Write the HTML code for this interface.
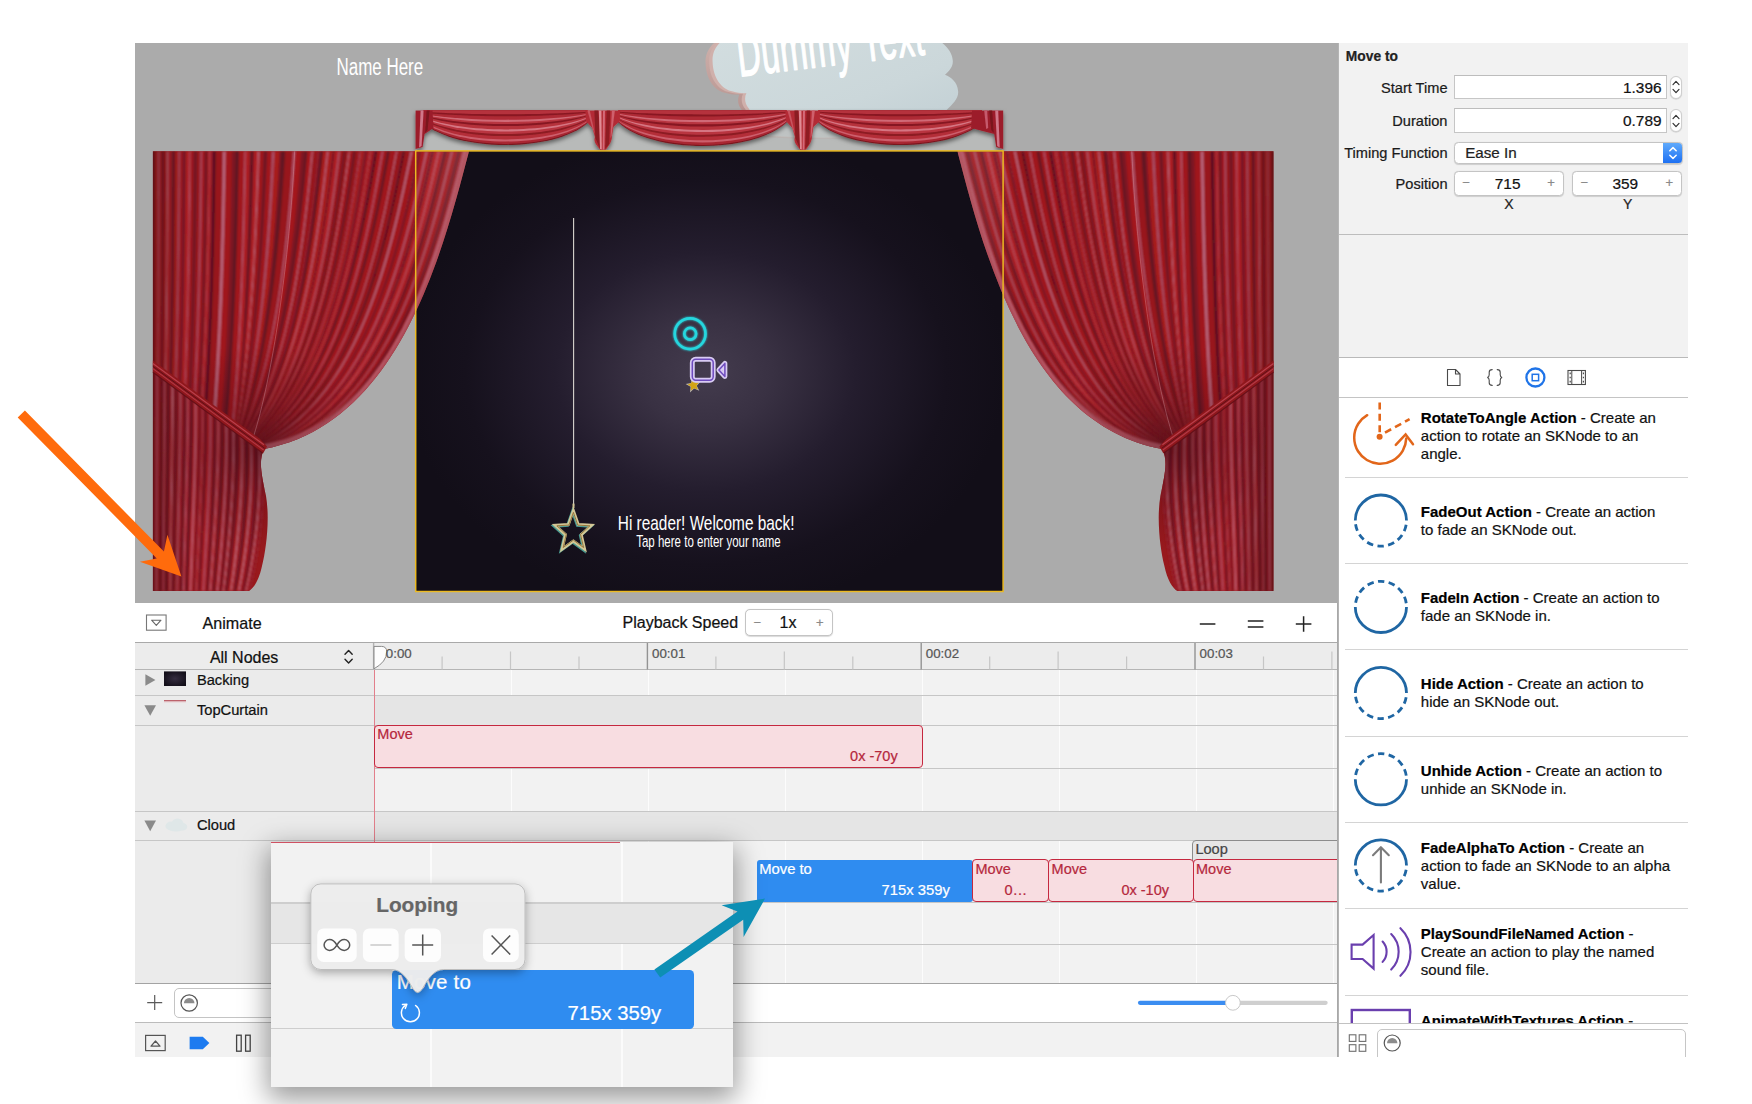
<!DOCTYPE html>
<html lang="en"><head><meta charset="utf-8"><title>Scene Editor</title>
<style>
html,body{margin:0;padding:0;background:#fff;}
body{width:1752px;height:1104px;position:relative;overflow:hidden;font-family:"Liberation Sans",sans-serif;color:#111;-webkit-font-smoothing:antialiased;}
div,span,svg{position:absolute;box-sizing:border-box;}
span{white-space:pre;line-height:1;-webkit-text-stroke:.22px currentColor;}
.it{-webkit-text-stroke:.2px currentColor;}
#scene{left:135px;top:43px;width:1203px;height:560px;background:#ababab;overflow:hidden;}
#insp{left:1338px;top:43px;width:350px;height:314px;background:#f2f2f2;border-left:1px solid #b4b4b4;}
#lib{left:1338px;top:357px;width:350px;height:700px;background:#fff;border-left:1px solid #b4b4b4;border-top:1px solid #b9b9b9;overflow:hidden;}
#tl{left:135px;top:603px;width:1203px;height:454px;background:#f2f2f2;overflow:hidden;}
.lbl{font-size:14.6px;color:#1a1a1a;text-align:right;}
.fld{background:#fff;border:1px solid #c6c6c6;border-top-color:#bdbdbd;}
.val{font-size:15.4px;color:#111;}
.stp{background:#fff;border:1px solid #cfcfcf;border-radius:6px;box-shadow:0 .5px 1px rgba(0,0,0,.18);}
.rbox{background:#fff;border:1px solid #c4c4c4;border-radius:4.5px;box-shadow:0 .5px 1px rgba(0,0,0,.15);}
.pm{font-size:13px;color:#8a8a8a;}
.it{font-size:15px;line-height:18px;color:#111;white-space:normal;}
.it b{font-weight:bold;color:#000;}
.sep{height:1px;background:#d4d4d4;left:6px;right:0;}
.row{left:0;width:1203px;}
.rl{font-size:14.7px;color:#111;}
.clip{background:#f8dde1;border:1.3px solid #c5283f;border-radius:4px;}
.ct{font-size:14.5px;color:#b5283d;}
.hw{font-style:italic;color:#fff;transform-origin:0 50%;}
</style></head>
<body>
<div id="scene"><svg style="left:0;top:0" width="1203" height="560" viewBox="135 43 1203 560">
<defs>
<radialGradient id="bkg" gradientUnits="userSpaceOnUse" cx="706" cy="372" r="300" gradientTransform="translate(706 372) scale(1 .8) translate(-706 -372)">
<stop offset="0" stop-color="#443c4e"/><stop offset=".22" stop-color="#393143"/><stop offset=".5" stop-color="#241d2e"/><stop offset=".8" stop-color="#16111d"/><stop offset="1" stop-color="#120e18"/></radialGradient>
<filter id="soft" x="-5%" y="-5%" width="110%" height="110%"><feGaussianBlur stdDeviation=".95"/></filter>
<filter id="soft2" x="-5%" y="-5%" width="110%" height="110%"><feGaussianBlur stdDeviation=".4"/></filter>
<filter id="vsh" x="-5%" y="-20%" width="110%" height="160%"><feDropShadow dx="0" dy="2.5" stdDeviation="2.2" flood-color="#000" flood-opacity=".5"/></filter>
<filter id="glow" x="-50%" y="-50%" width="200%" height="200%"><feGaussianBlur stdDeviation="1.2" result="b"/><feMerge><feMergeNode in="b"/><feMergeNode in="SourceGraphic"/></feMerge></filter>
<linearGradient id="clx" x1="0" y1="0" x2="0" y2="1"><stop offset="0" stop-color="#cdb0ab"/><stop offset="1" stop-color="#b08a86"/></linearGradient>
<linearGradient id="cl" x1="0" y1="0" x2="1" y2="1"><stop offset="0" stop-color="#d2dddf"/><stop offset=".6" stop-color="#cbd7da"/><stop offset="1" stop-color="#c0ced3"/></linearGradient>
<linearGradient id="fadeL" gradientUnits="userSpaceOnUse" x1="152" y1="0" x2="470" y2="0"><stop offset="0" stop-color="#000" stop-opacity=".22"/><stop offset=".12" stop-color="#000" stop-opacity="0"/><stop offset=".8" stop-color="#fff" stop-opacity="0"/><stop offset="1" stop-color="#fff" stop-opacity=".12"/></linearGradient>
<radialGradient id="knot"><stop offset="0" stop-color="#2a0410" stop-opacity=".5"/><stop offset=".45" stop-color="#2a0410" stop-opacity=".2"/><stop offset="1" stop-color="#2a0410" stop-opacity="0"/></radialGradient>
<clipPath id="ccl"><path id="cbody" d="M152.9 151.2 L469 151.2 C443 250 400 424 264 449 C258 462 262 476 266 496 C270 520 266 550 262 566 C259 580 254 588 249 591 L152.9 591 Z"/></clipPath>
</defs>
<rect x="415.5" y="150.6" width="587.7" height="441" fill="url(#bkg)"/>
<g>
<path d="M723 40 C715 46 712 54 712.6 62 C713 78 722 90 733 91.5 C738 93 743 93.5 746.4 93 C744 98 745 104 748.5 108 C751 112 754 118 756 122 L758 134 C800 140 900 138 935 128 C945 122 947 114 946.6 110 C953 104 959 98 958.1 90.9 C957.5 82 951 77 945 74.7 C950 70 953.5 66 952.7 60 C952 52 946 45 938 40 Z" transform="translate(-7 1.4)" fill="url(#clx)"/>
<path d="M723 40 C715 46 712 54 712.6 62 C713 78 722 90 733 91.5 C738 93 743 93.5 746.4 93 C744 98 745 104 748.5 108 C751 112 754 118 756 122 L758 134 C800 140 900 138 935 128 C945 122 947 114 946.6 110 C953 104 959 98 958.1 90.9 C957.5 82 951 77 945 74.7 C950 70 953.5 66 952.7 60 C952 52 946 45 938 40 Z" transform="translate(-3.4 .7)" fill="#d0b0ab"/>
<path d="M723 40 C715 46 712 54 712.6 62 C713 78 722 90 733 91.5 C738 93 743 93.5 746.4 93 C744 98 745 104 748.5 108 C751 112 754 118 756 122 L758 134 C800 140 900 138 935 128 C945 122 947 114 946.6 110 C953 104 959 98 958.1 90.9 C957.5 82 951 77 945 74.7 C950 70 953.5 66 952.7 60 C952 52 946 45 938 40 Z" fill="url(#cl)"/>
</g>
<text transform="translate(739.4 76.4) rotate(-6.7) scale(.525 1)" font-family="Liberation Sans, sans-serif" font-size="62" fill="#fff" stroke="#fff" stroke-width="1.5" stroke-linejoin="round" letter-spacing="1.5">Dummy Text</text>
<text transform="translate(336.5 75.4) scale(.684 1)" font-family="Liberation Sans, sans-serif" font-size="24.8" fill="#fff">Name Here</text>
<rect x="415.6" y="110.5" width="587.6" height="40.2" fill="#bcbebd" opacity=".8"/>
<g filter="url(#soft2)"><g filter="url(#vsh)"><path d="M423.0 110.5 L423.0 122.5 C456.0 152.5 555.0 152.5 588.0 122.5 L588.0 110.5 Z" fill="#7a171f"/><path d="M423.0 110.5 L423.0 122.1 C456.4 151.2 554.6 151.2 588.0 122.1 L588.0 110.5 Z" fill="#a92833"/><path d="M423.0 110.5 L423.0 121.3 C457.3 148.3 553.7 148.3 588.0 121.3 L588.0 110.5 Z" fill="#cc5f6d"/><path d="M423.0 110.5 L423.0 120.6 C458.1 145.8 552.9 145.8 588.0 120.6 L588.0 110.5 Z" fill="#b42d38"/><path d="M423.0 110.5 L423.0 119.4 C459.4 141.6 551.6 141.6 588.0 119.4 L588.0 110.5 Z" fill="#8c1b24"/><path d="M423.0 110.5 L423.0 118.7 C460.2 139.1 550.8 139.1 588.0 118.7 L588.0 110.5 Z" fill="#b93541"/><path d="M423.0 110.5 L423.0 117.8 C461.1 136.1 549.9 136.1 588.0 117.8 L588.0 110.5 Z" fill="#d57683"/><path d="M423.0 110.5 L423.0 117.1 C461.9 133.6 549.1 133.6 588.0 117.1 L588.0 110.5 Z" fill="#b6303b"/><path d="M423.0 110.5 L423.0 115.9 C463.3 129.4 547.7 129.4 588.0 115.9 L588.0 110.5 Z" fill="#861922"/><path d="M423.0 110.5 L423.0 115.2 C464.1 126.9 546.9 126.9 588.0 115.2 L588.0 110.5 Z" fill="#b8343f"/><path d="M423.0 110.5 L423.0 114.5 C464.8 124.4 546.2 124.4 588.0 114.5 L588.0 110.5 Z" fill="#d06a77"/><path d="M423.0 110.5 L423.0 113.7 C465.6 121.8 545.4 121.8 588.0 113.7 L588.0 110.5 Z" fill="#ae2a35"/><path d="M423.0 110.5 L423.0 112.5 C467.0 117.6 544.0 117.6 588.0 112.5 L588.0 110.5 Z" fill="#891922"/><path d="M423.0 110.5 L423.0 111.8 C467.7 115.1 543.3 115.1 588.0 111.8 L588.0 110.5 Z" fill="#b5323d"/><path d="M618.5 110.5 L618.5 122.5 C652.1 153.8 752.9 153.8 786.5 122.5 L786.5 110.5 Z" fill="#7a171f"/><path d="M618.5 110.5 L618.5 122.1 C652.5 152.5 752.5 152.5 786.5 122.1 L786.5 110.5 Z" fill="#a92833"/><path d="M618.5 110.5 L618.5 121.3 C653.4 149.5 751.6 149.5 786.5 121.3 L786.5 110.5 Z" fill="#cc5f6d"/><path d="M618.5 110.5 L618.5 120.6 C654.3 146.9 750.7 146.9 786.5 120.6 L786.5 110.5 Z" fill="#b42d38"/><path d="M618.5 110.5 L618.5 119.4 C655.6 142.6 749.4 142.6 786.5 119.4 L786.5 110.5 Z" fill="#8c1b24"/><path d="M618.5 110.5 L618.5 118.7 C656.4 140.0 748.6 140.0 786.5 118.7 L786.5 110.5 Z" fill="#b93541"/><path d="M618.5 110.5 L618.5 117.8 C657.3 136.9 747.7 136.9 786.5 117.8 L786.5 110.5 Z" fill="#d57683"/><path d="M618.5 110.5 L618.5 117.1 C658.1 134.3 746.9 134.3 786.5 117.1 L786.5 110.5 Z" fill="#b6303b"/><path d="M618.5 110.5 L618.5 115.9 C659.5 130.0 745.5 130.0 786.5 115.9 L786.5 110.5 Z" fill="#861922"/><path d="M618.5 110.5 L618.5 115.2 C660.3 127.4 744.7 127.4 786.5 115.2 L786.5 110.5 Z" fill="#b8343f"/><path d="M618.5 110.5 L618.5 114.5 C661.1 124.8 743.9 124.8 786.5 114.5 L786.5 110.5 Z" fill="#d06a77"/><path d="M618.5 110.5 L618.5 113.7 C661.9 122.2 743.1 122.2 786.5 113.7 L786.5 110.5 Z" fill="#ae2a35"/><path d="M618.5 110.5 L618.5 112.5 C663.3 117.9 741.7 117.9 786.5 112.5 L786.5 110.5 Z" fill="#891922"/><path d="M618.5 110.5 L618.5 111.8 C664.1 115.3 740.9 115.3 786.5 111.8 L786.5 110.5 Z" fill="#b5323d"/><path d="M818.5 110.5 L818.5 122.5 C851.2 152.5 949.3 152.5 982.0 122.5 L982.0 110.5 Z" fill="#7a171f"/><path d="M818.5 110.5 L818.5 122.1 C851.6 151.2 948.9 151.2 982.0 122.1 L982.0 110.5 Z" fill="#a92833"/><path d="M818.5 110.5 L818.5 121.3 C852.5 148.3 948.0 148.3 982.0 121.3 L982.0 110.5 Z" fill="#cc5f6d"/><path d="M818.5 110.5 L818.5 120.6 C853.3 145.8 947.2 145.8 982.0 120.6 L982.0 110.5 Z" fill="#b42d38"/><path d="M818.5 110.5 L818.5 119.4 C854.6 141.6 945.9 141.6 982.0 119.4 L982.0 110.5 Z" fill="#8c1b24"/><path d="M818.5 110.5 L818.5 118.7 C855.4 139.1 945.1 139.1 982.0 118.7 L982.0 110.5 Z" fill="#b93541"/><path d="M818.5 110.5 L818.5 117.8 C856.3 136.1 944.2 136.1 982.0 117.8 L982.0 110.5 Z" fill="#d57683"/><path d="M818.5 110.5 L818.5 117.1 C857.1 133.6 943.4 133.6 982.0 117.1 L982.0 110.5 Z" fill="#b6303b"/><path d="M818.5 110.5 L818.5 115.9 C858.4 129.4 942.1 129.4 982.0 115.9 L982.0 110.5 Z" fill="#861922"/><path d="M818.5 110.5 L818.5 115.2 C859.2 126.9 941.3 126.9 982.0 115.2 L982.0 110.5 Z" fill="#b8343f"/><path d="M818.5 110.5 L818.5 114.5 C860.0 124.4 940.5 124.4 982.0 114.5 L982.0 110.5 Z" fill="#d06a77"/><path d="M818.5 110.5 L818.5 113.7 C860.7 121.8 939.8 121.8 982.0 113.7 L982.0 110.5 Z" fill="#ae2a35"/><path d="M818.5 110.5 L818.5 112.5 C862.1 117.6 938.4 117.6 982.0 112.5 L982.0 110.5 Z" fill="#891922"/><path d="M818.5 110.5 L818.5 111.8 C862.8 115.1 937.7 115.1 982.0 111.8 L982.0 110.5 Z" fill="#b5323d"/><path d="M415.6 110.5 L432.5 110.5 L433.5 128 L424.6 134 L422.6 147 L415.6 149 Z" fill="#9c1f2c"/><path d="M420.6 110.5 L423.6 110.5 L421.6 146 L419.1 147.5 Z" fill="#d07789"/><path d="M426.6 110.5 L429.6 110.5 L427.6 130 L425.1 133 Z" fill="#7a141f"/><path d="M1003.2 110.5 L972 110.5 L971 128 L994.2 134 L996.2 147 L1003.2 149 Z" fill="#9c1f2c"/><path d="M998.2 110.5 L995.2 110.5 L997.2 146 L999.7 147.5 Z" fill="#d07789"/><path d="M992.2 110.5 L989.2 110.5 L991.2 130 L993.7 133 Z" fill="#7a141f"/><path d="M984.2 110.5 L987.2 110.5 L988.2 128 L986.2 129 Z" fill="#c65a6d"/><path d="M585.4 110.5 L619.9 110.5 L619.9 121 L613.4 127 L611.9 137 C611.9 141 609.9 144 606.1 149.5 L600.6 150 L600.1 149.5 C594.4 143 593.9 141 594.9 137 L592.4 128 L585.9 121 Z" fill="#b32c35"/><path d="M594.4 110.5 L598.4 110.5 L600.1 149 L595.4 138 Z" fill="#8a1a22"/><path d="M598.8 110.5 L601.4 110.5 L601.8 149.6 L600.0 149 Z" fill="#e08a94"/><path d="M603.0 110.5 L605.0 110.5 L604.4 149.4 L602.6 149.8 Z" fill="#d46a78"/><path d="M606.6 110.5 L610.2 110.5 L609.1 144 L605.2 149 Z" fill="#8e1b23"/><path d="M611.9 110.5 L614.9 110.5 L611.5 136 L610.5 138 Z" fill="#cf5f6c"/><path d="M587.4 110.5 L589.8 110.5 L594.9 134 L592.4 128 Z" fill="#c95461"/><path d="M785.4 110.5 L819.9 110.5 L819.9 121 L813.4 127 L811.9 137 C811.9 141 809.9 144 806.1 149.5 L800.6 150 L800.1 149.5 C794.4 143 793.9 141 794.9 137 L792.4 128 L785.9 121 Z" fill="#b32c35"/><path d="M794.4 110.5 L798.4 110.5 L800.1 149 L795.4 138 Z" fill="#8a1a22"/><path d="M798.8 110.5 L801.4 110.5 L801.8 149.6 L800.0 149 Z" fill="#e08a94"/><path d="M803.0 110.5 L805.0 110.5 L804.4 149.4 L802.6 149.8 Z" fill="#d46a78"/><path d="M806.6 110.5 L810.2 110.5 L809.1 144 L805.2 149 Z" fill="#8e1b23"/><path d="M811.9 110.5 L814.9 110.5 L811.5 136 L810.5 138 Z" fill="#cf5f6c"/><path d="M787.4 110.5 L789.8 110.5 L794.9 134 L792.4 128 Z" fill="#c95461"/></g></g>
<g id="curL"><path d="M469 151.2 C443 250 400 424 264 449 C258 462 262 476 266 496 C270 520 266 550 262 566 C259 580 254 588 249 591 L152.9 591 L152.9 151.2 Z" fill="#98191d"/><g clip-path="url(#ccl)"><g filter="url(#soft)"><path d="M152.9 151.2 L152.9 159.5 L152.9 167.7 L152.9 176.0 L152.9 184.2 L152.9 192.5 L152.9 200.7 L152.9 209.0 L152.9 217.2 L152.9 225.5 L152.9 233.8 L152.9 242.1 L152.9 250.3 L152.9 258.6 L152.9 266.9 L152.9 275.2 L152.9 283.5 L152.9 291.9 L152.9 300.2 L152.9 308.6 L152.9 316.9 L152.9 325.3 L152.9 333.7 L152.9 342.1 L152.9 350.6 L152.9 359.0 L152.9 367.5 L154.6 368.8 L154.7 360.3 L154.7 351.8 L154.7 343.3 L154.7 334.8 L154.7 326.4 L154.7 317.9 L154.8 309.5 L154.8 301.1 L154.8 292.7 L154.8 284.3 L154.8 276.0 L154.8 267.6 L154.8 259.3 L154.8 250.9 L154.8 242.6 L154.9 234.3 L154.9 226.0 L154.9 217.6 L154.9 209.3 L154.9 201.0 L154.9 192.7 L154.9 184.4 L154.9 176.1 L154.9 167.8 L154.9 159.5 L154.9 151.2 Z" fill="#4c1120"/><path d="M154.3 151.2 L154.3 159.5 L154.3 167.8 L154.3 176.1 L154.3 184.4 L154.3 192.6 L154.3 200.9 L154.3 209.2 L154.3 217.5 L154.2 225.8 L154.2 234.1 L154.2 242.4 L154.2 250.7 L154.2 259.1 L154.2 267.4 L154.2 275.7 L154.2 284.1 L154.2 292.5 L154.2 300.8 L154.2 309.2 L154.2 317.6 L154.2 326.0 L154.1 334.5 L154.1 342.9 L154.1 351.4 L154.1 359.9 L154.1 368.4 L157.9 371.2 L157.9 362.6 L158.0 354.0 L158.0 345.4 L158.1 336.9 L158.1 328.3 L158.2 319.8 L158.2 311.3 L158.2 302.8 L158.3 294.3 L158.3 285.8 L158.3 277.4 L158.4 268.9 L158.4 260.5 L158.4 252.0 L158.5 243.6 L158.5 235.2 L158.5 226.8 L158.5 218.4 L158.5 210.0 L158.6 201.6 L158.6 193.2 L158.6 184.8 L158.6 176.4 L158.6 168.0 L158.6 159.6 L158.6 151.2 Z" fill="#a81b1e"/><path d="M158.0 151.2 L158.0 159.6 L158.0 168.0 L158.0 176.4 L158.0 184.7 L157.9 193.1 L157.9 201.5 L157.9 209.9 L157.9 218.3 L157.9 226.7 L157.9 235.0 L157.8 243.4 L157.8 251.9 L157.8 260.3 L157.8 268.7 L157.7 277.1 L157.7 285.6 L157.7 294.0 L157.7 302.5 L157.6 311.0 L157.6 319.5 L157.5 328.0 L157.5 336.5 L157.5 345.1 L157.4 353.6 L157.4 362.2 L157.3 370.8 L158.7 371.8 L158.7 363.2 L158.8 354.6 L158.8 346.0 L158.9 337.4 L159.0 328.8 L159.0 320.3 L159.1 311.7 L159.1 303.2 L159.2 294.7 L159.2 286.2 L159.2 277.7 L159.3 269.2 L159.3 260.8 L159.3 252.3 L159.4 243.9 L159.4 235.4 L159.4 227.0 L159.4 218.6 L159.5 210.1 L159.5 201.7 L159.5 193.3 L159.5 184.9 L159.5 176.5 L159.5 168.0 L159.6 159.6 L159.6 151.2 Z" fill="#ad5a70"/><path d="M158.9 151.2 L158.9 159.6 L158.9 168.0 L158.9 176.4 L158.9 184.8 L158.9 193.2 L158.8 201.6 L158.8 210.0 L158.8 218.4 L158.8 226.9 L158.8 235.3 L158.7 243.7 L158.7 252.1 L158.7 260.6 L158.7 269.0 L158.6 277.5 L158.6 285.9 L158.6 294.4 L158.5 302.9 L158.5 311.4 L158.4 319.9 L158.4 328.5 L158.3 337.0 L158.3 345.6 L158.2 354.2 L158.2 362.8 L158.1 371.4 L161.0 373.6 L161.1 364.9 L161.2 356.2 L161.3 347.6 L161.4 338.9 L161.5 330.3 L161.6 321.6 L161.6 313.0 L161.7 304.4 L161.7 295.9 L161.8 287.3 L161.9 278.7 L161.9 270.2 L162.0 261.7 L162.0 253.1 L162.0 244.6 L162.1 236.1 L162.1 227.6 L162.1 219.1 L162.2 210.6 L162.2 202.1 L162.2 193.7 L162.3 185.2 L162.3 176.7 L162.3 168.2 L162.3 159.7 L162.3 151.2 Z" fill="#ad1f22"/><path d="M161.7 151.2 L161.7 159.7 L161.7 168.2 L161.7 176.6 L161.6 185.1 L161.6 193.6 L161.6 202.0 L161.6 210.5 L161.5 219.0 L161.5 227.5 L161.5 236.0 L161.4 244.5 L161.4 253.0 L161.3 261.5 L161.3 270.0 L161.3 278.5 L161.2 287.0 L161.2 295.6 L161.1 304.2 L161.0 312.7 L161.0 321.3 L160.9 329.9 L160.8 338.6 L160.8 347.2 L160.7 355.9 L160.6 364.5 L160.5 373.2 L161.7 374.1 L161.8 365.4 L161.9 356.7 L162.0 348.0 L162.1 339.3 L162.1 330.6 L162.2 322.0 L162.3 313.4 L162.4 304.8 L162.4 296.2 L162.5 287.6 L162.5 279.0 L162.6 270.5 L162.6 261.9 L162.7 253.4 L162.7 244.8 L162.8 236.3 L162.8 227.8 L162.8 219.3 L162.9 210.8 L162.9 202.2 L162.9 193.7 L163.0 185.2 L163.0 176.7 L163.0 168.2 L163.0 159.7 L163.1 151.2 Z" fill="#8e1d2c"/><path d="M162.4 151.2 L162.4 159.7 L162.4 168.2 L162.4 176.7 L162.3 185.2 L162.3 193.7 L162.3 202.2 L162.3 210.6 L162.2 219.1 L162.2 227.6 L162.2 236.1 L162.1 244.7 L162.1 253.2 L162.0 261.7 L162.0 270.2 L161.9 278.8 L161.9 287.3 L161.8 295.9 L161.8 304.5 L161.7 313.1 L161.6 321.7 L161.6 330.3 L161.5 339.0 L161.4 347.6 L161.3 356.3 L161.2 365.0 L161.1 373.7 L162.7 374.9 L162.8 366.1 L162.9 357.4 L163.0 348.7 L163.1 340.0 L163.2 331.3 L163.3 322.6 L163.4 313.9 L163.5 305.3 L163.5 296.7 L163.6 288.1 L163.7 279.5 L163.7 270.9 L163.8 262.3 L163.8 253.7 L163.9 245.2 L163.9 236.6 L164.0 228.1 L164.0 219.5 L164.1 211.0 L164.1 202.4 L164.1 193.9 L164.2 185.4 L164.2 176.8 L164.2 168.3 L164.2 159.7 L164.3 151.2 Z" fill="#561424"/><path d="M163.6 151.2 L163.6 159.7 L163.6 168.2 L163.6 176.8 L163.5 185.3 L163.5 193.8 L163.5 202.3 L163.4 210.9 L163.4 219.4 L163.4 227.9 L163.3 236.4 L163.3 245.0 L163.2 253.5 L163.2 262.1 L163.1 270.7 L163.1 279.2 L163.0 287.8 L163.0 296.4 L162.9 305.0 L162.8 313.6 L162.7 322.3 L162.7 330.9 L162.6 339.6 L162.5 348.3 L162.4 357.0 L162.3 365.7 L162.2 374.5 L165.7 377.2 L165.9 368.3 L166.0 359.5 L166.1 350.7 L166.3 341.9 L166.4 333.1 L166.5 324.3 L166.6 315.6 L166.7 306.9 L166.8 298.2 L166.9 289.5 L167.0 280.8 L167.1 272.1 L167.1 263.4 L167.2 254.8 L167.3 246.1 L167.3 237.5 L167.4 228.8 L167.4 220.2 L167.5 211.6 L167.5 202.9 L167.6 194.3 L167.6 185.7 L167.6 177.1 L167.7 168.5 L167.7 159.8 L167.7 151.2 Z" fill="#a4191c"/><path d="M167.1 151.2 L167.1 159.8 L167.1 168.4 L167.0 177.0 L167.0 185.6 L166.9 194.2 L166.9 202.9 L166.9 211.5 L166.8 220.1 L166.8 228.7 L166.7 237.3 L166.7 245.9 L166.6 254.6 L166.5 263.2 L166.5 271.9 L166.4 280.5 L166.3 289.2 L166.2 297.9 L166.1 306.6 L166.0 315.3 L165.9 324.0 L165.8 332.8 L165.7 341.5 L165.6 350.3 L165.4 359.1 L165.3 367.9 L165.2 376.8 L166.4 377.7 L166.6 368.8 L166.7 360.0 L166.9 351.1 L167.0 342.3 L167.1 333.5 L167.3 324.7 L167.4 316.0 L167.5 307.2 L167.6 298.5 L167.7 289.8 L167.8 281.1 L167.8 272.4 L167.9 263.7 L168.0 255.0 L168.1 246.3 L168.1 237.7 L168.2 229.0 L168.2 220.4 L168.3 211.7 L168.3 203.1 L168.4 194.4 L168.4 185.8 L168.5 177.1 L168.5 168.5 L168.5 159.8 L168.6 151.2 Z" fill="#bf768c"/><path d="M167.9 151.2 L167.9 159.8 L167.9 168.5 L167.8 177.1 L167.8 185.7 L167.8 194.3 L167.7 203.0 L167.7 211.6 L167.6 220.2 L167.6 228.9 L167.5 237.5 L167.5 246.2 L167.4 254.8 L167.3 263.5 L167.2 272.2 L167.2 280.8 L167.1 289.5 L167.0 298.2 L166.9 307.0 L166.8 315.7 L166.7 324.4 L166.6 333.2 L166.4 342.0 L166.3 350.8 L166.2 359.6 L166.0 368.4 L165.9 377.3 L169.1 379.7 L169.3 370.7 L169.4 361.8 L169.6 352.9 L169.8 344.0 L169.9 335.1 L170.1 326.3 L170.2 317.4 L170.3 308.6 L170.5 299.8 L170.6 291.0 L170.7 282.2 L170.8 273.4 L170.9 264.7 L171.0 255.9 L171.0 247.2 L171.1 238.4 L171.2 229.7 L171.2 221.0 L171.3 212.2 L171.4 203.5 L171.4 194.8 L171.5 186.1 L171.5 177.4 L171.6 168.6 L171.6 159.9 L171.6 151.2 Z" fill="#ad1f22"/><path d="M171.0 151.2 L171.0 159.9 L170.9 168.6 L170.9 177.3 L170.8 186.0 L170.8 194.7 L170.7 203.4 L170.7 212.1 L170.6 220.8 L170.6 229.6 L170.5 238.3 L170.4 247.0 L170.3 255.7 L170.3 264.5 L170.2 273.2 L170.1 282.0 L170.0 290.8 L169.9 299.5 L169.8 308.3 L169.6 317.1 L169.5 326.0 L169.4 334.8 L169.2 343.7 L169.1 352.5 L168.9 361.4 L168.7 370.4 L168.5 379.3 L170.7 380.9 L170.9 371.9 L171.1 362.9 L171.3 354.0 L171.5 345.0 L171.6 336.1 L171.8 327.2 L171.9 318.3 L172.1 309.5 L172.2 300.6 L172.3 291.8 L172.5 282.9 L172.6 274.1 L172.7 265.3 L172.8 256.5 L172.8 247.7 L172.9 238.9 L173.0 230.1 L173.1 221.3 L173.1 212.6 L173.2 203.8 L173.3 195.0 L173.3 186.3 L173.4 177.5 L173.4 168.7 L173.5 160.0 L173.5 151.2 Z" fill="#8e1d2c"/><path d="M172.9 151.2 L172.8 160.0 L172.8 168.7 L172.7 177.5 L172.7 186.2 L172.6 195.0 L172.6 203.7 L172.5 212.5 L172.5 221.2 L172.4 230.0 L172.3 238.7 L172.2 247.5 L172.2 256.3 L172.1 265.1 L172.0 273.9 L171.9 282.7 L171.7 291.5 L171.6 300.3 L171.5 309.2 L171.4 318.0 L171.2 326.9 L171.1 335.8 L170.9 344.7 L170.7 353.6 L170.5 362.6 L170.3 371.5 L170.1 380.5 L172.1 382.0 L172.4 373.0 L172.6 364.0 L172.8 355.0 L173.0 346.0 L173.2 337.0 L173.3 328.1 L173.5 319.1 L173.7 310.2 L173.8 301.3 L173.9 292.4 L174.1 283.6 L174.2 274.7 L174.3 265.8 L174.4 257.0 L174.5 248.2 L174.6 239.3 L174.7 230.5 L174.7 221.7 L174.8 212.9 L174.9 204.1 L174.9 195.2 L175.0 186.4 L175.1 177.6 L175.1 168.8 L175.2 160.0 L175.2 151.2 Z" fill="#561424"/><path d="M174.6 151.2 L174.5 160.0 L174.5 168.8 L174.4 177.6 L174.4 186.4 L174.3 195.2 L174.3 204.0 L174.2 212.8 L174.1 221.6 L174.0 230.4 L174.0 239.2 L173.9 248.0 L173.8 256.8 L173.7 265.6 L173.6 274.5 L173.5 283.3 L173.3 292.2 L173.2 301.0 L173.1 309.9 L172.9 318.8 L172.8 327.7 L172.6 336.7 L172.4 345.6 L172.2 354.6 L172.0 363.6 L171.8 372.6 L171.6 381.6 L175.6 384.6 L175.8 375.5 L176.1 366.3 L176.3 357.2 L176.6 348.1 L176.8 339.1 L177.0 330.0 L177.2 321.0 L177.3 312.0 L177.5 303.0 L177.7 294.0 L177.8 285.0 L178.0 276.1 L178.1 267.1 L178.2 258.2 L178.3 249.2 L178.4 240.3 L178.5 231.4 L178.6 222.5 L178.7 213.6 L178.8 204.6 L178.9 195.7 L178.9 186.8 L179.0 177.9 L179.1 169.0 L179.1 160.1 L179.2 151.2 Z" fill="#a81b1e"/><path d="M178.5 151.2 L178.5 160.1 L178.4 169.0 L178.4 177.9 L178.3 186.8 L178.2 195.7 L178.2 204.6 L178.1 213.4 L178.0 222.3 L177.9 231.2 L177.8 240.2 L177.7 249.1 L177.6 258.0 L177.5 266.9 L177.4 275.8 L177.2 284.8 L177.1 293.8 L176.9 302.7 L176.8 311.7 L176.6 320.7 L176.4 329.7 L176.2 338.8 L176.0 347.8 L175.8 356.9 L175.5 366.0 L175.3 375.1 L175.0 384.2 L176.7 385.5 L177.0 376.3 L177.3 367.1 L177.5 358.0 L177.8 348.9 L178.0 339.8 L178.2 330.7 L178.4 321.6 L178.6 312.6 L178.8 303.6 L178.9 294.5 L179.1 285.5 L179.2 276.5 L179.4 267.5 L179.5 258.6 L179.6 249.6 L179.7 240.6 L179.8 231.7 L179.9 222.7 L180.0 213.8 L180.1 204.8 L180.2 195.9 L180.3 187.0 L180.3 178.0 L180.4 169.1 L180.4 160.1 L180.5 151.2 Z" fill="#a8546e"/><path d="M179.9 151.2 L179.8 160.1 L179.8 169.1 L179.7 178.0 L179.6 186.9 L179.6 195.8 L179.5 204.8 L179.4 213.7 L179.3 222.6 L179.2 231.5 L179.1 240.5 L179.0 249.4 L178.9 258.4 L178.8 267.3 L178.6 276.3 L178.5 285.3 L178.3 294.3 L178.2 303.3 L178.0 312.3 L177.8 321.3 L177.6 330.4 L177.4 339.5 L177.2 348.5 L177.0 357.6 L176.7 366.8 L176.5 375.9 L176.2 385.1 L179.1 387.3 L179.4 378.0 L179.7 368.8 L180.0 359.6 L180.2 350.4 L180.5 341.2 L180.7 332.1 L180.9 322.9 L181.1 313.8 L181.3 304.7 L181.5 295.6 L181.7 286.6 L181.9 277.5 L182.0 268.4 L182.1 259.4 L182.3 250.4 L182.4 241.3 L182.5 232.3 L182.6 223.3 L182.7 214.3 L182.8 205.3 L182.9 196.2 L183.0 187.2 L183.1 178.2 L183.1 169.2 L183.2 160.2 L183.2 151.2 Z" fill="#a4191c"/><path d="M182.6 151.2 L182.6 160.2 L182.5 169.2 L182.4 178.2 L182.3 187.2 L182.3 196.2 L182.2 205.2 L182.1 214.2 L182.0 223.2 L181.9 232.2 L181.8 241.2 L181.7 250.2 L181.5 259.2 L181.4 268.2 L181.3 277.3 L181.1 286.3 L180.9 295.4 L180.8 304.5 L180.6 313.5 L180.4 322.6 L180.1 331.8 L179.9 340.9 L179.7 350.0 L179.4 359.2 L179.1 368.4 L178.9 377.6 L178.5 386.9 L180.3 388.2 L180.6 378.9 L180.9 369.6 L181.2 360.4 L181.5 351.2 L181.8 342.0 L182.0 332.8 L182.2 323.6 L182.5 314.5 L182.7 305.3 L182.9 296.2 L183.0 287.1 L183.2 278.0 L183.4 268.9 L183.5 259.8 L183.7 250.7 L183.8 241.7 L183.9 232.6 L184.0 223.6 L184.1 214.5 L184.2 205.5 L184.3 196.4 L184.4 187.4 L184.5 178.3 L184.5 169.3 L184.6 160.2 L184.7 151.2 Z" fill="#86182a"/><path d="M184.0 151.2 L184.0 160.2 L183.9 169.3 L183.8 178.3 L183.8 187.3 L183.7 196.3 L183.6 205.4 L183.5 214.4 L183.4 223.4 L183.3 232.5 L183.2 241.5 L183.0 250.6 L182.9 259.6 L182.8 268.7 L182.6 277.8 L182.4 286.8 L182.3 295.9 L182.1 305.1 L181.9 314.2 L181.7 323.3 L181.4 332.5 L181.2 341.6 L180.9 350.8 L180.7 360.0 L180.4 369.3 L180.1 378.5 L179.8 387.8 L181.6 389.1 L181.9 379.8 L182.2 370.5 L182.5 361.2 L182.8 352.0 L183.1 342.7 L183.3 333.5 L183.6 324.3 L183.8 315.1 L184.0 305.9 L184.2 296.8 L184.4 287.6 L184.6 278.5 L184.7 269.4 L184.9 260.2 L185.0 251.1 L185.2 242.0 L185.3 232.9 L185.4 223.8 L185.5 214.8 L185.6 205.7 L185.7 196.6 L185.8 187.5 L185.9 178.4 L186.0 169.4 L186.0 160.3 L186.1 151.2 Z" fill="#641828"/><path d="M185.5 151.2 L185.4 160.3 L185.3 169.3 L185.3 178.4 L185.2 187.5 L185.1 196.5 L185.0 205.6 L184.9 214.7 L184.8 223.7 L184.7 232.8 L184.6 241.9 L184.4 251.0 L184.3 260.1 L184.1 269.2 L184.0 278.3 L183.8 287.4 L183.6 296.5 L183.4 305.7 L183.2 314.8 L183.0 324.0 L182.8 333.2 L182.5 342.4 L182.2 351.6 L182.0 360.9 L181.7 370.1 L181.3 379.4 L181.0 388.7 L185.0 391.7 L185.4 382.3 L185.7 372.9 L186.1 363.5 L186.4 354.2 L186.7 344.8 L187.0 335.5 L187.3 326.2 L187.5 316.9 L187.8 307.6 L188.0 298.4 L188.2 289.1 L188.4 279.9 L188.6 270.6 L188.7 261.4 L188.9 252.2 L189.1 243.0 L189.2 233.8 L189.3 224.6 L189.4 215.5 L189.6 206.3 L189.7 197.1 L189.8 187.9 L189.9 178.7 L189.9 169.6 L190.0 160.4 L190.1 151.2 Z" fill="#ad1f22"/><path d="M189.5 151.2 L189.4 160.4 L189.3 169.5 L189.2 178.7 L189.1 187.9 L189.0 197.0 L188.9 206.2 L188.8 215.3 L188.7 224.5 L188.6 233.7 L188.4 242.9 L188.3 252.1 L188.1 261.2 L188.0 270.4 L187.8 279.7 L187.6 288.9 L187.4 298.1 L187.2 307.4 L186.9 316.6 L186.7 325.9 L186.4 335.2 L186.1 344.5 L185.8 353.8 L185.5 363.2 L185.2 372.5 L184.8 381.9 L184.5 391.3 L185.8 392.3 L186.2 382.9 L186.6 373.5 L186.9 364.1 L187.2 354.7 L187.6 345.3 L187.8 336.0 L188.1 326.6 L188.4 317.3 L188.6 308.0 L188.9 298.7 L189.1 289.5 L189.3 280.2 L189.5 271.0 L189.6 261.7 L189.8 252.5 L190.0 243.3 L190.1 234.0 L190.2 224.8 L190.4 215.6 L190.5 206.4 L190.6 197.2 L190.7 188.0 L190.8 178.8 L190.9 169.6 L190.9 160.4 L191.0 151.2 Z" fill="#b25e78"/><path d="M190.4 151.2 L190.3 160.4 L190.2 169.6 L190.1 178.8 L190.1 188.0 L190.0 197.1 L189.9 206.3 L189.7 215.5 L189.6 224.7 L189.5 233.9 L189.3 243.1 L189.2 252.3 L189.0 261.5 L188.9 270.7 L188.7 280.0 L188.5 289.2 L188.3 298.5 L188.0 307.7 L187.8 317.0 L187.5 326.3 L187.3 335.6 L187.0 345.0 L186.7 354.3 L186.3 363.7 L186.0 373.1 L185.6 382.5 L185.3 391.9 L188.4 394.3 L188.8 384.8 L189.2 375.3 L189.6 365.8 L189.9 356.3 L190.3 346.9 L190.6 337.5 L190.9 328.0 L191.2 318.7 L191.4 309.3 L191.7 299.9 L191.9 290.6 L192.1 281.2 L192.3 271.9 L192.5 262.6 L192.7 253.3 L192.9 244.0 L193.0 234.7 L193.2 225.4 L193.3 216.1 L193.4 206.9 L193.5 197.6 L193.7 188.3 L193.8 179.0 L193.8 169.8 L193.9 160.5 L194.0 151.2 Z" fill="#a0171a"/><path d="M193.4 151.2 L193.3 160.5 L193.2 169.7 L193.1 179.0 L193.0 188.2 L192.9 197.5 L192.8 206.8 L192.7 216.0 L192.6 225.3 L192.4 234.6 L192.3 243.8 L192.1 253.1 L191.9 262.4 L191.7 271.7 L191.5 281.0 L191.3 290.3 L191.1 299.7 L190.8 309.0 L190.6 318.4 L190.3 327.7 L190.0 337.1 L189.7 346.5 L189.4 356.0 L189.0 365.4 L188.7 374.9 L188.3 384.4 L187.8 393.9 L190.1 395.6 L190.6 386.0 L191.0 376.5 L191.4 366.9 L191.8 357.4 L192.1 347.9 L192.5 338.5 L192.8 329.0 L193.1 319.6 L193.3 310.1 L193.6 300.7 L193.8 291.3 L194.1 281.9 L194.3 272.6 L194.5 263.2 L194.7 253.9 L194.8 244.5 L195.0 235.2 L195.2 225.8 L195.3 216.5 L195.4 207.2 L195.5 197.8 L195.7 188.5 L195.8 179.2 L195.9 169.9 L196.0 160.5 L196.0 151.2 Z" fill="#7c1524"/><path d="M195.4 151.2 L195.3 160.5 L195.2 169.8 L195.1 179.1 L195.0 188.5 L194.9 197.8 L194.8 207.1 L194.7 216.4 L194.5 225.7 L194.4 235.0 L194.2 244.3 L194.1 253.7 L193.9 263.0 L193.7 272.4 L193.5 281.7 L193.2 291.1 L193.0 300.5 L192.7 309.9 L192.5 319.3 L192.2 328.7 L191.9 338.1 L191.5 347.6 L191.2 357.1 L190.8 366.6 L190.4 376.1 L190.0 385.6 L189.6 395.2 L191.4 396.5 L191.8 386.9 L192.2 377.3 L192.7 367.8 L193.0 358.2 L193.4 348.7 L193.7 339.2 L194.1 329.7 L194.4 320.2 L194.7 310.7 L194.9 301.3 L195.2 291.9 L195.4 282.4 L195.6 273.0 L195.8 263.6 L196.0 254.2 L196.2 244.9 L196.4 235.5 L196.5 226.1 L196.7 216.7 L196.8 207.4 L196.9 198.0 L197.1 188.7 L197.2 179.3 L197.3 169.9 L197.4 160.6 L197.5 151.2 Z" fill="#641828"/><path d="M196.8 151.2 L196.7 160.6 L196.6 169.9 L196.5 179.2 L196.4 188.6 L196.3 197.9 L196.2 207.3 L196.1 216.6 L195.9 226.0 L195.8 235.3 L195.6 244.7 L195.4 254.1 L195.2 263.4 L195.0 272.8 L194.8 282.2 L194.6 291.6 L194.3 301.0 L194.1 310.5 L193.8 319.9 L193.5 329.4 L193.2 338.9 L192.8 348.3 L192.5 357.9 L192.1 367.4 L191.7 376.9 L191.3 386.5 L190.8 396.1 L194.6 398.9 L195.0 389.2 L195.5 379.5 L196.0 369.9 L196.4 360.2 L196.8 350.6 L197.1 341.0 L197.5 331.4 L197.8 321.9 L198.1 312.3 L198.4 302.8 L198.7 293.2 L198.9 283.7 L199.2 274.2 L199.4 264.7 L199.6 255.3 L199.8 245.8 L200.0 236.3 L200.2 226.8 L200.3 217.4 L200.5 207.9 L200.6 198.5 L200.7 189.0 L200.8 179.6 L201.0 170.1 L201.1 160.7 L201.2 151.2 Z" fill="#98151a"/><path d="M200.5 151.2 L200.4 160.6 L200.3 170.1 L200.2 179.5 L200.1 189.0 L200.0 198.4 L199.8 207.8 L199.7 217.3 L199.5 226.7 L199.4 236.2 L199.2 245.6 L199.0 255.1 L198.8 264.5 L198.6 274.0 L198.3 283.5 L198.1 293.0 L197.8 302.5 L197.5 312.0 L197.2 321.6 L196.9 331.1 L196.6 340.7 L196.2 350.3 L195.8 359.9 L195.4 369.5 L195.0 379.2 L194.5 388.8 L194.0 398.5 L195.7 399.8 L196.2 390.1 L196.7 380.3 L197.2 370.6 L197.6 361.0 L198.0 351.3 L198.4 341.7 L198.7 332.1 L199.1 322.5 L199.4 312.9 L199.7 303.3 L200.0 293.7 L200.2 284.2 L200.5 274.7 L200.7 265.1 L200.9 255.6 L201.1 246.1 L201.3 236.6 L201.5 227.1 L201.6 217.6 L201.8 208.1 L201.9 198.6 L202.1 189.2 L202.2 179.7 L202.3 170.2 L202.4 160.7 L202.5 151.2 Z" fill="#a8546e"/><path d="M201.9 151.2 L201.8 160.7 L201.7 170.2 L201.6 179.6 L201.4 189.1 L201.3 198.6 L201.2 208.0 L201.0 217.5 L200.9 227.0 L200.7 236.5 L200.5 246.0 L200.3 255.4 L200.1 264.9 L199.9 274.5 L199.6 284.0 L199.4 293.5 L199.1 303.1 L198.8 312.6 L198.5 322.2 L198.1 331.8 L197.8 341.4 L197.4 351.0 L197.0 360.6 L196.6 370.3 L196.1 380.0 L195.7 389.7 L195.2 399.4 L198.0 401.5 L198.5 391.7 L199.0 381.9 L199.5 372.2 L200.0 362.4 L200.4 352.7 L200.8 343.0 L201.2 333.3 L201.5 323.7 L201.9 314.0 L202.2 304.4 L202.5 294.7 L202.8 285.1 L203.0 275.5 L203.3 265.9 L203.5 256.3 L203.7 246.8 L203.9 237.2 L204.1 227.6 L204.2 218.1 L204.4 208.5 L204.5 199.0 L204.7 189.4 L204.8 179.9 L204.9 170.3 L205.0 160.8 L205.2 151.2 Z" fill="#a4191c"/><path d="M204.5 151.2 L204.4 160.7 L204.3 170.3 L204.2 179.8 L204.1 189.4 L203.9 198.9 L203.8 208.4 L203.6 218.0 L203.5 227.5 L203.3 237.1 L203.1 246.6 L202.9 256.2 L202.7 265.7 L202.4 275.3 L202.2 284.9 L201.9 294.5 L201.6 304.1 L201.3 313.7 L200.9 323.4 L200.6 333.0 L200.2 342.7 L199.8 352.4 L199.4 362.1 L199.0 371.8 L198.5 381.6 L198.0 391.3 L197.5 401.1 L199.4 402.6 L199.9 392.7 L200.4 382.9 L200.9 373.1 L201.4 363.3 L201.8 353.5 L202.2 343.8 L202.6 334.1 L203.0 324.4 L203.3 314.7 L203.7 305.0 L204.0 295.3 L204.3 285.7 L204.5 276.0 L204.8 266.4 L205.0 256.8 L205.2 247.2 L205.4 237.6 L205.6 228.0 L205.8 218.4 L205.9 208.8 L206.1 199.2 L206.2 189.6 L206.4 180.0 L206.5 170.4 L206.6 160.8 L206.7 151.2 Z" fill="#7c1524"/><path d="M206.1 151.2 L206.0 160.8 L205.9 170.4 L205.7 179.9 L205.6 189.5 L205.5 199.1 L205.3 208.7 L205.2 218.2 L205.0 227.8 L204.8 237.4 L204.6 247.0 L204.4 256.6 L204.2 266.2 L203.9 275.8 L203.7 285.4 L203.4 295.1 L203.1 304.7 L202.8 314.4 L202.4 324.1 L202.0 333.8 L201.7 343.5 L201.3 353.2 L200.8 362.9 L200.4 372.7 L199.9 382.5 L199.4 392.3 L198.8 402.1 L200.2 403.2 L200.8 393.4 L201.3 383.5 L201.8 373.7 L202.3 363.9 L202.8 354.1 L203.2 344.3 L203.6 334.6 L204.0 324.8 L204.3 315.1 L204.6 305.4 L205.0 295.7 L205.2 286.0 L205.5 276.4 L205.8 266.7 L206.0 257.1 L206.2 247.4 L206.4 237.8 L206.6 228.2 L206.8 218.5 L207.0 208.9 L207.1 199.3 L207.3 189.7 L207.4 180.1 L207.5 170.4 L207.6 160.8 L207.8 151.2 Z" fill="#561424"/><path d="M207.1 151.2 L207.0 160.8 L206.9 170.4 L206.8 180.0 L206.6 189.6 L206.5 199.2 L206.3 208.8 L206.2 218.4 L206.0 228.0 L205.8 237.6 L205.6 247.3 L205.4 256.9 L205.2 266.5 L204.9 276.2 L204.6 285.8 L204.4 295.5 L204.0 305.1 L203.7 314.8 L203.4 324.5 L203.0 334.3 L202.6 344.0 L202.2 353.7 L201.7 363.5 L201.3 373.3 L200.8 383.1 L200.3 393.0 L199.7 402.8 L202.0 404.6 L202.6 394.7 L203.2 384.8 L203.7 374.9 L204.2 365.0 L204.7 355.2 L205.1 345.3 L205.5 335.5 L205.9 325.8 L206.3 316.0 L206.6 306.2 L206.9 296.5 L207.2 286.8 L207.5 277.0 L207.8 267.3 L208.0 257.6 L208.3 247.9 L208.5 238.3 L208.7 228.6 L208.9 218.9 L209.0 209.2 L209.2 199.6 L209.3 189.9 L209.5 180.2 L209.6 170.5 L209.7 160.9 L209.8 151.2 Z" fill="#a0171a"/><path d="M209.2 151.2 L209.1 160.9 L209.0 170.5 L208.8 180.2 L208.7 189.8 L208.6 199.5 L208.4 209.1 L208.2 218.8 L208.0 228.4 L207.9 238.1 L207.6 247.8 L207.4 257.5 L207.2 267.1 L206.9 276.8 L206.6 286.5 L206.3 296.3 L206.0 306.0 L205.7 315.7 L205.3 325.5 L204.9 335.2 L204.5 345.0 L204.1 354.8 L203.6 364.7 L203.1 374.5 L202.6 384.4 L202.1 394.3 L201.5 404.2 L202.5 404.9 L203.1 395.0 L203.7 385.1 L204.2 375.2 L204.7 365.3 L205.2 355.5 L205.6 345.6 L206.0 335.8 L206.4 326.0 L206.8 316.2 L207.1 306.4 L207.5 296.7 L207.8 286.9 L208.0 277.2 L208.3 267.5 L208.6 257.8 L208.8 248.1 L209.0 238.4 L209.2 228.7 L209.4 219.0 L209.6 209.3 L209.7 199.6 L209.9 189.9 L210.0 180.3 L210.1 170.6 L210.3 160.9 L210.4 151.2 Z" fill="#b25e78"/><path d="M209.8 151.2 L209.6 160.9 L209.5 170.5 L209.4 180.2 L209.2 189.9 L209.1 199.5 L208.9 209.2 L208.8 218.9 L208.6 228.6 L208.4 238.2 L208.2 247.9 L207.9 257.6 L207.7 267.3 L207.4 277.0 L207.2 286.7 L206.9 296.5 L206.5 306.2 L206.2 315.9 L205.8 325.7 L205.4 335.5 L205.0 345.3 L204.6 355.1 L204.1 365.0 L203.6 374.8 L203.1 384.7 L202.6 394.6 L202.0 404.5 L204.2 406.2 L204.8 396.2 L205.4 386.2 L205.9 376.3 L206.4 366.4 L206.9 356.5 L207.4 346.6 L207.8 336.7 L208.2 326.9 L208.6 317.0 L208.9 307.2 L209.3 297.4 L209.6 287.6 L209.9 277.8 L210.2 268.1 L210.4 258.3 L210.6 248.5 L210.9 238.8 L211.1 229.1 L211.3 219.3 L211.5 209.6 L211.6 199.9 L211.8 190.1 L211.9 180.4 L212.1 170.7 L212.2 160.9 L212.3 151.2 Z" fill="#a81b1e"/><path d="M211.7 151.2 L211.6 160.9 L211.4 170.6 L211.3 180.4 L211.1 190.1 L211.0 199.8 L210.8 209.5 L210.6 219.2 L210.5 228.9 L210.3 238.7 L210.0 248.4 L209.8 258.1 L209.5 267.9 L209.3 277.6 L209.0 287.4 L208.7 297.2 L208.3 307.0 L208.0 316.8 L207.6 326.6 L207.2 336.4 L206.8 346.3 L206.3 356.1 L205.8 366.0 L205.3 375.9 L204.8 385.9 L204.2 395.8 L203.6 405.8 L205.5 407.2 L206.1 397.2 L206.7 387.2 L207.3 377.2 L207.8 367.2 L208.3 357.3 L208.8 347.3 L209.2 337.4 L209.6 327.6 L210.0 317.7 L210.4 307.8 L210.7 298.0 L211.1 288.2 L211.4 278.3 L211.6 268.5 L211.9 258.7 L212.1 248.9 L212.4 239.1 L212.6 229.4 L212.8 219.6 L213.0 209.8 L213.1 200.1 L213.3 190.3 L213.5 180.5 L213.6 170.7 L213.7 161.0 L213.9 151.2 Z" fill="#86182a"/><path d="M213.2 151.2 L213.1 161.0 L213.0 170.7 L212.8 180.5 L212.7 190.2 L212.5 200.0 L212.3 209.7 L212.2 219.5 L212.0 229.2 L211.8 239.0 L211.5 248.8 L211.3 258.6 L211.0 268.3 L210.8 278.1 L210.5 287.9 L210.1 297.7 L209.8 307.6 L209.4 317.4 L209.0 327.3 L208.6 337.1 L208.2 347.0 L207.7 356.9 L207.2 366.9 L206.7 376.8 L206.2 386.8 L205.6 396.8 L205.0 406.8 L207.6 408.7 L208.2 398.6 L208.8 388.6 L209.4 378.5 L209.9 368.5 L210.5 358.5 L210.9 348.5 L211.4 338.6 L211.8 328.6 L212.2 318.7 L212.6 308.8 L213.0 298.9 L213.3 289.0 L213.6 279.1 L213.9 269.2 L214.2 259.4 L214.5 249.5 L214.7 239.7 L214.9 229.8 L215.1 220.0 L215.3 210.2 L215.5 200.3 L215.7 190.5 L215.8 180.7 L216.0 170.9 L216.1 161.0 L216.2 151.2 Z" fill="#4c1120"/><path d="M215.6 151.2 L215.5 161.0 L215.3 170.8 L215.2 180.6 L215.0 190.5 L214.9 200.3 L214.7 210.1 L214.5 219.9 L214.3 229.7 L214.1 239.5 L213.8 249.4 L213.6 259.2 L213.3 269.0 L213.0 278.9 L212.7 288.8 L212.4 298.6 L212.0 308.5 L211.7 318.4 L211.3 328.3 L210.8 338.3 L210.4 348.2 L209.9 358.2 L209.4 368.2 L208.8 378.2 L208.3 388.2 L207.6 398.3 L207.0 408.3 L214.0 413.6 L214.7 403.3 L215.4 393.0 L216.0 382.8 L216.6 372.6 L217.2 362.4 L217.7 352.2 L218.3 342.1 L218.7 331.9 L219.2 321.8 L219.6 311.7 L220.0 301.6 L220.4 291.6 L220.7 281.5 L221.1 271.4 L221.4 261.4 L221.7 251.4 L221.9 241.3 L222.2 231.3 L222.4 221.3 L222.6 211.3 L222.8 201.3 L223.0 191.3 L223.2 181.2 L223.3 171.2 L223.5 161.2 L223.6 151.2 Z" fill="#98151a"/><path d="M223.0 151.2 L222.9 161.2 L222.7 171.2 L222.6 181.2 L222.4 191.2 L222.2 201.2 L222.0 211.2 L221.8 221.2 L221.6 231.2 L221.3 241.2 L221.0 251.2 L220.8 261.2 L220.5 271.3 L220.1 281.3 L219.8 291.3 L219.4 301.4 L219.0 311.5 L218.6 321.6 L218.2 331.7 L217.7 341.8 L217.2 351.9 L216.6 362.1 L216.1 372.2 L215.4 382.4 L214.8 392.7 L214.1 402.9 L213.4 413.2 L216.2 415.2 L216.9 404.9 L217.6 394.6 L218.3 384.3 L218.9 374.0 L219.5 363.7 L220.1 353.5 L220.6 343.3 L221.1 333.1 L221.6 322.9 L222.0 312.7 L222.5 302.6 L222.8 292.5 L223.2 282.3 L223.5 272.2 L223.9 262.1 L224.2 252.0 L224.4 241.9 L224.7 231.8 L224.9 221.7 L225.1 211.7 L225.4 201.6 L225.5 191.5 L225.7 181.4 L225.9 171.4 L226.1 161.3 L226.2 151.2 Z" fill="#ba6a82"/><path d="M225.6 151.2 L225.4 161.3 L225.3 171.3 L225.1 181.4 L224.9 191.4 L224.7 201.5 L224.5 211.6 L224.3 221.6 L224.1 231.7 L223.8 241.8 L223.5 251.8 L223.3 261.9 L222.9 272.0 L222.6 282.1 L222.2 292.2 L221.9 302.4 L221.4 312.5 L221.0 322.6 L220.5 332.8 L220.0 343.0 L219.5 353.2 L219.0 363.4 L218.4 373.7 L217.7 383.9 L217.1 394.2 L216.4 404.5 L215.6 414.8 L221.7 419.4 L222.5 408.9 L223.3 398.5 L224.0 388.0 L224.7 377.6 L225.4 367.2 L226.0 356.8 L226.6 346.4 L227.1 336.1 L227.6 325.7 L228.1 315.4 L228.6 305.1 L229.0 294.8 L229.4 284.5 L229.7 274.2 L230.1 263.9 L230.4 253.7 L230.7 243.4 L231.0 233.1 L231.2 222.9 L231.5 212.6 L231.7 202.4 L231.9 192.2 L232.1 181.9 L232.3 171.7 L232.5 161.4 L232.6 151.2 Z" fill="#a0171a"/><path d="M232.0 151.2 L231.8 161.4 L231.7 171.6 L231.5 181.9 L231.3 192.1 L231.1 202.3 L230.9 212.5 L230.6 222.8 L230.4 233.0 L230.1 243.2 L229.8 253.5 L229.5 263.7 L229.1 274.0 L228.8 284.2 L228.4 294.5 L228.0 304.8 L227.5 315.1 L227.0 325.4 L226.5 335.7 L226.0 346.1 L225.4 356.4 L224.8 366.8 L224.2 377.2 L223.5 387.6 L222.7 398.1 L222.0 408.5 L221.2 419.0 L225.2 422.0 L226.0 411.6 L226.9 401.1 L227.6 390.7 L228.3 380.2 L229.0 369.7 L229.7 359.3 L230.3 348.8 L230.9 338.4 L231.4 328.0 L231.9 317.5 L232.4 307.1 L232.8 296.7 L233.2 286.2 L233.6 275.8 L234.0 265.4 L234.3 255.0 L234.6 244.6 L234.9 234.2 L235.2 223.8 L235.4 213.4 L235.7 203.0 L235.9 192.6 L236.1 182.3 L236.3 171.9 L236.5 161.5 L236.7 151.2 Z" fill="#7c1524"/><path d="M236.0 151.2 L235.9 161.5 L235.7 171.9 L235.5 182.2 L235.3 192.6 L235.1 202.9 L234.8 213.3 L234.6 223.6 L234.3 234.0 L234.0 244.4 L233.7 254.8 L233.4 265.2 L233.0 275.6 L232.6 286.0 L232.2 296.4 L231.8 306.8 L231.3 317.2 L230.8 327.6 L230.3 338.0 L229.7 348.5 L229.1 358.9 L228.5 369.3 L227.8 379.8 L227.1 390.2 L226.3 400.7 L225.5 411.2 L224.6 421.6 L227.6 423.8 L228.4 413.4 L229.3 402.9 L230.1 392.5 L230.8 382.0 L231.5 371.5 L232.2 361.0 L232.8 350.5 L233.4 340.0 L234.0 329.5 L234.5 319.0 L235.0 308.5 L235.4 297.9 L235.9 287.4 L236.3 276.9 L236.6 266.4 L237.0 255.9 L237.3 245.4 L237.6 234.9 L237.9 224.4 L238.2 213.9 L238.4 203.4 L238.6 193.0 L238.8 182.5 L239.0 172.1 L239.2 161.6 L239.4 151.2 Z" fill="#561424"/><path d="M238.8 151.2 L238.6 161.6 L238.4 172.0 L238.2 182.4 L238.0 192.9 L237.8 203.3 L237.5 213.8 L237.3 224.2 L237.0 234.7 L236.7 245.2 L236.4 255.7 L236.0 266.2 L235.7 276.7 L235.3 287.1 L234.8 297.6 L234.4 308.1 L233.9 318.6 L233.4 329.1 L232.8 339.6 L232.2 350.1 L231.6 360.6 L230.9 371.1 L230.2 381.6 L229.5 392.0 L228.7 402.5 L227.9 413.0 L227.0 423.4 L232.5 427.6 L233.5 417.2 L234.3 406.7 L235.2 396.2 L236.0 385.7 L236.7 375.2 L237.5 364.6 L238.1 354.0 L238.8 343.3 L239.3 332.7 L239.9 322.0 L240.4 311.3 L240.9 300.6 L241.4 289.9 L241.8 279.2 L242.2 268.5 L242.6 257.8 L242.9 247.1 L243.2 236.4 L243.5 225.7 L243.8 215.0 L244.1 204.3 L244.3 193.6 L244.5 183.0 L244.8 172.4 L245.0 161.8 L245.1 151.2 Z" fill="#a0171a"/><path d="M244.5 151.2 L244.3 161.8 L244.1 172.3 L243.9 182.9 L243.7 193.6 L243.4 204.2 L243.2 214.9 L242.9 225.5 L242.6 236.2 L242.3 246.9 L241.9 257.6 L241.6 268.3 L241.2 279.0 L240.8 289.7 L240.3 300.3 L239.8 311.0 L239.3 321.7 L238.8 332.3 L238.2 343.0 L237.5 353.6 L236.9 364.2 L236.2 374.8 L235.4 385.3 L234.6 395.8 L233.8 406.3 L232.9 416.7 L232.0 427.2 L233.5 428.3 L234.5 417.9 L235.4 407.5 L236.3 397.0 L237.1 386.5 L237.8 375.9 L238.5 365.3 L239.2 354.7 L239.9 344.0 L240.5 333.4 L241.0 322.7 L241.6 311.9 L242.1 301.2 L242.5 290.5 L242.9 279.7 L243.3 268.9 L243.7 258.2 L244.1 247.4 L244.4 236.7 L244.7 225.9 L245.0 215.2 L245.2 204.5 L245.5 193.8 L245.7 183.1 L245.9 172.4 L246.1 161.8 L246.3 151.2 Z" fill="#b25e78"/><path d="M245.7 151.2 L245.5 161.8 L245.3 172.4 L245.1 183.0 L244.9 193.7 L244.6 204.4 L244.4 215.1 L244.1 225.8 L243.8 236.5 L243.5 247.2 L243.1 258.0 L242.7 268.7 L242.3 279.4 L241.9 290.2 L241.4 300.9 L241.0 311.6 L240.4 322.3 L239.9 333.0 L239.3 343.7 L238.6 354.3 L238.0 364.9 L237.3 375.5 L236.5 386.1 L235.7 396.6 L234.8 407.1 L233.9 417.5 L233.0 427.9 L235.3 429.7 L236.4 419.3 L237.5 409.0 L238.5 398.5 L239.5 388.0 L240.4 377.5 L241.2 366.8 L242.0 356.2 L242.8 345.5 L243.5 334.8 L244.2 324.0 L244.8 313.2 L245.4 302.4 L245.9 291.6 L246.4 280.7 L246.9 269.9 L247.3 259.0 L247.8 248.2 L248.1 237.3 L248.5 226.5 L248.8 215.7 L249.1 204.8 L249.4 194.0 L249.7 183.3 L250.0 172.6 L250.2 161.9 L250.4 151.2 Z" fill="#ad1f22"/><path d="M249.8 151.2 L249.6 161.9 L249.3 172.5 L249.1 183.3 L248.8 194.0 L248.6 204.8 L248.3 215.6 L247.9 226.4 L247.6 237.3 L247.2 248.1 L246.8 258.9 L246.4 269.8 L245.9 280.6 L245.4 291.5 L244.9 302.3 L244.3 313.1 L243.7 323.9 L243.1 334.6 L242.4 345.4 L241.7 356.0 L240.9 366.7 L240.1 377.3 L239.2 387.9 L238.3 398.4 L237.3 408.8 L236.3 419.2 L235.2 429.6 L235.6 429.9 L236.8 419.6 L238.0 409.3 L239.1 398.9 L240.1 388.4 L241.1 377.8 L242.1 367.2 L242.9 356.6 L243.8 345.9 L244.5 335.1 L245.3 324.4 L246.0 313.6 L246.6 302.7 L247.2 291.9 L247.8 281.0 L248.3 270.1 L248.8 259.3 L249.2 248.4 L249.6 237.5 L250.0 226.6 L250.4 215.8 L250.7 204.9 L251.1 194.1 L251.3 183.3 L251.6 172.6 L251.9 161.9 L252.1 151.2 Z" fill="#7c1524"/><path d="M251.5 151.2 L251.3 161.9 L251.0 172.6 L250.7 183.3 L250.5 194.1 L250.1 204.9 L249.8 215.7 L249.5 226.6 L249.1 237.4 L248.7 248.3 L248.2 259.2 L247.8 270.0 L247.3 280.9 L246.7 291.8 L246.1 302.6 L245.5 313.4 L244.9 324.2 L244.2 335.0 L243.4 345.7 L242.6 356.4 L241.8 367.1 L240.9 377.7 L239.9 388.2 L238.9 398.7 L237.8 409.2 L236.7 419.5 L235.5 429.8 L235.9 430.1 L237.3 419.9 L238.6 409.6 L239.8 399.2 L240.9 388.8 L242.0 378.3 L243.0 367.7 L244.0 357.0 L244.9 346.3 L245.8 335.6 L246.6 324.8 L247.3 314.0 L248.0 303.1 L248.7 292.2 L249.3 281.3 L249.9 270.4 L250.4 259.5 L250.9 248.6 L251.4 237.7 L251.8 226.8 L252.2 215.9 L252.6 205.0 L252.9 194.2 L253.2 183.4 L253.5 172.6 L253.8 161.9 L254.1 151.2 Z" fill="#4c1120"/><path d="M253.5 151.2 L253.2 161.9 L252.9 172.6 L252.6 183.4 L252.3 194.2 L252.0 205.0 L251.6 215.9 L251.2 226.7 L250.8 237.6 L250.3 248.5 L249.9 259.4 L249.3 270.3 L248.8 281.2 L248.2 292.1 L247.6 303.0 L246.9 313.8 L246.1 324.7 L245.4 335.4 L244.5 346.2 L243.7 356.9 L242.7 367.5 L241.7 378.1 L240.7 388.7 L239.6 399.1 L238.4 409.5 L237.1 419.8 L235.8 430.1 L236.7 430.7 L238.3 420.6 L239.8 410.4 L241.3 400.1 L242.7 389.7 L244.0 379.2 L245.3 368.7 L246.4 358.0 L247.5 347.3 L248.6 336.5 L249.5 325.7 L250.4 314.9 L251.3 304.0 L252.1 293.0 L252.8 282.1 L253.5 271.1 L254.1 260.1 L254.7 249.1 L255.3 238.1 L255.8 227.2 L256.3 216.2 L256.8 205.3 L257.2 194.4 L257.6 183.5 L258.0 172.7 L258.3 161.9 L258.6 151.2 Z" fill="#ad1f22"/><path d="M258.0 151.2 L257.7 161.9 L257.3 172.7 L257.0 183.5 L256.6 194.3 L256.2 205.2 L255.7 216.2 L255.3 227.1 L254.8 238.1 L254.2 249.0 L253.6 260.0 L253.0 271.0 L252.3 282.0 L251.6 292.9 L250.8 303.8 L250.0 314.7 L249.1 325.6 L248.2 336.4 L247.2 347.2 L246.1 357.9 L244.9 368.5 L243.7 379.1 L242.5 389.6 L241.1 400.0 L239.7 410.3 L238.2 420.5 L236.6 430.6 L236.8 430.8 L238.5 420.8 L240.2 410.6 L241.7 400.3 L243.1 389.9 L244.5 379.5 L245.8 368.9 L247.0 358.3 L248.2 347.6 L249.2 336.8 L250.2 326.0 L251.2 315.1 L252.1 304.2 L252.9 293.2 L253.7 282.2 L254.4 271.3 L255.1 260.2 L255.7 249.2 L256.3 238.2 L256.8 227.2 L257.3 216.3 L257.8 205.3 L258.2 194.4 L258.6 183.5 L259.0 172.7 L259.4 161.9 L259.7 151.2 Z" fill="#bf768c"/><path d="M259.1 151.2 L258.8 161.9 L258.4 172.7 L258.0 183.5 L257.6 194.4 L257.2 205.3 L256.7 216.2 L256.2 227.2 L255.7 238.2 L255.1 249.2 L254.5 260.2 L253.9 271.2 L253.2 282.1 L252.4 293.1 L251.6 304.1 L250.7 315.0 L249.8 325.8 L248.8 336.6 L247.8 347.4 L246.7 358.1 L245.5 368.8 L244.2 379.3 L242.9 389.8 L241.5 400.2 L240.0 410.5 L238.4 420.7 L236.7 430.8 L237.5 431.3 L239.5 421.4 L241.3 411.3 L243.1 401.1 L244.8 390.8 L246.4 380.3 L247.9 369.8 L249.3 359.2 L250.6 348.5 L251.8 337.7 L253.0 326.8 L254.1 315.9 L255.1 305.0 L256.1 294.0 L257.0 282.9 L257.8 271.9 L258.6 260.8 L259.3 249.7 L260.0 238.6 L260.6 227.6 L261.2 216.5 L261.7 205.5 L262.2 194.6 L262.7 183.6 L263.2 172.7 L263.6 161.9 L264.0 151.2 Z" fill="#a0171a"/><path d="M263.4 151.2 L263.0 161.9 L262.6 172.7 L262.1 183.6 L261.6 194.5 L261.1 205.5 L260.6 216.5 L260.0 227.5 L259.4 238.6 L258.8 249.6 L258.1 260.7 L257.3 271.8 L256.5 282.8 L255.6 293.8 L254.7 304.8 L253.7 315.8 L252.6 326.7 L251.4 337.5 L250.2 348.3 L248.9 359.0 L247.6 369.7 L246.1 380.2 L244.5 390.7 L242.9 401.0 L241.2 411.2 L239.3 421.3 L237.4 431.3 L237.7 431.5 L239.8 421.6 L241.8 411.6 L243.7 401.4 L245.4 391.1 L247.1 380.7 L248.7 370.2 L250.2 359.6 L251.6 348.8 L252.9 338.0 L254.1 327.2 L255.3 316.3 L256.3 305.3 L257.4 294.3 L258.3 283.2 L259.2 272.1 L260.0 261.0 L260.8 249.9 L261.5 238.8 L262.1 227.7 L262.8 216.6 L263.3 205.6 L263.9 194.6 L264.4 183.7 L264.8 172.8 L265.3 161.9 L265.7 151.2 Z" fill="#7c1524"/><path d="M265.1 151.2 L264.7 161.9 L264.2 172.8 L263.8 183.6 L263.3 194.6 L262.7 205.6 L262.2 216.6 L261.6 227.7 L260.9 238.7 L260.2 249.8 L259.5 260.9 L258.7 272.0 L257.8 283.1 L256.9 294.1 L255.9 305.2 L254.8 316.1 L253.7 327.1 L252.5 337.9 L251.2 348.7 L249.8 359.4 L248.4 370.0 L246.8 380.6 L245.2 391.0 L243.5 401.3 L241.6 411.5 L239.7 421.5 L237.7 431.4 L238.0 431.7 L240.2 421.9 L242.3 411.9 L244.3 401.8 L246.2 391.5 L248.0 381.1 L249.6 370.6 L251.2 360.0 L252.7 349.3 L254.1 338.5 L255.4 327.6 L256.6 316.6 L257.7 305.6 L258.8 294.6 L259.8 283.5 L260.7 272.4 L261.6 261.3 L262.4 250.1 L263.2 239.0 L263.9 227.9 L264.5 216.8 L265.1 205.7 L265.7 194.7 L266.2 183.7 L266.7 172.8 L267.2 162.0 L267.6 151.2 Z" fill="#641828"/><path d="M267.0 151.2 L266.6 162.0 L266.1 172.8 L265.6 183.7 L265.1 194.7 L264.5 205.7 L263.9 216.7 L263.3 227.8 L262.6 238.9 L261.9 250.1 L261.1 261.2 L260.2 272.3 L259.3 283.4 L258.3 294.5 L257.3 305.5 L256.2 316.5 L255.0 327.4 L253.7 338.3 L252.3 349.1 L250.9 359.8 L249.3 370.5 L247.7 381.0 L245.9 391.4 L244.1 401.7 L242.2 411.8 L240.1 421.8 L237.9 431.7 L238.8 432.3 L241.3 422.6 L243.7 412.8 L246.0 402.7 L248.2 392.5 L250.2 382.2 L252.1 371.7 L253.9 361.1 L255.6 350.4 L257.2 339.5 L258.7 328.6 L260.1 317.6 L261.4 306.6 L262.7 295.5 L263.8 284.3 L264.9 273.1 L265.9 261.9 L266.8 250.7 L267.7 239.5 L268.5 228.3 L269.2 217.1 L269.9 206.0 L270.6 194.9 L271.2 183.8 L271.8 172.9 L272.3 162.0 L272.8 151.2 Z" fill="#a0171a"/><path d="M272.2 151.2 L271.7 162.0 L271.2 172.9 L270.6 183.8 L270.0 194.8 L269.3 205.9 L268.7 217.1 L267.9 228.2 L267.1 239.4 L266.3 250.6 L265.4 261.8 L264.4 273.0 L263.3 284.2 L262.2 295.4 L261.0 306.5 L259.7 317.5 L258.3 328.5 L256.8 339.4 L255.3 350.2 L253.6 360.9 L251.8 371.5 L249.9 382.0 L247.9 392.4 L245.8 402.6 L243.6 412.6 L241.2 422.5 L238.7 432.2 L239.1 432.5 L241.8 422.9 L244.3 413.1 L246.7 403.1 L249.0 392.9 L251.1 382.6 L253.1 372.1 L255.0 361.5 L256.8 350.8 L258.5 340.0 L260.1 329.0 L261.6 318.0 L262.9 307.0 L264.2 295.8 L265.4 284.6 L266.6 273.4 L267.6 262.2 L268.6 250.9 L269.5 239.7 L270.4 228.4 L271.2 217.2 L271.9 206.1 L272.6 194.9 L273.2 183.9 L273.8 172.9 L274.4 162.0 L274.9 151.2 Z" fill="#a8546e"/><path d="M274.3 151.2 L273.8 162.0 L273.2 172.9 L272.6 183.9 L272.0 194.9 L271.3 206.0 L270.6 217.2 L269.8 228.4 L269.0 239.6 L268.1 250.9 L267.1 262.1 L266.1 273.3 L265.0 284.5 L263.8 295.7 L262.5 306.8 L261.1 317.9 L259.7 328.9 L258.1 339.8 L256.5 350.7 L254.7 361.4 L252.8 372.0 L250.8 382.5 L248.7 392.8 L246.5 403.0 L244.1 413.0 L241.6 422.8 L239.0 432.5 L239.9 433.1 L242.9 423.6 L245.7 413.9 L248.4 404.0 L251.0 393.9 L253.4 383.7 L255.7 373.2 L257.8 362.6 L259.8 351.9 L261.7 341.1 L263.5 330.1 L265.2 319.1 L266.7 307.9 L268.2 296.7 L269.5 285.5 L270.8 274.2 L272.0 262.8 L273.1 251.5 L274.1 240.2 L275.1 228.9 L276.0 217.6 L276.8 206.3 L277.6 195.1 L278.3 184.0 L279.0 173.0 L279.6 162.0 L280.3 151.2 Z" fill="#a81b1e"/><path d="M279.6 151.2 L279.0 162.0 L278.4 173.0 L277.7 184.0 L277.0 195.1 L276.2 206.3 L275.4 217.5 L274.5 228.8 L273.6 240.1 L272.6 251.4 L271.5 262.8 L270.3 274.1 L269.1 285.4 L267.7 296.6 L266.3 307.8 L264.7 318.9 L263.1 330.0 L261.3 340.9 L259.5 351.8 L257.5 362.5 L255.4 373.1 L253.1 383.5 L250.7 393.8 L248.2 403.9 L245.6 413.8 L242.7 423.6 L239.8 433.1 L240.1 433.3 L243.3 423.9 L246.3 414.3 L249.1 404.4 L251.7 394.3 L254.3 384.1 L256.6 373.7 L258.9 363.1 L261.0 352.3 L262.9 341.5 L264.8 330.5 L266.5 319.5 L268.2 308.3 L269.7 297.1 L271.1 285.8 L272.4 274.5 L273.7 263.1 L274.8 251.7 L275.9 240.4 L276.9 229.0 L277.8 217.7 L278.7 206.4 L279.5 195.2 L280.3 184.1 L281.0 173.0 L281.6 162.0 L282.3 151.2 Z" fill="#7c1524"/><path d="M281.6 151.2 L281.0 162.0 L280.4 173.0 L279.7 184.0 L278.9 195.2 L278.1 206.4 L277.3 217.7 L276.3 229.0 L275.3 240.3 L274.3 251.7 L273.2 263.0 L271.9 274.4 L270.6 285.7 L269.2 297.0 L267.7 308.2 L266.1 319.3 L264.4 330.4 L262.6 341.4 L260.6 352.2 L258.5 362.9 L256.3 373.5 L254.0 384.0 L251.5 394.2 L248.9 404.3 L246.1 414.2 L243.2 423.8 L240.1 433.3 L240.6 433.7 L244.0 424.4 L247.2 414.8 L250.2 405.0 L253.1 395.0 L255.8 384.8 L258.3 374.4 L260.7 363.8 L263.0 353.1 L265.1 342.2 L267.1 331.2 L268.9 320.1 L270.7 308.9 L272.3 297.7 L273.8 286.3 L275.2 274.9 L276.6 263.5 L277.8 252.1 L278.9 240.7 L280.0 229.3 L281.0 217.9 L281.9 206.6 L282.8 195.3 L283.6 184.1 L284.4 173.0 L285.1 162.1 L285.8 151.2 Z" fill="#5e1422"/><path d="M285.1 151.2 L284.5 162.1 L283.8 173.0 L283.0 184.1 L282.2 195.3 L281.4 206.6 L280.4 217.9 L279.5 229.2 L278.4 240.6 L277.3 252.0 L276.0 263.5 L274.7 274.9 L273.3 286.2 L271.8 297.6 L270.2 308.8 L268.5 320.0 L266.7 331.1 L264.7 342.1 L262.6 353.0 L260.4 363.7 L258.0 374.3 L255.5 384.7 L252.8 394.9 L250.0 404.9 L247.0 414.7 L243.9 424.3 L240.6 433.6 L241.8 434.6 L245.7 425.5 L249.4 416.1 L252.9 406.5 L256.2 396.6 L259.3 386.5 L262.2 376.1 L265.0 365.6 L267.6 354.8 L270.1 343.9 L272.4 332.9 L274.5 321.7 L276.5 310.4 L278.4 299.1 L280.2 287.6 L281.8 276.1 L283.4 264.6 L284.8 253.0 L286.1 241.5 L287.4 229.9 L288.5 218.4 L289.6 207.0 L290.6 195.6 L291.5 184.3 L292.4 173.1 L293.3 162.1 L294.0 151.2 Z" fill="#98151a"/><path d="M293.4 151.2 L292.6 162.1 L291.8 173.1 L290.9 184.3 L290.0 195.6 L289.0 206.9 L287.9 218.4 L286.8 229.9 L285.6 241.4 L284.3 252.9 L282.8 264.5 L281.3 276.0 L279.7 287.5 L278.0 298.9 L276.1 310.3 L274.1 321.6 L272.0 332.8 L269.7 343.8 L267.3 354.7 L264.7 365.4 L261.9 376.0 L259.0 386.3 L255.9 396.5 L252.7 406.4 L249.2 416.0 L245.6 425.4 L241.7 434.5 L242.0 434.7 L246.0 425.7 L249.8 416.4 L253.4 406.8 L256.8 396.9 L260.0 386.8 L263.0 376.5 L265.9 365.9 L268.6 355.2 L271.1 344.3 L273.5 333.2 L275.7 322.0 L277.8 310.7 L279.7 299.3 L281.5 287.9 L283.2 276.4 L284.8 264.8 L286.3 253.2 L287.6 241.6 L288.9 230.1 L290.1 218.5 L291.2 207.1 L292.2 195.7 L293.2 184.4 L294.1 173.2 L295.0 162.1 L295.8 151.2 Z" fill="#b25e78"/><path d="M295.1 151.2 L294.3 162.1 L293.5 173.2 L292.6 184.3 L291.6 195.6 L290.6 207.0 L289.5 218.5 L288.3 230.0 L287.1 241.6 L285.7 253.1 L284.3 264.7 L282.7 276.3 L281.0 287.8 L279.2 299.2 L277.3 310.6 L275.3 321.9 L273.1 333.1 L270.7 344.1 L268.2 355.0 L265.6 365.8 L262.7 376.3 L259.8 386.7 L256.6 396.8 L253.2 406.7 L249.7 416.3 L245.9 425.6 L241.9 434.7 L242.8 435.4 L247.2 426.5 L251.4 417.3 L255.3 407.8 L259.1 398.1 L262.6 388.0 L265.9 377.7 L269.0 367.2 L272.0 356.4 L274.7 345.5 L277.3 334.4 L279.8 323.2 L282.0 311.8 L284.2 300.4 L286.2 288.8 L288.0 277.2 L289.7 265.5 L291.4 253.9 L292.9 242.2 L294.3 230.5 L295.6 218.9 L296.8 207.3 L297.9 195.9 L299.0 184.5 L300.0 173.2 L300.9 162.1 L301.8 151.2 Z" fill="#a4191c"/><path d="M301.1 151.2 L300.3 162.1 L299.3 173.2 L298.4 184.5 L297.3 195.8 L296.2 207.3 L295.0 218.9 L293.7 230.5 L292.3 242.1 L290.8 253.8 L289.2 265.5 L287.5 277.1 L285.7 288.7 L283.7 300.3 L281.6 311.7 L279.3 323.1 L276.9 334.3 L274.4 345.4 L271.6 356.3 L268.7 367.0 L265.6 377.6 L262.3 387.9 L258.8 397.9 L255.1 407.7 L251.2 417.2 L247.1 426.4 L242.7 435.3 L243.4 435.8 L248.1 427.1 L252.5 418.0 L256.7 408.6 L260.6 398.8 L264.3 388.8 L267.9 378.6 L271.2 368.0 L274.3 357.3 L277.2 346.4 L280.0 335.3 L282.6 324.0 L285.0 312.6 L287.2 301.1 L289.4 289.5 L291.3 277.8 L293.2 266.1 L294.9 254.3 L296.5 242.6 L297.9 230.8 L299.3 219.2 L300.6 207.5 L301.8 196.0 L302.9 184.6 L304.0 173.3 L305.0 162.2 L305.9 151.2 Z" fill="#7c1524"/><path d="M305.3 151.2 L304.4 162.2 L303.4 173.3 L302.3 184.6 L301.2 196.0 L300.0 207.5 L298.8 219.1 L297.4 230.8 L295.9 242.5 L294.3 254.2 L292.6 266.0 L290.8 277.7 L288.9 289.4 L286.8 301.0 L284.5 312.5 L282.1 323.9 L279.6 335.1 L276.9 346.2 L274.0 357.2 L270.9 367.9 L267.6 378.4 L264.1 388.7 L260.4 398.7 L256.5 408.5 L252.3 417.9 L247.9 427.0 L243.3 435.7 L243.7 436.0 L248.4 427.3 L253.0 418.3 L257.3 408.9 L261.4 399.2 L265.2 389.2 L268.8 379.0 L272.2 368.5 L275.4 357.7 L278.4 346.8 L281.3 335.7 L283.9 324.4 L286.4 312.9 L288.7 301.4 L290.9 289.8 L292.9 278.1 L294.8 266.3 L296.6 254.5 L298.2 242.8 L299.7 231.0 L301.1 219.3 L302.5 207.6 L303.7 196.1 L304.9 184.6 L305.9 173.3 L307.0 162.2 L307.9 151.2 Z" fill="#561424"/><path d="M307.3 151.2 L306.3 162.2 L305.3 173.3 L304.3 184.6 L303.1 196.1 L301.9 207.6 L300.6 219.2 L299.2 230.9 L297.6 242.7 L296.0 254.5 L294.3 266.2 L292.4 278.0 L290.4 289.7 L288.3 301.3 L286.0 312.8 L283.5 324.2 L280.9 335.5 L278.1 346.7 L275.1 357.6 L271.9 368.3 L268.5 378.8 L264.9 389.1 L261.1 399.1 L257.1 408.8 L252.8 418.2 L248.3 427.2 L243.6 435.9 L244.2 436.4 L249.3 427.9 L254.1 419.0 L258.7 409.7 L263.0 400.1 L267.1 390.1 L270.9 379.9 L274.5 369.4 L277.9 358.6 L281.1 347.7 L284.1 336.5 L286.9 325.2 L289.5 313.7 L292.0 302.1 L294.3 290.4 L296.4 278.7 L298.4 266.9 L300.3 255.0 L302.0 243.2 L303.6 231.3 L305.1 219.6 L306.5 207.8 L307.9 196.2 L309.1 184.7 L310.2 173.4 L311.3 162.2 L312.3 151.2 Z" fill="#a4191c"/><path d="M311.7 151.2 L310.7 162.2 L309.6 173.4 L308.5 184.7 L307.3 196.2 L306.0 207.8 L304.6 219.5 L303.1 231.3 L301.5 243.1 L299.8 254.9 L297.9 266.8 L295.9 278.6 L293.8 290.3 L291.5 302.0 L289.1 313.6 L286.5 325.1 L283.7 336.4 L280.7 347.6 L277.5 358.5 L274.2 369.3 L270.6 379.8 L266.8 390.0 L262.8 399.9 L258.5 409.6 L254.0 418.9 L249.2 427.8 L244.2 436.4 L244.4 436.5 L249.6 428.1 L254.5 419.2 L259.1 409.9 L263.5 400.3 L267.6 390.4 L271.5 380.1 L275.2 369.7 L278.6 358.9 L281.9 347.9 L284.9 336.8 L287.8 325.4 L290.4 314.0 L292.9 302.3 L295.3 290.6 L297.4 278.9 L299.5 267.0 L301.4 255.1 L303.1 243.3 L304.8 231.4 L306.3 219.6 L307.7 207.9 L309.0 196.3 L310.3 184.8 L311.5 173.4 L312.6 162.2 L313.6 151.2 Z" fill="#ba6a82"/><path d="M313.0 151.2 L311.9 162.2 L310.8 173.4 L309.7 184.8 L308.4 196.3 L307.1 207.9 L305.7 219.6 L304.2 231.4 L302.6 243.2 L300.8 255.1 L298.9 266.9 L296.9 278.8 L294.8 290.5 L292.5 302.2 L290.0 313.8 L287.3 325.3 L284.5 336.7 L281.5 347.8 L278.3 358.8 L274.8 369.5 L271.2 380.0 L267.3 390.2 L263.2 400.2 L258.9 409.8 L254.3 419.1 L249.4 428.0 L244.3 436.5 L245.0 437.0 L250.5 428.6 L255.6 419.9 L260.5 410.7 L265.2 401.2 L269.5 391.3 L273.7 381.1 L277.6 370.6 L281.2 359.9 L284.6 348.9 L287.9 337.7 L290.9 326.3 L293.7 314.8 L296.4 303.1 L298.8 291.4 L301.1 279.5 L303.3 267.6 L305.3 255.7 L307.1 243.7 L308.9 231.8 L310.5 219.9 L312.0 208.1 L313.4 196.4 L314.7 184.9 L316.0 173.5 L317.1 162.2 L318.2 151.2 Z" fill="#98151a"/><path d="M317.6 151.2 L316.5 162.2 L315.4 173.5 L314.1 184.9 L312.8 196.4 L311.4 208.1 L309.9 219.9 L308.3 231.7 L306.6 243.7 L304.7 255.6 L302.8 267.5 L300.6 279.4 L298.3 291.3 L295.9 303.0 L293.3 314.7 L290.5 326.2 L287.5 337.6 L284.3 348.8 L280.9 359.7 L277.2 370.5 L273.4 381.0 L269.3 391.2 L264.9 401.1 L260.3 410.6 L255.5 419.8 L250.4 428.6 L244.9 436.9 L245.4 437.3 L251.1 429.0 L256.4 420.3 L261.5 411.2 L266.3 401.7 L270.8 391.9 L275.1 381.7 L279.1 371.2 L282.9 360.5 L286.4 349.5 L289.8 338.3 L292.9 326.9 L295.8 315.3 L298.5 303.6 L301.1 291.8 L303.5 279.9 L305.7 268.0 L307.8 256.0 L309.7 244.0 L311.5 232.0 L313.2 220.1 L314.7 208.3 L316.2 196.5 L317.6 184.9 L318.8 173.5 L320.1 162.2 L321.2 151.2 Z" fill="#8e1d2c"/><path d="M320.6 151.2 L319.4 162.2 L318.2 173.5 L317.0 184.9 L315.6 196.5 L314.2 208.2 L312.6 220.1 L310.9 232.0 L309.2 243.9 L307.2 255.9 L305.2 267.9 L303.0 279.8 L300.6 291.7 L298.1 303.5 L295.4 315.2 L292.5 326.8 L289.4 338.2 L286.0 349.4 L282.5 360.4 L278.8 371.1 L274.8 381.6 L270.5 391.8 L266.0 401.6 L261.3 411.1 L256.2 420.2 L250.9 428.9 L245.3 437.2 L245.7 437.5 L251.5 429.3 L257.0 420.7 L262.2 411.6 L267.1 402.1 L271.7 392.3 L276.1 382.2 L280.2 371.7 L284.1 361.0 L287.8 350.0 L291.2 338.7 L294.4 327.3 L297.4 315.7 L300.2 304.0 L302.8 292.2 L305.3 280.2 L307.5 268.2 L309.7 256.2 L311.7 244.2 L313.5 232.2 L315.2 220.2 L316.8 208.4 L318.3 196.6 L319.7 185.0 L321.0 173.5 L322.3 162.3 L323.4 151.2 Z" fill="#4c1120"/><path d="M322.8 151.2 L321.6 162.3 L320.4 173.5 L319.1 185.0 L317.7 196.6 L316.2 208.3 L314.6 220.2 L312.9 232.1 L311.1 244.1 L309.1 256.1 L307.0 268.2 L304.8 280.1 L302.3 292.1 L299.7 303.9 L296.9 315.6 L294.0 327.2 L290.8 338.6 L287.4 349.8 L283.8 360.8 L279.9 371.6 L275.8 382.0 L271.5 392.2 L266.9 402.0 L262.0 411.5 L256.8 420.6 L251.4 429.2 L245.6 437.5 L246.2 437.9 L252.3 429.9 L258.1 421.3 L263.5 412.3 L268.7 403.0 L273.5 393.2 L278.1 383.1 L282.4 372.6 L286.5 361.9 L290.3 350.8 L293.9 339.6 L297.3 328.1 L300.4 316.5 L303.4 304.7 L306.1 292.8 L308.7 280.8 L311.1 268.8 L313.3 256.7 L315.4 244.6 L317.3 232.5 L319.1 220.5 L320.8 208.6 L322.3 196.8 L323.8 185.1 L325.2 173.6 L326.5 162.3 L327.7 151.2 Z" fill="#a81b1e"/><path d="M327.1 151.2 L325.8 162.3 L324.6 173.6 L323.2 185.1 L321.7 196.7 L320.2 208.5 L318.5 220.5 L316.7 232.5 L314.8 244.5 L312.8 256.6 L310.5 268.7 L308.2 280.7 L305.6 292.7 L302.9 304.6 L300.0 316.4 L296.8 328.0 L293.5 339.5 L289.9 350.7 L286.2 361.7 L282.1 372.5 L277.8 382.9 L273.3 393.1 L268.4 402.8 L263.3 412.2 L257.9 421.2 L252.2 429.8 L246.2 437.9 L246.4 438.1 L252.6 430.0 L258.4 421.5 L263.9 412.6 L269.2 403.2 L274.1 393.4 L278.7 383.3 L283.1 372.9 L287.2 362.1 L291.1 351.1 L294.8 339.9 L298.2 328.4 L301.4 316.7 L304.3 304.9 L307.1 293.0 L309.7 281.0 L312.1 268.9 L314.4 256.8 L316.5 244.7 L318.5 232.6 L320.3 220.6 L322.0 208.6 L323.6 196.8 L325.1 185.1 L326.5 173.6 L327.8 162.3 L329.0 151.2 Z" fill="#ba6a82"/><path d="M328.4 151.2 L327.1 162.3 L325.8 173.6 L324.5 185.1 L323.0 196.8 L321.4 208.6 L319.7 220.5 L317.9 232.6 L316.0 244.7 L313.9 256.8 L311.6 268.9 L309.2 280.9 L306.6 292.9 L303.9 304.8 L300.9 316.6 L297.7 328.3 L294.4 339.7 L290.7 351.0 L286.9 362.0 L282.8 372.7 L278.4 383.2 L273.8 393.3 L268.9 403.1 L263.7 412.5 L258.3 421.4 L252.5 430.0 L246.3 438.0 L247.0 438.5 L253.4 430.6 L259.5 422.2 L265.2 413.3 L270.7 404.0 L275.8 394.3 L280.7 384.2 L285.3 373.7 L289.6 363.0 L293.6 352.0 L297.4 340.7 L300.9 329.2 L304.3 317.5 L307.4 305.6 L310.3 293.7 L313.0 281.6 L315.5 269.4 L317.9 257.3 L320.1 245.1 L322.1 232.9 L324.0 220.8 L325.8 208.8 L327.5 196.9 L329.0 185.2 L330.5 173.6 L331.8 162.3 L333.1 151.2 Z" fill="#a81b1e"/><path d="M332.5 151.2 L331.2 162.3 L329.9 173.6 L328.4 185.2 L326.9 196.9 L325.2 208.8 L323.5 220.8 L321.6 232.9 L319.5 245.0 L317.4 257.2 L315.0 269.4 L312.5 281.5 L309.8 293.6 L306.9 305.5 L303.8 317.4 L300.5 329.1 L297.0 340.6 L293.2 351.8 L289.2 362.9 L284.9 373.6 L280.4 384.0 L275.6 394.1 L270.4 403.9 L265.0 413.2 L259.3 422.1 L253.3 430.5 L246.9 438.4 L247.0 438.5 L253.5 430.6 L259.6 422.3 L265.4 413.4 L270.9 404.1 L276.1 394.4 L281.0 384.3 L285.6 373.9 L289.9 363.1 L294.0 352.1 L297.8 340.8 L301.4 329.3 L304.8 317.6 L307.9 305.8 L310.8 293.8 L313.6 281.7 L316.1 269.5 L318.5 257.3 L320.7 245.2 L322.7 233.0 L324.7 220.9 L326.4 208.9 L328.1 197.0 L329.7 185.2 L331.1 173.7 L332.5 162.3 L333.8 151.2 Z" fill="#8e1d2c"/><path d="M333.2 151.2 L331.9 162.3 L330.5 173.6 L329.1 185.2 L327.5 196.9 L325.9 208.8 L324.1 220.8 L322.2 232.9 L320.1 245.1 L317.9 257.3 L315.6 269.5 L313.0 281.6 L310.3 293.7 L307.4 305.6 L304.3 317.5 L301.0 329.2 L297.4 340.7 L293.6 352.0 L289.6 363.0 L285.3 373.7 L280.7 384.2 L275.9 394.3 L270.7 404.0 L265.2 413.3 L259.5 422.2 L253.4 430.6 L247.0 438.5 L247.2 438.7 L253.8 430.8 L260.0 422.5 L265.9 413.6 L271.4 404.3 L276.7 394.7 L281.6 384.6 L286.3 374.2 L290.7 363.4 L294.8 352.4 L298.7 341.1 L302.3 329.6 L305.7 317.8 L308.8 306.0 L311.8 294.0 L314.6 281.9 L317.2 269.7 L319.6 257.5 L321.8 245.3 L323.9 233.1 L325.8 221.0 L327.6 208.9 L329.3 197.0 L330.9 185.3 L332.4 173.7 L333.8 162.3 L335.1 151.2 Z" fill="#5e1422"/><path d="M334.5 151.2 L333.2 162.3 L331.8 173.7 L330.3 185.2 L328.7 197.0 L327.1 208.9 L325.3 220.9 L323.3 233.0 L321.3 245.2 L319.0 257.4 L316.6 269.6 L314.1 281.8 L311.3 293.9 L308.4 305.9 L305.2 317.7 L301.9 329.4 L298.3 340.9 L294.4 352.2 L290.3 363.3 L285.9 374.0 L281.3 384.4 L276.4 394.5 L271.2 404.2 L265.7 413.5 L259.8 422.4 L253.6 430.7 L247.1 438.6 L247.7 439.1 L254.6 431.3 L261.0 423.1 L267.1 414.3 L272.9 405.1 L278.4 395.5 L283.6 385.4 L288.4 375.0 L293.0 364.3 L297.3 353.2 L301.3 341.9 L305.1 330.3 L308.6 318.6 L311.9 306.7 L315.0 294.6 L317.9 282.4 L320.6 270.2 L323.1 257.9 L325.4 245.7 L327.6 233.4 L329.6 221.2 L331.5 209.1 L333.2 197.2 L334.9 185.3 L336.4 173.7 L337.9 162.3 L339.3 151.2 Z" fill="#ad1f22"/><path d="M338.6 151.2 L337.3 162.3 L335.8 173.7 L334.3 185.3 L332.6 197.1 L330.9 209.1 L329.0 221.2 L327.0 233.4 L324.8 245.6 L322.5 257.9 L320.0 270.1 L317.4 282.4 L314.5 294.5 L311.4 306.6 L308.2 318.5 L304.6 330.2 L300.9 341.8 L296.9 353.1 L292.6 364.1 L288.1 374.9 L283.3 385.3 L278.1 395.4 L272.7 405.0 L266.9 414.2 L260.9 423.0 L254.4 431.3 L247.7 439.0 L247.9 439.2 L254.8 431.5 L261.4 423.3 L267.6 414.6 L273.5 405.4 L279.0 395.8 L284.2 385.7 L289.1 375.3 L293.8 364.6 L298.1 353.5 L302.2 342.2 L306.0 330.6 L309.6 318.9 L313.0 306.9 L316.1 294.8 L319.0 282.6 L321.7 270.4 L324.3 258.1 L326.6 245.8 L328.8 233.5 L330.9 221.3 L332.8 209.2 L334.6 197.2 L336.2 185.4 L337.8 173.7 L339.3 162.3 L340.7 151.2 Z" fill="#ad5a70"/><path d="M340.0 151.2 L338.7 162.3 L337.2 173.7 L335.6 185.4 L334.0 197.2 L332.2 209.2 L330.3 221.3 L328.3 233.5 L326.1 245.7 L323.7 258.0 L321.2 270.3 L318.5 282.6 L315.6 294.7 L312.5 306.8 L309.2 318.7 L305.6 330.5 L301.8 342.1 L297.7 353.4 L293.4 364.4 L288.8 375.2 L283.9 385.6 L278.7 395.6 L273.2 405.3 L267.4 414.5 L261.2 423.2 L254.7 431.4 L247.8 439.1 L248.3 439.5 L255.4 431.9 L262.1 423.7 L268.5 415.1 L274.5 405.9 L280.2 396.3 L285.6 386.3 L290.6 375.9 L295.4 365.2 L299.9 354.1 L304.1 342.8 L308.0 331.2 L311.7 319.4 L315.1 307.4 L318.3 295.3 L321.3 283.1 L324.1 270.8 L326.7 258.4 L329.2 246.1 L331.4 233.7 L333.5 221.5 L335.5 209.3 L337.3 197.3 L339.0 185.4 L340.6 173.8 L342.2 162.4 L343.6 151.2 Z" fill="#a0171a"/><path d="M343.0 151.2 L341.5 162.4 L340.0 173.8 L338.4 185.4 L336.7 197.3 L334.9 209.3 L332.9 221.4 L330.9 233.7 L328.6 246.0 L326.2 258.3 L323.6 270.7 L320.8 283.0 L317.8 295.2 L314.6 307.3 L311.2 319.3 L307.6 331.1 L303.7 342.6 L299.5 354.0 L295.0 365.0 L290.3 375.8 L285.3 386.2 L280.0 396.2 L274.3 405.8 L268.3 415.0 L262.0 423.7 L255.3 431.8 L248.2 439.4 L248.5 439.6 L255.7 432.1 L262.5 424.0 L269.0 415.3 L275.1 406.2 L280.8 396.6 L286.3 386.6 L291.4 376.2 L296.2 365.5 L300.7 354.4 L305.0 343.1 L309.0 331.5 L312.7 319.6 L316.2 307.6 L319.4 295.5 L322.5 283.3 L325.3 270.9 L328.0 258.6 L330.4 246.2 L332.7 233.9 L334.8 221.6 L336.8 209.4 L338.7 197.4 L340.4 185.5 L342.1 173.8 L343.6 162.4 L345.0 151.2 Z" fill="#7c1524"/><path d="M344.4 151.2 L343.0 162.4 L341.4 173.8 L339.8 185.5 L338.1 197.3 L336.2 209.4 L334.3 221.5 L332.1 233.8 L329.9 246.1 L327.4 258.5 L324.8 270.9 L322.0 283.2 L319.0 295.4 L315.7 307.5 L312.3 319.5 L308.5 331.3 L304.6 342.9 L300.4 354.3 L295.9 365.3 L291.1 376.1 L286.0 386.5 L280.6 396.5 L274.8 406.1 L268.8 415.2 L262.3 423.9 L255.6 432.0 L248.4 439.6 L248.6 439.7 L255.9 432.2 L262.8 424.1 L269.3 415.5 L275.5 406.4 L281.3 396.8 L286.8 386.8 L291.9 376.4 L296.8 365.7 L301.4 354.6 L305.7 343.3 L309.7 331.7 L313.5 319.8 L317.0 307.8 L320.3 295.7 L323.3 283.4 L326.2 271.1 L328.9 258.7 L331.3 246.3 L333.7 233.9 L335.8 221.6 L337.8 209.4 L339.7 197.4 L341.4 185.5 L343.1 173.8 L344.6 162.4 L346.1 151.2 Z" fill="#5e1422"/><path d="M345.5 151.2 L344.0 162.4 L342.5 173.8 L340.8 185.5 L339.1 197.4 L337.2 209.4 L335.2 221.6 L333.1 233.9 L330.8 246.2 L328.3 258.6 L325.7 271.0 L322.8 283.3 L319.8 295.6 L316.5 307.7 L313.0 319.7 L309.3 331.5 L305.3 343.1 L301.0 354.5 L296.5 365.6 L291.6 376.3 L286.5 386.7 L281.0 396.7 L275.2 406.3 L269.1 415.4 L262.6 424.0 L255.8 432.1 L248.5 439.7 L249.0 440.0 L256.5 432.6 L263.6 424.6 L270.3 416.1 L276.7 407.0 L282.7 397.5 L288.3 387.5 L293.7 377.2 L298.7 366.4 L303.4 355.3 L307.8 343.9 L311.9 332.3 L315.8 320.4 L319.5 308.4 L322.8 296.2 L326.0 283.9 L328.9 271.5 L331.7 259.0 L334.3 246.6 L336.6 234.2 L338.9 221.8 L340.9 209.6 L342.9 197.5 L344.7 185.6 L346.4 173.9 L348.0 162.4 L349.5 151.2 Z" fill="#98151a"/><path d="M348.8 151.2 L347.3 162.4 L345.7 173.8 L344.1 185.6 L342.3 197.5 L340.3 209.6 L338.3 221.8 L336.1 234.1 L333.7 246.5 L331.2 259.0 L328.4 271.4 L325.5 283.8 L322.4 296.1 L319.0 308.3 L315.4 320.3 L311.5 332.2 L307.4 343.8 L303.0 355.2 L298.3 366.3 L293.3 377.0 L288.0 387.4 L282.4 397.4 L276.5 406.9 L270.1 416.0 L263.5 424.5 L256.4 432.6 L249.0 440.0 L249.1 440.1 L256.7 432.7 L263.8 424.8 L270.6 416.2 L277.0 407.2 L283.0 397.7 L288.7 387.7 L294.1 377.3 L299.1 366.6 L303.9 355.5 L308.3 344.1 L312.5 332.5 L316.4 320.6 L320.1 308.5 L323.5 296.3 L326.7 284.0 L329.6 271.6 L332.4 259.1 L335.0 246.7 L337.4 234.3 L339.6 221.9 L341.7 209.6 L343.6 197.5 L345.5 185.6 L347.2 173.9 L348.8 162.4 L350.3 151.2 Z" fill="#bf768c"/><path d="M349.7 151.2 L348.2 162.4 L346.6 173.9 L344.9 185.6 L343.0 197.5 L341.1 209.6 L339.0 221.9 L336.8 234.2 L334.4 246.6 L331.9 259.1 L329.1 271.5 L326.2 283.9 L323.0 296.2 L319.6 308.4 L316.0 320.5 L312.1 332.3 L307.9 344.0 L303.5 355.4 L298.8 366.4 L293.8 377.2 L288.4 387.6 L282.8 397.5 L276.8 407.1 L270.4 416.1 L263.7 424.7 L256.6 432.7 L249.1 440.1 L249.5 440.4 L257.3 433.1 L264.6 425.2 L271.6 416.8 L278.1 407.8 L284.3 398.3 L290.2 388.3 L295.7 378.0 L300.9 367.2 L305.7 356.1 L310.3 344.7 L314.6 333.1 L318.6 321.2 L322.3 309.1 L325.9 296.8 L329.1 284.4 L332.2 272.0 L335.0 259.5 L337.7 247.0 L340.1 234.5 L342.4 222.1 L344.5 209.8 L346.5 197.6 L348.4 185.7 L350.2 173.9 L351.8 162.4 L353.4 151.2 Z" fill="#a4191c"/><path d="M352.7 151.2 L351.2 162.4 L349.6 173.9 L347.8 185.6 L346.0 197.6 L344.0 209.8 L341.8 222.1 L339.6 234.4 L337.1 246.9 L334.5 259.4 L331.6 271.9 L328.6 284.3 L325.4 296.7 L321.9 308.9 L318.2 321.0 L314.2 332.9 L309.9 344.6 L305.4 356.0 L300.5 367.1 L295.4 377.8 L289.9 388.2 L284.1 398.2 L277.9 407.7 L271.4 416.7 L264.4 425.1 L257.1 433.0 L249.4 440.3 L249.7 440.5 L257.6 433.3 L265.0 425.5 L272.0 417.0 L278.7 408.1 L284.9 398.6 L290.9 388.6 L296.4 378.3 L301.7 367.5 L306.6 356.4 L311.2 345.0 L315.6 333.3 L319.6 321.4 L323.4 309.3 L327.0 297.0 L330.3 284.6 L333.4 272.2 L336.3 259.6 L338.9 247.1 L341.4 234.6 L343.8 222.2 L345.9 209.9 L347.9 197.7 L349.8 185.7 L351.6 173.9 L353.3 162.4 L354.9 151.2 Z" fill="#7c1524"/><path d="M354.2 151.2 L352.7 162.4 L351.0 173.9 L349.2 185.7 L347.3 197.7 L345.3 209.8 L343.2 222.1 L340.9 234.6 L338.4 247.0 L335.7 259.6 L332.9 272.1 L329.8 284.5 L326.5 296.9 L323.0 309.2 L319.2 321.3 L315.2 333.2 L310.8 344.9 L306.2 356.3 L301.3 367.4 L296.1 378.1 L290.6 388.5 L284.7 398.5 L278.4 407.9 L271.8 416.9 L264.8 425.4 L257.4 433.2 L249.6 440.5 L249.9 440.7 L257.8 433.5 L265.3 425.7 L272.4 417.2 L279.1 408.3 L285.5 398.8 L291.5 388.9 L297.1 378.6 L302.4 367.8 L307.4 356.7 L312.1 345.3 L316.5 333.6 L320.6 321.7 L324.4 309.5 L328.0 297.2 L331.3 284.8 L334.5 272.3 L337.4 259.8 L340.1 247.2 L342.6 234.7 L344.9 222.3 L347.1 209.9 L349.2 197.7 L351.1 185.7 L352.9 173.9 L354.6 162.4 L356.2 151.2 Z" fill="#561424"/><path d="M355.5 151.2 L353.9 162.4 L352.3 173.9 L350.5 185.7 L348.6 197.7 L346.5 209.9 L344.4 222.2 L342.0 234.7 L339.5 247.2 L336.8 259.7 L333.9 272.2 L330.8 284.7 L327.5 297.1 L323.9 309.4 L320.1 321.5 L316.0 333.5 L311.7 345.2 L307.0 356.6 L302.1 367.7 L296.8 378.4 L291.2 388.8 L285.2 398.7 L278.9 408.2 L272.2 417.1 L265.2 425.6 L257.7 433.4 L249.8 440.6 L250.4 441.1 L258.6 434.0 L266.4 426.3 L273.7 418.0 L280.7 409.1 L287.3 399.7 L293.5 389.8 L299.3 379.4 L304.8 368.7 L309.9 357.6 L314.8 346.1 L319.3 334.4 L323.6 322.4 L327.5 310.2 L331.2 297.9 L334.7 285.4 L337.9 272.9 L340.9 260.2 L343.7 247.6 L346.3 235.0 L348.8 222.5 L351.0 210.1 L353.2 197.9 L355.1 185.8 L357.0 174.0 L358.7 162.4 L360.4 151.2 Z" fill="#98151a"/><path d="M359.8 151.2 L358.1 162.4 L356.4 174.0 L354.5 185.8 L352.6 197.9 L350.5 210.1 L348.2 222.5 L345.8 235.0 L343.2 247.6 L340.4 260.2 L337.4 272.8 L334.2 285.3 L330.8 297.8 L327.1 310.1 L323.1 322.3 L318.9 334.3 L314.4 346.0 L309.6 357.4 L304.4 368.6 L299.0 379.3 L293.2 389.7 L287.0 399.6 L280.5 409.0 L273.5 417.9 L266.2 426.2 L258.5 433.9 L250.3 441.0 L250.5 441.2 L258.8 434.1 L266.6 426.4 L274.0 418.1 L281.0 409.2 L287.6 399.8 L293.9 390.0 L299.7 379.6 L305.3 368.9 L310.4 357.7 L315.3 346.3 L319.9 334.6 L324.2 322.6 L328.2 310.4 L331.9 298.0 L335.4 285.5 L338.6 273.0 L341.7 260.3 L344.5 247.7 L347.1 235.1 L349.6 222.6 L351.8 210.2 L354.0 197.9 L356.0 185.8 L357.8 174.0 L359.6 162.4 L361.2 151.2 Z" fill="#a8546e"/><path d="M360.6 151.2 L359.0 162.4 L357.2 174.0 L355.3 185.8 L353.4 197.9 L351.2 210.1 L349.0 222.5 L346.5 235.1 L343.9 247.6 L341.1 260.3 L338.1 272.9 L334.9 285.4 L331.4 297.9 L327.7 310.3 L323.7 322.5 L319.5 334.4 L314.9 346.2 L310.1 357.6 L304.9 368.7 L299.4 379.5 L293.6 389.8 L287.3 399.7 L280.8 409.1 L273.8 418.0 L266.4 426.3 L258.6 434.0 L250.4 441.1 L250.9 441.4 L259.3 434.5 L267.4 426.9 L274.9 418.6 L282.1 409.8 L288.9 400.5 L295.3 390.6 L301.3 380.3 L306.9 369.5 L312.3 358.4 L317.2 346.9 L321.9 335.1 L326.3 323.1 L330.4 310.9 L334.2 298.5 L337.8 286.0 L341.1 273.3 L344.2 260.7 L347.1 248.0 L349.8 235.3 L352.3 222.8 L354.6 210.3 L356.8 198.0 L358.9 185.9 L360.8 174.0 L362.6 162.5 L364.3 151.2 Z" fill="#a81b1e"/><path d="M363.6 151.2 L361.9 162.5 L360.2 174.0 L358.3 185.9 L356.2 198.0 L354.1 210.3 L351.7 222.7 L349.2 235.3 L346.6 247.9 L343.7 260.6 L340.6 273.3 L337.3 285.9 L333.7 298.4 L329.9 310.8 L325.9 323.0 L321.5 335.0 L316.8 346.8 L311.9 358.2 L306.6 369.4 L301.0 380.1 L295.0 390.5 L288.6 400.3 L281.9 409.7 L274.7 418.5 L267.2 426.8 L259.2 434.4 L250.8 441.4 L251.2 441.6 L259.7 434.8 L267.9 427.2 L275.6 419.0 L282.9 410.2 L289.8 400.9 L296.2 391.0 L302.4 380.7 L308.1 369.9 L313.5 358.8 L318.6 347.3 L323.3 335.5 L327.8 323.5 L332.0 311.3 L335.8 298.8 L339.5 286.3 L342.8 273.6 L346.0 260.9 L348.9 248.2 L351.7 235.5 L354.2 222.9 L356.6 210.4 L358.8 198.1 L360.9 186.0 L362.8 174.1 L364.6 162.5 L366.4 151.2 Z" fill="#8e1d2c"/><path d="M365.7 151.2 L364.0 162.5 L362.2 174.1 L360.3 185.9 L358.2 198.1 L356.0 210.4 L353.6 222.9 L351.1 235.4 L348.4 248.1 L345.5 260.8 L342.3 273.5 L339.0 286.2 L335.4 298.7 L331.5 311.1 L327.3 323.4 L322.9 335.4 L318.2 347.2 L313.1 358.7 L307.8 369.8 L302.0 380.6 L296.0 390.9 L289.5 400.7 L282.6 410.1 L275.4 418.9 L267.7 427.1 L259.6 434.7 L251.1 441.6 L251.3 441.7 L260.0 434.9 L268.2 427.4 L276.0 419.2 L283.3 410.4 L290.2 401.1 L296.8 391.3 L303.0 380.9 L308.8 370.2 L314.2 359.0 L319.3 347.6 L324.1 335.8 L328.6 323.7 L332.8 311.5 L336.7 299.0 L340.4 286.4 L343.8 273.7 L347.0 261.0 L349.9 248.3 L352.7 235.6 L355.3 223.0 L357.7 210.5 L359.9 198.1 L362.0 186.0 L364.0 174.1 L365.8 162.5 L367.5 151.2 Z" fill="#641828"/><path d="M366.9 151.2 L365.2 162.5 L363.3 174.1 L361.4 186.0 L359.3 198.1 L357.1 210.4 L354.7 222.9 L352.1 235.5 L349.4 248.2 L346.4 261.0 L343.3 273.7 L339.9 286.3 L336.2 298.9 L332.3 311.3 L328.2 323.6 L323.7 335.7 L318.9 347.4 L313.8 358.9 L308.4 370.1 L302.6 380.8 L296.5 391.1 L290.0 401.0 L283.1 410.3 L275.8 419.1 L268.0 427.3 L259.8 434.8 L251.2 441.7 L251.7 442.0 L260.6 435.3 L269.0 427.9 L276.9 419.8 L284.5 411.0 L291.6 401.7 L298.3 391.9 L304.6 381.6 L310.5 370.9 L316.1 359.7 L321.4 348.2 L326.3 336.4 L330.9 324.3 L335.2 312.0 L339.2 299.5 L342.9 286.9 L346.4 274.1 L349.7 261.4 L352.7 248.6 L355.5 235.8 L358.2 223.2 L360.6 210.6 L362.9 198.2 L365.1 186.0 L367.1 174.1 L369.0 162.5 L370.7 151.2 Z" fill="#a4191c"/><path d="M370.1 151.2 L368.3 162.5 L366.5 174.1 L364.5 186.0 L362.3 198.2 L360.0 210.6 L357.6 223.1 L355.0 235.8 L352.2 248.5 L349.2 261.3 L345.9 274.1 L342.4 286.8 L338.7 299.4 L334.7 311.9 L330.4 324.2 L325.9 336.3 L321.0 348.1 L315.8 359.6 L310.2 370.7 L304.3 381.5 L298.0 391.8 L291.3 401.6 L284.2 410.9 L276.8 419.6 L268.8 427.8 L260.5 435.2 L251.6 442.0 L251.8 442.1 L260.7 435.4 L269.2 428.0 L277.2 419.9 L284.7 411.2 L291.9 401.9 L298.6 392.1 L305.0 381.8 L310.9 371.0 L316.6 359.9 L321.8 348.3 L326.8 336.5 L331.4 324.4 L335.7 312.1 L339.7 299.6 L343.5 287.0 L347.0 274.2 L350.3 261.4 L353.3 248.7 L356.2 235.9 L358.8 223.2 L361.3 210.6 L363.6 198.2 L365.7 186.1 L367.8 174.1 L369.7 162.5 L371.5 151.2 Z" fill="#ad5a70"/><path d="M370.8 151.2 L369.0 162.5 L367.1 174.1 L365.1 186.0 L363.0 198.2 L360.7 210.6 L358.2 223.2 L355.6 235.8 L352.8 248.6 L349.7 261.4 L346.5 274.2 L343.0 286.9 L339.2 299.5 L335.2 312.0 L330.9 324.3 L326.3 336.4 L321.4 348.2 L316.2 359.7 L310.6 370.9 L304.6 381.6 L298.3 391.9 L291.6 401.8 L284.5 411.0 L277.0 419.8 L269.0 427.9 L260.6 435.3 L251.7 442.1 L252.1 442.3 L261.2 435.7 L269.8 428.3 L277.9 420.3 L285.6 411.6 L292.9 402.4 L299.8 392.6 L306.2 382.3 L312.3 371.5 L318.0 360.4 L323.4 348.8 L328.4 337.0 L333.1 324.9 L337.5 312.5 L341.6 300.0 L345.5 287.3 L349.0 274.5 L352.4 261.7 L355.5 248.9 L358.4 236.1 L361.1 223.4 L363.6 210.8 L365.9 198.3 L368.1 186.1 L370.2 174.2 L372.1 162.5 L373.9 151.2 Z" fill="#a81b1e"/><path d="M373.3 151.2 L371.5 162.5 L369.5 174.2 L367.5 186.1 L365.3 198.3 L363.0 210.7 L360.5 223.3 L357.8 236.0 L354.9 248.8 L351.8 261.6 L348.5 274.5 L345.0 287.2 L341.1 299.9 L337.1 312.4 L332.7 324.8 L328.0 336.9 L323.0 348.7 L317.7 360.2 L312.0 371.4 L305.9 382.1 L299.5 392.4 L292.6 402.2 L285.4 411.5 L277.7 420.2 L269.6 428.2 L261.1 435.6 L252.0 442.3 L252.3 442.5 L261.6 436.0 L270.3 428.6 L278.6 420.6 L286.4 412.0 L293.8 402.8 L300.7 393.0 L307.3 382.7 L313.5 372.0 L319.3 360.8 L324.7 349.3 L329.8 337.4 L334.6 325.3 L339.0 312.9 L343.2 300.3 L347.1 287.6 L350.7 274.8 L354.1 261.9 L357.3 249.1 L360.2 236.2 L362.9 223.5 L365.5 210.9 L367.8 198.4 L370.1 186.2 L372.2 174.2 L374.1 162.5 L376.0 151.2 Z" fill="#86182a"/><path d="M375.3 151.2 L373.5 162.5 L371.5 174.2 L369.5 186.2 L367.2 198.4 L364.9 210.8 L362.3 223.4 L359.6 236.2 L356.7 249.0 L353.6 261.9 L350.2 274.7 L346.6 287.5 L342.7 300.2 L338.6 312.8 L334.1 325.1 L329.4 337.3 L324.3 349.1 L318.9 360.7 L313.1 371.8 L307.0 382.6 L300.4 392.9 L293.5 402.7 L286.2 411.9 L278.4 420.5 L270.1 428.5 L261.4 435.9 L252.3 442.5 L252.6 442.7 L261.9 436.2 L270.8 428.9 L279.2 421.0 L287.1 412.4 L294.6 403.2 L301.7 393.4 L308.3 383.1 L314.6 372.4 L320.4 361.2 L326.0 349.7 L331.1 337.8 L336.0 325.6 L340.5 313.2 L344.7 300.6 L348.7 287.9 L352.4 275.1 L355.8 262.2 L359.0 249.3 L361.9 236.4 L364.7 223.6 L367.3 211.0 L369.7 198.5 L372.0 186.2 L374.1 174.2 L376.1 162.5 L378.0 151.2 Z" fill="#4c1120"/><path d="M377.3 151.2 L375.5 162.5 L373.5 174.2 L371.4 186.2 L369.1 198.4 L366.7 210.9 L364.1 223.6 L361.4 236.3 L358.4 249.2 L355.2 262.1 L351.8 275.0 L348.2 287.8 L344.2 300.5 L340.0 313.1 L335.5 325.5 L330.7 337.7 L325.6 349.5 L320.1 361.1 L314.2 372.2 L308.0 383.0 L301.4 393.3 L294.3 403.0 L286.9 412.3 L279.0 420.9 L270.6 428.8 L261.8 436.1 L252.5 442.7 L253.2 443.1 L262.8 436.8 L271.9 429.6 L280.6 421.8 L288.8 413.2 L296.5 404.1 L303.8 394.4 L310.7 384.1 L317.1 373.3 L323.2 362.2 L328.9 350.6 L334.2 338.7 L339.2 326.5 L343.9 314.0 L348.3 301.3 L352.3 288.5 L356.1 275.6 L359.7 262.7 L363.0 249.7 L366.0 236.7 L368.9 223.9 L371.6 211.2 L374.0 198.6 L376.4 186.3 L378.6 174.3 L380.6 162.6 L382.6 151.2 Z" fill="#a4191c"/><path d="M381.9 151.2 L380.0 162.5 L377.9 174.3 L375.8 186.3 L373.5 198.6 L371.0 211.1 L368.3 223.9 L365.5 236.7 L362.4 249.6 L359.1 262.6 L355.6 275.6 L351.8 288.5 L347.8 301.2 L343.4 313.9 L338.8 326.3 L333.8 338.5 L328.5 350.5 L322.8 362.0 L316.8 373.2 L310.3 384.0 L303.5 394.2 L296.2 404.0 L288.6 413.1 L280.4 421.7 L271.8 429.5 L262.7 436.7 L253.1 443.1 L253.3 443.3 L263.0 436.9 L272.3 429.8 L281.0 422.0 L289.2 413.5 L297.0 404.3 L304.4 394.6 L311.3 384.4 L317.8 373.6 L323.9 362.4 L329.7 350.8 L335.1 338.9 L340.1 326.7 L344.8 314.2 L349.2 301.5 L353.3 288.7 L357.2 275.8 L360.7 262.8 L364.1 249.8 L367.2 236.8 L370.0 224.0 L372.7 211.2 L375.2 198.7 L377.6 186.3 L379.8 174.3 L381.9 162.6 L383.8 151.2 Z" fill="#b25e78"/><path d="M383.2 151.2 L381.2 162.6 L379.2 174.3 L377.0 186.3 L374.6 198.6 L372.1 211.2 L369.5 223.9 L366.6 236.8 L363.5 249.7 L360.2 262.7 L356.6 275.7 L352.8 288.6 L348.7 301.4 L344.4 314.1 L339.7 326.6 L334.7 338.8 L329.3 350.7 L323.6 362.3 L317.5 373.5 L311.0 384.2 L304.1 394.5 L296.8 404.2 L289.0 413.4 L280.8 421.9 L272.1 429.7 L262.9 436.9 L253.2 443.2 L253.7 443.6 L263.7 437.4 L273.2 430.4 L282.1 422.6 L290.5 414.2 L298.5 405.1 L306.1 395.4 L313.1 385.1 L319.8 374.4 L326.1 363.2 L332.0 351.6 L337.5 339.6 L342.6 327.3 L347.5 314.8 L352.0 302.1 L356.2 289.2 L360.1 276.2 L363.8 263.2 L367.2 250.1 L370.3 237.1 L373.3 224.2 L376.0 211.4 L378.6 198.8 L381.0 186.4 L383.3 174.3 L385.4 162.6 L387.4 151.2 Z" fill="#a0171a"/><path d="M386.8 151.2 L384.8 162.6 L382.7 174.3 L380.4 186.4 L378.0 198.8 L375.5 211.4 L372.7 224.2 L369.8 237.1 L366.6 250.1 L363.2 263.1 L359.6 276.2 L355.7 289.1 L351.5 302.0 L347.0 314.7 L342.2 327.2 L337.1 339.5 L331.6 351.4 L325.7 363.0 L319.5 374.2 L312.8 385.0 L305.8 395.2 L298.3 404.9 L290.3 414.0 L281.9 422.5 L273.0 430.3 L263.6 437.3 L253.7 443.5 L253.8 443.6 L263.8 437.4 L273.3 430.5 L282.3 422.7 L290.8 414.3 L298.8 405.2 L306.3 395.5 L313.4 385.2 L320.1 374.5 L326.4 363.3 L332.3 351.7 L337.9 339.7 L343.0 327.4 L347.9 314.9 L352.4 302.2 L356.6 289.3 L360.6 276.3 L364.2 263.3 L367.7 250.2 L370.8 237.2 L373.8 224.2 L376.6 211.4 L379.2 198.8 L381.6 186.4 L383.8 174.3 L386.0 162.6 L388.0 151.2 Z" fill="#7c1524"/><path d="M387.3 151.2 L385.3 162.6 L383.2 174.3 L381.0 186.4 L378.6 198.8 L376.0 211.4 L373.2 224.2 L370.3 237.1 L367.1 250.1 L363.7 263.2 L360.1 276.2 L356.1 289.2 L351.9 302.1 L347.4 314.8 L342.6 327.3 L337.4 339.6 L331.9 351.5 L326.1 363.1 L319.8 374.3 L313.1 385.1 L306.0 395.3 L298.5 405.0 L290.5 414.1 L282.1 422.6 L273.1 430.4 L263.7 437.4 L253.7 443.6 L254.1 443.9 L264.3 437.8 L273.9 430.8 L283.0 423.1 L291.7 414.7 L299.8 405.7 L307.5 396.0 L314.7 385.7 L321.5 375.0 L327.9 363.8 L333.9 352.2 L339.5 340.2 L344.8 327.9 L349.7 315.3 L354.3 302.6 L358.6 289.7 L362.6 276.6 L366.3 263.5 L369.8 250.4 L373.0 237.4 L376.0 224.4 L378.9 211.5 L381.5 198.9 L383.9 186.5 L386.2 174.4 L388.4 162.6 L390.4 151.2 Z" fill="#5e1422"/><path d="M389.8 151.2 L387.8 162.6 L385.6 174.4 L383.3 186.5 L380.9 198.9 L378.3 211.5 L375.5 224.3 L372.5 237.3 L369.3 250.4 L365.8 263.5 L362.1 276.5 L358.1 289.6 L353.8 302.5 L349.2 315.2 L344.3 327.8 L339.1 340.1 L333.5 352.0 L327.5 363.7 L321.2 374.9 L314.4 385.6 L307.2 395.8 L299.5 405.5 L291.4 414.6 L282.8 423.0 L273.8 430.7 L264.2 437.7 L254.0 443.8 L254.9 444.5 L265.5 438.5 L275.5 431.8 L285.0 424.2 L293.9 415.9 L302.4 406.9 L310.4 397.3 L317.9 387.1 L325.0 376.3 L331.6 365.1 L337.9 353.4 L343.7 341.4 L349.2 329.0 L354.3 316.4 L359.1 303.6 L363.6 290.5 L367.7 277.4 L371.6 264.2 L375.2 251.0 L378.6 237.8 L381.7 224.8 L384.6 211.8 L387.4 199.1 L389.9 186.6 L392.3 174.4 L394.6 162.6 L396.7 151.2 Z" fill="#a0171a"/><path d="M396.1 151.2 L393.9 162.6 L391.7 174.4 L389.3 186.6 L386.8 199.1 L384.1 211.8 L381.1 224.7 L378.0 237.8 L374.7 250.9 L371.1 264.1 L367.2 277.3 L363.1 290.5 L358.6 303.5 L353.9 316.3 L348.8 328.9 L343.3 341.3 L337.5 353.3 L331.3 365.0 L324.6 376.2 L317.6 386.9 L310.1 397.1 L302.1 406.8 L293.7 415.8 L284.8 424.1 L275.3 431.7 L265.3 438.5 L254.8 444.4 L255.0 444.6 L265.7 438.7 L275.8 431.9 L285.3 424.4 L294.3 416.1 L302.9 407.1 L310.9 397.5 L318.5 387.3 L325.6 376.5 L332.3 365.3 L338.6 353.7 L344.5 341.6 L350.0 329.2 L355.2 316.6 L360.0 303.7 L364.5 290.7 L368.7 277.6 L372.6 264.3 L376.2 251.1 L379.6 237.9 L382.7 224.8 L385.7 211.9 L388.4 199.1 L391.0 186.7 L393.4 174.5 L395.7 162.6 L397.8 151.2 Z" fill="#ba6a82"/><path d="M397.2 151.2 L395.1 162.6 L392.8 174.5 L390.4 186.6 L387.8 199.1 L385.1 211.9 L382.2 224.8 L379.0 237.9 L375.7 251.1 L372.0 264.3 L368.1 277.5 L364.0 290.6 L359.5 303.6 L354.7 316.5 L349.6 329.1 L344.1 341.5 L338.2 353.5 L331.9 365.2 L325.3 376.4 L318.2 387.2 L310.6 397.4 L302.6 407.0 L294.1 416.0 L285.1 424.3 L275.6 431.8 L265.6 438.6 L254.9 444.5 L255.6 445.0 L266.6 439.3 L277.0 432.7 L286.8 425.2 L296.1 417.0 L304.9 408.1 L313.1 398.5 L320.9 388.3 L328.3 377.6 L335.2 366.3 L341.6 354.6 L347.7 342.5 L353.4 330.1 L358.7 317.4 L363.7 304.5 L368.3 291.4 L372.6 278.2 L376.6 264.9 L380.4 251.6 L383.9 238.3 L387.1 225.1 L390.1 212.1 L393.0 199.3 L395.6 186.8 L398.1 174.5 L400.4 162.6 L402.6 151.2 Z" fill="#98151a"/><path d="M402.0 151.2 L399.8 162.6 L397.5 174.5 L395.0 186.7 L392.4 199.3 L389.5 212.1 L386.5 225.1 L383.3 238.3 L379.8 251.5 L376.1 264.8 L372.1 278.1 L367.8 291.3 L363.2 304.4 L358.2 317.3 L352.9 330.0 L347.3 342.4 L341.2 354.5 L334.8 366.2 L327.9 377.4 L320.6 388.2 L312.9 398.4 L304.6 408.0 L295.9 416.9 L286.6 425.1 L276.8 432.6 L266.4 439.2 L255.5 444.9 L255.7 445.1 L266.8 439.4 L277.2 432.8 L287.1 425.4 L296.5 417.2 L305.3 408.3 L313.7 398.7 L321.5 388.6 L328.9 377.8 L335.9 366.6 L342.4 354.9 L348.5 342.8 L354.2 330.3 L359.6 317.6 L364.6 304.7 L369.2 291.5 L373.6 278.3 L377.6 265.0 L381.4 251.7 L384.9 238.4 L388.2 225.2 L391.2 212.2 L394.1 199.3 L396.7 186.8 L399.2 174.5 L401.6 162.7 L403.8 151.2 Z" fill="#86182a"/><path d="M403.2 151.2 L400.9 162.7 L398.6 174.5 L396.1 186.8 L393.5 199.3 L390.6 212.1 L387.6 225.2 L384.3 238.3 L380.8 251.6 L377.1 264.9 L373.0 278.2 L368.7 291.5 L364.1 304.6 L359.1 317.5 L353.8 330.2 L348.1 342.6 L342.0 354.7 L335.5 366.4 L328.6 377.7 L321.2 388.4 L313.4 398.6 L305.1 408.2 L296.3 417.1 L287.0 425.3 L277.1 432.7 L266.7 439.3 L255.7 445.0 L256.0 445.3 L267.1 439.6 L277.7 433.1 L287.7 425.7 L297.1 417.6 L306.1 408.7 L314.5 399.1 L322.4 388.9 L329.9 378.2 L336.9 366.9 L343.5 355.2 L349.7 343.1 L355.4 330.7 L360.8 317.9 L365.9 304.9 L370.6 291.8 L375.0 278.5 L379.1 265.2 L382.9 251.8 L386.4 238.5 L389.7 225.3 L392.8 212.3 L395.7 199.4 L398.4 186.8 L400.9 174.6 L403.3 162.7 L405.5 151.2 Z" fill="#4c1120"/><path d="M404.9 151.2 L402.7 162.7 L400.3 174.5 L397.8 186.8 L395.1 199.4 L392.2 212.2 L389.2 225.3 L385.9 238.5 L382.3 251.8 L378.5 265.1 L374.5 278.4 L370.1 291.7 L365.4 304.8 L360.4 317.8 L355.0 330.5 L349.2 343.0 L343.1 355.1 L336.5 366.8 L329.5 378.0 L322.1 388.8 L314.2 399.0 L305.8 408.5 L296.9 417.4 L287.5 425.6 L277.5 433.0 L267.0 439.5 L255.9 445.2 L256.6 445.8 L268.2 440.3 L279.1 433.9 L289.4 426.7 L299.2 418.6 L308.4 409.8 L317.1 400.3 L325.3 390.1 L333.1 379.4 L340.3 368.1 L347.1 356.4 L353.5 344.2 L359.4 331.7 L365.0 318.9 L370.2 305.8 L375.1 292.6 L379.6 279.2 L383.9 265.8 L387.8 252.4 L391.5 239.0 L394.9 225.7 L398.1 212.5 L401.0 199.6 L403.8 186.9 L406.4 174.6 L408.9 162.7 L411.2 151.2 Z" fill="#98151a"/><path d="M410.6 151.2 L408.3 162.7 L405.8 174.6 L403.2 186.9 L400.4 199.6 L397.5 212.5 L394.3 225.6 L390.9 238.9 L387.3 252.3 L383.3 265.7 L379.1 279.2 L374.6 292.5 L369.8 305.7 L364.6 318.8 L359.0 331.6 L353.1 344.1 L346.7 356.2 L339.9 368.0 L332.7 379.2 L325.0 390.0 L316.8 400.1 L308.2 409.7 L299.0 418.5 L289.2 426.6 L278.9 433.8 L268.0 440.2 L256.6 445.7 L256.9 445.9 L268.5 440.6 L279.6 434.2 L290.0 427.0 L299.9 419.0 L309.2 410.2 L318.0 400.7 L326.3 390.5 L334.1 379.8 L341.4 368.5 L348.3 356.7 L354.7 344.6 L360.8 332.0 L366.4 319.2 L371.7 306.1 L376.6 292.9 L381.2 279.5 L385.5 266.0 L389.4 252.5 L393.1 239.1 L396.6 225.8 L399.8 212.6 L402.8 199.7 L405.6 187.0 L408.3 174.7 L410.7 162.7 L413.1 151.2 Z" fill="#ba6a82"/><path d="M412.5 151.2 L410.1 162.7 L407.6 174.6 L405.0 187.0 L402.2 199.6 L399.2 212.6 L396.0 225.7 L392.6 239.1 L388.9 252.5 L384.9 265.9 L380.7 279.4 L376.1 292.8 L371.2 306.0 L365.9 319.1 L360.3 331.9 L354.3 344.4 L347.9 356.6 L341.0 368.4 L333.7 379.6 L326.0 390.4 L317.7 400.5 L308.9 410.0 L299.7 418.9 L289.8 426.9 L279.4 434.1 L268.4 440.5 L256.8 445.9 L257.5 446.4 L269.5 441.2 L280.9 435.0 L291.7 427.9 L301.8 420.0 L311.5 411.3 L320.5 401.8 L329.1 391.7 L337.1 380.9 L344.7 369.6 L351.7 357.8 L358.4 345.6 L364.6 333.0 L370.4 320.1 L375.8 307.0 L380.9 293.6 L385.6 280.2 L390.0 266.6 L394.1 253.1 L398.0 239.5 L401.5 226.1 L404.8 212.9 L407.9 199.9 L410.8 187.1 L413.5 174.7 L416.1 162.7 L418.5 151.2 Z" fill="#a0171a"/><path d="M417.9 151.2 L415.5 162.7 L412.9 174.7 L410.2 187.1 L407.3 199.8 L404.2 212.8 L400.9 226.1 L397.4 239.5 L393.6 253.0 L389.5 266.5 L385.1 280.1 L380.4 293.6 L375.4 306.9 L369.9 320.0 L364.2 332.9 L358.0 345.5 L351.3 357.7 L344.3 369.5 L336.8 380.8 L328.7 391.5 L320.2 401.7 L311.2 411.1 L301.6 419.9 L291.5 427.8 L280.7 434.9 L269.4 441.1 L257.4 446.4 L257.7 446.6 L269.8 441.4 L281.3 435.3 L292.2 428.2 L302.5 420.3 L312.2 411.6 L321.3 402.1 L329.9 392.0 L338.1 381.3 L345.7 370.0 L352.8 358.2 L359.5 346.0 L365.8 333.3 L371.7 320.4 L377.2 307.3 L382.3 293.9 L387.0 280.4 L391.5 266.8 L395.6 253.2 L399.5 239.7 L403.1 226.2 L406.4 213.0 L409.5 199.9 L412.5 187.2 L415.2 174.7 L417.8 162.7 L420.2 151.2 Z" fill="#8e1d2c"/><path d="M419.6 151.2 L417.2 162.7 L414.6 174.7 L411.9 187.1 L408.9 199.9 L405.8 212.9 L402.5 226.2 L398.9 239.6 L395.1 253.2 L390.9 266.7 L386.5 280.3 L381.8 293.8 L376.7 307.2 L371.2 320.3 L365.4 333.2 L359.1 345.8 L352.4 358.1 L345.3 369.8 L337.7 381.1 L329.6 391.9 L321.0 402.0 L311.9 411.5 L302.2 420.2 L292.0 428.1 L281.2 435.2 L269.7 441.4 L257.7 446.5 L257.9 446.7 L270.1 441.6 L281.7 435.5 L292.6 428.5 L303.0 420.6 L312.7 411.9 L322.0 402.4 L330.6 392.3 L338.8 381.6 L346.5 370.3 L353.7 358.5 L360.4 346.2 L366.8 333.6 L372.7 320.7 L378.2 307.5 L383.3 294.1 L388.1 280.6 L392.6 267.0 L396.8 253.3 L400.7 239.8 L404.3 226.3 L407.7 213.0 L410.8 200.0 L413.8 187.2 L416.5 174.8 L419.1 162.7 L421.6 151.2 Z" fill="#5e1422"/><path d="M420.9 151.2 L418.5 162.7 L415.9 174.7 L413.2 187.2 L410.2 199.9 L407.1 213.0 L403.7 226.3 L400.1 239.7 L396.2 253.3 L392.1 266.9 L387.6 280.5 L382.8 294.0 L377.7 307.4 L372.2 320.6 L366.3 333.5 L360.0 346.1 L353.3 358.3 L346.1 370.1 L338.5 381.4 L330.3 392.2 L321.7 402.3 L312.5 411.7 L302.7 420.4 L292.4 428.4 L281.5 435.4 L270.0 441.5 L257.8 446.7 L258.5 447.2 L271.0 442.2 L282.9 436.2 L294.1 429.3 L304.7 421.5 L314.8 412.8 L324.2 403.4 L333.1 393.3 L341.5 382.6 L349.4 371.3 L356.8 359.5 L363.7 347.2 L370.2 334.5 L376.3 321.5 L381.9 308.2 L387.2 294.8 L392.2 281.2 L396.8 267.5 L401.0 253.8 L405.0 240.2 L408.7 226.6 L412.2 213.3 L415.4 200.1 L418.4 187.3 L421.3 174.8 L423.9 162.8 L426.5 151.2 Z" fill="#a4191c"/><path d="M425.8 151.2 L423.3 162.8 L420.7 174.8 L417.8 187.3 L414.8 200.1 L411.6 213.2 L408.2 226.6 L404.5 240.1 L400.5 253.7 L396.2 267.4 L391.6 281.1 L386.7 294.7 L381.5 308.1 L375.8 321.4 L369.8 334.4 L363.3 347.0 L356.4 359.3 L349.0 371.2 L341.2 382.5 L332.8 393.2 L323.9 403.3 L314.5 412.7 L304.5 421.4 L293.9 429.2 L282.7 436.1 L270.9 442.1 L258.4 447.1 L258.7 447.3 L271.3 442.4 L283.3 436.5 L294.6 429.6 L305.3 421.8 L315.4 413.2 L325.0 403.8 L334.0 393.7 L342.4 382.9 L350.4 371.6 L357.8 359.8 L364.8 347.5 L371.4 334.8 L377.5 321.8 L383.2 308.5 L388.5 295.0 L393.5 281.4 L398.1 267.7 L402.4 254.0 L406.5 240.3 L410.2 226.7 L413.7 213.3 L416.9 200.2 L420.0 187.3 L422.9 174.8 L425.5 162.8 L428.1 151.2 Z" fill="#b25e78"/><path d="M427.5 151.2 L424.9 162.8 L422.2 174.8 L419.4 187.3 L416.3 200.2 L413.1 213.3 L409.6 226.7 L405.9 240.2 L401.9 253.9 L397.6 267.6 L393.0 281.3 L388.0 294.9 L382.7 308.4 L377.0 321.7 L370.9 334.7 L364.4 347.4 L357.4 359.7 L350.0 371.5 L342.1 382.8 L333.6 393.5 L324.7 403.6 L315.2 413.0 L305.1 421.7 L294.4 429.5 L283.1 436.4 L271.2 442.3 L258.6 447.2 L259.0 447.6 L271.9 442.8 L284.0 436.9 L295.6 430.1 L306.4 422.4 L316.7 413.8 L326.4 404.4 L335.5 394.3 L344.1 383.6 L352.2 372.3 L359.8 360.4 L366.9 348.1 L373.5 335.4 L379.8 322.3 L385.6 309.0 L391.0 295.5 L396.0 281.8 L400.7 268.0 L405.1 254.2 L409.2 240.5 L413.0 226.9 L416.6 213.5 L419.9 200.3 L423.0 187.4 L425.9 174.9 L428.6 162.8 L431.2 151.2 Z" fill="#a4191c"/><path d="M430.6 151.2 L428.0 162.8 L425.3 174.9 L422.4 187.4 L419.3 200.3 L416.0 213.4 L412.4 226.9 L408.6 240.5 L404.6 254.2 L400.2 267.9 L395.5 281.7 L390.5 295.4 L385.1 308.9 L379.3 322.2 L373.1 335.3 L366.5 348.0 L359.4 360.3 L351.8 372.1 L343.8 383.5 L335.2 394.2 L326.1 404.3 L316.5 413.7 L306.2 422.3 L295.4 430.0 L283.9 436.8 L271.8 442.7 L259.0 447.5 L259.3 447.7 L272.2 443.0 L284.5 437.2 L296.1 430.4 L307.1 422.7 L317.5 414.2 L327.3 404.8 L336.5 394.7 L345.1 384.0 L353.3 372.6 L360.9 360.8 L368.1 348.4 L374.8 335.7 L381.1 322.6 L386.9 309.3 L392.4 295.7 L397.5 282.0 L402.3 268.2 L406.7 254.4 L410.8 240.7 L414.6 227.0 L418.2 213.6 L421.6 200.3 L424.7 187.4 L427.6 174.9 L430.4 162.8 L433.0 151.2 Z" fill="#8e1d2c"/><path d="M432.4 151.2 L429.8 162.8 L427.0 174.9 L424.1 187.4 L421.0 200.3 L417.6 213.5 L414.1 227.0 L410.2 240.6 L406.1 254.4 L401.7 268.1 L397.0 281.9 L391.9 295.6 L386.5 309.2 L380.6 322.5 L374.4 335.6 L367.7 348.3 L360.5 360.6 L352.9 372.5 L344.8 383.8 L336.1 394.6 L327.0 404.7 L317.2 414.0 L306.9 422.6 L295.9 430.3 L284.3 437.1 L272.1 442.9 L259.2 447.7 L259.5 447.9 L272.5 443.2 L284.9 437.5 L296.6 430.7 L307.7 423.0 L318.2 414.5 L328.1 405.2 L337.4 395.1 L346.1 384.4 L354.3 373.0 L362.1 361.1 L369.3 348.8 L376.1 336.0 L382.4 322.9 L388.3 309.6 L393.8 296.0 L399.0 282.2 L403.8 268.4 L408.2 254.6 L412.4 240.8 L416.3 227.1 L419.9 213.6 L423.2 200.4 L426.4 187.5 L429.4 174.9 L432.1 162.8 L434.8 151.2 Z" fill="#641828"/><path d="M434.1 151.2 L431.5 162.8 L428.7 174.9 L425.8 187.5 L422.7 200.4 L419.3 213.6 L415.7 227.1 L411.8 240.8 L407.7 254.5 L403.2 268.3 L398.5 282.1 L393.3 295.9 L387.8 309.5 L381.9 322.8 L375.6 335.9 L368.9 348.7 L361.7 361.0 L354.0 372.9 L345.8 384.2 L337.1 395.0 L327.8 405.0 L317.9 414.4 L307.5 422.9 L296.5 430.6 L284.8 437.4 L272.4 443.1 L259.4 447.9 L260.0 448.3 L273.3 443.7 L286.0 438.1 L298.0 431.5 L309.3 423.9 L320.0 415.4 L330.1 406.1 L339.6 396.0 L348.5 385.3 L356.9 373.9 L364.8 362.0 L372.2 349.6 L379.1 336.8 L385.6 323.7 L391.6 310.2 L397.2 296.6 L402.5 282.8 L407.4 268.9 L411.9 255.0 L416.2 241.1 L420.2 227.4 L423.8 213.9 L427.3 200.6 L430.5 187.6 L433.5 175.0 L436.4 162.8 L439.1 151.2 Z" fill="#ad1f22"/><path d="M438.4 151.2 L435.7 162.8 L432.9 175.0 L429.9 187.6 L426.7 200.5 L423.3 213.8 L419.6 227.4 L415.6 241.1 L411.4 254.9 L406.9 268.8 L402.0 282.7 L396.7 296.5 L391.1 310.1 L385.1 323.6 L378.6 336.7 L371.7 349.5 L364.4 361.9 L356.5 373.8 L348.2 385.1 L339.2 395.9 L329.8 405.9 L319.7 415.2 L309.1 423.7 L297.8 431.3 L285.8 438.0 L273.2 443.7 L259.9 448.2 L260.1 448.4 L273.5 443.9 L286.2 438.2 L298.2 431.6 L309.6 424.0 L320.4 415.5 L330.5 406.3 L340.0 396.2 L349.0 385.5 L357.4 374.1 L365.4 362.2 L372.8 349.8 L379.7 337.0 L386.2 323.8 L392.3 310.4 L398.0 296.7 L403.2 282.9 L408.2 269.0 L412.7 255.1 L417.0 241.2 L421.0 227.5 L424.7 213.9 L428.1 200.6 L431.4 187.6 L434.4 175.0 L437.3 162.8 L440.0 151.2 Z" fill="#ba6a82"/><path d="M439.3 151.2 L436.6 162.8 L433.8 175.0 L430.8 187.6 L427.5 200.6 L424.1 213.9 L420.4 227.4 L416.4 241.2 L412.2 255.0 L407.6 268.9 L402.7 282.8 L397.5 296.6 L391.8 310.3 L385.8 323.7 L379.3 336.9 L372.4 349.7 L365.0 362.1 L357.1 374.0 L348.7 385.3 L339.7 396.1 L330.2 406.1 L320.1 415.4 L309.4 423.9 L298.0 431.5 L286.0 438.1 L273.4 443.8 L260.0 448.3 L260.5 448.7 L274.2 444.3 L287.1 438.8 L299.4 432.2 L310.9 424.7 L321.9 416.3 L332.2 407.0 L341.9 397.0 L351.1 386.2 L359.6 374.9 L367.7 363.0 L375.3 350.5 L382.3 337.7 L388.9 324.5 L395.1 311.0 L400.9 297.2 L406.3 283.4 L411.3 269.4 L415.9 255.4 L420.3 241.5 L424.3 227.7 L428.1 214.1 L431.6 200.7 L434.9 187.7 L438.0 175.0 L440.9 162.9 L443.7 151.2 Z" fill="#ad1f22"/><path d="M443.0 151.2 L440.3 162.8 L437.4 175.0 L434.3 187.7 L431.0 200.7 L427.5 214.0 L423.7 227.6 L419.7 241.4 L415.4 255.4 L410.7 269.3 L405.7 283.3 L400.4 297.1 L394.6 310.9 L388.5 324.4 L381.9 337.6 L374.8 350.4 L367.3 362.8 L359.3 374.7 L350.7 386.1 L341.6 396.9 L331.9 406.9 L321.6 416.2 L310.7 424.6 L299.2 432.1 L287.0 438.7 L274.1 444.2 L260.4 448.6 L260.7 448.8 L274.4 444.5 L287.5 439.0 L299.8 432.5 L311.5 425.0 L322.5 416.6 L332.9 407.3 L342.7 397.3 L351.9 386.6 L360.5 375.2 L368.6 363.3 L376.2 350.8 L383.4 337.9 L390.0 324.7 L396.3 311.2 L402.1 297.4 L407.5 283.5 L412.5 269.6 L417.2 255.6 L421.6 241.6 L425.7 227.8 L429.5 214.1 L433.0 200.8 L436.3 187.7 L439.4 175.0 L442.4 162.9 L445.1 151.2 Z" fill="#8e1d2c"/><path d="M444.5 151.2 L441.7 162.9 L438.8 175.0 L435.7 187.7 L432.4 200.7 L428.9 214.1 L425.1 227.7 L421.0 241.6 L416.7 255.5 L412.0 269.5 L407.0 283.5 L401.6 297.4 L395.8 311.1 L389.6 324.6 L382.9 337.8 L375.8 350.7 L368.2 363.1 L360.1 375.1 L351.5 386.4 L342.3 397.2 L332.6 407.2 L322.2 416.5 L311.2 424.9 L299.6 432.4 L287.3 438.9 L274.3 444.4 L260.6 448.8 L260.9 449.0 L274.8 444.7 L288.0 439.3 L300.4 432.8 L312.2 425.4 L323.3 417.0 L333.8 407.7 L343.7 397.7 L353.0 387.0 L361.7 375.6 L369.9 363.7 L377.6 351.2 L384.7 338.3 L391.5 325.1 L397.7 311.5 L403.6 297.7 L409.1 283.8 L414.2 269.8 L418.9 255.7 L423.3 241.8 L427.4 227.9 L431.3 214.2 L434.8 200.8 L438.2 187.7 L441.3 175.1 L444.3 162.9 L447.1 151.2 Z" fill="#561424"/><path d="M446.5 151.2 L443.7 162.9 L440.7 175.1 L437.6 187.7 L434.3 200.8 L430.7 214.2 L426.9 227.9 L422.8 241.7 L418.4 255.7 L413.6 269.7 L408.6 283.7 L403.1 297.6 L397.3 311.4 L391.0 324.9 L384.3 338.2 L377.1 351.1 L369.5 363.5 L361.3 375.5 L352.6 386.8 L343.3 397.6 L333.5 407.6 L323.0 416.8 L312.0 425.2 L300.2 432.7 L287.8 439.2 L274.7 444.6 L260.8 449.0 L261.5 449.4 L275.7 445.3 L289.1 440.0 L301.9 433.7 L313.9 426.3 L325.3 417.9 L336.0 408.7 L346.1 398.7 L355.6 388.0 L364.5 376.6 L372.9 364.6 L380.8 352.1 L388.1 339.2 L395.0 325.9 L401.4 312.3 L407.4 298.4 L413.0 284.4 L418.2 270.3 L423.1 256.2 L427.6 242.1 L431.8 228.2 L435.7 214.5 L439.4 201.0 L442.8 187.9 L446.0 175.1 L449.0 162.9 L451.9 151.2 Z" fill="#98151a"/><path d="M451.3 151.2 L448.4 162.9 L445.4 175.1 L442.2 187.8 L438.8 201.0 L435.1 214.4 L431.2 228.2 L427.0 242.1 L422.5 256.1 L417.7 270.2 L412.5 284.3 L406.9 298.3 L400.9 312.2 L394.5 325.8 L387.7 339.1 L380.4 352.0 L372.5 364.5 L364.2 376.5 L355.3 387.9 L345.8 398.6 L335.7 408.6 L325.0 417.8 L313.7 426.2 L301.7 433.5 L289.0 439.9 L275.6 445.2 L261.4 449.4 L261.7 449.6 L276.0 445.5 L289.5 440.2 L302.3 433.9 L314.4 426.5 L325.9 418.2 L336.7 409.0 L346.9 399.0 L356.4 388.3 L365.4 376.9 L373.9 364.9 L381.8 352.4 L389.2 339.5 L396.1 326.1 L402.6 312.5 L408.6 298.6 L414.2 284.6 L419.5 270.5 L424.3 256.3 L428.9 242.3 L433.1 228.3 L437.1 214.5 L440.8 201.0 L444.2 187.9 L447.4 175.2 L450.5 162.9 L453.4 151.2 Z" fill="#ad5a70"/><path d="M452.7 151.2 L449.9 162.9 L446.8 175.1 L443.6 187.9 L440.2 201.0 L436.5 214.5 L432.5 228.3 L428.3 242.2 L423.8 256.3 L418.9 270.4 L413.7 284.5 L408.1 298.5 L402.1 312.4 L395.6 326.0 L388.7 339.4 L381.3 352.3 L373.5 364.8 L365.0 376.8 L356.1 388.2 L346.5 398.9 L336.4 408.9 L325.6 418.1 L314.2 426.4 L302.1 433.8 L289.3 440.2 L275.8 445.4 L261.6 449.5 L262.2 449.9 L276.7 446.0 L290.5 440.9 L303.6 434.6 L316.0 427.3 L327.6 419.1 L338.6 409.9 L349.0 399.9 L358.7 389.2 L367.9 377.8 L376.5 365.8 L384.6 353.2 L392.1 340.2 L399.2 326.9 L405.8 313.2 L411.9 299.2 L417.6 285.1 L423.0 270.9 L428.0 256.7 L432.6 242.6 L436.9 228.6 L440.9 214.7 L444.7 201.2 L448.2 188.0 L451.5 175.2 L454.6 162.9 L457.5 151.2 Z" fill="#a0171a"/><path d="M456.9 151.2 L454.0 162.9 L450.9 175.2 L447.6 188.0 L444.1 201.2 L440.3 214.7 L436.3 228.5 L432.0 242.5 L427.4 256.7 L422.4 270.9 L417.1 285.1 L411.4 299.1 L405.3 313.1 L398.7 326.7 L391.7 340.1 L384.1 353.1 L376.1 365.7 L367.5 377.7 L358.4 389.1 L348.7 399.8 L338.3 409.8 L327.4 418.9 L315.7 427.2 L303.4 434.5 L290.4 440.8 L276.6 445.9 L262.1 449.9 L262.4 450.1 L277.1 446.2 L291.0 441.2 L304.2 435.0 L316.6 427.7 L328.4 419.5 L339.5 410.3 L350.0 400.3 L359.8 389.6 L369.0 378.2 L377.7 366.2 L385.8 353.6 L393.5 340.6 L400.6 327.2 L407.2 313.5 L413.4 299.5 L419.2 285.4 L424.6 271.2 L429.6 256.9 L434.3 242.7 L438.6 228.7 L442.7 214.8 L446.5 201.2 L450.0 188.0 L453.4 175.2 L456.5 162.9 L459.4 151.2 Z" fill="#7c1524"/><path d="M458.8 151.2 L455.9 162.9 L452.7 175.2 L449.4 188.0 L445.9 201.2 L442.1 214.8 L438.1 228.6 L433.7 242.7 L429.1 256.9 L424.1 271.1 L418.7 285.3 L412.9 299.4 L406.7 313.4 L400.1 327.1 L393.0 340.5 L385.4 353.5 L377.3 366.0 L368.7 378.1 L359.4 389.5 L349.6 400.2 L339.2 410.2 L328.1 419.3 L316.4 427.6 L304.0 434.8 L290.8 441.1 L277.0 446.2 L262.3 450.1 L262.6 450.3 L277.4 446.4 L291.4 441.4 L304.7 435.2 L317.3 428.0 L329.1 419.8 L340.3 410.7 L350.8 400.7 L360.7 390.0 L370.1 378.6 L378.8 366.5 L387.0 354.0 L394.7 340.9 L401.8 327.5 L408.5 313.7 L414.8 299.7 L420.6 285.6 L426.0 271.3 L431.1 257.1 L435.8 242.9 L440.2 228.8 L444.3 214.9 L448.1 201.3 L451.7 188.1 L455.0 175.2 L458.2 162.9 L461.2 151.2 Z" fill="#5e1422"/><path d="M460.5 151.2 L457.5 162.9 L454.4 175.2 L451.1 188.0 L447.5 201.3 L443.7 214.9 L439.6 228.7 L435.2 242.8 L430.5 257.0 L425.5 271.3 L420.1 285.5 L414.3 299.7 L408.0 313.6 L401.4 327.4 L394.2 340.8 L386.6 353.8 L378.4 366.4 L369.7 378.4 L360.4 389.8 L350.5 400.6 L340.0 410.5 L328.8 419.7 L317.0 427.9 L304.5 435.1 L291.3 441.3 L277.3 446.4 L262.5 450.2 L262.9 450.5 L277.9 446.8 L292.1 441.8 L305.6 435.7 L318.3 428.5 L330.3 420.4 L341.6 411.3 L352.3 401.3 L362.3 390.6 L371.7 379.2 L380.6 367.1 L388.9 354.5 L396.6 341.4 L403.9 328.0 L410.7 314.2 L417.0 300.2 L422.9 286.0 L428.4 271.7 L433.5 257.3 L438.3 243.1 L442.7 229.0 L446.9 215.0 L450.8 201.4 L454.4 188.1 L457.8 175.3 L461.0 162.9 L464.0 151.2 Z" fill="#98151a"/><path d="M463.3 151.2 L460.3 162.9 L457.2 175.3 L453.8 188.1 L450.2 201.4 L446.3 215.0 L442.2 228.9 L437.7 243.0 L433.0 257.3 L427.9 271.6 L422.4 285.9 L416.5 300.1 L410.2 314.1 L403.4 327.9 L396.2 341.3 L388.5 354.4 L380.2 367.0 L371.4 379.0 L362.0 390.4 L351.9 401.2 L341.3 411.1 L330.0 420.2 L318.0 428.4 L305.4 435.6 L292.0 441.7 L277.8 446.7 L262.8 450.5 L263.0 450.6 L278.1 446.9 L292.4 442.0 L305.9 435.9 L318.7 428.8 L330.7 420.6 L342.1 411.5 L352.8 401.6 L362.9 390.8 L372.4 379.4 L381.3 367.3 L389.6 354.7 L397.4 341.7 L404.7 328.2 L411.5 314.4 L417.9 300.3 L423.8 286.1 L429.4 271.8 L434.5 257.5 L439.3 243.2 L443.8 229.0 L447.9 215.1 L451.8 201.4 L455.5 188.2 L458.9 175.3 L462.1 163.0 L465.1 151.2 Z" fill="#b25e78"/><path d="M464.5 151.2 L461.4 163.0 L458.2 175.3 L454.8 188.1 L451.2 201.4 L447.3 215.1 L443.2 229.0 L438.7 243.1 L434.0 257.4 L428.8 271.7 L423.3 286.0 L417.4 300.2 L411.1 314.3 L404.3 328.1 L397.0 341.5 L389.2 354.6 L380.9 367.2 L372.0 379.3 L362.6 390.7 L352.5 401.4 L341.8 411.4 L330.5 420.5 L318.4 428.6 L305.7 435.8 L292.2 441.9 L278.0 446.8 L263.0 450.6 L263.4 450.9 L278.6 447.3 L293.1 442.4 L306.8 436.4 L319.7 429.3 L332.0 421.2 L343.5 412.1 L354.3 402.2 L364.6 391.5 L374.2 380.0 L383.2 367.9 L391.6 355.3 L399.5 342.2 L406.9 328.7 L413.8 314.8 L420.2 300.7 L426.3 286.5 L431.9 272.1 L437.1 257.7 L441.9 243.4 L446.4 229.2 L450.7 215.2 L454.6 201.5 L458.3 188.2 L461.7 175.3 L465.0 163.0 L468.1 151.2 Z" fill="#98151a"/><path d="M467.4 151.2 L464.4 163.0 L461.1 175.3 L457.7 188.2 L454.0 201.5 L450.1 215.2 L445.9 229.2 L441.4 243.4 L436.5 257.7 L431.3 272.0 L425.7 286.4 L419.7 300.7 L413.3 314.7 L406.4 328.6 L399.1 342.1 L391.2 355.2 L382.8 367.8 L373.8 379.9 L364.2 391.3 L354.0 402.0 L343.2 412.0 L331.7 421.1 L319.5 429.2 L306.6 436.3 L293.0 442.3 L278.5 447.2 L263.3 450.8 L263.5 451.0 L278.8 447.4 L293.3 442.6 L307.1 436.6 L320.1 429.5 L332.4 421.4 L343.9 412.3 L354.8 402.4 L365.1 391.7 L374.7 380.2 L383.8 368.1 L392.2 355.5 L400.2 342.4 L407.6 328.8 L414.5 315.0 L421.0 300.9 L427.0 286.6 L432.6 272.2 L437.9 257.8 L442.8 243.5 L447.3 229.3 L451.5 215.3 L455.5 201.6 L459.2 188.2 L462.6 175.3 L465.9 163.0 L469.0 151.2 Z" fill="#7c1524"/><path d="M468.5 151.2 L465.4 163.0 L462.1 175.3 L458.7 188.2 L455.0 201.6 L451.0 215.3 L446.8 229.2 L442.3 243.4 L437.4 257.8 L432.2 272.2 L426.6 286.5 L420.6 300.8 L414.1 314.9 L407.2 328.8 L399.8 342.3 L391.9 355.4 L383.4 368.0 L374.4 380.1 L364.8 391.5 L354.6 402.3 L343.7 412.2 L332.1 421.3 L319.9 429.4 L306.9 436.5 L293.2 442.5 L278.7 447.3 L263.4 450.9 L263.5 451.0 L278.8 447.4 L293.3 442.6 L307.1 436.6 L320.1 429.5 L332.4 421.4 L343.9 412.3 L354.8 402.4 L365.1 391.7 L374.7 380.2 L383.8 368.1 L392.2 355.5 L400.2 342.4 L407.6 328.8 L414.5 315.0 L421.0 300.9 L427.0 286.6 L432.6 272.2 L437.9 257.8 L442.8 243.5 L447.3 229.3 L451.5 215.3 L455.5 201.6 L459.2 188.2 L462.6 175.3 L465.9 163.0 L469.0 151.2 Z" fill="#5e1422"/><path d="M468.5 151.2 L465.5 163.0 L462.2 175.3 L458.7 188.2 L455.0 201.6 L451.1 215.3 L446.9 229.2 L442.3 243.4 L437.5 257.8 L432.3 272.2 L426.6 286.5 L420.6 300.8 L414.2 314.9 L407.3 328.8 L399.9 342.3 L391.9 355.4 L383.5 368.0 L374.4 380.1 L364.8 391.6 L354.6 402.3 L343.7 412.2 L332.2 421.3 L319.9 429.4 L306.9 436.5 L293.2 442.5 L278.7 447.3 L263.4 450.9 L263.5 451.0 L278.8 447.4 L293.3 442.6 L307.1 436.6 L320.1 429.5 L332.4 421.4 L343.9 412.3 L354.8 402.4 L365.1 391.7 L374.7 380.2 L383.8 368.1 L392.2 355.5 L400.2 342.4 L407.6 328.8 L414.5 315.0 L421.0 300.9 L427.0 286.6 L432.6 272.2 L437.9 257.8 L442.8 243.5 L447.3 229.3 L451.5 215.3 L455.5 201.6 L459.2 188.2 L462.6 175.3 L465.9 163.0 L469.0 151.2 Z" fill="#ad1f22"/><path d="M468.7 151.2 L465.6 163.0 L462.4 175.3 L458.9 188.2 L455.2 201.6 L451.3 215.3 L447.0 229.3 L442.5 243.5 L437.6 257.8 L432.4 272.2 L426.8 286.6 L420.8 300.8 L414.3 314.9 L407.4 328.8 L400.0 342.3 L392.1 355.4 L383.6 368.1 L374.6 380.2 L364.9 391.6 L354.7 402.3 L343.8 412.3 L332.2 421.3 L320.0 429.4 L307.0 436.5 L293.3 442.5 L278.8 447.4 L263.5 450.9 L263.5 451.0 L278.8 447.4 L293.3 442.6 L307.1 436.6 L320.1 429.5 L332.4 421.4 L343.9 412.3 L354.8 402.4 L365.1 391.7 L374.7 380.2 L383.8 368.1 L392.2 355.5 L400.2 342.4 L407.6 328.8 L414.5 315.0 L421.0 300.9 L427.0 286.6 L432.6 272.2 L437.9 257.8 L442.8 243.5 L447.3 229.3 L451.5 215.3 L455.5 201.6 L459.2 188.2 L462.6 175.3 L465.9 163.0 L469.0 151.2 Z" fill="#a8546e"/><path d="M468.8 151.2 L465.7 163.0 L462.4 175.3 L459.0 188.2 L455.3 201.6 L451.3 215.3 L447.1 229.3 L442.6 243.5 L437.7 257.8 L432.5 272.2 L426.9 286.6 L420.8 300.9 L414.4 315.0 L407.4 328.8 L400.0 342.3 L392.1 355.5 L383.6 368.1 L374.6 380.2 L365.0 391.6 L354.7 402.3 L343.8 412.3 L332.3 421.3 L320.0 429.5 L307.0 436.6 L293.3 442.6 L278.8 447.4 L263.5 450.9 L263.5 451.0 L278.8 447.4 L293.3 442.6 L307.1 436.6 L320.1 429.5 L332.4 421.4 L343.9 412.3 L354.8 402.4 L365.1 391.7 L374.7 380.2 L383.8 368.1 L392.2 355.5 L400.2 342.4 L407.6 328.8 L414.5 315.0 L421.0 300.9 L427.0 286.6 L432.6 272.2 L437.9 257.8 L442.8 243.5 L447.3 229.3 L451.5 215.3 L455.5 201.6 L459.2 188.2 L462.6 175.3 L465.9 163.0 L469.0 151.2 Z" fill="#98151a"/><path d="M468.9 151.2 L465.8 163.0 L462.6 175.3 L459.1 188.2 L455.4 201.6 L451.5 215.3 L447.2 229.3 L442.7 243.5 L437.8 257.8 L432.6 272.2 L427.0 286.6 L420.9 300.9 L414.5 315.0 L407.6 328.8 L400.1 342.4 L392.2 355.5 L383.7 368.1 L374.7 380.2 L365.0 391.6 L354.8 402.4 L343.9 412.3 L332.3 421.4 L320.1 429.5 L307.1 436.6 L293.3 442.6 L278.8 447.4 L263.5 450.9 L263.5 451.0 L278.8 447.4 L293.3 442.6 L307.1 436.6 L320.1 429.5 L332.4 421.4 L343.9 412.3 L354.8 402.4 L365.1 391.7 L374.7 380.2 L383.8 368.1 L392.2 355.5 L400.2 342.4 L407.6 328.8 L414.5 315.0 L421.0 300.9 L427.0 286.6 L432.6 272.2 L437.9 257.8 L442.8 243.5 L447.3 229.3 L451.5 215.3 L455.5 201.6 L459.2 188.2 L462.6 175.3 L465.9 163.0 L469.0 151.2 Z" fill="#7c1524"/><path d="M152.9 367.5 L152.9 388.2 L152.9 410.1 L152.9 432.7 L152.9 455.8 L152.9 479.2 L152.9 502.7 L152.9 525.8 L152.9 548.4 L152.9 570.3 L152.9 591.0 L154.5 591.0 L154.5 570.4 L154.5 548.7 L154.5 526.2 L154.5 503.2 L154.6 479.9 L154.6 456.6 L154.6 433.6 L154.7 411.1 L154.7 389.5 L154.7 368.9 Z" fill="#4c1120"/><path d="M154.4 368.6 L154.4 389.2 L154.3 410.9 L154.3 433.5 L154.3 456.5 L154.3 479.8 L154.2 503.1 L154.2 526.1 L154.2 548.7 L154.2 570.4 L154.2 591.0 L156.4 591.0 L156.4 570.5 L156.4 549.0 L156.5 526.7 L156.6 503.9 L156.6 480.7 L156.7 457.6 L156.8 434.8 L156.8 412.5 L156.9 391.0 L156.9 370.5 Z" fill="#ad1f22"/><path d="M156.5 370.2 L156.5 390.7 L156.5 412.3 L156.4 434.6 L156.4 457.5 L156.3 480.6 L156.3 503.8 L156.2 526.6 L156.1 549.0 L156.1 570.5 L156.1 591.0 L157.5 591.0 L157.5 570.6 L157.6 549.2 L157.7 527.0 L157.8 504.2 L157.9 481.2 L158.0 458.2 L158.0 435.5 L158.1 413.3 L158.2 391.8 L158.2 371.5 Z" fill="#a8546e"/><path d="M157.8 371.2 L157.8 391.6 L157.8 413.1 L157.7 435.3 L157.6 458.1 L157.5 481.1 L157.5 504.1 L157.4 526.9 L157.3 549.2 L157.3 570.6 L157.2 591.0 L159.5 591.0 L159.5 570.8 L159.6 549.5 L159.7 527.5 L159.8 504.9 L160.0 482.1 L160.1 459.3 L160.2 436.7 L160.3 414.6 L160.4 393.4 L160.4 373.2 Z" fill="#a4191c"/><path d="M160.1 372.9 L160.1 393.2 L160.0 414.4 L159.9 436.5 L159.8 459.1 L159.7 482.0 L159.5 504.8 L159.4 527.4 L159.3 549.5 L159.2 570.8 L159.2 591.0 L160.5 591.0 L160.5 570.9 L160.6 549.7 L160.7 527.7 L160.9 505.2 L161.0 482.5 L161.2 459.8 L161.3 437.3 L161.4 415.3 L161.5 394.1 L161.5 374.0 Z" fill="#7c1524"/><path d="M161.2 373.8 L161.2 393.9 L161.1 415.1 L161.0 437.1 L160.9 459.6 L160.7 482.4 L160.6 505.1 L160.4 527.7 L160.3 549.6 L160.2 570.8 L160.2 591.0 L161.5 591.0 L161.5 570.9 L161.6 549.9 L161.8 528.0 L161.9 505.6 L162.1 482.9 L162.3 460.3 L162.4 437.9 L162.6 416.0 L162.7 394.9 L162.7 374.9 Z" fill="#561424"/><path d="M162.4 374.6 L162.3 394.7 L162.2 415.8 L162.1 437.7 L162.0 460.1 L161.8 482.8 L161.6 505.5 L161.5 527.9 L161.3 549.8 L161.2 570.9 L161.2 591.0 L163.0 591.0 L163.1 571.1 L163.2 550.1 L163.4 528.4 L163.6 506.1 L163.8 483.6 L164.0 461.1 L164.1 438.8 L164.3 417.1 L164.4 396.1 L164.4 376.2 Z" fill="#98151a"/><path d="M164.1 375.9 L164.1 395.9 L164.0 416.9 L163.8 438.6 L163.6 460.9 L163.4 483.5 L163.2 506.0 L163.1 528.3 L162.9 550.1 L162.8 571.0 L162.7 591.0 L164.0 591.0 L164.0 571.1 L164.2 550.3 L164.4 528.6 L164.6 506.4 L164.8 484.0 L165.0 461.6 L165.2 439.4 L165.4 417.8 L165.5 396.9 L165.5 377.0 Z" fill="#a8546e"/><path d="M165.2 376.8 L165.2 396.6 L165.1 417.6 L164.9 439.2 L164.7 461.4 L164.5 483.9 L164.3 506.3 L164.1 528.5 L163.9 550.2 L163.7 571.1 L163.7 591.0 L165.1 591.0 L165.1 571.2 L165.3 550.4 L165.5 528.9 L165.7 506.8 L166.0 484.5 L166.2 462.2 L166.4 440.1 L166.6 418.5 L166.7 397.7 L166.8 378.0 Z" fill="#a0171a"/><path d="M166.4 377.7 L166.4 397.5 L166.3 418.3 L166.1 439.9 L165.9 462.0 L165.7 484.4 L165.4 506.7 L165.2 528.8 L165.0 550.4 L164.9 571.2 L164.8 591.0 L166.4 591.0 L166.5 571.3 L166.7 550.7 L166.9 529.2 L167.2 507.3 L167.5 485.1 L167.7 462.9 L168.0 440.9 L168.1 419.5 L168.3 398.8 L168.3 379.1 Z" fill="#7c1524"/><path d="M168.0 378.9 L167.9 398.6 L167.8 419.3 L167.6 440.7 L167.4 462.7 L167.1 484.9 L166.9 507.2 L166.6 529.1 L166.4 550.6 L166.2 571.3 L166.1 591.0 L168.0 591.0 L168.1 571.5 L168.3 550.9 L168.6 529.6 L168.9 507.8 L169.2 485.7 L169.5 463.7 L169.7 441.9 L169.9 420.6 L170.1 400.0 L170.1 380.5 Z" fill="#641828"/><path d="M169.8 380.2 L169.7 399.8 L169.6 420.4 L169.4 441.7 L169.1 463.5 L168.8 485.6 L168.5 507.7 L168.3 529.5 L168.0 550.9 L167.8 571.4 L167.7 591.0 L170.0 591.0 L170.2 571.6 L170.4 551.2 L170.7 530.1 L171.0 508.5 L171.4 486.6 L171.7 464.7 L172.0 443.1 L172.2 422.0 L172.4 401.6 L172.4 382.2 Z" fill="#a4191c"/><path d="M172.1 382.0 L172.0 401.4 L171.9 421.8 L171.7 442.9 L171.4 464.6 L171.1 486.5 L170.7 508.4 L170.4 530.0 L170.1 551.2 L169.9 571.6 L169.7 591.0 L170.9 591.0 L171.0 571.7 L171.3 551.4 L171.6 530.3 L171.9 508.8 L172.3 487.0 L172.6 465.2 L173.0 443.6 L173.2 422.6 L173.3 402.3 L173.4 383.0 Z" fill="#bf768c"/><path d="M173.0 382.7 L173.0 402.0 L172.9 422.4 L172.6 443.4 L172.3 465.0 L172.0 486.9 L171.6 508.7 L171.3 530.3 L171.0 551.3 L170.7 571.7 L170.6 591.0 L172.4 591.0 L172.6 571.8 L172.9 551.6 L173.2 530.7 L173.6 509.3 L174.0 487.6 L174.4 466.0 L174.7 444.6 L175.0 423.6 L175.1 403.5 L175.2 384.3 Z" fill="#98151a"/><path d="M174.8 384.0 L174.8 403.2 L174.6 423.4 L174.4 444.4 L174.0 465.8 L173.7 487.5 L173.3 509.2 L172.9 530.7 L172.6 551.6 L172.3 571.8 L172.1 591.0 L173.1 591.0 L173.3 571.9 L173.6 551.8 L174.0 530.9 L174.4 509.5 L174.8 487.9 L175.1 466.3 L175.5 445.0 L175.7 424.1 L175.9 404.0 L176.0 384.9 Z" fill="#86182a"/><path d="M175.6 384.6 L175.6 403.8 L175.4 423.9 L175.2 444.8 L174.8 466.2 L174.4 487.8 L174.0 509.4 L173.7 530.8 L173.3 551.7 L173.0 571.9 L172.8 591.0 L174.5 591.0 L174.8 572.0 L175.1 552.0 L175.5 531.3 L175.9 510.0 L176.3 488.6 L176.7 467.1 L177.1 445.9 L177.4 425.1 L177.5 405.1 L177.6 386.1 Z" fill="#641828"/><path d="M177.2 385.9 L177.2 404.9 L177.0 424.9 L176.7 445.7 L176.4 466.9 L176.0 488.4 L175.6 509.9 L175.1 531.2 L174.8 551.9 L174.5 572.0 L174.2 591.0 L176.7 591.0 L177.0 572.2 L177.3 552.3 L177.8 531.8 L178.2 510.8 L178.7 489.5 L179.1 468.2 L179.5 447.2 L179.8 426.6 L180.0 406.8 L180.0 388.0 Z" fill="#98151a"/><path d="M179.7 387.7 L179.7 406.6 L179.5 426.4 L179.2 447.0 L178.8 468.1 L178.4 489.4 L177.9 510.7 L177.4 531.7 L177.0 552.3 L176.7 572.1 L176.4 591.0 L177.8 591.0 L178.1 572.3 L178.5 552.5 L179.0 532.1 L179.4 511.2 L179.9 490.0 L180.4 468.8 L180.8 447.9 L181.1 427.4 L181.3 407.7 L181.3 389.0 Z" fill="#ad5a70"/><path d="M181.0 388.7 L181.0 407.5 L180.8 427.2 L180.5 447.7 L180.1 468.7 L179.6 489.9 L179.1 511.1 L178.7 532.0 L178.2 552.5 L177.8 572.2 L177.6 591.0 L179.5 591.0 L179.8 572.4 L180.2 552.8 L180.7 532.5 L181.2 511.7 L181.7 490.7 L182.2 469.6 L182.6 448.9 L183.0 428.6 L183.2 409.0 L183.2 390.3 Z" fill="#a0171a"/><path d="M182.8 390.1 L182.8 408.7 L182.6 428.3 L182.3 448.7 L181.9 469.5 L181.4 490.5 L180.9 511.6 L180.4 532.4 L179.9 552.7 L179.5 572.4 L179.2 591.0 L180.9 591.0 L181.2 572.5 L181.7 553.0 L182.2 532.8 L182.7 512.2 L183.3 491.3 L183.8 470.4 L184.2 449.7 L184.6 429.5 L184.8 410.1 L184.8 391.6 Z" fill="#8e1d2c"/><path d="M184.5 391.3 L184.4 409.8 L184.2 429.3 L183.9 449.5 L183.4 470.2 L182.9 491.2 L182.4 512.1 L181.9 532.8 L181.3 553.0 L180.9 572.5 L180.6 591.0 L182.0 591.0 L182.4 572.6 L182.8 553.2 L183.4 533.1 L183.9 512.6 L184.5 491.8 L185.0 471.0 L185.5 450.4 L185.8 430.3 L186.0 410.9 L186.1 392.5 Z" fill="#4c1120"/><path d="M185.7 392.3 L185.7 410.7 L185.5 430.1 L185.2 450.2 L184.7 470.8 L184.2 491.6 L183.6 512.5 L183.1 533.1 L182.5 553.2 L182.1 572.6 L181.7 591.0 L183.3 591.0 L183.7 572.7 L184.2 553.4 L184.7 533.4 L185.3 513.0 L185.9 492.3 L186.5 471.6 L186.9 451.2 L187.3 431.2 L187.5 411.9 L187.5 393.6 Z" fill="#a0171a"/><path d="M187.2 393.4 L187.2 411.7 L187.0 431.0 L186.6 451.0 L186.1 471.5 L185.6 492.2 L185.0 512.9 L184.4 533.4 L183.8 553.4 L183.4 572.7 L183.0 591.0 L184.2 591.0 L184.6 572.8 L185.1 553.6 L185.7 533.7 L186.3 513.3 L186.9 492.7 L187.5 472.1 L188.0 451.7 L188.3 431.8 L188.5 412.6 L188.6 394.4 Z" fill="#b25e78"/><path d="M188.2 394.2 L188.2 412.4 L188.0 431.6 L187.6 451.6 L187.1 471.9 L186.6 492.6 L186.0 513.2 L185.4 533.6 L184.8 553.5 L184.3 572.7 L183.9 591.0 L185.3 591.0 L185.8 572.8 L186.3 553.8 L186.9 534.0 L187.6 513.7 L188.2 493.2 L188.8 472.7 L189.3 452.4 L189.7 432.6 L189.9 413.6 L189.9 395.4 Z" fill="#ad1f22"/><path d="M189.6 395.2 L189.5 413.3 L189.3 432.4 L188.9 452.3 L188.5 472.6 L187.9 493.1 L187.3 513.6 L186.6 533.9 L186.0 553.7 L185.5 572.8 L185.0 591.0 L186.6 591.0 L187.1 572.9 L187.6 554.0 L188.3 534.3 L188.9 514.1 L189.6 493.7 L190.2 473.4 L190.7 453.2 L191.1 433.5 L191.3 414.5 L191.3 396.5 Z" fill="#86182a"/><path d="M191.0 396.2 L191.0 414.3 L190.8 433.3 L190.4 453.0 L189.9 473.2 L189.3 493.6 L188.6 514.0 L188.0 534.2 L187.3 553.9 L186.8 572.9 L186.3 591.0 L188.1 591.0 L188.6 573.1 L189.2 554.2 L189.9 534.7 L190.6 514.6 L191.3 494.4 L191.9 474.2 L192.4 454.1 L192.8 434.6 L193.0 415.7 L193.1 397.8 Z" fill="#4c1120"/><path d="M192.7 397.5 L192.7 415.5 L192.5 434.4 L192.1 454.0 L191.6 474.0 L191.0 494.3 L190.3 514.5 L189.6 534.6 L188.9 554.2 L188.3 573.0 L187.8 591.0 L190.3 591.0 L190.8 573.2 L191.5 554.6 L192.2 535.2 L193.0 515.4 L193.7 495.3 L194.3 475.3 L194.9 455.4 L195.3 436.1 L195.5 417.4 L195.5 399.7 Z" fill="#ad1f22"/><path d="M195.2 399.4 L195.2 417.2 L195.0 435.9 L194.5 455.3 L194.0 475.1 L193.3 495.2 L192.6 515.3 L191.9 535.1 L191.2 554.5 L190.5 573.2 L190.0 591.0 L191.5 591.0 L192.1 573.3 L192.8 554.8 L193.5 535.5 L194.3 515.8 L195.0 495.8 L195.7 475.9 L196.2 456.2 L196.7 436.9 L196.9 418.3 L196.9 400.7 Z" fill="#ba6a82"/><path d="M196.5 400.4 L196.5 418.1 L196.3 436.7 L195.9 456.0 L195.3 475.7 L194.7 495.7 L193.9 515.7 L193.2 535.4 L192.4 554.7 L191.8 573.3 L191.2 591.0 L193.3 591.0 L193.9 573.5 L194.6 555.1 L195.4 536.0 L196.2 516.4 L197.0 496.6 L197.7 476.8 L198.3 457.3 L198.7 438.2 L198.9 419.7 L198.9 402.2 Z" fill="#a81b1e"/><path d="M198.6 402.0 L198.6 419.5 L198.4 438.0 L197.9 457.1 L197.4 476.7 L196.7 496.5 L195.9 516.3 L195.1 535.9 L194.3 555.0 L193.6 573.5 L193.0 591.0 L193.8 591.0 L194.4 573.5 L195.2 555.1 L196.0 536.1 L196.8 516.6 L197.6 496.8 L198.3 477.1 L198.8 457.6 L199.3 438.5 L199.5 420.1 L199.5 402.7 Z" fill="#8e1d2c"/><path d="M199.2 402.4 L199.2 419.9 L198.9 438.3 L198.5 457.4 L197.9 476.9 L197.2 496.7 L196.5 516.5 L195.7 536.0 L194.9 555.1 L194.1 573.5 L193.5 591.0 L194.8 591.0 L195.5 573.6 L196.3 555.3 L197.1 536.3 L197.9 516.9 L198.7 497.3 L199.5 477.6 L200.1 458.2 L200.5 439.3 L200.7 421.0 L200.7 403.6 Z" fill="#641828"/><path d="M200.4 403.3 L200.4 420.7 L200.2 439.1 L199.7 458.0 L199.1 477.5 L198.4 497.2 L197.6 516.8 L196.8 536.3 L196.0 555.3 L195.2 573.6 L194.5 591.0 L196.4 591.0 L197.1 573.7 L197.9 555.6 L198.8 536.7 L199.7 517.5 L200.5 498.0 L201.2 478.5 L201.8 459.2 L202.3 440.3 L202.5 422.2 L202.5 404.9 Z" fill="#a4191c"/><path d="M202.2 404.7 L202.2 422.0 L201.9 440.1 L201.5 459.0 L200.9 478.3 L200.2 497.8 L199.3 517.4 L198.5 536.7 L197.6 555.5 L196.8 573.7 L196.1 591.0 L197.0 591.0 L197.7 573.8 L198.6 555.7 L199.5 536.9 L200.3 517.7 L201.2 498.2 L201.9 478.8 L202.5 459.5 L203.0 440.8 L203.2 422.7 L203.2 405.4 Z" fill="#ad5a70"/><path d="M202.8 405.2 L202.9 422.4 L202.6 440.6 L202.2 459.4 L201.6 478.6 L200.8 498.1 L200.0 517.6 L199.1 536.8 L198.3 555.6 L197.4 573.8 L196.7 591.0 L198.1 591.0 L198.9 573.9 L199.8 555.9 L200.7 537.2 L201.6 518.0 L202.4 498.7 L203.2 479.3 L203.8 460.2 L204.2 441.5 L204.5 423.5 L204.4 406.4 Z" fill="#a4191c"/><path d="M204.1 406.1 L204.1 423.3 L203.9 441.3 L203.5 460.0 L202.8 479.2 L202.1 498.6 L201.2 517.9 L200.3 537.1 L199.4 555.8 L198.6 573.8 L197.8 591.0 L199.1 591.0 L199.9 573.9 L200.8 556.0 L201.8 537.4 L202.7 518.4 L203.6 499.1 L204.3 479.9 L205.0 460.8 L205.4 442.3 L205.7 424.3 L205.6 407.3 Z" fill="#8e1d2c"/><path d="M205.3 407.0 L205.3 424.1 L205.1 442.1 L204.6 460.7 L204.0 479.7 L203.2 499.0 L202.4 518.3 L201.5 537.4 L200.5 556.0 L199.6 573.9 L198.8 591.0 L200.6 591.0 L201.4 574.1 L202.3 556.3 L203.3 537.8 L204.3 518.9 L205.2 499.7 L205.9 480.6 L206.6 461.7 L207.1 443.2 L207.3 425.4 L207.2 408.5 Z" fill="#5e1422"/><path d="M206.9 408.2 L206.9 425.2 L206.7 443.0 L206.3 461.5 L205.6 480.5 L204.8 499.6 L203.9 518.8 L203.0 537.7 L202.0 556.2 L201.1 574.0 L200.3 591.0 L203.1 591.0 L204.0 574.3 L205.0 556.7 L206.0 538.4 L207.0 519.7 L208.0 500.8 L208.8 481.9 L209.5 463.2 L209.9 445.0 L210.2 427.4 L210.1 410.7 Z" fill="#ad1f22"/><path d="M209.8 410.4 L209.8 427.2 L209.6 444.8 L209.1 463.1 L208.5 481.8 L207.7 500.7 L206.7 519.6 L205.7 538.3 L204.7 556.6 L203.7 574.2 L202.8 591.0 L204.3 591.0 L205.3 574.4 L206.3 556.9 L207.4 538.7 L208.4 520.1 L209.4 501.4 L210.2 482.6 L210.9 464.0 L211.3 445.8 L211.6 428.3 L211.5 411.7 Z" fill="#a8546e"/><path d="M211.2 411.5 L211.2 428.1 L211.0 445.6 L210.5 463.8 L209.9 482.4 L209.0 501.2 L208.1 520.0 L207.1 538.6 L206.0 556.8 L205.0 574.3 L204.0 591.0 L206.0 591.0 L207.0 574.5 L208.1 557.1 L209.2 539.1 L210.3 520.7 L211.2 502.1 L212.1 483.4 L212.8 465.0 L213.3 447.0 L213.5 429.7 L213.4 413.1 Z" fill="#ad1f22"/><path d="M213.1 412.9 L213.1 429.4 L212.9 446.8 L212.5 464.8 L211.8 483.3 L210.9 501.9 L209.9 520.6 L208.9 539.1 L207.8 557.1 L206.7 574.5 L205.7 591.0 L207.4 591.0 L208.5 574.6 L209.6 557.4 L210.7 539.5 L211.8 521.2 L212.8 502.7 L213.7 484.2 L214.4 465.9 L214.9 448.0 L215.1 430.7 L215.0 414.4 Z" fill="#7c1524"/><path d="M214.7 414.1 L214.8 430.5 L214.5 447.8 L214.1 465.7 L213.4 484.0 L212.5 502.6 L211.5 521.1 L210.4 539.4 L209.3 557.3 L208.2 574.6 L207.1 591.0 L208.7 591.0 L209.9 574.7 L211.1 557.6 L212.2 539.8 L213.4 521.7 L214.4 503.3 L215.3 484.9 L216.0 466.7 L216.5 448.9 L216.7 431.8 L216.6 415.5 Z" fill="#641828"/><path d="M216.2 415.3 L216.3 431.6 L216.1 448.7 L215.6 466.5 L214.9 484.7 L214.1 503.1 L213.0 521.6 L211.9 539.8 L210.7 557.5 L209.6 574.7 L208.4 591.0 L210.0 591.0 L211.2 574.8 L212.5 557.8 L213.7 540.2 L214.8 522.1 L215.9 503.8 L216.8 485.6 L217.5 467.5 L218.0 449.8 L218.2 432.8 L218.0 416.7 Z" fill="#ad1f22"/><path d="M217.7 416.4 L217.8 432.6 L217.6 449.6 L217.1 467.3 L216.4 485.4 L215.5 503.7 L214.5 522.0 L213.3 540.1 L212.1 557.8 L210.9 574.8 L209.7 591.0 L210.9 591.0 L212.1 574.9 L213.3 557.9 L214.6 540.4 L215.7 522.4 L216.8 504.2 L217.7 486.0 L218.4 468.0 L218.9 450.4 L219.1 433.5 L219.0 417.4 Z" fill="#ba6a82"/><path d="M218.6 417.1 L218.8 433.2 L218.6 450.2 L218.1 467.8 L217.4 485.8 L216.5 504.1 L215.4 522.3 L214.2 540.3 L213.0 557.9 L211.8 574.9 L210.6 591.0 L212.3 591.0 L213.6 575.0 L214.9 558.2 L216.1 540.7 L217.3 522.9 L218.4 504.8 L219.4 486.7 L220.1 468.9 L220.6 451.4 L220.8 434.6 L220.6 418.6 Z" fill="#a81b1e"/><path d="M220.3 418.4 L220.4 434.4 L220.2 451.2 L219.7 468.7 L219.0 486.6 L218.1 504.7 L217.0 522.8 L215.8 540.7 L214.6 558.1 L213.3 575.0 L212.0 591.0 L213.3 591.0 L214.6 575.1 L215.9 558.3 L217.2 541.0 L218.4 523.2 L219.5 505.2 L220.5 487.2 L221.2 469.5 L221.7 452.1 L221.9 435.4 L221.7 419.4 Z" fill="#86182a"/><path d="M221.4 419.2 L221.5 435.1 L221.4 451.9 L220.9 469.3 L220.1 487.1 L219.2 505.1 L218.1 523.1 L216.9 540.9 L215.6 558.3 L214.3 575.1 L213.0 591.0 L214.9 591.0 L216.3 575.2 L217.7 558.6 L219.1 541.4 L220.3 523.8 L221.4 505.9 L222.4 488.1 L223.1 470.5 L223.6 453.3 L223.8 436.7 L223.6 420.9 Z" fill="#5e1422"/><path d="M223.3 420.6 L223.5 436.4 L223.3 453.1 L222.8 470.3 L222.1 488.0 L221.1 505.8 L220.0 523.7 L218.7 541.3 L217.4 558.6 L216.0 575.2 L214.7 591.0 L217.1 591.0 L218.5 575.4 L220.0 559.0 L221.4 541.9 L222.7 524.5 L223.9 506.8 L224.8 489.2 L225.6 471.8 L226.1 454.7 L226.2 438.3 L226.1 422.7 Z" fill="#a0171a"/><path d="M225.7 422.4 L225.9 438.1 L225.7 454.5 L225.2 471.6 L224.5 489.1 L223.5 506.7 L222.4 524.4 L221.1 541.9 L219.7 558.9 L218.2 575.4 L216.8 591.0 L218.2 591.0 L219.7 575.5 L221.2 559.1 L222.6 542.2 L224.0 524.9 L225.1 507.3 L226.1 489.8 L226.9 472.5 L227.4 455.5 L227.5 439.2 L227.3 423.7 Z" fill="#ba6a82"/><path d="M227.0 423.4 L227.2 439.0 L227.0 455.3 L226.5 472.3 L225.8 489.6 L224.8 507.2 L223.6 524.8 L222.3 542.1 L220.9 559.1 L219.4 575.4 L217.9 591.0 L219.7 591.0 L221.3 575.6 L222.8 559.4 L224.3 542.6 L225.6 525.4 L226.8 508.0 L227.8 490.6 L228.6 473.4 L229.1 456.6 L229.2 440.4 L229.0 424.9 Z" fill="#a4191c"/><path d="M228.7 424.7 L228.9 440.1 L228.7 456.4 L228.3 473.2 L227.5 490.4 L226.5 507.8 L225.3 525.3 L224.0 542.5 L222.5 559.3 L221.0 575.6 L219.4 591.0 L220.7 591.0 L222.3 575.7 L223.9 559.6 L225.4 542.8 L226.8 525.7 L228.0 508.4 L229.0 491.1 L229.8 474.0 L230.3 457.3 L230.4 441.2 L230.2 425.8 Z" fill="#7c1524"/><path d="M229.9 425.6 L230.1 440.9 L229.9 457.1 L229.5 473.8 L228.7 491.0 L227.7 508.3 L226.5 525.6 L225.1 542.8 L223.6 559.5 L222.0 575.6 L220.4 591.0 L222.0 591.0 L223.7 575.8 L225.4 559.8 L226.9 543.2 L228.3 526.2 L229.5 509.0 L230.6 491.8 L231.3 474.8 L231.8 458.2 L232.0 442.2 L231.7 427.0 Z" fill="#641828"/><path d="M231.4 426.7 L231.6 442.0 L231.5 458.0 L231.0 474.6 L230.2 491.6 L229.2 508.9 L228.0 526.1 L226.6 543.1 L225.0 559.7 L223.4 575.8 L221.7 591.0 L223.4 591.0 L225.1 575.9 L226.8 560.0 L228.4 543.5 L229.8 526.6 L231.1 509.6 L232.1 492.5 L232.9 475.6 L233.4 459.1 L233.5 443.3 L233.3 428.1 Z" fill="#a4191c"/><path d="M232.9 427.9 L233.2 443.0 L233.0 458.9 L232.6 475.5 L231.8 492.4 L230.8 509.4 L229.5 526.5 L228.1 543.4 L226.5 559.9 L224.8 575.9 L223.1 591.0 L224.2 591.0 L226.0 576.0 L227.7 560.1 L229.3 543.7 L230.8 526.9 L232.0 509.9 L233.1 492.9 L233.9 476.1 L234.3 459.7 L234.5 443.9 L234.2 428.8 Z" fill="#bf768c"/><path d="M233.9 428.6 L234.1 443.7 L234.0 459.5 L233.5 476.0 L232.7 492.8 L231.7 509.8 L230.4 526.8 L229.0 543.6 L227.4 560.1 L225.7 575.9 L223.9 591.0 L225.3 591.0 L227.2 576.0 L228.9 560.3 L230.6 544.0 L232.1 527.3 L233.3 510.4 L234.4 493.5 L235.2 476.8 L235.6 460.5 L235.7 444.8 L235.5 429.8 Z" fill="#98151a"/><path d="M235.2 429.6 L235.4 444.5 L235.3 460.3 L234.8 476.6 L234.0 493.4 L233.0 510.3 L231.7 527.2 L230.2 543.9 L228.6 560.3 L226.9 576.0 L225.0 591.0 L226.8 591.0 L228.7 576.2 L230.5 560.6 L232.2 544.4 L233.7 527.8 L235.0 511.0 L236.1 494.3 L236.9 477.7 L237.3 461.5 L237.4 445.9 L237.2 431.1 Z" fill="#7c1524"/><path d="M236.8 430.8 L237.1 445.7 L237.0 461.3 L236.5 477.5 L235.8 494.1 L234.7 510.9 L233.4 527.7 L231.9 544.3 L230.2 560.5 L228.4 576.1 L226.5 591.0 L228.2 591.0 L230.2 576.3 L232.1 560.8 L233.8 544.7 L235.3 528.3 L236.7 511.7 L237.7 495.0 L238.5 478.6 L239.0 462.5 L239.1 447.0 L238.8 432.3 Z" fill="#641828"/><path d="M238.5 432.1 L238.7 446.8 L238.6 462.3 L238.2 478.4 L237.4 494.9 L236.3 511.5 L235.0 528.2 L233.5 544.7 L231.8 560.7 L229.9 576.2 L227.9 591.0 L230.7 591.0 L232.8 576.5 L234.8 561.2 L236.6 545.3 L238.2 529.1 L239.5 512.7 L240.6 496.3 L241.4 480.1 L241.8 464.2 L241.9 449.0 L241.6 434.4 Z" fill="#a81b1e"/><path d="M241.3 434.2 L241.6 448.7 L241.5 464.0 L241.0 479.9 L240.3 496.1 L239.2 512.6 L237.8 529.0 L236.2 545.3 L234.4 561.1 L232.5 576.4 L230.4 591.0 L231.7 591.0 L233.9 576.6 L235.9 561.4 L237.7 545.6 L239.3 529.5 L240.7 513.2 L241.8 496.8 L242.6 480.7 L243.0 465.0 L243.1 449.8 L242.8 435.3 Z" fill="#bf768c"/><path d="M242.4 435.1 L242.8 449.5 L242.7 464.8 L242.3 480.5 L241.5 496.7 L240.4 513.0 L239.0 529.4 L237.4 545.5 L235.6 561.3 L233.6 576.5 L231.4 591.0 L233.2 591.0 L235.4 576.7 L237.5 561.6 L239.4 546.0 L241.0 530.0 L242.4 513.8 L243.5 497.6 L244.3 481.6 L244.8 466.0 L244.8 450.9 L244.5 436.6 Z" fill="#a81b1e"/><path d="M244.1 436.3 L244.5 450.7 L244.4 465.8 L244.0 481.4 L243.2 497.5 L242.1 513.7 L240.7 529.9 L239.0 545.9 L237.2 561.6 L235.1 576.6 L232.9 591.0 L234.8 591.0 L237.1 576.8 L239.3 561.9 L241.2 546.4 L242.9 530.5 L244.3 514.5 L245.4 498.5 L246.2 482.6 L246.6 467.1 L246.7 452.2 L246.3 438.0 Z" fill="#8e1d2c"/><path d="M246.0 437.7 L246.3 451.9 L246.3 466.9 L245.9 482.4 L245.1 498.3 L244.0 514.4 L242.6 530.4 L240.9 546.3 L239.0 561.8 L236.8 576.8 L234.5 591.0 L236.4 591.0 L238.8 576.9 L241.0 562.1 L243.0 546.8 L244.7 531.1 L246.2 515.2 L247.3 499.3 L248.1 483.6 L248.5 468.2 L248.5 453.4 L248.1 439.4 Z" fill="#561424"/><path d="M247.8 439.1 L248.2 453.2 L248.2 468.0 L247.7 483.4 L247.0 499.1 L245.8 515.1 L244.4 531.0 L242.7 546.7 L240.7 562.1 L238.5 576.9 L236.1 591.0 L238.7 591.0 L241.2 577.1 L243.5 562.5 L245.6 547.4 L247.4 531.8 L248.8 516.2 L250.0 500.5 L250.8 485.0 L251.2 469.8 L251.2 455.2 L250.7 441.3 Z" fill="#a81b1e"/><path d="M250.4 441.1 L250.8 455.0 L250.8 469.6 L250.4 484.8 L249.6 500.3 L248.5 516.0 L247.0 531.7 L245.3 547.3 L243.2 562.5 L240.9 577.1 L238.4 591.0 L239.7 591.0 L242.3 577.2 L244.7 562.7 L246.8 547.6 L248.6 532.2 L250.0 516.6 L251.2 501.0 L252.0 485.6 L252.4 470.5 L252.4 456.0 L251.9 442.2 Z" fill="#bf768c"/><path d="M251.6 442.0 L252.0 455.8 L252.0 470.3 L251.6 485.4 L250.9 500.9 L249.7 516.5 L248.2 532.1 L246.4 547.5 L244.4 562.6 L242.0 577.2 L239.5 591.0 L241.9 591.0 L244.6 577.4 L247.0 563.0 L249.2 548.2 L251.0 532.9 L252.5 517.5 L253.7 502.1 L254.5 486.9 L254.9 472.0 L254.8 457.7 L254.4 444.1 Z" fill="#a4191c"/><path d="M254.0 443.8 L254.5 457.5 L254.5 471.8 L254.1 486.7 L253.4 502.0 L252.2 517.4 L250.7 532.8 L248.8 548.1 L246.7 563.0 L244.3 577.3 L241.6 591.0 L242.8 591.0 L245.5 577.4 L248.0 563.2 L250.2 548.4 L252.1 533.2 L253.6 517.9 L254.7 502.6 L255.5 487.4 L255.9 472.7 L255.9 458.4 L255.4 444.8 Z" fill="#8e1d2c"/><path d="M255.0 444.6 L255.5 458.2 L255.6 472.4 L255.2 487.3 L254.4 502.4 L253.2 517.8 L251.7 533.1 L249.9 548.3 L247.7 563.1 L245.2 577.4 L242.5 591.0 L244.1 591.0 L247.0 577.5 L249.5 563.4 L251.7 548.7 L253.6 533.7 L255.2 518.5 L256.3 503.3 L257.1 488.3 L257.5 473.6 L257.4 459.4 L256.9 446.0 Z" fill="#641828"/><path d="M256.6 445.7 L257.1 459.2 L257.1 473.4 L256.8 488.1 L256.0 503.1 L254.8 518.4 L253.3 533.6 L251.4 548.6 L249.2 563.3 L246.6 577.5 L243.8 591.0 L245.9 591.0 L248.8 577.7 L251.4 563.7 L253.7 549.2 L255.6 534.3 L257.2 519.2 L258.4 504.2 L259.2 489.3 L259.5 474.8 L259.4 460.8 L258.9 447.5 Z" fill="#98151a"/><path d="M258.6 447.2 L259.1 460.6 L259.2 474.6 L258.8 489.2 L258.1 504.1 L256.9 519.1 L255.3 534.2 L253.4 549.1 L251.1 563.6 L248.5 577.7 L245.6 591.0 L246.7 591.0 L249.7 577.7 L252.4 563.8 L254.7 549.4 L256.6 534.6 L258.2 519.6 L259.4 504.6 L260.2 489.9 L260.5 475.4 L260.4 461.5 L259.9 448.2 Z" fill="#bf768c"/><path d="M259.5 448.0 L260.1 461.2 L260.2 475.2 L259.8 489.7 L259.0 504.5 L257.9 519.5 L256.3 534.5 L254.3 549.3 L252.0 563.8 L249.4 577.7 L246.4 591.0 L248.4 591.0 L251.4 577.9 L254.2 564.1 L256.5 549.8 L258.5 535.1 L260.1 520.3 L261.3 505.5 L262.1 490.8 L262.4 476.5 L262.3 462.7 L261.7 449.6 Z" fill="#a4191c"/><path d="M261.4 449.4 L262.0 462.5 L262.1 476.3 L261.7 490.7 L261.0 505.3 L259.8 520.2 L258.2 535.0 L256.2 549.7 L253.8 564.0 L251.1 577.9 L248.1 591.0 L249.0 591.0 L252.1 577.9 L254.8 564.2 L257.2 549.9 L259.2 535.3 L260.8 520.6 L262.0 505.8 L262.8 491.2 L263.1 477.0 L263.0 463.2 L262.4 450.1 Z" fill="#86182a"/><path d="M262.1 449.9 L262.7 463.0 L262.8 476.8 L262.5 491.0 L261.7 505.7 L260.5 520.4 L258.9 535.2 L256.9 549.9 L254.5 564.1 L251.8 577.9 L248.7 591.0 L249.2 591.0 L252.3 577.9 L255.1 564.2 L257.5 550.0 L259.5 535.4 L261.1 520.7 L262.3 505.9 L263.0 491.3 L263.4 477.1 L263.2 463.4 L262.7 450.3 Z" fill="#5e1422"/><path d="M262.3 450.1 L262.9 463.1 L263.0 476.9 L262.7 491.2 L261.9 505.8 L260.7 520.5 L259.1 535.3 L257.1 549.9 L254.7 564.2 L252.0 577.9 L248.9 591.0 L249.5 591.0 L252.7 578.0 L255.4 564.3 L257.9 550.1 L259.9 535.5 L261.5 520.8 L262.7 506.1 L263.4 491.5 L263.8 477.3 L263.6 463.6 L263.0 450.6 Z" fill="#a4191c"/><path d="M262.7 450.4 L263.3 463.4 L263.4 477.1 L263.1 491.4 L262.3 505.9 L261.1 520.7 L259.5 535.4 L257.5 550.0 L255.1 564.2 L252.3 577.9 L249.2 591.0 L249.7 591.0 L252.8 578.0 L255.6 564.3 L258.0 550.1 L260.0 535.6 L261.7 520.9 L262.9 506.2 L263.6 491.6 L263.9 477.4 L263.8 463.8 L263.2 450.7 Z" fill="#b25e78"/><path d="M262.9 450.5 L263.5 463.5 L263.6 477.2 L263.3 491.5 L262.5 506.0 L261.3 520.7 L259.7 535.5 L257.7 550.0 L255.3 564.2 L252.5 578.0 L249.4 591.0 L249.9 591.0 L253.1 578.0 L255.9 564.3 L258.3 550.2 L260.3 535.7 L262.0 521.0 L263.1 506.3 L263.9 491.8 L264.2 477.6 L264.1 463.9 L263.5 451.0 Z" fill="#a4191c"/><path d="M263.2 450.7 L263.8 463.8 L263.9 477.4 L263.6 491.6 L262.8 506.2 L261.6 520.9 L260.0 535.6 L258.0 550.1 L255.6 564.3 L252.8 578.0 L249.6 591.0 L249.9 591.0 L253.1 578.0 L255.9 564.3 L258.3 550.2 L260.3 535.7 L262.0 521.0 L263.1 506.3 L263.9 491.8 L264.2 477.6 L264.1 463.9 L263.5 451.0 Z" fill="#86182a"/></g><rect x="150" y="150" width="322" height="442" fill="url(#fadeL)"/><circle cx="262" cy="447" r="105" fill="url(#knot)"/><path d="M469 151.2 C443 250 400 424 264 449" fill="none" stroke="#e3a6b8" stroke-width="9" opacity=".33" filter="url(#soft)"/><path d="M294.6 151.2 C290 260 272 380 253 438" fill="none" stroke="#ecc0cb" stroke-width=".6" opacity=".5"/></g><path d="M152.9 360.5 L260 439 L267 446.5 L263 453.5 L152.9 372.5 Z" fill="#8f171c"/><path d="M152.9 363.4 L264 444.8" stroke="#b9404c" stroke-width="1.2" fill="none"/><path d="M152.9 366.4 L264.6 448.2" stroke="#5e0f18" stroke-width="1" fill="none"/><path d="M152.9 368.6 L263.6 450" stroke="#b23a46" stroke-width="1.1" fill="none"/><path d="M152.9 372.3 L262.6 453" stroke="#5a0e16" stroke-width="1.1" fill="none" opacity=".8"/></g>
<g transform="translate(1426.4 0) scale(-1 1)"><path d="M469 151.2 C443 250 400 424 264 449 C258 462 262 476 266 496 C270 520 266 550 262 566 C259 580 254 588 249 591 L152.9 591 L152.9 151.2 Z" fill="#98191d"/><g clip-path="url(#ccl)"><g filter="url(#soft)"><path d="M152.9 151.2 L152.9 159.5 L152.9 167.7 L152.9 176.0 L152.9 184.2 L152.9 192.5 L152.9 200.7 L152.9 209.0 L152.9 217.2 L152.9 225.5 L152.9 233.8 L152.9 242.1 L152.9 250.3 L152.9 258.6 L152.9 266.9 L152.9 275.2 L152.9 283.5 L152.9 291.9 L152.9 300.2 L152.9 308.6 L152.9 316.9 L152.9 325.3 L152.9 333.7 L152.9 342.1 L152.9 350.6 L152.9 359.0 L152.9 367.5 L154.6 368.8 L154.7 360.3 L154.7 351.8 L154.7 343.3 L154.7 334.8 L154.7 326.4 L154.7 317.9 L154.8 309.5 L154.8 301.1 L154.8 292.7 L154.8 284.3 L154.8 276.0 L154.8 267.6 L154.8 259.3 L154.8 250.9 L154.8 242.6 L154.9 234.3 L154.9 226.0 L154.9 217.6 L154.9 209.3 L154.9 201.0 L154.9 192.7 L154.9 184.4 L154.9 176.1 L154.9 167.8 L154.9 159.5 L154.9 151.2 Z" fill="#4c1120"/><path d="M154.3 151.2 L154.3 159.5 L154.3 167.8 L154.3 176.1 L154.3 184.4 L154.3 192.6 L154.3 200.9 L154.3 209.2 L154.3 217.5 L154.2 225.8 L154.2 234.1 L154.2 242.4 L154.2 250.7 L154.2 259.1 L154.2 267.4 L154.2 275.7 L154.2 284.1 L154.2 292.5 L154.2 300.8 L154.2 309.2 L154.2 317.6 L154.2 326.0 L154.1 334.5 L154.1 342.9 L154.1 351.4 L154.1 359.9 L154.1 368.4 L157.9 371.2 L157.9 362.6 L158.0 354.0 L158.0 345.4 L158.1 336.9 L158.1 328.3 L158.2 319.8 L158.2 311.3 L158.2 302.8 L158.3 294.3 L158.3 285.8 L158.3 277.4 L158.4 268.9 L158.4 260.5 L158.4 252.0 L158.5 243.6 L158.5 235.2 L158.5 226.8 L158.5 218.4 L158.5 210.0 L158.6 201.6 L158.6 193.2 L158.6 184.8 L158.6 176.4 L158.6 168.0 L158.6 159.6 L158.6 151.2 Z" fill="#a81b1e"/><path d="M158.0 151.2 L158.0 159.6 L158.0 168.0 L158.0 176.4 L158.0 184.7 L157.9 193.1 L157.9 201.5 L157.9 209.9 L157.9 218.3 L157.9 226.7 L157.9 235.0 L157.8 243.4 L157.8 251.9 L157.8 260.3 L157.8 268.7 L157.7 277.1 L157.7 285.6 L157.7 294.0 L157.7 302.5 L157.6 311.0 L157.6 319.5 L157.5 328.0 L157.5 336.5 L157.5 345.1 L157.4 353.6 L157.4 362.2 L157.3 370.8 L158.7 371.8 L158.7 363.2 L158.8 354.6 L158.8 346.0 L158.9 337.4 L159.0 328.8 L159.0 320.3 L159.1 311.7 L159.1 303.2 L159.2 294.7 L159.2 286.2 L159.2 277.7 L159.3 269.2 L159.3 260.8 L159.3 252.3 L159.4 243.9 L159.4 235.4 L159.4 227.0 L159.4 218.6 L159.5 210.1 L159.5 201.7 L159.5 193.3 L159.5 184.9 L159.5 176.5 L159.5 168.0 L159.6 159.6 L159.6 151.2 Z" fill="#ad5a70"/><path d="M158.9 151.2 L158.9 159.6 L158.9 168.0 L158.9 176.4 L158.9 184.8 L158.9 193.2 L158.8 201.6 L158.8 210.0 L158.8 218.4 L158.8 226.9 L158.8 235.3 L158.7 243.7 L158.7 252.1 L158.7 260.6 L158.7 269.0 L158.6 277.5 L158.6 285.9 L158.6 294.4 L158.5 302.9 L158.5 311.4 L158.4 319.9 L158.4 328.5 L158.3 337.0 L158.3 345.6 L158.2 354.2 L158.2 362.8 L158.1 371.4 L161.0 373.6 L161.1 364.9 L161.2 356.2 L161.3 347.6 L161.4 338.9 L161.5 330.3 L161.6 321.6 L161.6 313.0 L161.7 304.4 L161.7 295.9 L161.8 287.3 L161.9 278.7 L161.9 270.2 L162.0 261.7 L162.0 253.1 L162.0 244.6 L162.1 236.1 L162.1 227.6 L162.1 219.1 L162.2 210.6 L162.2 202.1 L162.2 193.7 L162.3 185.2 L162.3 176.7 L162.3 168.2 L162.3 159.7 L162.3 151.2 Z" fill="#ad1f22"/><path d="M161.7 151.2 L161.7 159.7 L161.7 168.2 L161.7 176.6 L161.6 185.1 L161.6 193.6 L161.6 202.0 L161.6 210.5 L161.5 219.0 L161.5 227.5 L161.5 236.0 L161.4 244.5 L161.4 253.0 L161.3 261.5 L161.3 270.0 L161.3 278.5 L161.2 287.0 L161.2 295.6 L161.1 304.2 L161.0 312.7 L161.0 321.3 L160.9 329.9 L160.8 338.6 L160.8 347.2 L160.7 355.9 L160.6 364.5 L160.5 373.2 L161.7 374.1 L161.8 365.4 L161.9 356.7 L162.0 348.0 L162.1 339.3 L162.1 330.6 L162.2 322.0 L162.3 313.4 L162.4 304.8 L162.4 296.2 L162.5 287.6 L162.5 279.0 L162.6 270.5 L162.6 261.9 L162.7 253.4 L162.7 244.8 L162.8 236.3 L162.8 227.8 L162.8 219.3 L162.9 210.8 L162.9 202.2 L162.9 193.7 L163.0 185.2 L163.0 176.7 L163.0 168.2 L163.0 159.7 L163.1 151.2 Z" fill="#8e1d2c"/><path d="M162.4 151.2 L162.4 159.7 L162.4 168.2 L162.4 176.7 L162.3 185.2 L162.3 193.7 L162.3 202.2 L162.3 210.6 L162.2 219.1 L162.2 227.6 L162.2 236.1 L162.1 244.7 L162.1 253.2 L162.0 261.7 L162.0 270.2 L161.9 278.8 L161.9 287.3 L161.8 295.9 L161.8 304.5 L161.7 313.1 L161.6 321.7 L161.6 330.3 L161.5 339.0 L161.4 347.6 L161.3 356.3 L161.2 365.0 L161.1 373.7 L162.7 374.9 L162.8 366.1 L162.9 357.4 L163.0 348.7 L163.1 340.0 L163.2 331.3 L163.3 322.6 L163.4 313.9 L163.5 305.3 L163.5 296.7 L163.6 288.1 L163.7 279.5 L163.7 270.9 L163.8 262.3 L163.8 253.7 L163.9 245.2 L163.9 236.6 L164.0 228.1 L164.0 219.5 L164.1 211.0 L164.1 202.4 L164.1 193.9 L164.2 185.4 L164.2 176.8 L164.2 168.3 L164.2 159.7 L164.3 151.2 Z" fill="#561424"/><path d="M163.6 151.2 L163.6 159.7 L163.6 168.2 L163.6 176.8 L163.5 185.3 L163.5 193.8 L163.5 202.3 L163.4 210.9 L163.4 219.4 L163.4 227.9 L163.3 236.4 L163.3 245.0 L163.2 253.5 L163.2 262.1 L163.1 270.7 L163.1 279.2 L163.0 287.8 L163.0 296.4 L162.9 305.0 L162.8 313.6 L162.7 322.3 L162.7 330.9 L162.6 339.6 L162.5 348.3 L162.4 357.0 L162.3 365.7 L162.2 374.5 L165.7 377.2 L165.9 368.3 L166.0 359.5 L166.1 350.7 L166.3 341.9 L166.4 333.1 L166.5 324.3 L166.6 315.6 L166.7 306.9 L166.8 298.2 L166.9 289.5 L167.0 280.8 L167.1 272.1 L167.1 263.4 L167.2 254.8 L167.3 246.1 L167.3 237.5 L167.4 228.8 L167.4 220.2 L167.5 211.6 L167.5 202.9 L167.6 194.3 L167.6 185.7 L167.6 177.1 L167.7 168.5 L167.7 159.8 L167.7 151.2 Z" fill="#a4191c"/><path d="M167.1 151.2 L167.1 159.8 L167.1 168.4 L167.0 177.0 L167.0 185.6 L166.9 194.2 L166.9 202.9 L166.9 211.5 L166.8 220.1 L166.8 228.7 L166.7 237.3 L166.7 245.9 L166.6 254.6 L166.5 263.2 L166.5 271.9 L166.4 280.5 L166.3 289.2 L166.2 297.9 L166.1 306.6 L166.0 315.3 L165.9 324.0 L165.8 332.8 L165.7 341.5 L165.6 350.3 L165.4 359.1 L165.3 367.9 L165.2 376.8 L166.4 377.7 L166.6 368.8 L166.7 360.0 L166.9 351.1 L167.0 342.3 L167.1 333.5 L167.3 324.7 L167.4 316.0 L167.5 307.2 L167.6 298.5 L167.7 289.8 L167.8 281.1 L167.8 272.4 L167.9 263.7 L168.0 255.0 L168.1 246.3 L168.1 237.7 L168.2 229.0 L168.2 220.4 L168.3 211.7 L168.3 203.1 L168.4 194.4 L168.4 185.8 L168.5 177.1 L168.5 168.5 L168.5 159.8 L168.6 151.2 Z" fill="#bf768c"/><path d="M167.9 151.2 L167.9 159.8 L167.9 168.5 L167.8 177.1 L167.8 185.7 L167.8 194.3 L167.7 203.0 L167.7 211.6 L167.6 220.2 L167.6 228.9 L167.5 237.5 L167.5 246.2 L167.4 254.8 L167.3 263.5 L167.2 272.2 L167.2 280.8 L167.1 289.5 L167.0 298.2 L166.9 307.0 L166.8 315.7 L166.7 324.4 L166.6 333.2 L166.4 342.0 L166.3 350.8 L166.2 359.6 L166.0 368.4 L165.9 377.3 L169.1 379.7 L169.3 370.7 L169.4 361.8 L169.6 352.9 L169.8 344.0 L169.9 335.1 L170.1 326.3 L170.2 317.4 L170.3 308.6 L170.5 299.8 L170.6 291.0 L170.7 282.2 L170.8 273.4 L170.9 264.7 L171.0 255.9 L171.0 247.2 L171.1 238.4 L171.2 229.7 L171.2 221.0 L171.3 212.2 L171.4 203.5 L171.4 194.8 L171.5 186.1 L171.5 177.4 L171.6 168.6 L171.6 159.9 L171.6 151.2 Z" fill="#ad1f22"/><path d="M171.0 151.2 L171.0 159.9 L170.9 168.6 L170.9 177.3 L170.8 186.0 L170.8 194.7 L170.7 203.4 L170.7 212.1 L170.6 220.8 L170.6 229.6 L170.5 238.3 L170.4 247.0 L170.3 255.7 L170.3 264.5 L170.2 273.2 L170.1 282.0 L170.0 290.8 L169.9 299.5 L169.8 308.3 L169.6 317.1 L169.5 326.0 L169.4 334.8 L169.2 343.7 L169.1 352.5 L168.9 361.4 L168.7 370.4 L168.5 379.3 L170.7 380.9 L170.9 371.9 L171.1 362.9 L171.3 354.0 L171.5 345.0 L171.6 336.1 L171.8 327.2 L171.9 318.3 L172.1 309.5 L172.2 300.6 L172.3 291.8 L172.5 282.9 L172.6 274.1 L172.7 265.3 L172.8 256.5 L172.8 247.7 L172.9 238.9 L173.0 230.1 L173.1 221.3 L173.1 212.6 L173.2 203.8 L173.3 195.0 L173.3 186.3 L173.4 177.5 L173.4 168.7 L173.5 160.0 L173.5 151.2 Z" fill="#8e1d2c"/><path d="M172.9 151.2 L172.8 160.0 L172.8 168.7 L172.7 177.5 L172.7 186.2 L172.6 195.0 L172.6 203.7 L172.5 212.5 L172.5 221.2 L172.4 230.0 L172.3 238.7 L172.2 247.5 L172.2 256.3 L172.1 265.1 L172.0 273.9 L171.9 282.7 L171.7 291.5 L171.6 300.3 L171.5 309.2 L171.4 318.0 L171.2 326.9 L171.1 335.8 L170.9 344.7 L170.7 353.6 L170.5 362.6 L170.3 371.5 L170.1 380.5 L172.1 382.0 L172.4 373.0 L172.6 364.0 L172.8 355.0 L173.0 346.0 L173.2 337.0 L173.3 328.1 L173.5 319.1 L173.7 310.2 L173.8 301.3 L173.9 292.4 L174.1 283.6 L174.2 274.7 L174.3 265.8 L174.4 257.0 L174.5 248.2 L174.6 239.3 L174.7 230.5 L174.7 221.7 L174.8 212.9 L174.9 204.1 L174.9 195.2 L175.0 186.4 L175.1 177.6 L175.1 168.8 L175.2 160.0 L175.2 151.2 Z" fill="#561424"/><path d="M174.6 151.2 L174.5 160.0 L174.5 168.8 L174.4 177.6 L174.4 186.4 L174.3 195.2 L174.3 204.0 L174.2 212.8 L174.1 221.6 L174.0 230.4 L174.0 239.2 L173.9 248.0 L173.8 256.8 L173.7 265.6 L173.6 274.5 L173.5 283.3 L173.3 292.2 L173.2 301.0 L173.1 309.9 L172.9 318.8 L172.8 327.7 L172.6 336.7 L172.4 345.6 L172.2 354.6 L172.0 363.6 L171.8 372.6 L171.6 381.6 L175.6 384.6 L175.8 375.5 L176.1 366.3 L176.3 357.2 L176.6 348.1 L176.8 339.1 L177.0 330.0 L177.2 321.0 L177.3 312.0 L177.5 303.0 L177.7 294.0 L177.8 285.0 L178.0 276.1 L178.1 267.1 L178.2 258.2 L178.3 249.2 L178.4 240.3 L178.5 231.4 L178.6 222.5 L178.7 213.6 L178.8 204.6 L178.9 195.7 L178.9 186.8 L179.0 177.9 L179.1 169.0 L179.1 160.1 L179.2 151.2 Z" fill="#a81b1e"/><path d="M178.5 151.2 L178.5 160.1 L178.4 169.0 L178.4 177.9 L178.3 186.8 L178.2 195.7 L178.2 204.6 L178.1 213.4 L178.0 222.3 L177.9 231.2 L177.8 240.2 L177.7 249.1 L177.6 258.0 L177.5 266.9 L177.4 275.8 L177.2 284.8 L177.1 293.8 L176.9 302.7 L176.8 311.7 L176.6 320.7 L176.4 329.7 L176.2 338.8 L176.0 347.8 L175.8 356.9 L175.5 366.0 L175.3 375.1 L175.0 384.2 L176.7 385.5 L177.0 376.3 L177.3 367.1 L177.5 358.0 L177.8 348.9 L178.0 339.8 L178.2 330.7 L178.4 321.6 L178.6 312.6 L178.8 303.6 L178.9 294.5 L179.1 285.5 L179.2 276.5 L179.4 267.5 L179.5 258.6 L179.6 249.6 L179.7 240.6 L179.8 231.7 L179.9 222.7 L180.0 213.8 L180.1 204.8 L180.2 195.9 L180.3 187.0 L180.3 178.0 L180.4 169.1 L180.4 160.1 L180.5 151.2 Z" fill="#a8546e"/><path d="M179.9 151.2 L179.8 160.1 L179.8 169.1 L179.7 178.0 L179.6 186.9 L179.6 195.8 L179.5 204.8 L179.4 213.7 L179.3 222.6 L179.2 231.5 L179.1 240.5 L179.0 249.4 L178.9 258.4 L178.8 267.3 L178.6 276.3 L178.5 285.3 L178.3 294.3 L178.2 303.3 L178.0 312.3 L177.8 321.3 L177.6 330.4 L177.4 339.5 L177.2 348.5 L177.0 357.6 L176.7 366.8 L176.5 375.9 L176.2 385.1 L179.1 387.3 L179.4 378.0 L179.7 368.8 L180.0 359.6 L180.2 350.4 L180.5 341.2 L180.7 332.1 L180.9 322.9 L181.1 313.8 L181.3 304.7 L181.5 295.6 L181.7 286.6 L181.9 277.5 L182.0 268.4 L182.1 259.4 L182.3 250.4 L182.4 241.3 L182.5 232.3 L182.6 223.3 L182.7 214.3 L182.8 205.3 L182.9 196.2 L183.0 187.2 L183.1 178.2 L183.1 169.2 L183.2 160.2 L183.2 151.2 Z" fill="#a4191c"/><path d="M182.6 151.2 L182.6 160.2 L182.5 169.2 L182.4 178.2 L182.3 187.2 L182.3 196.2 L182.2 205.2 L182.1 214.2 L182.0 223.2 L181.9 232.2 L181.8 241.2 L181.7 250.2 L181.5 259.2 L181.4 268.2 L181.3 277.3 L181.1 286.3 L180.9 295.4 L180.8 304.5 L180.6 313.5 L180.4 322.6 L180.1 331.8 L179.9 340.9 L179.7 350.0 L179.4 359.2 L179.1 368.4 L178.9 377.6 L178.5 386.9 L180.3 388.2 L180.6 378.9 L180.9 369.6 L181.2 360.4 L181.5 351.2 L181.8 342.0 L182.0 332.8 L182.2 323.6 L182.5 314.5 L182.7 305.3 L182.9 296.2 L183.0 287.1 L183.2 278.0 L183.4 268.9 L183.5 259.8 L183.7 250.7 L183.8 241.7 L183.9 232.6 L184.0 223.6 L184.1 214.5 L184.2 205.5 L184.3 196.4 L184.4 187.4 L184.5 178.3 L184.5 169.3 L184.6 160.2 L184.7 151.2 Z" fill="#86182a"/><path d="M184.0 151.2 L184.0 160.2 L183.9 169.3 L183.8 178.3 L183.8 187.3 L183.7 196.3 L183.6 205.4 L183.5 214.4 L183.4 223.4 L183.3 232.5 L183.2 241.5 L183.0 250.6 L182.9 259.6 L182.8 268.7 L182.6 277.8 L182.4 286.8 L182.3 295.9 L182.1 305.1 L181.9 314.2 L181.7 323.3 L181.4 332.5 L181.2 341.6 L180.9 350.8 L180.7 360.0 L180.4 369.3 L180.1 378.5 L179.8 387.8 L181.6 389.1 L181.9 379.8 L182.2 370.5 L182.5 361.2 L182.8 352.0 L183.1 342.7 L183.3 333.5 L183.6 324.3 L183.8 315.1 L184.0 305.9 L184.2 296.8 L184.4 287.6 L184.6 278.5 L184.7 269.4 L184.9 260.2 L185.0 251.1 L185.2 242.0 L185.3 232.9 L185.4 223.8 L185.5 214.8 L185.6 205.7 L185.7 196.6 L185.8 187.5 L185.9 178.4 L186.0 169.4 L186.0 160.3 L186.1 151.2 Z" fill="#641828"/><path d="M185.5 151.2 L185.4 160.3 L185.3 169.3 L185.3 178.4 L185.2 187.5 L185.1 196.5 L185.0 205.6 L184.9 214.7 L184.8 223.7 L184.7 232.8 L184.6 241.9 L184.4 251.0 L184.3 260.1 L184.1 269.2 L184.0 278.3 L183.8 287.4 L183.6 296.5 L183.4 305.7 L183.2 314.8 L183.0 324.0 L182.8 333.2 L182.5 342.4 L182.2 351.6 L182.0 360.9 L181.7 370.1 L181.3 379.4 L181.0 388.7 L185.0 391.7 L185.4 382.3 L185.7 372.9 L186.1 363.5 L186.4 354.2 L186.7 344.8 L187.0 335.5 L187.3 326.2 L187.5 316.9 L187.8 307.6 L188.0 298.4 L188.2 289.1 L188.4 279.9 L188.6 270.6 L188.7 261.4 L188.9 252.2 L189.1 243.0 L189.2 233.8 L189.3 224.6 L189.4 215.5 L189.6 206.3 L189.7 197.1 L189.8 187.9 L189.9 178.7 L189.9 169.6 L190.0 160.4 L190.1 151.2 Z" fill="#ad1f22"/><path d="M189.5 151.2 L189.4 160.4 L189.3 169.5 L189.2 178.7 L189.1 187.9 L189.0 197.0 L188.9 206.2 L188.8 215.3 L188.7 224.5 L188.6 233.7 L188.4 242.9 L188.3 252.1 L188.1 261.2 L188.0 270.4 L187.8 279.7 L187.6 288.9 L187.4 298.1 L187.2 307.4 L186.9 316.6 L186.7 325.9 L186.4 335.2 L186.1 344.5 L185.8 353.8 L185.5 363.2 L185.2 372.5 L184.8 381.9 L184.5 391.3 L185.8 392.3 L186.2 382.9 L186.6 373.5 L186.9 364.1 L187.2 354.7 L187.6 345.3 L187.8 336.0 L188.1 326.6 L188.4 317.3 L188.6 308.0 L188.9 298.7 L189.1 289.5 L189.3 280.2 L189.5 271.0 L189.6 261.7 L189.8 252.5 L190.0 243.3 L190.1 234.0 L190.2 224.8 L190.4 215.6 L190.5 206.4 L190.6 197.2 L190.7 188.0 L190.8 178.8 L190.9 169.6 L190.9 160.4 L191.0 151.2 Z" fill="#b25e78"/><path d="M190.4 151.2 L190.3 160.4 L190.2 169.6 L190.1 178.8 L190.1 188.0 L190.0 197.1 L189.9 206.3 L189.7 215.5 L189.6 224.7 L189.5 233.9 L189.3 243.1 L189.2 252.3 L189.0 261.5 L188.9 270.7 L188.7 280.0 L188.5 289.2 L188.3 298.5 L188.0 307.7 L187.8 317.0 L187.5 326.3 L187.3 335.6 L187.0 345.0 L186.7 354.3 L186.3 363.7 L186.0 373.1 L185.6 382.5 L185.3 391.9 L188.4 394.3 L188.8 384.8 L189.2 375.3 L189.6 365.8 L189.9 356.3 L190.3 346.9 L190.6 337.5 L190.9 328.0 L191.2 318.7 L191.4 309.3 L191.7 299.9 L191.9 290.6 L192.1 281.2 L192.3 271.9 L192.5 262.6 L192.7 253.3 L192.9 244.0 L193.0 234.7 L193.2 225.4 L193.3 216.1 L193.4 206.9 L193.5 197.6 L193.7 188.3 L193.8 179.0 L193.8 169.8 L193.9 160.5 L194.0 151.2 Z" fill="#a0171a"/><path d="M193.4 151.2 L193.3 160.5 L193.2 169.7 L193.1 179.0 L193.0 188.2 L192.9 197.5 L192.8 206.8 L192.7 216.0 L192.6 225.3 L192.4 234.6 L192.3 243.8 L192.1 253.1 L191.9 262.4 L191.7 271.7 L191.5 281.0 L191.3 290.3 L191.1 299.7 L190.8 309.0 L190.6 318.4 L190.3 327.7 L190.0 337.1 L189.7 346.5 L189.4 356.0 L189.0 365.4 L188.7 374.9 L188.3 384.4 L187.8 393.9 L190.1 395.6 L190.6 386.0 L191.0 376.5 L191.4 366.9 L191.8 357.4 L192.1 347.9 L192.5 338.5 L192.8 329.0 L193.1 319.6 L193.3 310.1 L193.6 300.7 L193.8 291.3 L194.1 281.9 L194.3 272.6 L194.5 263.2 L194.7 253.9 L194.8 244.5 L195.0 235.2 L195.2 225.8 L195.3 216.5 L195.4 207.2 L195.5 197.8 L195.7 188.5 L195.8 179.2 L195.9 169.9 L196.0 160.5 L196.0 151.2 Z" fill="#7c1524"/><path d="M195.4 151.2 L195.3 160.5 L195.2 169.8 L195.1 179.1 L195.0 188.5 L194.9 197.8 L194.8 207.1 L194.7 216.4 L194.5 225.7 L194.4 235.0 L194.2 244.3 L194.1 253.7 L193.9 263.0 L193.7 272.4 L193.5 281.7 L193.2 291.1 L193.0 300.5 L192.7 309.9 L192.5 319.3 L192.2 328.7 L191.9 338.1 L191.5 347.6 L191.2 357.1 L190.8 366.6 L190.4 376.1 L190.0 385.6 L189.6 395.2 L191.4 396.5 L191.8 386.9 L192.2 377.3 L192.7 367.8 L193.0 358.2 L193.4 348.7 L193.7 339.2 L194.1 329.7 L194.4 320.2 L194.7 310.7 L194.9 301.3 L195.2 291.9 L195.4 282.4 L195.6 273.0 L195.8 263.6 L196.0 254.2 L196.2 244.9 L196.4 235.5 L196.5 226.1 L196.7 216.7 L196.8 207.4 L196.9 198.0 L197.1 188.7 L197.2 179.3 L197.3 169.9 L197.4 160.6 L197.5 151.2 Z" fill="#641828"/><path d="M196.8 151.2 L196.7 160.6 L196.6 169.9 L196.5 179.2 L196.4 188.6 L196.3 197.9 L196.2 207.3 L196.1 216.6 L195.9 226.0 L195.8 235.3 L195.6 244.7 L195.4 254.1 L195.2 263.4 L195.0 272.8 L194.8 282.2 L194.6 291.6 L194.3 301.0 L194.1 310.5 L193.8 319.9 L193.5 329.4 L193.2 338.9 L192.8 348.3 L192.5 357.9 L192.1 367.4 L191.7 376.9 L191.3 386.5 L190.8 396.1 L194.6 398.9 L195.0 389.2 L195.5 379.5 L196.0 369.9 L196.4 360.2 L196.8 350.6 L197.1 341.0 L197.5 331.4 L197.8 321.9 L198.1 312.3 L198.4 302.8 L198.7 293.2 L198.9 283.7 L199.2 274.2 L199.4 264.7 L199.6 255.3 L199.8 245.8 L200.0 236.3 L200.2 226.8 L200.3 217.4 L200.5 207.9 L200.6 198.5 L200.7 189.0 L200.8 179.6 L201.0 170.1 L201.1 160.7 L201.2 151.2 Z" fill="#98151a"/><path d="M200.5 151.2 L200.4 160.6 L200.3 170.1 L200.2 179.5 L200.1 189.0 L200.0 198.4 L199.8 207.8 L199.7 217.3 L199.5 226.7 L199.4 236.2 L199.2 245.6 L199.0 255.1 L198.8 264.5 L198.6 274.0 L198.3 283.5 L198.1 293.0 L197.8 302.5 L197.5 312.0 L197.2 321.6 L196.9 331.1 L196.6 340.7 L196.2 350.3 L195.8 359.9 L195.4 369.5 L195.0 379.2 L194.5 388.8 L194.0 398.5 L195.7 399.8 L196.2 390.1 L196.7 380.3 L197.2 370.6 L197.6 361.0 L198.0 351.3 L198.4 341.7 L198.7 332.1 L199.1 322.5 L199.4 312.9 L199.7 303.3 L200.0 293.7 L200.2 284.2 L200.5 274.7 L200.7 265.1 L200.9 255.6 L201.1 246.1 L201.3 236.6 L201.5 227.1 L201.6 217.6 L201.8 208.1 L201.9 198.6 L202.1 189.2 L202.2 179.7 L202.3 170.2 L202.4 160.7 L202.5 151.2 Z" fill="#a8546e"/><path d="M201.9 151.2 L201.8 160.7 L201.7 170.2 L201.6 179.6 L201.4 189.1 L201.3 198.6 L201.2 208.0 L201.0 217.5 L200.9 227.0 L200.7 236.5 L200.5 246.0 L200.3 255.4 L200.1 264.9 L199.9 274.5 L199.6 284.0 L199.4 293.5 L199.1 303.1 L198.8 312.6 L198.5 322.2 L198.1 331.8 L197.8 341.4 L197.4 351.0 L197.0 360.6 L196.6 370.3 L196.1 380.0 L195.7 389.7 L195.2 399.4 L198.0 401.5 L198.5 391.7 L199.0 381.9 L199.5 372.2 L200.0 362.4 L200.4 352.7 L200.8 343.0 L201.2 333.3 L201.5 323.7 L201.9 314.0 L202.2 304.4 L202.5 294.7 L202.8 285.1 L203.0 275.5 L203.3 265.9 L203.5 256.3 L203.7 246.8 L203.9 237.2 L204.1 227.6 L204.2 218.1 L204.4 208.5 L204.5 199.0 L204.7 189.4 L204.8 179.9 L204.9 170.3 L205.0 160.8 L205.2 151.2 Z" fill="#a4191c"/><path d="M204.5 151.2 L204.4 160.7 L204.3 170.3 L204.2 179.8 L204.1 189.4 L203.9 198.9 L203.8 208.4 L203.6 218.0 L203.5 227.5 L203.3 237.1 L203.1 246.6 L202.9 256.2 L202.7 265.7 L202.4 275.3 L202.2 284.9 L201.9 294.5 L201.6 304.1 L201.3 313.7 L200.9 323.4 L200.6 333.0 L200.2 342.7 L199.8 352.4 L199.4 362.1 L199.0 371.8 L198.5 381.6 L198.0 391.3 L197.5 401.1 L199.4 402.6 L199.9 392.7 L200.4 382.9 L200.9 373.1 L201.4 363.3 L201.8 353.5 L202.2 343.8 L202.6 334.1 L203.0 324.4 L203.3 314.7 L203.7 305.0 L204.0 295.3 L204.3 285.7 L204.5 276.0 L204.8 266.4 L205.0 256.8 L205.2 247.2 L205.4 237.6 L205.6 228.0 L205.8 218.4 L205.9 208.8 L206.1 199.2 L206.2 189.6 L206.4 180.0 L206.5 170.4 L206.6 160.8 L206.7 151.2 Z" fill="#7c1524"/><path d="M206.1 151.2 L206.0 160.8 L205.9 170.4 L205.7 179.9 L205.6 189.5 L205.5 199.1 L205.3 208.7 L205.2 218.2 L205.0 227.8 L204.8 237.4 L204.6 247.0 L204.4 256.6 L204.2 266.2 L203.9 275.8 L203.7 285.4 L203.4 295.1 L203.1 304.7 L202.8 314.4 L202.4 324.1 L202.0 333.8 L201.7 343.5 L201.3 353.2 L200.8 362.9 L200.4 372.7 L199.9 382.5 L199.4 392.3 L198.8 402.1 L200.2 403.2 L200.8 393.4 L201.3 383.5 L201.8 373.7 L202.3 363.9 L202.8 354.1 L203.2 344.3 L203.6 334.6 L204.0 324.8 L204.3 315.1 L204.6 305.4 L205.0 295.7 L205.2 286.0 L205.5 276.4 L205.8 266.7 L206.0 257.1 L206.2 247.4 L206.4 237.8 L206.6 228.2 L206.8 218.5 L207.0 208.9 L207.1 199.3 L207.3 189.7 L207.4 180.1 L207.5 170.4 L207.6 160.8 L207.8 151.2 Z" fill="#561424"/><path d="M207.1 151.2 L207.0 160.8 L206.9 170.4 L206.8 180.0 L206.6 189.6 L206.5 199.2 L206.3 208.8 L206.2 218.4 L206.0 228.0 L205.8 237.6 L205.6 247.3 L205.4 256.9 L205.2 266.5 L204.9 276.2 L204.6 285.8 L204.4 295.5 L204.0 305.1 L203.7 314.8 L203.4 324.5 L203.0 334.3 L202.6 344.0 L202.2 353.7 L201.7 363.5 L201.3 373.3 L200.8 383.1 L200.3 393.0 L199.7 402.8 L202.0 404.6 L202.6 394.7 L203.2 384.8 L203.7 374.9 L204.2 365.0 L204.7 355.2 L205.1 345.3 L205.5 335.5 L205.9 325.8 L206.3 316.0 L206.6 306.2 L206.9 296.5 L207.2 286.8 L207.5 277.0 L207.8 267.3 L208.0 257.6 L208.3 247.9 L208.5 238.3 L208.7 228.6 L208.9 218.9 L209.0 209.2 L209.2 199.6 L209.3 189.9 L209.5 180.2 L209.6 170.5 L209.7 160.9 L209.8 151.2 Z" fill="#a0171a"/><path d="M209.2 151.2 L209.1 160.9 L209.0 170.5 L208.8 180.2 L208.7 189.8 L208.6 199.5 L208.4 209.1 L208.2 218.8 L208.0 228.4 L207.9 238.1 L207.6 247.8 L207.4 257.5 L207.2 267.1 L206.9 276.8 L206.6 286.5 L206.3 296.3 L206.0 306.0 L205.7 315.7 L205.3 325.5 L204.9 335.2 L204.5 345.0 L204.1 354.8 L203.6 364.7 L203.1 374.5 L202.6 384.4 L202.1 394.3 L201.5 404.2 L202.5 404.9 L203.1 395.0 L203.7 385.1 L204.2 375.2 L204.7 365.3 L205.2 355.5 L205.6 345.6 L206.0 335.8 L206.4 326.0 L206.8 316.2 L207.1 306.4 L207.5 296.7 L207.8 286.9 L208.0 277.2 L208.3 267.5 L208.6 257.8 L208.8 248.1 L209.0 238.4 L209.2 228.7 L209.4 219.0 L209.6 209.3 L209.7 199.6 L209.9 189.9 L210.0 180.3 L210.1 170.6 L210.3 160.9 L210.4 151.2 Z" fill="#b25e78"/><path d="M209.8 151.2 L209.6 160.9 L209.5 170.5 L209.4 180.2 L209.2 189.9 L209.1 199.5 L208.9 209.2 L208.8 218.9 L208.6 228.6 L208.4 238.2 L208.2 247.9 L207.9 257.6 L207.7 267.3 L207.4 277.0 L207.2 286.7 L206.9 296.5 L206.5 306.2 L206.2 315.9 L205.8 325.7 L205.4 335.5 L205.0 345.3 L204.6 355.1 L204.1 365.0 L203.6 374.8 L203.1 384.7 L202.6 394.6 L202.0 404.5 L204.2 406.2 L204.8 396.2 L205.4 386.2 L205.9 376.3 L206.4 366.4 L206.9 356.5 L207.4 346.6 L207.8 336.7 L208.2 326.9 L208.6 317.0 L208.9 307.2 L209.3 297.4 L209.6 287.6 L209.9 277.8 L210.2 268.1 L210.4 258.3 L210.6 248.5 L210.9 238.8 L211.1 229.1 L211.3 219.3 L211.5 209.6 L211.6 199.9 L211.8 190.1 L211.9 180.4 L212.1 170.7 L212.2 160.9 L212.3 151.2 Z" fill="#a81b1e"/><path d="M211.7 151.2 L211.6 160.9 L211.4 170.6 L211.3 180.4 L211.1 190.1 L211.0 199.8 L210.8 209.5 L210.6 219.2 L210.5 228.9 L210.3 238.7 L210.0 248.4 L209.8 258.1 L209.5 267.9 L209.3 277.6 L209.0 287.4 L208.7 297.2 L208.3 307.0 L208.0 316.8 L207.6 326.6 L207.2 336.4 L206.8 346.3 L206.3 356.1 L205.8 366.0 L205.3 375.9 L204.8 385.9 L204.2 395.8 L203.6 405.8 L205.5 407.2 L206.1 397.2 L206.7 387.2 L207.3 377.2 L207.8 367.2 L208.3 357.3 L208.8 347.3 L209.2 337.4 L209.6 327.6 L210.0 317.7 L210.4 307.8 L210.7 298.0 L211.1 288.2 L211.4 278.3 L211.6 268.5 L211.9 258.7 L212.1 248.9 L212.4 239.1 L212.6 229.4 L212.8 219.6 L213.0 209.8 L213.1 200.1 L213.3 190.3 L213.5 180.5 L213.6 170.7 L213.7 161.0 L213.9 151.2 Z" fill="#86182a"/><path d="M213.2 151.2 L213.1 161.0 L213.0 170.7 L212.8 180.5 L212.7 190.2 L212.5 200.0 L212.3 209.7 L212.2 219.5 L212.0 229.2 L211.8 239.0 L211.5 248.8 L211.3 258.6 L211.0 268.3 L210.8 278.1 L210.5 287.9 L210.1 297.7 L209.8 307.6 L209.4 317.4 L209.0 327.3 L208.6 337.1 L208.2 347.0 L207.7 356.9 L207.2 366.9 L206.7 376.8 L206.2 386.8 L205.6 396.8 L205.0 406.8 L207.6 408.7 L208.2 398.6 L208.8 388.6 L209.4 378.5 L209.9 368.5 L210.5 358.5 L210.9 348.5 L211.4 338.6 L211.8 328.6 L212.2 318.7 L212.6 308.8 L213.0 298.9 L213.3 289.0 L213.6 279.1 L213.9 269.2 L214.2 259.4 L214.5 249.5 L214.7 239.7 L214.9 229.8 L215.1 220.0 L215.3 210.2 L215.5 200.3 L215.7 190.5 L215.8 180.7 L216.0 170.9 L216.1 161.0 L216.2 151.2 Z" fill="#4c1120"/><path d="M215.6 151.2 L215.5 161.0 L215.3 170.8 L215.2 180.6 L215.0 190.5 L214.9 200.3 L214.7 210.1 L214.5 219.9 L214.3 229.7 L214.1 239.5 L213.8 249.4 L213.6 259.2 L213.3 269.0 L213.0 278.9 L212.7 288.8 L212.4 298.6 L212.0 308.5 L211.7 318.4 L211.3 328.3 L210.8 338.3 L210.4 348.2 L209.9 358.2 L209.4 368.2 L208.8 378.2 L208.3 388.2 L207.6 398.3 L207.0 408.3 L214.0 413.6 L214.7 403.3 L215.4 393.0 L216.0 382.8 L216.6 372.6 L217.2 362.4 L217.7 352.2 L218.3 342.1 L218.7 331.9 L219.2 321.8 L219.6 311.7 L220.0 301.6 L220.4 291.6 L220.7 281.5 L221.1 271.4 L221.4 261.4 L221.7 251.4 L221.9 241.3 L222.2 231.3 L222.4 221.3 L222.6 211.3 L222.8 201.3 L223.0 191.3 L223.2 181.2 L223.3 171.2 L223.5 161.2 L223.6 151.2 Z" fill="#98151a"/><path d="M223.0 151.2 L222.9 161.2 L222.7 171.2 L222.6 181.2 L222.4 191.2 L222.2 201.2 L222.0 211.2 L221.8 221.2 L221.6 231.2 L221.3 241.2 L221.0 251.2 L220.8 261.2 L220.5 271.3 L220.1 281.3 L219.8 291.3 L219.4 301.4 L219.0 311.5 L218.6 321.6 L218.2 331.7 L217.7 341.8 L217.2 351.9 L216.6 362.1 L216.1 372.2 L215.4 382.4 L214.8 392.7 L214.1 402.9 L213.4 413.2 L216.2 415.2 L216.9 404.9 L217.6 394.6 L218.3 384.3 L218.9 374.0 L219.5 363.7 L220.1 353.5 L220.6 343.3 L221.1 333.1 L221.6 322.9 L222.0 312.7 L222.5 302.6 L222.8 292.5 L223.2 282.3 L223.5 272.2 L223.9 262.1 L224.2 252.0 L224.4 241.9 L224.7 231.8 L224.9 221.7 L225.1 211.7 L225.4 201.6 L225.5 191.5 L225.7 181.4 L225.9 171.4 L226.1 161.3 L226.2 151.2 Z" fill="#ba6a82"/><path d="M225.6 151.2 L225.4 161.3 L225.3 171.3 L225.1 181.4 L224.9 191.4 L224.7 201.5 L224.5 211.6 L224.3 221.6 L224.1 231.7 L223.8 241.8 L223.5 251.8 L223.3 261.9 L222.9 272.0 L222.6 282.1 L222.2 292.2 L221.9 302.4 L221.4 312.5 L221.0 322.6 L220.5 332.8 L220.0 343.0 L219.5 353.2 L219.0 363.4 L218.4 373.7 L217.7 383.9 L217.1 394.2 L216.4 404.5 L215.6 414.8 L221.7 419.4 L222.5 408.9 L223.3 398.5 L224.0 388.0 L224.7 377.6 L225.4 367.2 L226.0 356.8 L226.6 346.4 L227.1 336.1 L227.6 325.7 L228.1 315.4 L228.6 305.1 L229.0 294.8 L229.4 284.5 L229.7 274.2 L230.1 263.9 L230.4 253.7 L230.7 243.4 L231.0 233.1 L231.2 222.9 L231.5 212.6 L231.7 202.4 L231.9 192.2 L232.1 181.9 L232.3 171.7 L232.5 161.4 L232.6 151.2 Z" fill="#a0171a"/><path d="M232.0 151.2 L231.8 161.4 L231.7 171.6 L231.5 181.9 L231.3 192.1 L231.1 202.3 L230.9 212.5 L230.6 222.8 L230.4 233.0 L230.1 243.2 L229.8 253.5 L229.5 263.7 L229.1 274.0 L228.8 284.2 L228.4 294.5 L228.0 304.8 L227.5 315.1 L227.0 325.4 L226.5 335.7 L226.0 346.1 L225.4 356.4 L224.8 366.8 L224.2 377.2 L223.5 387.6 L222.7 398.1 L222.0 408.5 L221.2 419.0 L225.2 422.0 L226.0 411.6 L226.9 401.1 L227.6 390.7 L228.3 380.2 L229.0 369.7 L229.7 359.3 L230.3 348.8 L230.9 338.4 L231.4 328.0 L231.9 317.5 L232.4 307.1 L232.8 296.7 L233.2 286.2 L233.6 275.8 L234.0 265.4 L234.3 255.0 L234.6 244.6 L234.9 234.2 L235.2 223.8 L235.4 213.4 L235.7 203.0 L235.9 192.6 L236.1 182.3 L236.3 171.9 L236.5 161.5 L236.7 151.2 Z" fill="#7c1524"/><path d="M236.0 151.2 L235.9 161.5 L235.7 171.9 L235.5 182.2 L235.3 192.6 L235.1 202.9 L234.8 213.3 L234.6 223.6 L234.3 234.0 L234.0 244.4 L233.7 254.8 L233.4 265.2 L233.0 275.6 L232.6 286.0 L232.2 296.4 L231.8 306.8 L231.3 317.2 L230.8 327.6 L230.3 338.0 L229.7 348.5 L229.1 358.9 L228.5 369.3 L227.8 379.8 L227.1 390.2 L226.3 400.7 L225.5 411.2 L224.6 421.6 L227.6 423.8 L228.4 413.4 L229.3 402.9 L230.1 392.5 L230.8 382.0 L231.5 371.5 L232.2 361.0 L232.8 350.5 L233.4 340.0 L234.0 329.5 L234.5 319.0 L235.0 308.5 L235.4 297.9 L235.9 287.4 L236.3 276.9 L236.6 266.4 L237.0 255.9 L237.3 245.4 L237.6 234.9 L237.9 224.4 L238.2 213.9 L238.4 203.4 L238.6 193.0 L238.8 182.5 L239.0 172.1 L239.2 161.6 L239.4 151.2 Z" fill="#561424"/><path d="M238.8 151.2 L238.6 161.6 L238.4 172.0 L238.2 182.4 L238.0 192.9 L237.8 203.3 L237.5 213.8 L237.3 224.2 L237.0 234.7 L236.7 245.2 L236.4 255.7 L236.0 266.2 L235.7 276.7 L235.3 287.1 L234.8 297.6 L234.4 308.1 L233.9 318.6 L233.4 329.1 L232.8 339.6 L232.2 350.1 L231.6 360.6 L230.9 371.1 L230.2 381.6 L229.5 392.0 L228.7 402.5 L227.9 413.0 L227.0 423.4 L232.5 427.6 L233.5 417.2 L234.3 406.7 L235.2 396.2 L236.0 385.7 L236.7 375.2 L237.5 364.6 L238.1 354.0 L238.8 343.3 L239.3 332.7 L239.9 322.0 L240.4 311.3 L240.9 300.6 L241.4 289.9 L241.8 279.2 L242.2 268.5 L242.6 257.8 L242.9 247.1 L243.2 236.4 L243.5 225.7 L243.8 215.0 L244.1 204.3 L244.3 193.6 L244.5 183.0 L244.8 172.4 L245.0 161.8 L245.1 151.2 Z" fill="#a0171a"/><path d="M244.5 151.2 L244.3 161.8 L244.1 172.3 L243.9 182.9 L243.7 193.6 L243.4 204.2 L243.2 214.9 L242.9 225.5 L242.6 236.2 L242.3 246.9 L241.9 257.6 L241.6 268.3 L241.2 279.0 L240.8 289.7 L240.3 300.3 L239.8 311.0 L239.3 321.7 L238.8 332.3 L238.2 343.0 L237.5 353.6 L236.9 364.2 L236.2 374.8 L235.4 385.3 L234.6 395.8 L233.8 406.3 L232.9 416.7 L232.0 427.2 L233.5 428.3 L234.5 417.9 L235.4 407.5 L236.3 397.0 L237.1 386.5 L237.8 375.9 L238.5 365.3 L239.2 354.7 L239.9 344.0 L240.5 333.4 L241.0 322.7 L241.6 311.9 L242.1 301.2 L242.5 290.5 L242.9 279.7 L243.3 268.9 L243.7 258.2 L244.1 247.4 L244.4 236.7 L244.7 225.9 L245.0 215.2 L245.2 204.5 L245.5 193.8 L245.7 183.1 L245.9 172.4 L246.1 161.8 L246.3 151.2 Z" fill="#b25e78"/><path d="M245.7 151.2 L245.5 161.8 L245.3 172.4 L245.1 183.0 L244.9 193.7 L244.6 204.4 L244.4 215.1 L244.1 225.8 L243.8 236.5 L243.5 247.2 L243.1 258.0 L242.7 268.7 L242.3 279.4 L241.9 290.2 L241.4 300.9 L241.0 311.6 L240.4 322.3 L239.9 333.0 L239.3 343.7 L238.6 354.3 L238.0 364.9 L237.3 375.5 L236.5 386.1 L235.7 396.6 L234.8 407.1 L233.9 417.5 L233.0 427.9 L235.3 429.7 L236.4 419.3 L237.5 409.0 L238.5 398.5 L239.5 388.0 L240.4 377.5 L241.2 366.8 L242.0 356.2 L242.8 345.5 L243.5 334.8 L244.2 324.0 L244.8 313.2 L245.4 302.4 L245.9 291.6 L246.4 280.7 L246.9 269.9 L247.3 259.0 L247.8 248.2 L248.1 237.3 L248.5 226.5 L248.8 215.7 L249.1 204.8 L249.4 194.0 L249.7 183.3 L250.0 172.6 L250.2 161.9 L250.4 151.2 Z" fill="#ad1f22"/><path d="M249.8 151.2 L249.6 161.9 L249.3 172.5 L249.1 183.3 L248.8 194.0 L248.6 204.8 L248.3 215.6 L247.9 226.4 L247.6 237.3 L247.2 248.1 L246.8 258.9 L246.4 269.8 L245.9 280.6 L245.4 291.5 L244.9 302.3 L244.3 313.1 L243.7 323.9 L243.1 334.6 L242.4 345.4 L241.7 356.0 L240.9 366.7 L240.1 377.3 L239.2 387.9 L238.3 398.4 L237.3 408.8 L236.3 419.2 L235.2 429.6 L235.6 429.9 L236.8 419.6 L238.0 409.3 L239.1 398.9 L240.1 388.4 L241.1 377.8 L242.1 367.2 L242.9 356.6 L243.8 345.9 L244.5 335.1 L245.3 324.4 L246.0 313.6 L246.6 302.7 L247.2 291.9 L247.8 281.0 L248.3 270.1 L248.8 259.3 L249.2 248.4 L249.6 237.5 L250.0 226.6 L250.4 215.8 L250.7 204.9 L251.1 194.1 L251.3 183.3 L251.6 172.6 L251.9 161.9 L252.1 151.2 Z" fill="#7c1524"/><path d="M251.5 151.2 L251.3 161.9 L251.0 172.6 L250.7 183.3 L250.5 194.1 L250.1 204.9 L249.8 215.7 L249.5 226.6 L249.1 237.4 L248.7 248.3 L248.2 259.2 L247.8 270.0 L247.3 280.9 L246.7 291.8 L246.1 302.6 L245.5 313.4 L244.9 324.2 L244.2 335.0 L243.4 345.7 L242.6 356.4 L241.8 367.1 L240.9 377.7 L239.9 388.2 L238.9 398.7 L237.8 409.2 L236.7 419.5 L235.5 429.8 L235.9 430.1 L237.3 419.9 L238.6 409.6 L239.8 399.2 L240.9 388.8 L242.0 378.3 L243.0 367.7 L244.0 357.0 L244.9 346.3 L245.8 335.6 L246.6 324.8 L247.3 314.0 L248.0 303.1 L248.7 292.2 L249.3 281.3 L249.9 270.4 L250.4 259.5 L250.9 248.6 L251.4 237.7 L251.8 226.8 L252.2 215.9 L252.6 205.0 L252.9 194.2 L253.2 183.4 L253.5 172.6 L253.8 161.9 L254.1 151.2 Z" fill="#4c1120"/><path d="M253.5 151.2 L253.2 161.9 L252.9 172.6 L252.6 183.4 L252.3 194.2 L252.0 205.0 L251.6 215.9 L251.2 226.7 L250.8 237.6 L250.3 248.5 L249.9 259.4 L249.3 270.3 L248.8 281.2 L248.2 292.1 L247.6 303.0 L246.9 313.8 L246.1 324.7 L245.4 335.4 L244.5 346.2 L243.7 356.9 L242.7 367.5 L241.7 378.1 L240.7 388.7 L239.6 399.1 L238.4 409.5 L237.1 419.8 L235.8 430.1 L236.7 430.7 L238.3 420.6 L239.8 410.4 L241.3 400.1 L242.7 389.7 L244.0 379.2 L245.3 368.7 L246.4 358.0 L247.5 347.3 L248.6 336.5 L249.5 325.7 L250.4 314.9 L251.3 304.0 L252.1 293.0 L252.8 282.1 L253.5 271.1 L254.1 260.1 L254.7 249.1 L255.3 238.1 L255.8 227.2 L256.3 216.2 L256.8 205.3 L257.2 194.4 L257.6 183.5 L258.0 172.7 L258.3 161.9 L258.6 151.2 Z" fill="#ad1f22"/><path d="M258.0 151.2 L257.7 161.9 L257.3 172.7 L257.0 183.5 L256.6 194.3 L256.2 205.2 L255.7 216.2 L255.3 227.1 L254.8 238.1 L254.2 249.0 L253.6 260.0 L253.0 271.0 L252.3 282.0 L251.6 292.9 L250.8 303.8 L250.0 314.7 L249.1 325.6 L248.2 336.4 L247.2 347.2 L246.1 357.9 L244.9 368.5 L243.7 379.1 L242.5 389.6 L241.1 400.0 L239.7 410.3 L238.2 420.5 L236.6 430.6 L236.8 430.8 L238.5 420.8 L240.2 410.6 L241.7 400.3 L243.1 389.9 L244.5 379.5 L245.8 368.9 L247.0 358.3 L248.2 347.6 L249.2 336.8 L250.2 326.0 L251.2 315.1 L252.1 304.2 L252.9 293.2 L253.7 282.2 L254.4 271.3 L255.1 260.2 L255.7 249.2 L256.3 238.2 L256.8 227.2 L257.3 216.3 L257.8 205.3 L258.2 194.4 L258.6 183.5 L259.0 172.7 L259.4 161.9 L259.7 151.2 Z" fill="#bf768c"/><path d="M259.1 151.2 L258.8 161.9 L258.4 172.7 L258.0 183.5 L257.6 194.4 L257.2 205.3 L256.7 216.2 L256.2 227.2 L255.7 238.2 L255.1 249.2 L254.5 260.2 L253.9 271.2 L253.2 282.1 L252.4 293.1 L251.6 304.1 L250.7 315.0 L249.8 325.8 L248.8 336.6 L247.8 347.4 L246.7 358.1 L245.5 368.8 L244.2 379.3 L242.9 389.8 L241.5 400.2 L240.0 410.5 L238.4 420.7 L236.7 430.8 L237.5 431.3 L239.5 421.4 L241.3 411.3 L243.1 401.1 L244.8 390.8 L246.4 380.3 L247.9 369.8 L249.3 359.2 L250.6 348.5 L251.8 337.7 L253.0 326.8 L254.1 315.9 L255.1 305.0 L256.1 294.0 L257.0 282.9 L257.8 271.9 L258.6 260.8 L259.3 249.7 L260.0 238.6 L260.6 227.6 L261.2 216.5 L261.7 205.5 L262.2 194.6 L262.7 183.6 L263.2 172.7 L263.6 161.9 L264.0 151.2 Z" fill="#a0171a"/><path d="M263.4 151.2 L263.0 161.9 L262.6 172.7 L262.1 183.6 L261.6 194.5 L261.1 205.5 L260.6 216.5 L260.0 227.5 L259.4 238.6 L258.8 249.6 L258.1 260.7 L257.3 271.8 L256.5 282.8 L255.6 293.8 L254.7 304.8 L253.7 315.8 L252.6 326.7 L251.4 337.5 L250.2 348.3 L248.9 359.0 L247.6 369.7 L246.1 380.2 L244.5 390.7 L242.9 401.0 L241.2 411.2 L239.3 421.3 L237.4 431.3 L237.7 431.5 L239.8 421.6 L241.8 411.6 L243.7 401.4 L245.4 391.1 L247.1 380.7 L248.7 370.2 L250.2 359.6 L251.6 348.8 L252.9 338.0 L254.1 327.2 L255.3 316.3 L256.3 305.3 L257.4 294.3 L258.3 283.2 L259.2 272.1 L260.0 261.0 L260.8 249.9 L261.5 238.8 L262.1 227.7 L262.8 216.6 L263.3 205.6 L263.9 194.6 L264.4 183.7 L264.8 172.8 L265.3 161.9 L265.7 151.2 Z" fill="#7c1524"/><path d="M265.1 151.2 L264.7 161.9 L264.2 172.8 L263.8 183.6 L263.3 194.6 L262.7 205.6 L262.2 216.6 L261.6 227.7 L260.9 238.7 L260.2 249.8 L259.5 260.9 L258.7 272.0 L257.8 283.1 L256.9 294.1 L255.9 305.2 L254.8 316.1 L253.7 327.1 L252.5 337.9 L251.2 348.7 L249.8 359.4 L248.4 370.0 L246.8 380.6 L245.2 391.0 L243.5 401.3 L241.6 411.5 L239.7 421.5 L237.7 431.4 L238.0 431.7 L240.2 421.9 L242.3 411.9 L244.3 401.8 L246.2 391.5 L248.0 381.1 L249.6 370.6 L251.2 360.0 L252.7 349.3 L254.1 338.5 L255.4 327.6 L256.6 316.6 L257.7 305.6 L258.8 294.6 L259.8 283.5 L260.7 272.4 L261.6 261.3 L262.4 250.1 L263.2 239.0 L263.9 227.9 L264.5 216.8 L265.1 205.7 L265.7 194.7 L266.2 183.7 L266.7 172.8 L267.2 162.0 L267.6 151.2 Z" fill="#641828"/><path d="M267.0 151.2 L266.6 162.0 L266.1 172.8 L265.6 183.7 L265.1 194.7 L264.5 205.7 L263.9 216.7 L263.3 227.8 L262.6 238.9 L261.9 250.1 L261.1 261.2 L260.2 272.3 L259.3 283.4 L258.3 294.5 L257.3 305.5 L256.2 316.5 L255.0 327.4 L253.7 338.3 L252.3 349.1 L250.9 359.8 L249.3 370.5 L247.7 381.0 L245.9 391.4 L244.1 401.7 L242.2 411.8 L240.1 421.8 L237.9 431.7 L238.8 432.3 L241.3 422.6 L243.7 412.8 L246.0 402.7 L248.2 392.5 L250.2 382.2 L252.1 371.7 L253.9 361.1 L255.6 350.4 L257.2 339.5 L258.7 328.6 L260.1 317.6 L261.4 306.6 L262.7 295.5 L263.8 284.3 L264.9 273.1 L265.9 261.9 L266.8 250.7 L267.7 239.5 L268.5 228.3 L269.2 217.1 L269.9 206.0 L270.6 194.9 L271.2 183.8 L271.8 172.9 L272.3 162.0 L272.8 151.2 Z" fill="#a0171a"/><path d="M272.2 151.2 L271.7 162.0 L271.2 172.9 L270.6 183.8 L270.0 194.8 L269.3 205.9 L268.7 217.1 L267.9 228.2 L267.1 239.4 L266.3 250.6 L265.4 261.8 L264.4 273.0 L263.3 284.2 L262.2 295.4 L261.0 306.5 L259.7 317.5 L258.3 328.5 L256.8 339.4 L255.3 350.2 L253.6 360.9 L251.8 371.5 L249.9 382.0 L247.9 392.4 L245.8 402.6 L243.6 412.6 L241.2 422.5 L238.7 432.2 L239.1 432.5 L241.8 422.9 L244.3 413.1 L246.7 403.1 L249.0 392.9 L251.1 382.6 L253.1 372.1 L255.0 361.5 L256.8 350.8 L258.5 340.0 L260.1 329.0 L261.6 318.0 L262.9 307.0 L264.2 295.8 L265.4 284.6 L266.6 273.4 L267.6 262.2 L268.6 250.9 L269.5 239.7 L270.4 228.4 L271.2 217.2 L271.9 206.1 L272.6 194.9 L273.2 183.9 L273.8 172.9 L274.4 162.0 L274.9 151.2 Z" fill="#a8546e"/><path d="M274.3 151.2 L273.8 162.0 L273.2 172.9 L272.6 183.9 L272.0 194.9 L271.3 206.0 L270.6 217.2 L269.8 228.4 L269.0 239.6 L268.1 250.9 L267.1 262.1 L266.1 273.3 L265.0 284.5 L263.8 295.7 L262.5 306.8 L261.1 317.9 L259.7 328.9 L258.1 339.8 L256.5 350.7 L254.7 361.4 L252.8 372.0 L250.8 382.5 L248.7 392.8 L246.5 403.0 L244.1 413.0 L241.6 422.8 L239.0 432.5 L239.9 433.1 L242.9 423.6 L245.7 413.9 L248.4 404.0 L251.0 393.9 L253.4 383.7 L255.7 373.2 L257.8 362.6 L259.8 351.9 L261.7 341.1 L263.5 330.1 L265.2 319.1 L266.7 307.9 L268.2 296.7 L269.5 285.5 L270.8 274.2 L272.0 262.8 L273.1 251.5 L274.1 240.2 L275.1 228.9 L276.0 217.6 L276.8 206.3 L277.6 195.1 L278.3 184.0 L279.0 173.0 L279.6 162.0 L280.3 151.2 Z" fill="#a81b1e"/><path d="M279.6 151.2 L279.0 162.0 L278.4 173.0 L277.7 184.0 L277.0 195.1 L276.2 206.3 L275.4 217.5 L274.5 228.8 L273.6 240.1 L272.6 251.4 L271.5 262.8 L270.3 274.1 L269.1 285.4 L267.7 296.6 L266.3 307.8 L264.7 318.9 L263.1 330.0 L261.3 340.9 L259.5 351.8 L257.5 362.5 L255.4 373.1 L253.1 383.5 L250.7 393.8 L248.2 403.9 L245.6 413.8 L242.7 423.6 L239.8 433.1 L240.1 433.3 L243.3 423.9 L246.3 414.3 L249.1 404.4 L251.7 394.3 L254.3 384.1 L256.6 373.7 L258.9 363.1 L261.0 352.3 L262.9 341.5 L264.8 330.5 L266.5 319.5 L268.2 308.3 L269.7 297.1 L271.1 285.8 L272.4 274.5 L273.7 263.1 L274.8 251.7 L275.9 240.4 L276.9 229.0 L277.8 217.7 L278.7 206.4 L279.5 195.2 L280.3 184.1 L281.0 173.0 L281.6 162.0 L282.3 151.2 Z" fill="#7c1524"/><path d="M281.6 151.2 L281.0 162.0 L280.4 173.0 L279.7 184.0 L278.9 195.2 L278.1 206.4 L277.3 217.7 L276.3 229.0 L275.3 240.3 L274.3 251.7 L273.2 263.0 L271.9 274.4 L270.6 285.7 L269.2 297.0 L267.7 308.2 L266.1 319.3 L264.4 330.4 L262.6 341.4 L260.6 352.2 L258.5 362.9 L256.3 373.5 L254.0 384.0 L251.5 394.2 L248.9 404.3 L246.1 414.2 L243.2 423.8 L240.1 433.3 L240.6 433.7 L244.0 424.4 L247.2 414.8 L250.2 405.0 L253.1 395.0 L255.8 384.8 L258.3 374.4 L260.7 363.8 L263.0 353.1 L265.1 342.2 L267.1 331.2 L268.9 320.1 L270.7 308.9 L272.3 297.7 L273.8 286.3 L275.2 274.9 L276.6 263.5 L277.8 252.1 L278.9 240.7 L280.0 229.3 L281.0 217.9 L281.9 206.6 L282.8 195.3 L283.6 184.1 L284.4 173.0 L285.1 162.1 L285.8 151.2 Z" fill="#5e1422"/><path d="M285.1 151.2 L284.5 162.1 L283.8 173.0 L283.0 184.1 L282.2 195.3 L281.4 206.6 L280.4 217.9 L279.5 229.2 L278.4 240.6 L277.3 252.0 L276.0 263.5 L274.7 274.9 L273.3 286.2 L271.8 297.6 L270.2 308.8 L268.5 320.0 L266.7 331.1 L264.7 342.1 L262.6 353.0 L260.4 363.7 L258.0 374.3 L255.5 384.7 L252.8 394.9 L250.0 404.9 L247.0 414.7 L243.9 424.3 L240.6 433.6 L241.8 434.6 L245.7 425.5 L249.4 416.1 L252.9 406.5 L256.2 396.6 L259.3 386.5 L262.2 376.1 L265.0 365.6 L267.6 354.8 L270.1 343.9 L272.4 332.9 L274.5 321.7 L276.5 310.4 L278.4 299.1 L280.2 287.6 L281.8 276.1 L283.4 264.6 L284.8 253.0 L286.1 241.5 L287.4 229.9 L288.5 218.4 L289.6 207.0 L290.6 195.6 L291.5 184.3 L292.4 173.1 L293.3 162.1 L294.0 151.2 Z" fill="#98151a"/><path d="M293.4 151.2 L292.6 162.1 L291.8 173.1 L290.9 184.3 L290.0 195.6 L289.0 206.9 L287.9 218.4 L286.8 229.9 L285.6 241.4 L284.3 252.9 L282.8 264.5 L281.3 276.0 L279.7 287.5 L278.0 298.9 L276.1 310.3 L274.1 321.6 L272.0 332.8 L269.7 343.8 L267.3 354.7 L264.7 365.4 L261.9 376.0 L259.0 386.3 L255.9 396.5 L252.7 406.4 L249.2 416.0 L245.6 425.4 L241.7 434.5 L242.0 434.7 L246.0 425.7 L249.8 416.4 L253.4 406.8 L256.8 396.9 L260.0 386.8 L263.0 376.5 L265.9 365.9 L268.6 355.2 L271.1 344.3 L273.5 333.2 L275.7 322.0 L277.8 310.7 L279.7 299.3 L281.5 287.9 L283.2 276.4 L284.8 264.8 L286.3 253.2 L287.6 241.6 L288.9 230.1 L290.1 218.5 L291.2 207.1 L292.2 195.7 L293.2 184.4 L294.1 173.2 L295.0 162.1 L295.8 151.2 Z" fill="#b25e78"/><path d="M295.1 151.2 L294.3 162.1 L293.5 173.2 L292.6 184.3 L291.6 195.6 L290.6 207.0 L289.5 218.5 L288.3 230.0 L287.1 241.6 L285.7 253.1 L284.3 264.7 L282.7 276.3 L281.0 287.8 L279.2 299.2 L277.3 310.6 L275.3 321.9 L273.1 333.1 L270.7 344.1 L268.2 355.0 L265.6 365.8 L262.7 376.3 L259.8 386.7 L256.6 396.8 L253.2 406.7 L249.7 416.3 L245.9 425.6 L241.9 434.7 L242.8 435.4 L247.2 426.5 L251.4 417.3 L255.3 407.8 L259.1 398.1 L262.6 388.0 L265.9 377.7 L269.0 367.2 L272.0 356.4 L274.7 345.5 L277.3 334.4 L279.8 323.2 L282.0 311.8 L284.2 300.4 L286.2 288.8 L288.0 277.2 L289.7 265.5 L291.4 253.9 L292.9 242.2 L294.3 230.5 L295.6 218.9 L296.8 207.3 L297.9 195.9 L299.0 184.5 L300.0 173.2 L300.9 162.1 L301.8 151.2 Z" fill="#a4191c"/><path d="M301.1 151.2 L300.3 162.1 L299.3 173.2 L298.4 184.5 L297.3 195.8 L296.2 207.3 L295.0 218.9 L293.7 230.5 L292.3 242.1 L290.8 253.8 L289.2 265.5 L287.5 277.1 L285.7 288.7 L283.7 300.3 L281.6 311.7 L279.3 323.1 L276.9 334.3 L274.4 345.4 L271.6 356.3 L268.7 367.0 L265.6 377.6 L262.3 387.9 L258.8 397.9 L255.1 407.7 L251.2 417.2 L247.1 426.4 L242.7 435.3 L243.4 435.8 L248.1 427.1 L252.5 418.0 L256.7 408.6 L260.6 398.8 L264.3 388.8 L267.9 378.6 L271.2 368.0 L274.3 357.3 L277.2 346.4 L280.0 335.3 L282.6 324.0 L285.0 312.6 L287.2 301.1 L289.4 289.5 L291.3 277.8 L293.2 266.1 L294.9 254.3 L296.5 242.6 L297.9 230.8 L299.3 219.2 L300.6 207.5 L301.8 196.0 L302.9 184.6 L304.0 173.3 L305.0 162.2 L305.9 151.2 Z" fill="#7c1524"/><path d="M305.3 151.2 L304.4 162.2 L303.4 173.3 L302.3 184.6 L301.2 196.0 L300.0 207.5 L298.8 219.1 L297.4 230.8 L295.9 242.5 L294.3 254.2 L292.6 266.0 L290.8 277.7 L288.9 289.4 L286.8 301.0 L284.5 312.5 L282.1 323.9 L279.6 335.1 L276.9 346.2 L274.0 357.2 L270.9 367.9 L267.6 378.4 L264.1 388.7 L260.4 398.7 L256.5 408.5 L252.3 417.9 L247.9 427.0 L243.3 435.7 L243.7 436.0 L248.4 427.3 L253.0 418.3 L257.3 408.9 L261.4 399.2 L265.2 389.2 L268.8 379.0 L272.2 368.5 L275.4 357.7 L278.4 346.8 L281.3 335.7 L283.9 324.4 L286.4 312.9 L288.7 301.4 L290.9 289.8 L292.9 278.1 L294.8 266.3 L296.6 254.5 L298.2 242.8 L299.7 231.0 L301.1 219.3 L302.5 207.6 L303.7 196.1 L304.9 184.6 L305.9 173.3 L307.0 162.2 L307.9 151.2 Z" fill="#561424"/><path d="M307.3 151.2 L306.3 162.2 L305.3 173.3 L304.3 184.6 L303.1 196.1 L301.9 207.6 L300.6 219.2 L299.2 230.9 L297.6 242.7 L296.0 254.5 L294.3 266.2 L292.4 278.0 L290.4 289.7 L288.3 301.3 L286.0 312.8 L283.5 324.2 L280.9 335.5 L278.1 346.7 L275.1 357.6 L271.9 368.3 L268.5 378.8 L264.9 389.1 L261.1 399.1 L257.1 408.8 L252.8 418.2 L248.3 427.2 L243.6 435.9 L244.2 436.4 L249.3 427.9 L254.1 419.0 L258.7 409.7 L263.0 400.1 L267.1 390.1 L270.9 379.9 L274.5 369.4 L277.9 358.6 L281.1 347.7 L284.1 336.5 L286.9 325.2 L289.5 313.7 L292.0 302.1 L294.3 290.4 L296.4 278.7 L298.4 266.9 L300.3 255.0 L302.0 243.2 L303.6 231.3 L305.1 219.6 L306.5 207.8 L307.9 196.2 L309.1 184.7 L310.2 173.4 L311.3 162.2 L312.3 151.2 Z" fill="#a4191c"/><path d="M311.7 151.2 L310.7 162.2 L309.6 173.4 L308.5 184.7 L307.3 196.2 L306.0 207.8 L304.6 219.5 L303.1 231.3 L301.5 243.1 L299.8 254.9 L297.9 266.8 L295.9 278.6 L293.8 290.3 L291.5 302.0 L289.1 313.6 L286.5 325.1 L283.7 336.4 L280.7 347.6 L277.5 358.5 L274.2 369.3 L270.6 379.8 L266.8 390.0 L262.8 399.9 L258.5 409.6 L254.0 418.9 L249.2 427.8 L244.2 436.4 L244.4 436.5 L249.6 428.1 L254.5 419.2 L259.1 409.9 L263.5 400.3 L267.6 390.4 L271.5 380.1 L275.2 369.7 L278.6 358.9 L281.9 347.9 L284.9 336.8 L287.8 325.4 L290.4 314.0 L292.9 302.3 L295.3 290.6 L297.4 278.9 L299.5 267.0 L301.4 255.1 L303.1 243.3 L304.8 231.4 L306.3 219.6 L307.7 207.9 L309.0 196.3 L310.3 184.8 L311.5 173.4 L312.6 162.2 L313.6 151.2 Z" fill="#ba6a82"/><path d="M313.0 151.2 L311.9 162.2 L310.8 173.4 L309.7 184.8 L308.4 196.3 L307.1 207.9 L305.7 219.6 L304.2 231.4 L302.6 243.2 L300.8 255.1 L298.9 266.9 L296.9 278.8 L294.8 290.5 L292.5 302.2 L290.0 313.8 L287.3 325.3 L284.5 336.7 L281.5 347.8 L278.3 358.8 L274.8 369.5 L271.2 380.0 L267.3 390.2 L263.2 400.2 L258.9 409.8 L254.3 419.1 L249.4 428.0 L244.3 436.5 L245.0 437.0 L250.5 428.6 L255.6 419.9 L260.5 410.7 L265.2 401.2 L269.5 391.3 L273.7 381.1 L277.6 370.6 L281.2 359.9 L284.6 348.9 L287.9 337.7 L290.9 326.3 L293.7 314.8 L296.4 303.1 L298.8 291.4 L301.1 279.5 L303.3 267.6 L305.3 255.7 L307.1 243.7 L308.9 231.8 L310.5 219.9 L312.0 208.1 L313.4 196.4 L314.7 184.9 L316.0 173.5 L317.1 162.2 L318.2 151.2 Z" fill="#98151a"/><path d="M317.6 151.2 L316.5 162.2 L315.4 173.5 L314.1 184.9 L312.8 196.4 L311.4 208.1 L309.9 219.9 L308.3 231.7 L306.6 243.7 L304.7 255.6 L302.8 267.5 L300.6 279.4 L298.3 291.3 L295.9 303.0 L293.3 314.7 L290.5 326.2 L287.5 337.6 L284.3 348.8 L280.9 359.7 L277.2 370.5 L273.4 381.0 L269.3 391.2 L264.9 401.1 L260.3 410.6 L255.5 419.8 L250.4 428.6 L244.9 436.9 L245.4 437.3 L251.1 429.0 L256.4 420.3 L261.5 411.2 L266.3 401.7 L270.8 391.9 L275.1 381.7 L279.1 371.2 L282.9 360.5 L286.4 349.5 L289.8 338.3 L292.9 326.9 L295.8 315.3 L298.5 303.6 L301.1 291.8 L303.5 279.9 L305.7 268.0 L307.8 256.0 L309.7 244.0 L311.5 232.0 L313.2 220.1 L314.7 208.3 L316.2 196.5 L317.6 184.9 L318.8 173.5 L320.1 162.2 L321.2 151.2 Z" fill="#8e1d2c"/><path d="M320.6 151.2 L319.4 162.2 L318.2 173.5 L317.0 184.9 L315.6 196.5 L314.2 208.2 L312.6 220.1 L310.9 232.0 L309.2 243.9 L307.2 255.9 L305.2 267.9 L303.0 279.8 L300.6 291.7 L298.1 303.5 L295.4 315.2 L292.5 326.8 L289.4 338.2 L286.0 349.4 L282.5 360.4 L278.8 371.1 L274.8 381.6 L270.5 391.8 L266.0 401.6 L261.3 411.1 L256.2 420.2 L250.9 428.9 L245.3 437.2 L245.7 437.5 L251.5 429.3 L257.0 420.7 L262.2 411.6 L267.1 402.1 L271.7 392.3 L276.1 382.2 L280.2 371.7 L284.1 361.0 L287.8 350.0 L291.2 338.7 L294.4 327.3 L297.4 315.7 L300.2 304.0 L302.8 292.2 L305.3 280.2 L307.5 268.2 L309.7 256.2 L311.7 244.2 L313.5 232.2 L315.2 220.2 L316.8 208.4 L318.3 196.6 L319.7 185.0 L321.0 173.5 L322.3 162.3 L323.4 151.2 Z" fill="#4c1120"/><path d="M322.8 151.2 L321.6 162.3 L320.4 173.5 L319.1 185.0 L317.7 196.6 L316.2 208.3 L314.6 220.2 L312.9 232.1 L311.1 244.1 L309.1 256.1 L307.0 268.2 L304.8 280.1 L302.3 292.1 L299.7 303.9 L296.9 315.6 L294.0 327.2 L290.8 338.6 L287.4 349.8 L283.8 360.8 L279.9 371.6 L275.8 382.0 L271.5 392.2 L266.9 402.0 L262.0 411.5 L256.8 420.6 L251.4 429.2 L245.6 437.5 L246.2 437.9 L252.3 429.9 L258.1 421.3 L263.5 412.3 L268.7 403.0 L273.5 393.2 L278.1 383.1 L282.4 372.6 L286.5 361.9 L290.3 350.8 L293.9 339.6 L297.3 328.1 L300.4 316.5 L303.4 304.7 L306.1 292.8 L308.7 280.8 L311.1 268.8 L313.3 256.7 L315.4 244.6 L317.3 232.5 L319.1 220.5 L320.8 208.6 L322.3 196.8 L323.8 185.1 L325.2 173.6 L326.5 162.3 L327.7 151.2 Z" fill="#a81b1e"/><path d="M327.1 151.2 L325.8 162.3 L324.6 173.6 L323.2 185.1 L321.7 196.7 L320.2 208.5 L318.5 220.5 L316.7 232.5 L314.8 244.5 L312.8 256.6 L310.5 268.7 L308.2 280.7 L305.6 292.7 L302.9 304.6 L300.0 316.4 L296.8 328.0 L293.5 339.5 L289.9 350.7 L286.2 361.7 L282.1 372.5 L277.8 382.9 L273.3 393.1 L268.4 402.8 L263.3 412.2 L257.9 421.2 L252.2 429.8 L246.2 437.9 L246.4 438.1 L252.6 430.0 L258.4 421.5 L263.9 412.6 L269.2 403.2 L274.1 393.4 L278.7 383.3 L283.1 372.9 L287.2 362.1 L291.1 351.1 L294.8 339.9 L298.2 328.4 L301.4 316.7 L304.3 304.9 L307.1 293.0 L309.7 281.0 L312.1 268.9 L314.4 256.8 L316.5 244.7 L318.5 232.6 L320.3 220.6 L322.0 208.6 L323.6 196.8 L325.1 185.1 L326.5 173.6 L327.8 162.3 L329.0 151.2 Z" fill="#ba6a82"/><path d="M328.4 151.2 L327.1 162.3 L325.8 173.6 L324.5 185.1 L323.0 196.8 L321.4 208.6 L319.7 220.5 L317.9 232.6 L316.0 244.7 L313.9 256.8 L311.6 268.9 L309.2 280.9 L306.6 292.9 L303.9 304.8 L300.9 316.6 L297.7 328.3 L294.4 339.7 L290.7 351.0 L286.9 362.0 L282.8 372.7 L278.4 383.2 L273.8 393.3 L268.9 403.1 L263.7 412.5 L258.3 421.4 L252.5 430.0 L246.3 438.0 L247.0 438.5 L253.4 430.6 L259.5 422.2 L265.2 413.3 L270.7 404.0 L275.8 394.3 L280.7 384.2 L285.3 373.7 L289.6 363.0 L293.6 352.0 L297.4 340.7 L300.9 329.2 L304.3 317.5 L307.4 305.6 L310.3 293.7 L313.0 281.6 L315.5 269.4 L317.9 257.3 L320.1 245.1 L322.1 232.9 L324.0 220.8 L325.8 208.8 L327.5 196.9 L329.0 185.2 L330.5 173.6 L331.8 162.3 L333.1 151.2 Z" fill="#a81b1e"/><path d="M332.5 151.2 L331.2 162.3 L329.9 173.6 L328.4 185.2 L326.9 196.9 L325.2 208.8 L323.5 220.8 L321.6 232.9 L319.5 245.0 L317.4 257.2 L315.0 269.4 L312.5 281.5 L309.8 293.6 L306.9 305.5 L303.8 317.4 L300.5 329.1 L297.0 340.6 L293.2 351.8 L289.2 362.9 L284.9 373.6 L280.4 384.0 L275.6 394.1 L270.4 403.9 L265.0 413.2 L259.3 422.1 L253.3 430.5 L246.9 438.4 L247.0 438.5 L253.5 430.6 L259.6 422.3 L265.4 413.4 L270.9 404.1 L276.1 394.4 L281.0 384.3 L285.6 373.9 L289.9 363.1 L294.0 352.1 L297.8 340.8 L301.4 329.3 L304.8 317.6 L307.9 305.8 L310.8 293.8 L313.6 281.7 L316.1 269.5 L318.5 257.3 L320.7 245.2 L322.7 233.0 L324.7 220.9 L326.4 208.9 L328.1 197.0 L329.7 185.2 L331.1 173.7 L332.5 162.3 L333.8 151.2 Z" fill="#8e1d2c"/><path d="M333.2 151.2 L331.9 162.3 L330.5 173.6 L329.1 185.2 L327.5 196.9 L325.9 208.8 L324.1 220.8 L322.2 232.9 L320.1 245.1 L317.9 257.3 L315.6 269.5 L313.0 281.6 L310.3 293.7 L307.4 305.6 L304.3 317.5 L301.0 329.2 L297.4 340.7 L293.6 352.0 L289.6 363.0 L285.3 373.7 L280.7 384.2 L275.9 394.3 L270.7 404.0 L265.2 413.3 L259.5 422.2 L253.4 430.6 L247.0 438.5 L247.2 438.7 L253.8 430.8 L260.0 422.5 L265.9 413.6 L271.4 404.3 L276.7 394.7 L281.6 384.6 L286.3 374.2 L290.7 363.4 L294.8 352.4 L298.7 341.1 L302.3 329.6 L305.7 317.8 L308.8 306.0 L311.8 294.0 L314.6 281.9 L317.2 269.7 L319.6 257.5 L321.8 245.3 L323.9 233.1 L325.8 221.0 L327.6 208.9 L329.3 197.0 L330.9 185.3 L332.4 173.7 L333.8 162.3 L335.1 151.2 Z" fill="#5e1422"/><path d="M334.5 151.2 L333.2 162.3 L331.8 173.7 L330.3 185.2 L328.7 197.0 L327.1 208.9 L325.3 220.9 L323.3 233.0 L321.3 245.2 L319.0 257.4 L316.6 269.6 L314.1 281.8 L311.3 293.9 L308.4 305.9 L305.2 317.7 L301.9 329.4 L298.3 340.9 L294.4 352.2 L290.3 363.3 L285.9 374.0 L281.3 384.4 L276.4 394.5 L271.2 404.2 L265.7 413.5 L259.8 422.4 L253.6 430.7 L247.1 438.6 L247.7 439.1 L254.6 431.3 L261.0 423.1 L267.1 414.3 L272.9 405.1 L278.4 395.5 L283.6 385.4 L288.4 375.0 L293.0 364.3 L297.3 353.2 L301.3 341.9 L305.1 330.3 L308.6 318.6 L311.9 306.7 L315.0 294.6 L317.9 282.4 L320.6 270.2 L323.1 257.9 L325.4 245.7 L327.6 233.4 L329.6 221.2 L331.5 209.1 L333.2 197.2 L334.9 185.3 L336.4 173.7 L337.9 162.3 L339.3 151.2 Z" fill="#ad1f22"/><path d="M338.6 151.2 L337.3 162.3 L335.8 173.7 L334.3 185.3 L332.6 197.1 L330.9 209.1 L329.0 221.2 L327.0 233.4 L324.8 245.6 L322.5 257.9 L320.0 270.1 L317.4 282.4 L314.5 294.5 L311.4 306.6 L308.2 318.5 L304.6 330.2 L300.9 341.8 L296.9 353.1 L292.6 364.1 L288.1 374.9 L283.3 385.3 L278.1 395.4 L272.7 405.0 L266.9 414.2 L260.9 423.0 L254.4 431.3 L247.7 439.0 L247.9 439.2 L254.8 431.5 L261.4 423.3 L267.6 414.6 L273.5 405.4 L279.0 395.8 L284.2 385.7 L289.1 375.3 L293.8 364.6 L298.1 353.5 L302.2 342.2 L306.0 330.6 L309.6 318.9 L313.0 306.9 L316.1 294.8 L319.0 282.6 L321.7 270.4 L324.3 258.1 L326.6 245.8 L328.8 233.5 L330.9 221.3 L332.8 209.2 L334.6 197.2 L336.2 185.4 L337.8 173.7 L339.3 162.3 L340.7 151.2 Z" fill="#ad5a70"/><path d="M340.0 151.2 L338.7 162.3 L337.2 173.7 L335.6 185.4 L334.0 197.2 L332.2 209.2 L330.3 221.3 L328.3 233.5 L326.1 245.7 L323.7 258.0 L321.2 270.3 L318.5 282.6 L315.6 294.7 L312.5 306.8 L309.2 318.7 L305.6 330.5 L301.8 342.1 L297.7 353.4 L293.4 364.4 L288.8 375.2 L283.9 385.6 L278.7 395.6 L273.2 405.3 L267.4 414.5 L261.2 423.2 L254.7 431.4 L247.8 439.1 L248.3 439.5 L255.4 431.9 L262.1 423.7 L268.5 415.1 L274.5 405.9 L280.2 396.3 L285.6 386.3 L290.6 375.9 L295.4 365.2 L299.9 354.1 L304.1 342.8 L308.0 331.2 L311.7 319.4 L315.1 307.4 L318.3 295.3 L321.3 283.1 L324.1 270.8 L326.7 258.4 L329.2 246.1 L331.4 233.7 L333.5 221.5 L335.5 209.3 L337.3 197.3 L339.0 185.4 L340.6 173.8 L342.2 162.4 L343.6 151.2 Z" fill="#a0171a"/><path d="M343.0 151.2 L341.5 162.4 L340.0 173.8 L338.4 185.4 L336.7 197.3 L334.9 209.3 L332.9 221.4 L330.9 233.7 L328.6 246.0 L326.2 258.3 L323.6 270.7 L320.8 283.0 L317.8 295.2 L314.6 307.3 L311.2 319.3 L307.6 331.1 L303.7 342.6 L299.5 354.0 L295.0 365.0 L290.3 375.8 L285.3 386.2 L280.0 396.2 L274.3 405.8 L268.3 415.0 L262.0 423.7 L255.3 431.8 L248.2 439.4 L248.5 439.6 L255.7 432.1 L262.5 424.0 L269.0 415.3 L275.1 406.2 L280.8 396.6 L286.3 386.6 L291.4 376.2 L296.2 365.5 L300.7 354.4 L305.0 343.1 L309.0 331.5 L312.7 319.6 L316.2 307.6 L319.4 295.5 L322.5 283.3 L325.3 270.9 L328.0 258.6 L330.4 246.2 L332.7 233.9 L334.8 221.6 L336.8 209.4 L338.7 197.4 L340.4 185.5 L342.1 173.8 L343.6 162.4 L345.0 151.2 Z" fill="#7c1524"/><path d="M344.4 151.2 L343.0 162.4 L341.4 173.8 L339.8 185.5 L338.1 197.3 L336.2 209.4 L334.3 221.5 L332.1 233.8 L329.9 246.1 L327.4 258.5 L324.8 270.9 L322.0 283.2 L319.0 295.4 L315.7 307.5 L312.3 319.5 L308.5 331.3 L304.6 342.9 L300.4 354.3 L295.9 365.3 L291.1 376.1 L286.0 386.5 L280.6 396.5 L274.8 406.1 L268.8 415.2 L262.3 423.9 L255.6 432.0 L248.4 439.6 L248.6 439.7 L255.9 432.2 L262.8 424.1 L269.3 415.5 L275.5 406.4 L281.3 396.8 L286.8 386.8 L291.9 376.4 L296.8 365.7 L301.4 354.6 L305.7 343.3 L309.7 331.7 L313.5 319.8 L317.0 307.8 L320.3 295.7 L323.3 283.4 L326.2 271.1 L328.9 258.7 L331.3 246.3 L333.7 233.9 L335.8 221.6 L337.8 209.4 L339.7 197.4 L341.4 185.5 L343.1 173.8 L344.6 162.4 L346.1 151.2 Z" fill="#5e1422"/><path d="M345.5 151.2 L344.0 162.4 L342.5 173.8 L340.8 185.5 L339.1 197.4 L337.2 209.4 L335.2 221.6 L333.1 233.9 L330.8 246.2 L328.3 258.6 L325.7 271.0 L322.8 283.3 L319.8 295.6 L316.5 307.7 L313.0 319.7 L309.3 331.5 L305.3 343.1 L301.0 354.5 L296.5 365.6 L291.6 376.3 L286.5 386.7 L281.0 396.7 L275.2 406.3 L269.1 415.4 L262.6 424.0 L255.8 432.1 L248.5 439.7 L249.0 440.0 L256.5 432.6 L263.6 424.6 L270.3 416.1 L276.7 407.0 L282.7 397.5 L288.3 387.5 L293.7 377.2 L298.7 366.4 L303.4 355.3 L307.8 343.9 L311.9 332.3 L315.8 320.4 L319.5 308.4 L322.8 296.2 L326.0 283.9 L328.9 271.5 L331.7 259.0 L334.3 246.6 L336.6 234.2 L338.9 221.8 L340.9 209.6 L342.9 197.5 L344.7 185.6 L346.4 173.9 L348.0 162.4 L349.5 151.2 Z" fill="#98151a"/><path d="M348.8 151.2 L347.3 162.4 L345.7 173.8 L344.1 185.6 L342.3 197.5 L340.3 209.6 L338.3 221.8 L336.1 234.1 L333.7 246.5 L331.2 259.0 L328.4 271.4 L325.5 283.8 L322.4 296.1 L319.0 308.3 L315.4 320.3 L311.5 332.2 L307.4 343.8 L303.0 355.2 L298.3 366.3 L293.3 377.0 L288.0 387.4 L282.4 397.4 L276.5 406.9 L270.1 416.0 L263.5 424.5 L256.4 432.6 L249.0 440.0 L249.1 440.1 L256.7 432.7 L263.8 424.8 L270.6 416.2 L277.0 407.2 L283.0 397.7 L288.7 387.7 L294.1 377.3 L299.1 366.6 L303.9 355.5 L308.3 344.1 L312.5 332.5 L316.4 320.6 L320.1 308.5 L323.5 296.3 L326.7 284.0 L329.6 271.6 L332.4 259.1 L335.0 246.7 L337.4 234.3 L339.6 221.9 L341.7 209.6 L343.6 197.5 L345.5 185.6 L347.2 173.9 L348.8 162.4 L350.3 151.2 Z" fill="#bf768c"/><path d="M349.7 151.2 L348.2 162.4 L346.6 173.9 L344.9 185.6 L343.0 197.5 L341.1 209.6 L339.0 221.9 L336.8 234.2 L334.4 246.6 L331.9 259.1 L329.1 271.5 L326.2 283.9 L323.0 296.2 L319.6 308.4 L316.0 320.5 L312.1 332.3 L307.9 344.0 L303.5 355.4 L298.8 366.4 L293.8 377.2 L288.4 387.6 L282.8 397.5 L276.8 407.1 L270.4 416.1 L263.7 424.7 L256.6 432.7 L249.1 440.1 L249.5 440.4 L257.3 433.1 L264.6 425.2 L271.6 416.8 L278.1 407.8 L284.3 398.3 L290.2 388.3 L295.7 378.0 L300.9 367.2 L305.7 356.1 L310.3 344.7 L314.6 333.1 L318.6 321.2 L322.3 309.1 L325.9 296.8 L329.1 284.4 L332.2 272.0 L335.0 259.5 L337.7 247.0 L340.1 234.5 L342.4 222.1 L344.5 209.8 L346.5 197.6 L348.4 185.7 L350.2 173.9 L351.8 162.4 L353.4 151.2 Z" fill="#a4191c"/><path d="M352.7 151.2 L351.2 162.4 L349.6 173.9 L347.8 185.6 L346.0 197.6 L344.0 209.8 L341.8 222.1 L339.6 234.4 L337.1 246.9 L334.5 259.4 L331.6 271.9 L328.6 284.3 L325.4 296.7 L321.9 308.9 L318.2 321.0 L314.2 332.9 L309.9 344.6 L305.4 356.0 L300.5 367.1 L295.4 377.8 L289.9 388.2 L284.1 398.2 L277.9 407.7 L271.4 416.7 L264.4 425.1 L257.1 433.0 L249.4 440.3 L249.7 440.5 L257.6 433.3 L265.0 425.5 L272.0 417.0 L278.7 408.1 L284.9 398.6 L290.9 388.6 L296.4 378.3 L301.7 367.5 L306.6 356.4 L311.2 345.0 L315.6 333.3 L319.6 321.4 L323.4 309.3 L327.0 297.0 L330.3 284.6 L333.4 272.2 L336.3 259.6 L338.9 247.1 L341.4 234.6 L343.8 222.2 L345.9 209.9 L347.9 197.7 L349.8 185.7 L351.6 173.9 L353.3 162.4 L354.9 151.2 Z" fill="#7c1524"/><path d="M354.2 151.2 L352.7 162.4 L351.0 173.9 L349.2 185.7 L347.3 197.7 L345.3 209.8 L343.2 222.1 L340.9 234.6 L338.4 247.0 L335.7 259.6 L332.9 272.1 L329.8 284.5 L326.5 296.9 L323.0 309.2 L319.2 321.3 L315.2 333.2 L310.8 344.9 L306.2 356.3 L301.3 367.4 L296.1 378.1 L290.6 388.5 L284.7 398.5 L278.4 407.9 L271.8 416.9 L264.8 425.4 L257.4 433.2 L249.6 440.5 L249.9 440.7 L257.8 433.5 L265.3 425.7 L272.4 417.2 L279.1 408.3 L285.5 398.8 L291.5 388.9 L297.1 378.6 L302.4 367.8 L307.4 356.7 L312.1 345.3 L316.5 333.6 L320.6 321.7 L324.4 309.5 L328.0 297.2 L331.3 284.8 L334.5 272.3 L337.4 259.8 L340.1 247.2 L342.6 234.7 L344.9 222.3 L347.1 209.9 L349.2 197.7 L351.1 185.7 L352.9 173.9 L354.6 162.4 L356.2 151.2 Z" fill="#561424"/><path d="M355.5 151.2 L353.9 162.4 L352.3 173.9 L350.5 185.7 L348.6 197.7 L346.5 209.9 L344.4 222.2 L342.0 234.7 L339.5 247.2 L336.8 259.7 L333.9 272.2 L330.8 284.7 L327.5 297.1 L323.9 309.4 L320.1 321.5 L316.0 333.5 L311.7 345.2 L307.0 356.6 L302.1 367.7 L296.8 378.4 L291.2 388.8 L285.2 398.7 L278.9 408.2 L272.2 417.1 L265.2 425.6 L257.7 433.4 L249.8 440.6 L250.4 441.1 L258.6 434.0 L266.4 426.3 L273.7 418.0 L280.7 409.1 L287.3 399.7 L293.5 389.8 L299.3 379.4 L304.8 368.7 L309.9 357.6 L314.8 346.1 L319.3 334.4 L323.6 322.4 L327.5 310.2 L331.2 297.9 L334.7 285.4 L337.9 272.9 L340.9 260.2 L343.7 247.6 L346.3 235.0 L348.8 222.5 L351.0 210.1 L353.2 197.9 L355.1 185.8 L357.0 174.0 L358.7 162.4 L360.4 151.2 Z" fill="#98151a"/><path d="M359.8 151.2 L358.1 162.4 L356.4 174.0 L354.5 185.8 L352.6 197.9 L350.5 210.1 L348.2 222.5 L345.8 235.0 L343.2 247.6 L340.4 260.2 L337.4 272.8 L334.2 285.3 L330.8 297.8 L327.1 310.1 L323.1 322.3 L318.9 334.3 L314.4 346.0 L309.6 357.4 L304.4 368.6 L299.0 379.3 L293.2 389.7 L287.0 399.6 L280.5 409.0 L273.5 417.9 L266.2 426.2 L258.5 433.9 L250.3 441.0 L250.5 441.2 L258.8 434.1 L266.6 426.4 L274.0 418.1 L281.0 409.2 L287.6 399.8 L293.9 390.0 L299.7 379.6 L305.3 368.9 L310.4 357.7 L315.3 346.3 L319.9 334.6 L324.2 322.6 L328.2 310.4 L331.9 298.0 L335.4 285.5 L338.6 273.0 L341.7 260.3 L344.5 247.7 L347.1 235.1 L349.6 222.6 L351.8 210.2 L354.0 197.9 L356.0 185.8 L357.8 174.0 L359.6 162.4 L361.2 151.2 Z" fill="#a8546e"/><path d="M360.6 151.2 L359.0 162.4 L357.2 174.0 L355.3 185.8 L353.4 197.9 L351.2 210.1 L349.0 222.5 L346.5 235.1 L343.9 247.6 L341.1 260.3 L338.1 272.9 L334.9 285.4 L331.4 297.9 L327.7 310.3 L323.7 322.5 L319.5 334.4 L314.9 346.2 L310.1 357.6 L304.9 368.7 L299.4 379.5 L293.6 389.8 L287.3 399.7 L280.8 409.1 L273.8 418.0 L266.4 426.3 L258.6 434.0 L250.4 441.1 L250.9 441.4 L259.3 434.5 L267.4 426.9 L274.9 418.6 L282.1 409.8 L288.9 400.5 L295.3 390.6 L301.3 380.3 L306.9 369.5 L312.3 358.4 L317.2 346.9 L321.9 335.1 L326.3 323.1 L330.4 310.9 L334.2 298.5 L337.8 286.0 L341.1 273.3 L344.2 260.7 L347.1 248.0 L349.8 235.3 L352.3 222.8 L354.6 210.3 L356.8 198.0 L358.9 185.9 L360.8 174.0 L362.6 162.5 L364.3 151.2 Z" fill="#a81b1e"/><path d="M363.6 151.2 L361.9 162.5 L360.2 174.0 L358.3 185.9 L356.2 198.0 L354.1 210.3 L351.7 222.7 L349.2 235.3 L346.6 247.9 L343.7 260.6 L340.6 273.3 L337.3 285.9 L333.7 298.4 L329.9 310.8 L325.9 323.0 L321.5 335.0 L316.8 346.8 L311.9 358.2 L306.6 369.4 L301.0 380.1 L295.0 390.5 L288.6 400.3 L281.9 409.7 L274.7 418.5 L267.2 426.8 L259.2 434.4 L250.8 441.4 L251.2 441.6 L259.7 434.8 L267.9 427.2 L275.6 419.0 L282.9 410.2 L289.8 400.9 L296.2 391.0 L302.4 380.7 L308.1 369.9 L313.5 358.8 L318.6 347.3 L323.3 335.5 L327.8 323.5 L332.0 311.3 L335.8 298.8 L339.5 286.3 L342.8 273.6 L346.0 260.9 L348.9 248.2 L351.7 235.5 L354.2 222.9 L356.6 210.4 L358.8 198.1 L360.9 186.0 L362.8 174.1 L364.6 162.5 L366.4 151.2 Z" fill="#8e1d2c"/><path d="M365.7 151.2 L364.0 162.5 L362.2 174.1 L360.3 185.9 L358.2 198.1 L356.0 210.4 L353.6 222.9 L351.1 235.4 L348.4 248.1 L345.5 260.8 L342.3 273.5 L339.0 286.2 L335.4 298.7 L331.5 311.1 L327.3 323.4 L322.9 335.4 L318.2 347.2 L313.1 358.7 L307.8 369.8 L302.0 380.6 L296.0 390.9 L289.5 400.7 L282.6 410.1 L275.4 418.9 L267.7 427.1 L259.6 434.7 L251.1 441.6 L251.3 441.7 L260.0 434.9 L268.2 427.4 L276.0 419.2 L283.3 410.4 L290.2 401.1 L296.8 391.3 L303.0 380.9 L308.8 370.2 L314.2 359.0 L319.3 347.6 L324.1 335.8 L328.6 323.7 L332.8 311.5 L336.7 299.0 L340.4 286.4 L343.8 273.7 L347.0 261.0 L349.9 248.3 L352.7 235.6 L355.3 223.0 L357.7 210.5 L359.9 198.1 L362.0 186.0 L364.0 174.1 L365.8 162.5 L367.5 151.2 Z" fill="#641828"/><path d="M366.9 151.2 L365.2 162.5 L363.3 174.1 L361.4 186.0 L359.3 198.1 L357.1 210.4 L354.7 222.9 L352.1 235.5 L349.4 248.2 L346.4 261.0 L343.3 273.7 L339.9 286.3 L336.2 298.9 L332.3 311.3 L328.2 323.6 L323.7 335.7 L318.9 347.4 L313.8 358.9 L308.4 370.1 L302.6 380.8 L296.5 391.1 L290.0 401.0 L283.1 410.3 L275.8 419.1 L268.0 427.3 L259.8 434.8 L251.2 441.7 L251.7 442.0 L260.6 435.3 L269.0 427.9 L276.9 419.8 L284.5 411.0 L291.6 401.7 L298.3 391.9 L304.6 381.6 L310.5 370.9 L316.1 359.7 L321.4 348.2 L326.3 336.4 L330.9 324.3 L335.2 312.0 L339.2 299.5 L342.9 286.9 L346.4 274.1 L349.7 261.4 L352.7 248.6 L355.5 235.8 L358.2 223.2 L360.6 210.6 L362.9 198.2 L365.1 186.0 L367.1 174.1 L369.0 162.5 L370.7 151.2 Z" fill="#a4191c"/><path d="M370.1 151.2 L368.3 162.5 L366.5 174.1 L364.5 186.0 L362.3 198.2 L360.0 210.6 L357.6 223.1 L355.0 235.8 L352.2 248.5 L349.2 261.3 L345.9 274.1 L342.4 286.8 L338.7 299.4 L334.7 311.9 L330.4 324.2 L325.9 336.3 L321.0 348.1 L315.8 359.6 L310.2 370.7 L304.3 381.5 L298.0 391.8 L291.3 401.6 L284.2 410.9 L276.8 419.6 L268.8 427.8 L260.5 435.2 L251.6 442.0 L251.8 442.1 L260.7 435.4 L269.2 428.0 L277.2 419.9 L284.7 411.2 L291.9 401.9 L298.6 392.1 L305.0 381.8 L310.9 371.0 L316.6 359.9 L321.8 348.3 L326.8 336.5 L331.4 324.4 L335.7 312.1 L339.7 299.6 L343.5 287.0 L347.0 274.2 L350.3 261.4 L353.3 248.7 L356.2 235.9 L358.8 223.2 L361.3 210.6 L363.6 198.2 L365.7 186.1 L367.8 174.1 L369.7 162.5 L371.5 151.2 Z" fill="#ad5a70"/><path d="M370.8 151.2 L369.0 162.5 L367.1 174.1 L365.1 186.0 L363.0 198.2 L360.7 210.6 L358.2 223.2 L355.6 235.8 L352.8 248.6 L349.7 261.4 L346.5 274.2 L343.0 286.9 L339.2 299.5 L335.2 312.0 L330.9 324.3 L326.3 336.4 L321.4 348.2 L316.2 359.7 L310.6 370.9 L304.6 381.6 L298.3 391.9 L291.6 401.8 L284.5 411.0 L277.0 419.8 L269.0 427.9 L260.6 435.3 L251.7 442.1 L252.1 442.3 L261.2 435.7 L269.8 428.3 L277.9 420.3 L285.6 411.6 L292.9 402.4 L299.8 392.6 L306.2 382.3 L312.3 371.5 L318.0 360.4 L323.4 348.8 L328.4 337.0 L333.1 324.9 L337.5 312.5 L341.6 300.0 L345.5 287.3 L349.0 274.5 L352.4 261.7 L355.5 248.9 L358.4 236.1 L361.1 223.4 L363.6 210.8 L365.9 198.3 L368.1 186.1 L370.2 174.2 L372.1 162.5 L373.9 151.2 Z" fill="#a81b1e"/><path d="M373.3 151.2 L371.5 162.5 L369.5 174.2 L367.5 186.1 L365.3 198.3 L363.0 210.7 L360.5 223.3 L357.8 236.0 L354.9 248.8 L351.8 261.6 L348.5 274.5 L345.0 287.2 L341.1 299.9 L337.1 312.4 L332.7 324.8 L328.0 336.9 L323.0 348.7 L317.7 360.2 L312.0 371.4 L305.9 382.1 L299.5 392.4 L292.6 402.2 L285.4 411.5 L277.7 420.2 L269.6 428.2 L261.1 435.6 L252.0 442.3 L252.3 442.5 L261.6 436.0 L270.3 428.6 L278.6 420.6 L286.4 412.0 L293.8 402.8 L300.7 393.0 L307.3 382.7 L313.5 372.0 L319.3 360.8 L324.7 349.3 L329.8 337.4 L334.6 325.3 L339.0 312.9 L343.2 300.3 L347.1 287.6 L350.7 274.8 L354.1 261.9 L357.3 249.1 L360.2 236.2 L362.9 223.5 L365.5 210.9 L367.8 198.4 L370.1 186.2 L372.2 174.2 L374.1 162.5 L376.0 151.2 Z" fill="#86182a"/><path d="M375.3 151.2 L373.5 162.5 L371.5 174.2 L369.5 186.2 L367.2 198.4 L364.9 210.8 L362.3 223.4 L359.6 236.2 L356.7 249.0 L353.6 261.9 L350.2 274.7 L346.6 287.5 L342.7 300.2 L338.6 312.8 L334.1 325.1 L329.4 337.3 L324.3 349.1 L318.9 360.7 L313.1 371.8 L307.0 382.6 L300.4 392.9 L293.5 402.7 L286.2 411.9 L278.4 420.5 L270.1 428.5 L261.4 435.9 L252.3 442.5 L252.6 442.7 L261.9 436.2 L270.8 428.9 L279.2 421.0 L287.1 412.4 L294.6 403.2 L301.7 393.4 L308.3 383.1 L314.6 372.4 L320.4 361.2 L326.0 349.7 L331.1 337.8 L336.0 325.6 L340.5 313.2 L344.7 300.6 L348.7 287.9 L352.4 275.1 L355.8 262.2 L359.0 249.3 L361.9 236.4 L364.7 223.6 L367.3 211.0 L369.7 198.5 L372.0 186.2 L374.1 174.2 L376.1 162.5 L378.0 151.2 Z" fill="#4c1120"/><path d="M377.3 151.2 L375.5 162.5 L373.5 174.2 L371.4 186.2 L369.1 198.4 L366.7 210.9 L364.1 223.6 L361.4 236.3 L358.4 249.2 L355.2 262.1 L351.8 275.0 L348.2 287.8 L344.2 300.5 L340.0 313.1 L335.5 325.5 L330.7 337.7 L325.6 349.5 L320.1 361.1 L314.2 372.2 L308.0 383.0 L301.4 393.3 L294.3 403.0 L286.9 412.3 L279.0 420.9 L270.6 428.8 L261.8 436.1 L252.5 442.7 L253.2 443.1 L262.8 436.8 L271.9 429.6 L280.6 421.8 L288.8 413.2 L296.5 404.1 L303.8 394.4 L310.7 384.1 L317.1 373.3 L323.2 362.2 L328.9 350.6 L334.2 338.7 L339.2 326.5 L343.9 314.0 L348.3 301.3 L352.3 288.5 L356.1 275.6 L359.7 262.7 L363.0 249.7 L366.0 236.7 L368.9 223.9 L371.6 211.2 L374.0 198.6 L376.4 186.3 L378.6 174.3 L380.6 162.6 L382.6 151.2 Z" fill="#a4191c"/><path d="M381.9 151.2 L380.0 162.5 L377.9 174.3 L375.8 186.3 L373.5 198.6 L371.0 211.1 L368.3 223.9 L365.5 236.7 L362.4 249.6 L359.1 262.6 L355.6 275.6 L351.8 288.5 L347.8 301.2 L343.4 313.9 L338.8 326.3 L333.8 338.5 L328.5 350.5 L322.8 362.0 L316.8 373.2 L310.3 384.0 L303.5 394.2 L296.2 404.0 L288.6 413.1 L280.4 421.7 L271.8 429.5 L262.7 436.7 L253.1 443.1 L253.3 443.3 L263.0 436.9 L272.3 429.8 L281.0 422.0 L289.2 413.5 L297.0 404.3 L304.4 394.6 L311.3 384.4 L317.8 373.6 L323.9 362.4 L329.7 350.8 L335.1 338.9 L340.1 326.7 L344.8 314.2 L349.2 301.5 L353.3 288.7 L357.2 275.8 L360.7 262.8 L364.1 249.8 L367.2 236.8 L370.0 224.0 L372.7 211.2 L375.2 198.7 L377.6 186.3 L379.8 174.3 L381.9 162.6 L383.8 151.2 Z" fill="#b25e78"/><path d="M383.2 151.2 L381.2 162.6 L379.2 174.3 L377.0 186.3 L374.6 198.6 L372.1 211.2 L369.5 223.9 L366.6 236.8 L363.5 249.7 L360.2 262.7 L356.6 275.7 L352.8 288.6 L348.7 301.4 L344.4 314.1 L339.7 326.6 L334.7 338.8 L329.3 350.7 L323.6 362.3 L317.5 373.5 L311.0 384.2 L304.1 394.5 L296.8 404.2 L289.0 413.4 L280.8 421.9 L272.1 429.7 L262.9 436.9 L253.2 443.2 L253.7 443.6 L263.7 437.4 L273.2 430.4 L282.1 422.6 L290.5 414.2 L298.5 405.1 L306.1 395.4 L313.1 385.1 L319.8 374.4 L326.1 363.2 L332.0 351.6 L337.5 339.6 L342.6 327.3 L347.5 314.8 L352.0 302.1 L356.2 289.2 L360.1 276.2 L363.8 263.2 L367.2 250.1 L370.3 237.1 L373.3 224.2 L376.0 211.4 L378.6 198.8 L381.0 186.4 L383.3 174.3 L385.4 162.6 L387.4 151.2 Z" fill="#a0171a"/><path d="M386.8 151.2 L384.8 162.6 L382.7 174.3 L380.4 186.4 L378.0 198.8 L375.5 211.4 L372.7 224.2 L369.8 237.1 L366.6 250.1 L363.2 263.1 L359.6 276.2 L355.7 289.1 L351.5 302.0 L347.0 314.7 L342.2 327.2 L337.1 339.5 L331.6 351.4 L325.7 363.0 L319.5 374.2 L312.8 385.0 L305.8 395.2 L298.3 404.9 L290.3 414.0 L281.9 422.5 L273.0 430.3 L263.6 437.3 L253.7 443.5 L253.8 443.6 L263.8 437.4 L273.3 430.5 L282.3 422.7 L290.8 414.3 L298.8 405.2 L306.3 395.5 L313.4 385.2 L320.1 374.5 L326.4 363.3 L332.3 351.7 L337.9 339.7 L343.0 327.4 L347.9 314.9 L352.4 302.2 L356.6 289.3 L360.6 276.3 L364.2 263.3 L367.7 250.2 L370.8 237.2 L373.8 224.2 L376.6 211.4 L379.2 198.8 L381.6 186.4 L383.8 174.3 L386.0 162.6 L388.0 151.2 Z" fill="#7c1524"/><path d="M387.3 151.2 L385.3 162.6 L383.2 174.3 L381.0 186.4 L378.6 198.8 L376.0 211.4 L373.2 224.2 L370.3 237.1 L367.1 250.1 L363.7 263.2 L360.1 276.2 L356.1 289.2 L351.9 302.1 L347.4 314.8 L342.6 327.3 L337.4 339.6 L331.9 351.5 L326.1 363.1 L319.8 374.3 L313.1 385.1 L306.0 395.3 L298.5 405.0 L290.5 414.1 L282.1 422.6 L273.1 430.4 L263.7 437.4 L253.7 443.6 L254.1 443.9 L264.3 437.8 L273.9 430.8 L283.0 423.1 L291.7 414.7 L299.8 405.7 L307.5 396.0 L314.7 385.7 L321.5 375.0 L327.9 363.8 L333.9 352.2 L339.5 340.2 L344.8 327.9 L349.7 315.3 L354.3 302.6 L358.6 289.7 L362.6 276.6 L366.3 263.5 L369.8 250.4 L373.0 237.4 L376.0 224.4 L378.9 211.5 L381.5 198.9 L383.9 186.5 L386.2 174.4 L388.4 162.6 L390.4 151.2 Z" fill="#5e1422"/><path d="M389.8 151.2 L387.8 162.6 L385.6 174.4 L383.3 186.5 L380.9 198.9 L378.3 211.5 L375.5 224.3 L372.5 237.3 L369.3 250.4 L365.8 263.5 L362.1 276.5 L358.1 289.6 L353.8 302.5 L349.2 315.2 L344.3 327.8 L339.1 340.1 L333.5 352.0 L327.5 363.7 L321.2 374.9 L314.4 385.6 L307.2 395.8 L299.5 405.5 L291.4 414.6 L282.8 423.0 L273.8 430.7 L264.2 437.7 L254.0 443.8 L254.9 444.5 L265.5 438.5 L275.5 431.8 L285.0 424.2 L293.9 415.9 L302.4 406.9 L310.4 397.3 L317.9 387.1 L325.0 376.3 L331.6 365.1 L337.9 353.4 L343.7 341.4 L349.2 329.0 L354.3 316.4 L359.1 303.6 L363.6 290.5 L367.7 277.4 L371.6 264.2 L375.2 251.0 L378.6 237.8 L381.7 224.8 L384.6 211.8 L387.4 199.1 L389.9 186.6 L392.3 174.4 L394.6 162.6 L396.7 151.2 Z" fill="#a0171a"/><path d="M396.1 151.2 L393.9 162.6 L391.7 174.4 L389.3 186.6 L386.8 199.1 L384.1 211.8 L381.1 224.7 L378.0 237.8 L374.7 250.9 L371.1 264.1 L367.2 277.3 L363.1 290.5 L358.6 303.5 L353.9 316.3 L348.8 328.9 L343.3 341.3 L337.5 353.3 L331.3 365.0 L324.6 376.2 L317.6 386.9 L310.1 397.1 L302.1 406.8 L293.7 415.8 L284.8 424.1 L275.3 431.7 L265.3 438.5 L254.8 444.4 L255.0 444.6 L265.7 438.7 L275.8 431.9 L285.3 424.4 L294.3 416.1 L302.9 407.1 L310.9 397.5 L318.5 387.3 L325.6 376.5 L332.3 365.3 L338.6 353.7 L344.5 341.6 L350.0 329.2 L355.2 316.6 L360.0 303.7 L364.5 290.7 L368.7 277.6 L372.6 264.3 L376.2 251.1 L379.6 237.9 L382.7 224.8 L385.7 211.9 L388.4 199.1 L391.0 186.7 L393.4 174.5 L395.7 162.6 L397.8 151.2 Z" fill="#ba6a82"/><path d="M397.2 151.2 L395.1 162.6 L392.8 174.5 L390.4 186.6 L387.8 199.1 L385.1 211.9 L382.2 224.8 L379.0 237.9 L375.7 251.1 L372.0 264.3 L368.1 277.5 L364.0 290.6 L359.5 303.6 L354.7 316.5 L349.6 329.1 L344.1 341.5 L338.2 353.5 L331.9 365.2 L325.3 376.4 L318.2 387.2 L310.6 397.4 L302.6 407.0 L294.1 416.0 L285.1 424.3 L275.6 431.8 L265.6 438.6 L254.9 444.5 L255.6 445.0 L266.6 439.3 L277.0 432.7 L286.8 425.2 L296.1 417.0 L304.9 408.1 L313.1 398.5 L320.9 388.3 L328.3 377.6 L335.2 366.3 L341.6 354.6 L347.7 342.5 L353.4 330.1 L358.7 317.4 L363.7 304.5 L368.3 291.4 L372.6 278.2 L376.6 264.9 L380.4 251.6 L383.9 238.3 L387.1 225.1 L390.1 212.1 L393.0 199.3 L395.6 186.8 L398.1 174.5 L400.4 162.6 L402.6 151.2 Z" fill="#98151a"/><path d="M402.0 151.2 L399.8 162.6 L397.5 174.5 L395.0 186.7 L392.4 199.3 L389.5 212.1 L386.5 225.1 L383.3 238.3 L379.8 251.5 L376.1 264.8 L372.1 278.1 L367.8 291.3 L363.2 304.4 L358.2 317.3 L352.9 330.0 L347.3 342.4 L341.2 354.5 L334.8 366.2 L327.9 377.4 L320.6 388.2 L312.9 398.4 L304.6 408.0 L295.9 416.9 L286.6 425.1 L276.8 432.6 L266.4 439.2 L255.5 444.9 L255.7 445.1 L266.8 439.4 L277.2 432.8 L287.1 425.4 L296.5 417.2 L305.3 408.3 L313.7 398.7 L321.5 388.6 L328.9 377.8 L335.9 366.6 L342.4 354.9 L348.5 342.8 L354.2 330.3 L359.6 317.6 L364.6 304.7 L369.2 291.5 L373.6 278.3 L377.6 265.0 L381.4 251.7 L384.9 238.4 L388.2 225.2 L391.2 212.2 L394.1 199.3 L396.7 186.8 L399.2 174.5 L401.6 162.7 L403.8 151.2 Z" fill="#86182a"/><path d="M403.2 151.2 L400.9 162.7 L398.6 174.5 L396.1 186.8 L393.5 199.3 L390.6 212.1 L387.6 225.2 L384.3 238.3 L380.8 251.6 L377.1 264.9 L373.0 278.2 L368.7 291.5 L364.1 304.6 L359.1 317.5 L353.8 330.2 L348.1 342.6 L342.0 354.7 L335.5 366.4 L328.6 377.7 L321.2 388.4 L313.4 398.6 L305.1 408.2 L296.3 417.1 L287.0 425.3 L277.1 432.7 L266.7 439.3 L255.7 445.0 L256.0 445.3 L267.1 439.6 L277.7 433.1 L287.7 425.7 L297.1 417.6 L306.1 408.7 L314.5 399.1 L322.4 388.9 L329.9 378.2 L336.9 366.9 L343.5 355.2 L349.7 343.1 L355.4 330.7 L360.8 317.9 L365.9 304.9 L370.6 291.8 L375.0 278.5 L379.1 265.2 L382.9 251.8 L386.4 238.5 L389.7 225.3 L392.8 212.3 L395.7 199.4 L398.4 186.8 L400.9 174.6 L403.3 162.7 L405.5 151.2 Z" fill="#4c1120"/><path d="M404.9 151.2 L402.7 162.7 L400.3 174.5 L397.8 186.8 L395.1 199.4 L392.2 212.2 L389.2 225.3 L385.9 238.5 L382.3 251.8 L378.5 265.1 L374.5 278.4 L370.1 291.7 L365.4 304.8 L360.4 317.8 L355.0 330.5 L349.2 343.0 L343.1 355.1 L336.5 366.8 L329.5 378.0 L322.1 388.8 L314.2 399.0 L305.8 408.5 L296.9 417.4 L287.5 425.6 L277.5 433.0 L267.0 439.5 L255.9 445.2 L256.6 445.8 L268.2 440.3 L279.1 433.9 L289.4 426.7 L299.2 418.6 L308.4 409.8 L317.1 400.3 L325.3 390.1 L333.1 379.4 L340.3 368.1 L347.1 356.4 L353.5 344.2 L359.4 331.7 L365.0 318.9 L370.2 305.8 L375.1 292.6 L379.6 279.2 L383.9 265.8 L387.8 252.4 L391.5 239.0 L394.9 225.7 L398.1 212.5 L401.0 199.6 L403.8 186.9 L406.4 174.6 L408.9 162.7 L411.2 151.2 Z" fill="#98151a"/><path d="M410.6 151.2 L408.3 162.7 L405.8 174.6 L403.2 186.9 L400.4 199.6 L397.5 212.5 L394.3 225.6 L390.9 238.9 L387.3 252.3 L383.3 265.7 L379.1 279.2 L374.6 292.5 L369.8 305.7 L364.6 318.8 L359.0 331.6 L353.1 344.1 L346.7 356.2 L339.9 368.0 L332.7 379.2 L325.0 390.0 L316.8 400.1 L308.2 409.7 L299.0 418.5 L289.2 426.6 L278.9 433.8 L268.0 440.2 L256.6 445.7 L256.9 445.9 L268.5 440.6 L279.6 434.2 L290.0 427.0 L299.9 419.0 L309.2 410.2 L318.0 400.7 L326.3 390.5 L334.1 379.8 L341.4 368.5 L348.3 356.7 L354.7 344.6 L360.8 332.0 L366.4 319.2 L371.7 306.1 L376.6 292.9 L381.2 279.5 L385.5 266.0 L389.4 252.5 L393.1 239.1 L396.6 225.8 L399.8 212.6 L402.8 199.7 L405.6 187.0 L408.3 174.7 L410.7 162.7 L413.1 151.2 Z" fill="#ba6a82"/><path d="M412.5 151.2 L410.1 162.7 L407.6 174.6 L405.0 187.0 L402.2 199.6 L399.2 212.6 L396.0 225.7 L392.6 239.1 L388.9 252.5 L384.9 265.9 L380.7 279.4 L376.1 292.8 L371.2 306.0 L365.9 319.1 L360.3 331.9 L354.3 344.4 L347.9 356.6 L341.0 368.4 L333.7 379.6 L326.0 390.4 L317.7 400.5 L308.9 410.0 L299.7 418.9 L289.8 426.9 L279.4 434.1 L268.4 440.5 L256.8 445.9 L257.5 446.4 L269.5 441.2 L280.9 435.0 L291.7 427.9 L301.8 420.0 L311.5 411.3 L320.5 401.8 L329.1 391.7 L337.1 380.9 L344.7 369.6 L351.7 357.8 L358.4 345.6 L364.6 333.0 L370.4 320.1 L375.8 307.0 L380.9 293.6 L385.6 280.2 L390.0 266.6 L394.1 253.1 L398.0 239.5 L401.5 226.1 L404.8 212.9 L407.9 199.9 L410.8 187.1 L413.5 174.7 L416.1 162.7 L418.5 151.2 Z" fill="#a0171a"/><path d="M417.9 151.2 L415.5 162.7 L412.9 174.7 L410.2 187.1 L407.3 199.8 L404.2 212.8 L400.9 226.1 L397.4 239.5 L393.6 253.0 L389.5 266.5 L385.1 280.1 L380.4 293.6 L375.4 306.9 L369.9 320.0 L364.2 332.9 L358.0 345.5 L351.3 357.7 L344.3 369.5 L336.8 380.8 L328.7 391.5 L320.2 401.7 L311.2 411.1 L301.6 419.9 L291.5 427.8 L280.7 434.9 L269.4 441.1 L257.4 446.4 L257.7 446.6 L269.8 441.4 L281.3 435.3 L292.2 428.2 L302.5 420.3 L312.2 411.6 L321.3 402.1 L329.9 392.0 L338.1 381.3 L345.7 370.0 L352.8 358.2 L359.5 346.0 L365.8 333.3 L371.7 320.4 L377.2 307.3 L382.3 293.9 L387.0 280.4 L391.5 266.8 L395.6 253.2 L399.5 239.7 L403.1 226.2 L406.4 213.0 L409.5 199.9 L412.5 187.2 L415.2 174.7 L417.8 162.7 L420.2 151.2 Z" fill="#8e1d2c"/><path d="M419.6 151.2 L417.2 162.7 L414.6 174.7 L411.9 187.1 L408.9 199.9 L405.8 212.9 L402.5 226.2 L398.9 239.6 L395.1 253.2 L390.9 266.7 L386.5 280.3 L381.8 293.8 L376.7 307.2 L371.2 320.3 L365.4 333.2 L359.1 345.8 L352.4 358.1 L345.3 369.8 L337.7 381.1 L329.6 391.9 L321.0 402.0 L311.9 411.5 L302.2 420.2 L292.0 428.1 L281.2 435.2 L269.7 441.4 L257.7 446.5 L257.9 446.7 L270.1 441.6 L281.7 435.5 L292.6 428.5 L303.0 420.6 L312.7 411.9 L322.0 402.4 L330.6 392.3 L338.8 381.6 L346.5 370.3 L353.7 358.5 L360.4 346.2 L366.8 333.6 L372.7 320.7 L378.2 307.5 L383.3 294.1 L388.1 280.6 L392.6 267.0 L396.8 253.3 L400.7 239.8 L404.3 226.3 L407.7 213.0 L410.8 200.0 L413.8 187.2 L416.5 174.8 L419.1 162.7 L421.6 151.2 Z" fill="#5e1422"/><path d="M420.9 151.2 L418.5 162.7 L415.9 174.7 L413.2 187.2 L410.2 199.9 L407.1 213.0 L403.7 226.3 L400.1 239.7 L396.2 253.3 L392.1 266.9 L387.6 280.5 L382.8 294.0 L377.7 307.4 L372.2 320.6 L366.3 333.5 L360.0 346.1 L353.3 358.3 L346.1 370.1 L338.5 381.4 L330.3 392.2 L321.7 402.3 L312.5 411.7 L302.7 420.4 L292.4 428.4 L281.5 435.4 L270.0 441.5 L257.8 446.7 L258.5 447.2 L271.0 442.2 L282.9 436.2 L294.1 429.3 L304.7 421.5 L314.8 412.8 L324.2 403.4 L333.1 393.3 L341.5 382.6 L349.4 371.3 L356.8 359.5 L363.7 347.2 L370.2 334.5 L376.3 321.5 L381.9 308.2 L387.2 294.8 L392.2 281.2 L396.8 267.5 L401.0 253.8 L405.0 240.2 L408.7 226.6 L412.2 213.3 L415.4 200.1 L418.4 187.3 L421.3 174.8 L423.9 162.8 L426.5 151.2 Z" fill="#a4191c"/><path d="M425.8 151.2 L423.3 162.8 L420.7 174.8 L417.8 187.3 L414.8 200.1 L411.6 213.2 L408.2 226.6 L404.5 240.1 L400.5 253.7 L396.2 267.4 L391.6 281.1 L386.7 294.7 L381.5 308.1 L375.8 321.4 L369.8 334.4 L363.3 347.0 L356.4 359.3 L349.0 371.2 L341.2 382.5 L332.8 393.2 L323.9 403.3 L314.5 412.7 L304.5 421.4 L293.9 429.2 L282.7 436.1 L270.9 442.1 L258.4 447.1 L258.7 447.3 L271.3 442.4 L283.3 436.5 L294.6 429.6 L305.3 421.8 L315.4 413.2 L325.0 403.8 L334.0 393.7 L342.4 382.9 L350.4 371.6 L357.8 359.8 L364.8 347.5 L371.4 334.8 L377.5 321.8 L383.2 308.5 L388.5 295.0 L393.5 281.4 L398.1 267.7 L402.4 254.0 L406.5 240.3 L410.2 226.7 L413.7 213.3 L416.9 200.2 L420.0 187.3 L422.9 174.8 L425.5 162.8 L428.1 151.2 Z" fill="#b25e78"/><path d="M427.5 151.2 L424.9 162.8 L422.2 174.8 L419.4 187.3 L416.3 200.2 L413.1 213.3 L409.6 226.7 L405.9 240.2 L401.9 253.9 L397.6 267.6 L393.0 281.3 L388.0 294.9 L382.7 308.4 L377.0 321.7 L370.9 334.7 L364.4 347.4 L357.4 359.7 L350.0 371.5 L342.1 382.8 L333.6 393.5 L324.7 403.6 L315.2 413.0 L305.1 421.7 L294.4 429.5 L283.1 436.4 L271.2 442.3 L258.6 447.2 L259.0 447.6 L271.9 442.8 L284.0 436.9 L295.6 430.1 L306.4 422.4 L316.7 413.8 L326.4 404.4 L335.5 394.3 L344.1 383.6 L352.2 372.3 L359.8 360.4 L366.9 348.1 L373.5 335.4 L379.8 322.3 L385.6 309.0 L391.0 295.5 L396.0 281.8 L400.7 268.0 L405.1 254.2 L409.2 240.5 L413.0 226.9 L416.6 213.5 L419.9 200.3 L423.0 187.4 L425.9 174.9 L428.6 162.8 L431.2 151.2 Z" fill="#a4191c"/><path d="M430.6 151.2 L428.0 162.8 L425.3 174.9 L422.4 187.4 L419.3 200.3 L416.0 213.4 L412.4 226.9 L408.6 240.5 L404.6 254.2 L400.2 267.9 L395.5 281.7 L390.5 295.4 L385.1 308.9 L379.3 322.2 L373.1 335.3 L366.5 348.0 L359.4 360.3 L351.8 372.1 L343.8 383.5 L335.2 394.2 L326.1 404.3 L316.5 413.7 L306.2 422.3 L295.4 430.0 L283.9 436.8 L271.8 442.7 L259.0 447.5 L259.3 447.7 L272.2 443.0 L284.5 437.2 L296.1 430.4 L307.1 422.7 L317.5 414.2 L327.3 404.8 L336.5 394.7 L345.1 384.0 L353.3 372.6 L360.9 360.8 L368.1 348.4 L374.8 335.7 L381.1 322.6 L386.9 309.3 L392.4 295.7 L397.5 282.0 L402.3 268.2 L406.7 254.4 L410.8 240.7 L414.6 227.0 L418.2 213.6 L421.6 200.3 L424.7 187.4 L427.6 174.9 L430.4 162.8 L433.0 151.2 Z" fill="#8e1d2c"/><path d="M432.4 151.2 L429.8 162.8 L427.0 174.9 L424.1 187.4 L421.0 200.3 L417.6 213.5 L414.1 227.0 L410.2 240.6 L406.1 254.4 L401.7 268.1 L397.0 281.9 L391.9 295.6 L386.5 309.2 L380.6 322.5 L374.4 335.6 L367.7 348.3 L360.5 360.6 L352.9 372.5 L344.8 383.8 L336.1 394.6 L327.0 404.7 L317.2 414.0 L306.9 422.6 L295.9 430.3 L284.3 437.1 L272.1 442.9 L259.2 447.7 L259.5 447.9 L272.5 443.2 L284.9 437.5 L296.6 430.7 L307.7 423.0 L318.2 414.5 L328.1 405.2 L337.4 395.1 L346.1 384.4 L354.3 373.0 L362.1 361.1 L369.3 348.8 L376.1 336.0 L382.4 322.9 L388.3 309.6 L393.8 296.0 L399.0 282.2 L403.8 268.4 L408.2 254.6 L412.4 240.8 L416.3 227.1 L419.9 213.6 L423.2 200.4 L426.4 187.5 L429.4 174.9 L432.1 162.8 L434.8 151.2 Z" fill="#641828"/><path d="M434.1 151.2 L431.5 162.8 L428.7 174.9 L425.8 187.5 L422.7 200.4 L419.3 213.6 L415.7 227.1 L411.8 240.8 L407.7 254.5 L403.2 268.3 L398.5 282.1 L393.3 295.9 L387.8 309.5 L381.9 322.8 L375.6 335.9 L368.9 348.7 L361.7 361.0 L354.0 372.9 L345.8 384.2 L337.1 395.0 L327.8 405.0 L317.9 414.4 L307.5 422.9 L296.5 430.6 L284.8 437.4 L272.4 443.1 L259.4 447.9 L260.0 448.3 L273.3 443.7 L286.0 438.1 L298.0 431.5 L309.3 423.9 L320.0 415.4 L330.1 406.1 L339.6 396.0 L348.5 385.3 L356.9 373.9 L364.8 362.0 L372.2 349.6 L379.1 336.8 L385.6 323.7 L391.6 310.2 L397.2 296.6 L402.5 282.8 L407.4 268.9 L411.9 255.0 L416.2 241.1 L420.2 227.4 L423.8 213.9 L427.3 200.6 L430.5 187.6 L433.5 175.0 L436.4 162.8 L439.1 151.2 Z" fill="#ad1f22"/><path d="M438.4 151.2 L435.7 162.8 L432.9 175.0 L429.9 187.6 L426.7 200.5 L423.3 213.8 L419.6 227.4 L415.6 241.1 L411.4 254.9 L406.9 268.8 L402.0 282.7 L396.7 296.5 L391.1 310.1 L385.1 323.6 L378.6 336.7 L371.7 349.5 L364.4 361.9 L356.5 373.8 L348.2 385.1 L339.2 395.9 L329.8 405.9 L319.7 415.2 L309.1 423.7 L297.8 431.3 L285.8 438.0 L273.2 443.7 L259.9 448.2 L260.1 448.4 L273.5 443.9 L286.2 438.2 L298.2 431.6 L309.6 424.0 L320.4 415.5 L330.5 406.3 L340.0 396.2 L349.0 385.5 L357.4 374.1 L365.4 362.2 L372.8 349.8 L379.7 337.0 L386.2 323.8 L392.3 310.4 L398.0 296.7 L403.2 282.9 L408.2 269.0 L412.7 255.1 L417.0 241.2 L421.0 227.5 L424.7 213.9 L428.1 200.6 L431.4 187.6 L434.4 175.0 L437.3 162.8 L440.0 151.2 Z" fill="#ba6a82"/><path d="M439.3 151.2 L436.6 162.8 L433.8 175.0 L430.8 187.6 L427.5 200.6 L424.1 213.9 L420.4 227.4 L416.4 241.2 L412.2 255.0 L407.6 268.9 L402.7 282.8 L397.5 296.6 L391.8 310.3 L385.8 323.7 L379.3 336.9 L372.4 349.7 L365.0 362.1 L357.1 374.0 L348.7 385.3 L339.7 396.1 L330.2 406.1 L320.1 415.4 L309.4 423.9 L298.0 431.5 L286.0 438.1 L273.4 443.8 L260.0 448.3 L260.5 448.7 L274.2 444.3 L287.1 438.8 L299.4 432.2 L310.9 424.7 L321.9 416.3 L332.2 407.0 L341.9 397.0 L351.1 386.2 L359.6 374.9 L367.7 363.0 L375.3 350.5 L382.3 337.7 L388.9 324.5 L395.1 311.0 L400.9 297.2 L406.3 283.4 L411.3 269.4 L415.9 255.4 L420.3 241.5 L424.3 227.7 L428.1 214.1 L431.6 200.7 L434.9 187.7 L438.0 175.0 L440.9 162.9 L443.7 151.2 Z" fill="#ad1f22"/><path d="M443.0 151.2 L440.3 162.8 L437.4 175.0 L434.3 187.7 L431.0 200.7 L427.5 214.0 L423.7 227.6 L419.7 241.4 L415.4 255.4 L410.7 269.3 L405.7 283.3 L400.4 297.1 L394.6 310.9 L388.5 324.4 L381.9 337.6 L374.8 350.4 L367.3 362.8 L359.3 374.7 L350.7 386.1 L341.6 396.9 L331.9 406.9 L321.6 416.2 L310.7 424.6 L299.2 432.1 L287.0 438.7 L274.1 444.2 L260.4 448.6 L260.7 448.8 L274.4 444.5 L287.5 439.0 L299.8 432.5 L311.5 425.0 L322.5 416.6 L332.9 407.3 L342.7 397.3 L351.9 386.6 L360.5 375.2 L368.6 363.3 L376.2 350.8 L383.4 337.9 L390.0 324.7 L396.3 311.2 L402.1 297.4 L407.5 283.5 L412.5 269.6 L417.2 255.6 L421.6 241.6 L425.7 227.8 L429.5 214.1 L433.0 200.8 L436.3 187.7 L439.4 175.0 L442.4 162.9 L445.1 151.2 Z" fill="#8e1d2c"/><path d="M444.5 151.2 L441.7 162.9 L438.8 175.0 L435.7 187.7 L432.4 200.7 L428.9 214.1 L425.1 227.7 L421.0 241.6 L416.7 255.5 L412.0 269.5 L407.0 283.5 L401.6 297.4 L395.8 311.1 L389.6 324.6 L382.9 337.8 L375.8 350.7 L368.2 363.1 L360.1 375.1 L351.5 386.4 L342.3 397.2 L332.6 407.2 L322.2 416.5 L311.2 424.9 L299.6 432.4 L287.3 438.9 L274.3 444.4 L260.6 448.8 L260.9 449.0 L274.8 444.7 L288.0 439.3 L300.4 432.8 L312.2 425.4 L323.3 417.0 L333.8 407.7 L343.7 397.7 L353.0 387.0 L361.7 375.6 L369.9 363.7 L377.6 351.2 L384.7 338.3 L391.5 325.1 L397.7 311.5 L403.6 297.7 L409.1 283.8 L414.2 269.8 L418.9 255.7 L423.3 241.8 L427.4 227.9 L431.3 214.2 L434.8 200.8 L438.2 187.7 L441.3 175.1 L444.3 162.9 L447.1 151.2 Z" fill="#561424"/><path d="M446.5 151.2 L443.7 162.9 L440.7 175.1 L437.6 187.7 L434.3 200.8 L430.7 214.2 L426.9 227.9 L422.8 241.7 L418.4 255.7 L413.6 269.7 L408.6 283.7 L403.1 297.6 L397.3 311.4 L391.0 324.9 L384.3 338.2 L377.1 351.1 L369.5 363.5 L361.3 375.5 L352.6 386.8 L343.3 397.6 L333.5 407.6 L323.0 416.8 L312.0 425.2 L300.2 432.7 L287.8 439.2 L274.7 444.6 L260.8 449.0 L261.5 449.4 L275.7 445.3 L289.1 440.0 L301.9 433.7 L313.9 426.3 L325.3 417.9 L336.0 408.7 L346.1 398.7 L355.6 388.0 L364.5 376.6 L372.9 364.6 L380.8 352.1 L388.1 339.2 L395.0 325.9 L401.4 312.3 L407.4 298.4 L413.0 284.4 L418.2 270.3 L423.1 256.2 L427.6 242.1 L431.8 228.2 L435.7 214.5 L439.4 201.0 L442.8 187.9 L446.0 175.1 L449.0 162.9 L451.9 151.2 Z" fill="#98151a"/><path d="M451.3 151.2 L448.4 162.9 L445.4 175.1 L442.2 187.8 L438.8 201.0 L435.1 214.4 L431.2 228.2 L427.0 242.1 L422.5 256.1 L417.7 270.2 L412.5 284.3 L406.9 298.3 L400.9 312.2 L394.5 325.8 L387.7 339.1 L380.4 352.0 L372.5 364.5 L364.2 376.5 L355.3 387.9 L345.8 398.6 L335.7 408.6 L325.0 417.8 L313.7 426.2 L301.7 433.5 L289.0 439.9 L275.6 445.2 L261.4 449.4 L261.7 449.6 L276.0 445.5 L289.5 440.2 L302.3 433.9 L314.4 426.5 L325.9 418.2 L336.7 409.0 L346.9 399.0 L356.4 388.3 L365.4 376.9 L373.9 364.9 L381.8 352.4 L389.2 339.5 L396.1 326.1 L402.6 312.5 L408.6 298.6 L414.2 284.6 L419.5 270.5 L424.3 256.3 L428.9 242.3 L433.1 228.3 L437.1 214.5 L440.8 201.0 L444.2 187.9 L447.4 175.2 L450.5 162.9 L453.4 151.2 Z" fill="#ad5a70"/><path d="M452.7 151.2 L449.9 162.9 L446.8 175.1 L443.6 187.9 L440.2 201.0 L436.5 214.5 L432.5 228.3 L428.3 242.2 L423.8 256.3 L418.9 270.4 L413.7 284.5 L408.1 298.5 L402.1 312.4 L395.6 326.0 L388.7 339.4 L381.3 352.3 L373.5 364.8 L365.0 376.8 L356.1 388.2 L346.5 398.9 L336.4 408.9 L325.6 418.1 L314.2 426.4 L302.1 433.8 L289.3 440.2 L275.8 445.4 L261.6 449.5 L262.2 449.9 L276.7 446.0 L290.5 440.9 L303.6 434.6 L316.0 427.3 L327.6 419.1 L338.6 409.9 L349.0 399.9 L358.7 389.2 L367.9 377.8 L376.5 365.8 L384.6 353.2 L392.1 340.2 L399.2 326.9 L405.8 313.2 L411.9 299.2 L417.6 285.1 L423.0 270.9 L428.0 256.7 L432.6 242.6 L436.9 228.6 L440.9 214.7 L444.7 201.2 L448.2 188.0 L451.5 175.2 L454.6 162.9 L457.5 151.2 Z" fill="#a0171a"/><path d="M456.9 151.2 L454.0 162.9 L450.9 175.2 L447.6 188.0 L444.1 201.2 L440.3 214.7 L436.3 228.5 L432.0 242.5 L427.4 256.7 L422.4 270.9 L417.1 285.1 L411.4 299.1 L405.3 313.1 L398.7 326.7 L391.7 340.1 L384.1 353.1 L376.1 365.7 L367.5 377.7 L358.4 389.1 L348.7 399.8 L338.3 409.8 L327.4 418.9 L315.7 427.2 L303.4 434.5 L290.4 440.8 L276.6 445.9 L262.1 449.9 L262.4 450.1 L277.1 446.2 L291.0 441.2 L304.2 435.0 L316.6 427.7 L328.4 419.5 L339.5 410.3 L350.0 400.3 L359.8 389.6 L369.0 378.2 L377.7 366.2 L385.8 353.6 L393.5 340.6 L400.6 327.2 L407.2 313.5 L413.4 299.5 L419.2 285.4 L424.6 271.2 L429.6 256.9 L434.3 242.7 L438.6 228.7 L442.7 214.8 L446.5 201.2 L450.0 188.0 L453.4 175.2 L456.5 162.9 L459.4 151.2 Z" fill="#7c1524"/><path d="M458.8 151.2 L455.9 162.9 L452.7 175.2 L449.4 188.0 L445.9 201.2 L442.1 214.8 L438.1 228.6 L433.7 242.7 L429.1 256.9 L424.1 271.1 L418.7 285.3 L412.9 299.4 L406.7 313.4 L400.1 327.1 L393.0 340.5 L385.4 353.5 L377.3 366.0 L368.7 378.1 L359.4 389.5 L349.6 400.2 L339.2 410.2 L328.1 419.3 L316.4 427.6 L304.0 434.8 L290.8 441.1 L277.0 446.2 L262.3 450.1 L262.6 450.3 L277.4 446.4 L291.4 441.4 L304.7 435.2 L317.3 428.0 L329.1 419.8 L340.3 410.7 L350.8 400.7 L360.7 390.0 L370.1 378.6 L378.8 366.5 L387.0 354.0 L394.7 340.9 L401.8 327.5 L408.5 313.7 L414.8 299.7 L420.6 285.6 L426.0 271.3 L431.1 257.1 L435.8 242.9 L440.2 228.8 L444.3 214.9 L448.1 201.3 L451.7 188.1 L455.0 175.2 L458.2 162.9 L461.2 151.2 Z" fill="#5e1422"/><path d="M460.5 151.2 L457.5 162.9 L454.4 175.2 L451.1 188.0 L447.5 201.3 L443.7 214.9 L439.6 228.7 L435.2 242.8 L430.5 257.0 L425.5 271.3 L420.1 285.5 L414.3 299.7 L408.0 313.6 L401.4 327.4 L394.2 340.8 L386.6 353.8 L378.4 366.4 L369.7 378.4 L360.4 389.8 L350.5 400.6 L340.0 410.5 L328.8 419.7 L317.0 427.9 L304.5 435.1 L291.3 441.3 L277.3 446.4 L262.5 450.2 L262.9 450.5 L277.9 446.8 L292.1 441.8 L305.6 435.7 L318.3 428.5 L330.3 420.4 L341.6 411.3 L352.3 401.3 L362.3 390.6 L371.7 379.2 L380.6 367.1 L388.9 354.5 L396.6 341.4 L403.9 328.0 L410.7 314.2 L417.0 300.2 L422.9 286.0 L428.4 271.7 L433.5 257.3 L438.3 243.1 L442.7 229.0 L446.9 215.0 L450.8 201.4 L454.4 188.1 L457.8 175.3 L461.0 162.9 L464.0 151.2 Z" fill="#98151a"/><path d="M463.3 151.2 L460.3 162.9 L457.2 175.3 L453.8 188.1 L450.2 201.4 L446.3 215.0 L442.2 228.9 L437.7 243.0 L433.0 257.3 L427.9 271.6 L422.4 285.9 L416.5 300.1 L410.2 314.1 L403.4 327.9 L396.2 341.3 L388.5 354.4 L380.2 367.0 L371.4 379.0 L362.0 390.4 L351.9 401.2 L341.3 411.1 L330.0 420.2 L318.0 428.4 L305.4 435.6 L292.0 441.7 L277.8 446.7 L262.8 450.5 L263.0 450.6 L278.1 446.9 L292.4 442.0 L305.9 435.9 L318.7 428.8 L330.7 420.6 L342.1 411.5 L352.8 401.6 L362.9 390.8 L372.4 379.4 L381.3 367.3 L389.6 354.7 L397.4 341.7 L404.7 328.2 L411.5 314.4 L417.9 300.3 L423.8 286.1 L429.4 271.8 L434.5 257.5 L439.3 243.2 L443.8 229.0 L447.9 215.1 L451.8 201.4 L455.5 188.2 L458.9 175.3 L462.1 163.0 L465.1 151.2 Z" fill="#b25e78"/><path d="M464.5 151.2 L461.4 163.0 L458.2 175.3 L454.8 188.1 L451.2 201.4 L447.3 215.1 L443.2 229.0 L438.7 243.1 L434.0 257.4 L428.8 271.7 L423.3 286.0 L417.4 300.2 L411.1 314.3 L404.3 328.1 L397.0 341.5 L389.2 354.6 L380.9 367.2 L372.0 379.3 L362.6 390.7 L352.5 401.4 L341.8 411.4 L330.5 420.5 L318.4 428.6 L305.7 435.8 L292.2 441.9 L278.0 446.8 L263.0 450.6 L263.4 450.9 L278.6 447.3 L293.1 442.4 L306.8 436.4 L319.7 429.3 L332.0 421.2 L343.5 412.1 L354.3 402.2 L364.6 391.5 L374.2 380.0 L383.2 367.9 L391.6 355.3 L399.5 342.2 L406.9 328.7 L413.8 314.8 L420.2 300.7 L426.3 286.5 L431.9 272.1 L437.1 257.7 L441.9 243.4 L446.4 229.2 L450.7 215.2 L454.6 201.5 L458.3 188.2 L461.7 175.3 L465.0 163.0 L468.1 151.2 Z" fill="#98151a"/><path d="M467.4 151.2 L464.4 163.0 L461.1 175.3 L457.7 188.2 L454.0 201.5 L450.1 215.2 L445.9 229.2 L441.4 243.4 L436.5 257.7 L431.3 272.0 L425.7 286.4 L419.7 300.7 L413.3 314.7 L406.4 328.6 L399.1 342.1 L391.2 355.2 L382.8 367.8 L373.8 379.9 L364.2 391.3 L354.0 402.0 L343.2 412.0 L331.7 421.1 L319.5 429.2 L306.6 436.3 L293.0 442.3 L278.5 447.2 L263.3 450.8 L263.5 451.0 L278.8 447.4 L293.3 442.6 L307.1 436.6 L320.1 429.5 L332.4 421.4 L343.9 412.3 L354.8 402.4 L365.1 391.7 L374.7 380.2 L383.8 368.1 L392.2 355.5 L400.2 342.4 L407.6 328.8 L414.5 315.0 L421.0 300.9 L427.0 286.6 L432.6 272.2 L437.9 257.8 L442.8 243.5 L447.3 229.3 L451.5 215.3 L455.5 201.6 L459.2 188.2 L462.6 175.3 L465.9 163.0 L469.0 151.2 Z" fill="#7c1524"/><path d="M468.5 151.2 L465.4 163.0 L462.1 175.3 L458.7 188.2 L455.0 201.6 L451.0 215.3 L446.8 229.2 L442.3 243.4 L437.4 257.8 L432.2 272.2 L426.6 286.5 L420.6 300.8 L414.1 314.9 L407.2 328.8 L399.8 342.3 L391.9 355.4 L383.4 368.0 L374.4 380.1 L364.8 391.5 L354.6 402.3 L343.7 412.2 L332.1 421.3 L319.9 429.4 L306.9 436.5 L293.2 442.5 L278.7 447.3 L263.4 450.9 L263.5 451.0 L278.8 447.4 L293.3 442.6 L307.1 436.6 L320.1 429.5 L332.4 421.4 L343.9 412.3 L354.8 402.4 L365.1 391.7 L374.7 380.2 L383.8 368.1 L392.2 355.5 L400.2 342.4 L407.6 328.8 L414.5 315.0 L421.0 300.9 L427.0 286.6 L432.6 272.2 L437.9 257.8 L442.8 243.5 L447.3 229.3 L451.5 215.3 L455.5 201.6 L459.2 188.2 L462.6 175.3 L465.9 163.0 L469.0 151.2 Z" fill="#5e1422"/><path d="M468.5 151.2 L465.5 163.0 L462.2 175.3 L458.7 188.2 L455.0 201.6 L451.1 215.3 L446.9 229.2 L442.3 243.4 L437.5 257.8 L432.3 272.2 L426.6 286.5 L420.6 300.8 L414.2 314.9 L407.3 328.8 L399.9 342.3 L391.9 355.4 L383.5 368.0 L374.4 380.1 L364.8 391.6 L354.6 402.3 L343.7 412.2 L332.2 421.3 L319.9 429.4 L306.9 436.5 L293.2 442.5 L278.7 447.3 L263.4 450.9 L263.5 451.0 L278.8 447.4 L293.3 442.6 L307.1 436.6 L320.1 429.5 L332.4 421.4 L343.9 412.3 L354.8 402.4 L365.1 391.7 L374.7 380.2 L383.8 368.1 L392.2 355.5 L400.2 342.4 L407.6 328.8 L414.5 315.0 L421.0 300.9 L427.0 286.6 L432.6 272.2 L437.9 257.8 L442.8 243.5 L447.3 229.3 L451.5 215.3 L455.5 201.6 L459.2 188.2 L462.6 175.3 L465.9 163.0 L469.0 151.2 Z" fill="#ad1f22"/><path d="M468.7 151.2 L465.6 163.0 L462.4 175.3 L458.9 188.2 L455.2 201.6 L451.3 215.3 L447.0 229.3 L442.5 243.5 L437.6 257.8 L432.4 272.2 L426.8 286.6 L420.8 300.8 L414.3 314.9 L407.4 328.8 L400.0 342.3 L392.1 355.4 L383.6 368.1 L374.6 380.2 L364.9 391.6 L354.7 402.3 L343.8 412.3 L332.2 421.3 L320.0 429.4 L307.0 436.5 L293.3 442.5 L278.8 447.4 L263.5 450.9 L263.5 451.0 L278.8 447.4 L293.3 442.6 L307.1 436.6 L320.1 429.5 L332.4 421.4 L343.9 412.3 L354.8 402.4 L365.1 391.7 L374.7 380.2 L383.8 368.1 L392.2 355.5 L400.2 342.4 L407.6 328.8 L414.5 315.0 L421.0 300.9 L427.0 286.6 L432.6 272.2 L437.9 257.8 L442.8 243.5 L447.3 229.3 L451.5 215.3 L455.5 201.6 L459.2 188.2 L462.6 175.3 L465.9 163.0 L469.0 151.2 Z" fill="#a8546e"/><path d="M468.8 151.2 L465.7 163.0 L462.4 175.3 L459.0 188.2 L455.3 201.6 L451.3 215.3 L447.1 229.3 L442.6 243.5 L437.7 257.8 L432.5 272.2 L426.9 286.6 L420.8 300.9 L414.4 315.0 L407.4 328.8 L400.0 342.3 L392.1 355.5 L383.6 368.1 L374.6 380.2 L365.0 391.6 L354.7 402.3 L343.8 412.3 L332.3 421.3 L320.0 429.5 L307.0 436.6 L293.3 442.6 L278.8 447.4 L263.5 450.9 L263.5 451.0 L278.8 447.4 L293.3 442.6 L307.1 436.6 L320.1 429.5 L332.4 421.4 L343.9 412.3 L354.8 402.4 L365.1 391.7 L374.7 380.2 L383.8 368.1 L392.2 355.5 L400.2 342.4 L407.6 328.8 L414.5 315.0 L421.0 300.9 L427.0 286.6 L432.6 272.2 L437.9 257.8 L442.8 243.5 L447.3 229.3 L451.5 215.3 L455.5 201.6 L459.2 188.2 L462.6 175.3 L465.9 163.0 L469.0 151.2 Z" fill="#98151a"/><path d="M468.9 151.2 L465.8 163.0 L462.6 175.3 L459.1 188.2 L455.4 201.6 L451.5 215.3 L447.2 229.3 L442.7 243.5 L437.8 257.8 L432.6 272.2 L427.0 286.6 L420.9 300.9 L414.5 315.0 L407.6 328.8 L400.1 342.4 L392.2 355.5 L383.7 368.1 L374.7 380.2 L365.0 391.6 L354.8 402.4 L343.9 412.3 L332.3 421.4 L320.1 429.5 L307.1 436.6 L293.3 442.6 L278.8 447.4 L263.5 450.9 L263.5 451.0 L278.8 447.4 L293.3 442.6 L307.1 436.6 L320.1 429.5 L332.4 421.4 L343.9 412.3 L354.8 402.4 L365.1 391.7 L374.7 380.2 L383.8 368.1 L392.2 355.5 L400.2 342.4 L407.6 328.8 L414.5 315.0 L421.0 300.9 L427.0 286.6 L432.6 272.2 L437.9 257.8 L442.8 243.5 L447.3 229.3 L451.5 215.3 L455.5 201.6 L459.2 188.2 L462.6 175.3 L465.9 163.0 L469.0 151.2 Z" fill="#7c1524"/><path d="M152.9 367.5 L152.9 388.2 L152.9 410.1 L152.9 432.7 L152.9 455.8 L152.9 479.2 L152.9 502.7 L152.9 525.8 L152.9 548.4 L152.9 570.3 L152.9 591.0 L154.5 591.0 L154.5 570.4 L154.5 548.7 L154.5 526.2 L154.5 503.2 L154.6 479.9 L154.6 456.6 L154.6 433.6 L154.7 411.1 L154.7 389.5 L154.7 368.9 Z" fill="#4c1120"/><path d="M154.4 368.6 L154.4 389.2 L154.3 410.9 L154.3 433.5 L154.3 456.5 L154.3 479.8 L154.2 503.1 L154.2 526.1 L154.2 548.7 L154.2 570.4 L154.2 591.0 L156.4 591.0 L156.4 570.5 L156.4 549.0 L156.5 526.7 L156.6 503.9 L156.6 480.7 L156.7 457.6 L156.8 434.8 L156.8 412.5 L156.9 391.0 L156.9 370.5 Z" fill="#ad1f22"/><path d="M156.5 370.2 L156.5 390.7 L156.5 412.3 L156.4 434.6 L156.4 457.5 L156.3 480.6 L156.3 503.8 L156.2 526.6 L156.1 549.0 L156.1 570.5 L156.1 591.0 L157.5 591.0 L157.5 570.6 L157.6 549.2 L157.7 527.0 L157.8 504.2 L157.9 481.2 L158.0 458.2 L158.0 435.5 L158.1 413.3 L158.2 391.8 L158.2 371.5 Z" fill="#a8546e"/><path d="M157.8 371.2 L157.8 391.6 L157.8 413.1 L157.7 435.3 L157.6 458.1 L157.5 481.1 L157.5 504.1 L157.4 526.9 L157.3 549.2 L157.3 570.6 L157.2 591.0 L159.5 591.0 L159.5 570.8 L159.6 549.5 L159.7 527.5 L159.8 504.9 L160.0 482.1 L160.1 459.3 L160.2 436.7 L160.3 414.6 L160.4 393.4 L160.4 373.2 Z" fill="#a4191c"/><path d="M160.1 372.9 L160.1 393.2 L160.0 414.4 L159.9 436.5 L159.8 459.1 L159.7 482.0 L159.5 504.8 L159.4 527.4 L159.3 549.5 L159.2 570.8 L159.2 591.0 L160.5 591.0 L160.5 570.9 L160.6 549.7 L160.7 527.7 L160.9 505.2 L161.0 482.5 L161.2 459.8 L161.3 437.3 L161.4 415.3 L161.5 394.1 L161.5 374.0 Z" fill="#7c1524"/><path d="M161.2 373.8 L161.2 393.9 L161.1 415.1 L161.0 437.1 L160.9 459.6 L160.7 482.4 L160.6 505.1 L160.4 527.7 L160.3 549.6 L160.2 570.8 L160.2 591.0 L161.5 591.0 L161.5 570.9 L161.6 549.9 L161.8 528.0 L161.9 505.6 L162.1 482.9 L162.3 460.3 L162.4 437.9 L162.6 416.0 L162.7 394.9 L162.7 374.9 Z" fill="#561424"/><path d="M162.4 374.6 L162.3 394.7 L162.2 415.8 L162.1 437.7 L162.0 460.1 L161.8 482.8 L161.6 505.5 L161.5 527.9 L161.3 549.8 L161.2 570.9 L161.2 591.0 L163.0 591.0 L163.1 571.1 L163.2 550.1 L163.4 528.4 L163.6 506.1 L163.8 483.6 L164.0 461.1 L164.1 438.8 L164.3 417.1 L164.4 396.1 L164.4 376.2 Z" fill="#98151a"/><path d="M164.1 375.9 L164.1 395.9 L164.0 416.9 L163.8 438.6 L163.6 460.9 L163.4 483.5 L163.2 506.0 L163.1 528.3 L162.9 550.1 L162.8 571.0 L162.7 591.0 L164.0 591.0 L164.0 571.1 L164.2 550.3 L164.4 528.6 L164.6 506.4 L164.8 484.0 L165.0 461.6 L165.2 439.4 L165.4 417.8 L165.5 396.9 L165.5 377.0 Z" fill="#a8546e"/><path d="M165.2 376.8 L165.2 396.6 L165.1 417.6 L164.9 439.2 L164.7 461.4 L164.5 483.9 L164.3 506.3 L164.1 528.5 L163.9 550.2 L163.7 571.1 L163.7 591.0 L165.1 591.0 L165.1 571.2 L165.3 550.4 L165.5 528.9 L165.7 506.8 L166.0 484.5 L166.2 462.2 L166.4 440.1 L166.6 418.5 L166.7 397.7 L166.8 378.0 Z" fill="#a0171a"/><path d="M166.4 377.7 L166.4 397.5 L166.3 418.3 L166.1 439.9 L165.9 462.0 L165.7 484.4 L165.4 506.7 L165.2 528.8 L165.0 550.4 L164.9 571.2 L164.8 591.0 L166.4 591.0 L166.5 571.3 L166.7 550.7 L166.9 529.2 L167.2 507.3 L167.5 485.1 L167.7 462.9 L168.0 440.9 L168.1 419.5 L168.3 398.8 L168.3 379.1 Z" fill="#7c1524"/><path d="M168.0 378.9 L167.9 398.6 L167.8 419.3 L167.6 440.7 L167.4 462.7 L167.1 484.9 L166.9 507.2 L166.6 529.1 L166.4 550.6 L166.2 571.3 L166.1 591.0 L168.0 591.0 L168.1 571.5 L168.3 550.9 L168.6 529.6 L168.9 507.8 L169.2 485.7 L169.5 463.7 L169.7 441.9 L169.9 420.6 L170.1 400.0 L170.1 380.5 Z" fill="#641828"/><path d="M169.8 380.2 L169.7 399.8 L169.6 420.4 L169.4 441.7 L169.1 463.5 L168.8 485.6 L168.5 507.7 L168.3 529.5 L168.0 550.9 L167.8 571.4 L167.7 591.0 L170.0 591.0 L170.2 571.6 L170.4 551.2 L170.7 530.1 L171.0 508.5 L171.4 486.6 L171.7 464.7 L172.0 443.1 L172.2 422.0 L172.4 401.6 L172.4 382.2 Z" fill="#a4191c"/><path d="M172.1 382.0 L172.0 401.4 L171.9 421.8 L171.7 442.9 L171.4 464.6 L171.1 486.5 L170.7 508.4 L170.4 530.0 L170.1 551.2 L169.9 571.6 L169.7 591.0 L170.9 591.0 L171.0 571.7 L171.3 551.4 L171.6 530.3 L171.9 508.8 L172.3 487.0 L172.6 465.2 L173.0 443.6 L173.2 422.6 L173.3 402.3 L173.4 383.0 Z" fill="#bf768c"/><path d="M173.0 382.7 L173.0 402.0 L172.9 422.4 L172.6 443.4 L172.3 465.0 L172.0 486.9 L171.6 508.7 L171.3 530.3 L171.0 551.3 L170.7 571.7 L170.6 591.0 L172.4 591.0 L172.6 571.8 L172.9 551.6 L173.2 530.7 L173.6 509.3 L174.0 487.6 L174.4 466.0 L174.7 444.6 L175.0 423.6 L175.1 403.5 L175.2 384.3 Z" fill="#98151a"/><path d="M174.8 384.0 L174.8 403.2 L174.6 423.4 L174.4 444.4 L174.0 465.8 L173.7 487.5 L173.3 509.2 L172.9 530.7 L172.6 551.6 L172.3 571.8 L172.1 591.0 L173.1 591.0 L173.3 571.9 L173.6 551.8 L174.0 530.9 L174.4 509.5 L174.8 487.9 L175.1 466.3 L175.5 445.0 L175.7 424.1 L175.9 404.0 L176.0 384.9 Z" fill="#86182a"/><path d="M175.6 384.6 L175.6 403.8 L175.4 423.9 L175.2 444.8 L174.8 466.2 L174.4 487.8 L174.0 509.4 L173.7 530.8 L173.3 551.7 L173.0 571.9 L172.8 591.0 L174.5 591.0 L174.8 572.0 L175.1 552.0 L175.5 531.3 L175.9 510.0 L176.3 488.6 L176.7 467.1 L177.1 445.9 L177.4 425.1 L177.5 405.1 L177.6 386.1 Z" fill="#641828"/><path d="M177.2 385.9 L177.2 404.9 L177.0 424.9 L176.7 445.7 L176.4 466.9 L176.0 488.4 L175.6 509.9 L175.1 531.2 L174.8 551.9 L174.5 572.0 L174.2 591.0 L176.7 591.0 L177.0 572.2 L177.3 552.3 L177.8 531.8 L178.2 510.8 L178.7 489.5 L179.1 468.2 L179.5 447.2 L179.8 426.6 L180.0 406.8 L180.0 388.0 Z" fill="#98151a"/><path d="M179.7 387.7 L179.7 406.6 L179.5 426.4 L179.2 447.0 L178.8 468.1 L178.4 489.4 L177.9 510.7 L177.4 531.7 L177.0 552.3 L176.7 572.1 L176.4 591.0 L177.8 591.0 L178.1 572.3 L178.5 552.5 L179.0 532.1 L179.4 511.2 L179.9 490.0 L180.4 468.8 L180.8 447.9 L181.1 427.4 L181.3 407.7 L181.3 389.0 Z" fill="#ad5a70"/><path d="M181.0 388.7 L181.0 407.5 L180.8 427.2 L180.5 447.7 L180.1 468.7 L179.6 489.9 L179.1 511.1 L178.7 532.0 L178.2 552.5 L177.8 572.2 L177.6 591.0 L179.5 591.0 L179.8 572.4 L180.2 552.8 L180.7 532.5 L181.2 511.7 L181.7 490.7 L182.2 469.6 L182.6 448.9 L183.0 428.6 L183.2 409.0 L183.2 390.3 Z" fill="#a0171a"/><path d="M182.8 390.1 L182.8 408.7 L182.6 428.3 L182.3 448.7 L181.9 469.5 L181.4 490.5 L180.9 511.6 L180.4 532.4 L179.9 552.7 L179.5 572.4 L179.2 591.0 L180.9 591.0 L181.2 572.5 L181.7 553.0 L182.2 532.8 L182.7 512.2 L183.3 491.3 L183.8 470.4 L184.2 449.7 L184.6 429.5 L184.8 410.1 L184.8 391.6 Z" fill="#8e1d2c"/><path d="M184.5 391.3 L184.4 409.8 L184.2 429.3 L183.9 449.5 L183.4 470.2 L182.9 491.2 L182.4 512.1 L181.9 532.8 L181.3 553.0 L180.9 572.5 L180.6 591.0 L182.0 591.0 L182.4 572.6 L182.8 553.2 L183.4 533.1 L183.9 512.6 L184.5 491.8 L185.0 471.0 L185.5 450.4 L185.8 430.3 L186.0 410.9 L186.1 392.5 Z" fill="#4c1120"/><path d="M185.7 392.3 L185.7 410.7 L185.5 430.1 L185.2 450.2 L184.7 470.8 L184.2 491.6 L183.6 512.5 L183.1 533.1 L182.5 553.2 L182.1 572.6 L181.7 591.0 L183.3 591.0 L183.7 572.7 L184.2 553.4 L184.7 533.4 L185.3 513.0 L185.9 492.3 L186.5 471.6 L186.9 451.2 L187.3 431.2 L187.5 411.9 L187.5 393.6 Z" fill="#a0171a"/><path d="M187.2 393.4 L187.2 411.7 L187.0 431.0 L186.6 451.0 L186.1 471.5 L185.6 492.2 L185.0 512.9 L184.4 533.4 L183.8 553.4 L183.4 572.7 L183.0 591.0 L184.2 591.0 L184.6 572.8 L185.1 553.6 L185.7 533.7 L186.3 513.3 L186.9 492.7 L187.5 472.1 L188.0 451.7 L188.3 431.8 L188.5 412.6 L188.6 394.4 Z" fill="#b25e78"/><path d="M188.2 394.2 L188.2 412.4 L188.0 431.6 L187.6 451.6 L187.1 471.9 L186.6 492.6 L186.0 513.2 L185.4 533.6 L184.8 553.5 L184.3 572.7 L183.9 591.0 L185.3 591.0 L185.8 572.8 L186.3 553.8 L186.9 534.0 L187.6 513.7 L188.2 493.2 L188.8 472.7 L189.3 452.4 L189.7 432.6 L189.9 413.6 L189.9 395.4 Z" fill="#ad1f22"/><path d="M189.6 395.2 L189.5 413.3 L189.3 432.4 L188.9 452.3 L188.5 472.6 L187.9 493.1 L187.3 513.6 L186.6 533.9 L186.0 553.7 L185.5 572.8 L185.0 591.0 L186.6 591.0 L187.1 572.9 L187.6 554.0 L188.3 534.3 L188.9 514.1 L189.6 493.7 L190.2 473.4 L190.7 453.2 L191.1 433.5 L191.3 414.5 L191.3 396.5 Z" fill="#86182a"/><path d="M191.0 396.2 L191.0 414.3 L190.8 433.3 L190.4 453.0 L189.9 473.2 L189.3 493.6 L188.6 514.0 L188.0 534.2 L187.3 553.9 L186.8 572.9 L186.3 591.0 L188.1 591.0 L188.6 573.1 L189.2 554.2 L189.9 534.7 L190.6 514.6 L191.3 494.4 L191.9 474.2 L192.4 454.1 L192.8 434.6 L193.0 415.7 L193.1 397.8 Z" fill="#4c1120"/><path d="M192.7 397.5 L192.7 415.5 L192.5 434.4 L192.1 454.0 L191.6 474.0 L191.0 494.3 L190.3 514.5 L189.6 534.6 L188.9 554.2 L188.3 573.0 L187.8 591.0 L190.3 591.0 L190.8 573.2 L191.5 554.6 L192.2 535.2 L193.0 515.4 L193.7 495.3 L194.3 475.3 L194.9 455.4 L195.3 436.1 L195.5 417.4 L195.5 399.7 Z" fill="#ad1f22"/><path d="M195.2 399.4 L195.2 417.2 L195.0 435.9 L194.5 455.3 L194.0 475.1 L193.3 495.2 L192.6 515.3 L191.9 535.1 L191.2 554.5 L190.5 573.2 L190.0 591.0 L191.5 591.0 L192.1 573.3 L192.8 554.8 L193.5 535.5 L194.3 515.8 L195.0 495.8 L195.7 475.9 L196.2 456.2 L196.7 436.9 L196.9 418.3 L196.9 400.7 Z" fill="#ba6a82"/><path d="M196.5 400.4 L196.5 418.1 L196.3 436.7 L195.9 456.0 L195.3 475.7 L194.7 495.7 L193.9 515.7 L193.2 535.4 L192.4 554.7 L191.8 573.3 L191.2 591.0 L193.3 591.0 L193.9 573.5 L194.6 555.1 L195.4 536.0 L196.2 516.4 L197.0 496.6 L197.7 476.8 L198.3 457.3 L198.7 438.2 L198.9 419.7 L198.9 402.2 Z" fill="#a81b1e"/><path d="M198.6 402.0 L198.6 419.5 L198.4 438.0 L197.9 457.1 L197.4 476.7 L196.7 496.5 L195.9 516.3 L195.1 535.9 L194.3 555.0 L193.6 573.5 L193.0 591.0 L193.8 591.0 L194.4 573.5 L195.2 555.1 L196.0 536.1 L196.8 516.6 L197.6 496.8 L198.3 477.1 L198.8 457.6 L199.3 438.5 L199.5 420.1 L199.5 402.7 Z" fill="#8e1d2c"/><path d="M199.2 402.4 L199.2 419.9 L198.9 438.3 L198.5 457.4 L197.9 476.9 L197.2 496.7 L196.5 516.5 L195.7 536.0 L194.9 555.1 L194.1 573.5 L193.5 591.0 L194.8 591.0 L195.5 573.6 L196.3 555.3 L197.1 536.3 L197.9 516.9 L198.7 497.3 L199.5 477.6 L200.1 458.2 L200.5 439.3 L200.7 421.0 L200.7 403.6 Z" fill="#641828"/><path d="M200.4 403.3 L200.4 420.7 L200.2 439.1 L199.7 458.0 L199.1 477.5 L198.4 497.2 L197.6 516.8 L196.8 536.3 L196.0 555.3 L195.2 573.6 L194.5 591.0 L196.4 591.0 L197.1 573.7 L197.9 555.6 L198.8 536.7 L199.7 517.5 L200.5 498.0 L201.2 478.5 L201.8 459.2 L202.3 440.3 L202.5 422.2 L202.5 404.9 Z" fill="#a4191c"/><path d="M202.2 404.7 L202.2 422.0 L201.9 440.1 L201.5 459.0 L200.9 478.3 L200.2 497.8 L199.3 517.4 L198.5 536.7 L197.6 555.5 L196.8 573.7 L196.1 591.0 L197.0 591.0 L197.7 573.8 L198.6 555.7 L199.5 536.9 L200.3 517.7 L201.2 498.2 L201.9 478.8 L202.5 459.5 L203.0 440.8 L203.2 422.7 L203.2 405.4 Z" fill="#ad5a70"/><path d="M202.8 405.2 L202.9 422.4 L202.6 440.6 L202.2 459.4 L201.6 478.6 L200.8 498.1 L200.0 517.6 L199.1 536.8 L198.3 555.6 L197.4 573.8 L196.7 591.0 L198.1 591.0 L198.9 573.9 L199.8 555.9 L200.7 537.2 L201.6 518.0 L202.4 498.7 L203.2 479.3 L203.8 460.2 L204.2 441.5 L204.5 423.5 L204.4 406.4 Z" fill="#a4191c"/><path d="M204.1 406.1 L204.1 423.3 L203.9 441.3 L203.5 460.0 L202.8 479.2 L202.1 498.6 L201.2 517.9 L200.3 537.1 L199.4 555.8 L198.6 573.8 L197.8 591.0 L199.1 591.0 L199.9 573.9 L200.8 556.0 L201.8 537.4 L202.7 518.4 L203.6 499.1 L204.3 479.9 L205.0 460.8 L205.4 442.3 L205.7 424.3 L205.6 407.3 Z" fill="#8e1d2c"/><path d="M205.3 407.0 L205.3 424.1 L205.1 442.1 L204.6 460.7 L204.0 479.7 L203.2 499.0 L202.4 518.3 L201.5 537.4 L200.5 556.0 L199.6 573.9 L198.8 591.0 L200.6 591.0 L201.4 574.1 L202.3 556.3 L203.3 537.8 L204.3 518.9 L205.2 499.7 L205.9 480.6 L206.6 461.7 L207.1 443.2 L207.3 425.4 L207.2 408.5 Z" fill="#5e1422"/><path d="M206.9 408.2 L206.9 425.2 L206.7 443.0 L206.3 461.5 L205.6 480.5 L204.8 499.6 L203.9 518.8 L203.0 537.7 L202.0 556.2 L201.1 574.0 L200.3 591.0 L203.1 591.0 L204.0 574.3 L205.0 556.7 L206.0 538.4 L207.0 519.7 L208.0 500.8 L208.8 481.9 L209.5 463.2 L209.9 445.0 L210.2 427.4 L210.1 410.7 Z" fill="#ad1f22"/><path d="M209.8 410.4 L209.8 427.2 L209.6 444.8 L209.1 463.1 L208.5 481.8 L207.7 500.7 L206.7 519.6 L205.7 538.3 L204.7 556.6 L203.7 574.2 L202.8 591.0 L204.3 591.0 L205.3 574.4 L206.3 556.9 L207.4 538.7 L208.4 520.1 L209.4 501.4 L210.2 482.6 L210.9 464.0 L211.3 445.8 L211.6 428.3 L211.5 411.7 Z" fill="#a8546e"/><path d="M211.2 411.5 L211.2 428.1 L211.0 445.6 L210.5 463.8 L209.9 482.4 L209.0 501.2 L208.1 520.0 L207.1 538.6 L206.0 556.8 L205.0 574.3 L204.0 591.0 L206.0 591.0 L207.0 574.5 L208.1 557.1 L209.2 539.1 L210.3 520.7 L211.2 502.1 L212.1 483.4 L212.8 465.0 L213.3 447.0 L213.5 429.7 L213.4 413.1 Z" fill="#ad1f22"/><path d="M213.1 412.9 L213.1 429.4 L212.9 446.8 L212.5 464.8 L211.8 483.3 L210.9 501.9 L209.9 520.6 L208.9 539.1 L207.8 557.1 L206.7 574.5 L205.7 591.0 L207.4 591.0 L208.5 574.6 L209.6 557.4 L210.7 539.5 L211.8 521.2 L212.8 502.7 L213.7 484.2 L214.4 465.9 L214.9 448.0 L215.1 430.7 L215.0 414.4 Z" fill="#7c1524"/><path d="M214.7 414.1 L214.8 430.5 L214.5 447.8 L214.1 465.7 L213.4 484.0 L212.5 502.6 L211.5 521.1 L210.4 539.4 L209.3 557.3 L208.2 574.6 L207.1 591.0 L208.7 591.0 L209.9 574.7 L211.1 557.6 L212.2 539.8 L213.4 521.7 L214.4 503.3 L215.3 484.9 L216.0 466.7 L216.5 448.9 L216.7 431.8 L216.6 415.5 Z" fill="#641828"/><path d="M216.2 415.3 L216.3 431.6 L216.1 448.7 L215.6 466.5 L214.9 484.7 L214.1 503.1 L213.0 521.6 L211.9 539.8 L210.7 557.5 L209.6 574.7 L208.4 591.0 L210.0 591.0 L211.2 574.8 L212.5 557.8 L213.7 540.2 L214.8 522.1 L215.9 503.8 L216.8 485.6 L217.5 467.5 L218.0 449.8 L218.2 432.8 L218.0 416.7 Z" fill="#ad1f22"/><path d="M217.7 416.4 L217.8 432.6 L217.6 449.6 L217.1 467.3 L216.4 485.4 L215.5 503.7 L214.5 522.0 L213.3 540.1 L212.1 557.8 L210.9 574.8 L209.7 591.0 L210.9 591.0 L212.1 574.9 L213.3 557.9 L214.6 540.4 L215.7 522.4 L216.8 504.2 L217.7 486.0 L218.4 468.0 L218.9 450.4 L219.1 433.5 L219.0 417.4 Z" fill="#ba6a82"/><path d="M218.6 417.1 L218.8 433.2 L218.6 450.2 L218.1 467.8 L217.4 485.8 L216.5 504.1 L215.4 522.3 L214.2 540.3 L213.0 557.9 L211.8 574.9 L210.6 591.0 L212.3 591.0 L213.6 575.0 L214.9 558.2 L216.1 540.7 L217.3 522.9 L218.4 504.8 L219.4 486.7 L220.1 468.9 L220.6 451.4 L220.8 434.6 L220.6 418.6 Z" fill="#a81b1e"/><path d="M220.3 418.4 L220.4 434.4 L220.2 451.2 L219.7 468.7 L219.0 486.6 L218.1 504.7 L217.0 522.8 L215.8 540.7 L214.6 558.1 L213.3 575.0 L212.0 591.0 L213.3 591.0 L214.6 575.1 L215.9 558.3 L217.2 541.0 L218.4 523.2 L219.5 505.2 L220.5 487.2 L221.2 469.5 L221.7 452.1 L221.9 435.4 L221.7 419.4 Z" fill="#86182a"/><path d="M221.4 419.2 L221.5 435.1 L221.4 451.9 L220.9 469.3 L220.1 487.1 L219.2 505.1 L218.1 523.1 L216.9 540.9 L215.6 558.3 L214.3 575.1 L213.0 591.0 L214.9 591.0 L216.3 575.2 L217.7 558.6 L219.1 541.4 L220.3 523.8 L221.4 505.9 L222.4 488.1 L223.1 470.5 L223.6 453.3 L223.8 436.7 L223.6 420.9 Z" fill="#5e1422"/><path d="M223.3 420.6 L223.5 436.4 L223.3 453.1 L222.8 470.3 L222.1 488.0 L221.1 505.8 L220.0 523.7 L218.7 541.3 L217.4 558.6 L216.0 575.2 L214.7 591.0 L217.1 591.0 L218.5 575.4 L220.0 559.0 L221.4 541.9 L222.7 524.5 L223.9 506.8 L224.8 489.2 L225.6 471.8 L226.1 454.7 L226.2 438.3 L226.1 422.7 Z" fill="#a0171a"/><path d="M225.7 422.4 L225.9 438.1 L225.7 454.5 L225.2 471.6 L224.5 489.1 L223.5 506.7 L222.4 524.4 L221.1 541.9 L219.7 558.9 L218.2 575.4 L216.8 591.0 L218.2 591.0 L219.7 575.5 L221.2 559.1 L222.6 542.2 L224.0 524.9 L225.1 507.3 L226.1 489.8 L226.9 472.5 L227.4 455.5 L227.5 439.2 L227.3 423.7 Z" fill="#ba6a82"/><path d="M227.0 423.4 L227.2 439.0 L227.0 455.3 L226.5 472.3 L225.8 489.6 L224.8 507.2 L223.6 524.8 L222.3 542.1 L220.9 559.1 L219.4 575.4 L217.9 591.0 L219.7 591.0 L221.3 575.6 L222.8 559.4 L224.3 542.6 L225.6 525.4 L226.8 508.0 L227.8 490.6 L228.6 473.4 L229.1 456.6 L229.2 440.4 L229.0 424.9 Z" fill="#a4191c"/><path d="M228.7 424.7 L228.9 440.1 L228.7 456.4 L228.3 473.2 L227.5 490.4 L226.5 507.8 L225.3 525.3 L224.0 542.5 L222.5 559.3 L221.0 575.6 L219.4 591.0 L220.7 591.0 L222.3 575.7 L223.9 559.6 L225.4 542.8 L226.8 525.7 L228.0 508.4 L229.0 491.1 L229.8 474.0 L230.3 457.3 L230.4 441.2 L230.2 425.8 Z" fill="#7c1524"/><path d="M229.9 425.6 L230.1 440.9 L229.9 457.1 L229.5 473.8 L228.7 491.0 L227.7 508.3 L226.5 525.6 L225.1 542.8 L223.6 559.5 L222.0 575.6 L220.4 591.0 L222.0 591.0 L223.7 575.8 L225.4 559.8 L226.9 543.2 L228.3 526.2 L229.5 509.0 L230.6 491.8 L231.3 474.8 L231.8 458.2 L232.0 442.2 L231.7 427.0 Z" fill="#641828"/><path d="M231.4 426.7 L231.6 442.0 L231.5 458.0 L231.0 474.6 L230.2 491.6 L229.2 508.9 L228.0 526.1 L226.6 543.1 L225.0 559.7 L223.4 575.8 L221.7 591.0 L223.4 591.0 L225.1 575.9 L226.8 560.0 L228.4 543.5 L229.8 526.6 L231.1 509.6 L232.1 492.5 L232.9 475.6 L233.4 459.1 L233.5 443.3 L233.3 428.1 Z" fill="#a4191c"/><path d="M232.9 427.9 L233.2 443.0 L233.0 458.9 L232.6 475.5 L231.8 492.4 L230.8 509.4 L229.5 526.5 L228.1 543.4 L226.5 559.9 L224.8 575.9 L223.1 591.0 L224.2 591.0 L226.0 576.0 L227.7 560.1 L229.3 543.7 L230.8 526.9 L232.0 509.9 L233.1 492.9 L233.9 476.1 L234.3 459.7 L234.5 443.9 L234.2 428.8 Z" fill="#bf768c"/><path d="M233.9 428.6 L234.1 443.7 L234.0 459.5 L233.5 476.0 L232.7 492.8 L231.7 509.8 L230.4 526.8 L229.0 543.6 L227.4 560.1 L225.7 575.9 L223.9 591.0 L225.3 591.0 L227.2 576.0 L228.9 560.3 L230.6 544.0 L232.1 527.3 L233.3 510.4 L234.4 493.5 L235.2 476.8 L235.6 460.5 L235.7 444.8 L235.5 429.8 Z" fill="#98151a"/><path d="M235.2 429.6 L235.4 444.5 L235.3 460.3 L234.8 476.6 L234.0 493.4 L233.0 510.3 L231.7 527.2 L230.2 543.9 L228.6 560.3 L226.9 576.0 L225.0 591.0 L226.8 591.0 L228.7 576.2 L230.5 560.6 L232.2 544.4 L233.7 527.8 L235.0 511.0 L236.1 494.3 L236.9 477.7 L237.3 461.5 L237.4 445.9 L237.2 431.1 Z" fill="#7c1524"/><path d="M236.8 430.8 L237.1 445.7 L237.0 461.3 L236.5 477.5 L235.8 494.1 L234.7 510.9 L233.4 527.7 L231.9 544.3 L230.2 560.5 L228.4 576.1 L226.5 591.0 L228.2 591.0 L230.2 576.3 L232.1 560.8 L233.8 544.7 L235.3 528.3 L236.7 511.7 L237.7 495.0 L238.5 478.6 L239.0 462.5 L239.1 447.0 L238.8 432.3 Z" fill="#641828"/><path d="M238.5 432.1 L238.7 446.8 L238.6 462.3 L238.2 478.4 L237.4 494.9 L236.3 511.5 L235.0 528.2 L233.5 544.7 L231.8 560.7 L229.9 576.2 L227.9 591.0 L230.7 591.0 L232.8 576.5 L234.8 561.2 L236.6 545.3 L238.2 529.1 L239.5 512.7 L240.6 496.3 L241.4 480.1 L241.8 464.2 L241.9 449.0 L241.6 434.4 Z" fill="#a81b1e"/><path d="M241.3 434.2 L241.6 448.7 L241.5 464.0 L241.0 479.9 L240.3 496.1 L239.2 512.6 L237.8 529.0 L236.2 545.3 L234.4 561.1 L232.5 576.4 L230.4 591.0 L231.7 591.0 L233.9 576.6 L235.9 561.4 L237.7 545.6 L239.3 529.5 L240.7 513.2 L241.8 496.8 L242.6 480.7 L243.0 465.0 L243.1 449.8 L242.8 435.3 Z" fill="#bf768c"/><path d="M242.4 435.1 L242.8 449.5 L242.7 464.8 L242.3 480.5 L241.5 496.7 L240.4 513.0 L239.0 529.4 L237.4 545.5 L235.6 561.3 L233.6 576.5 L231.4 591.0 L233.2 591.0 L235.4 576.7 L237.5 561.6 L239.4 546.0 L241.0 530.0 L242.4 513.8 L243.5 497.6 L244.3 481.6 L244.8 466.0 L244.8 450.9 L244.5 436.6 Z" fill="#a81b1e"/><path d="M244.1 436.3 L244.5 450.7 L244.4 465.8 L244.0 481.4 L243.2 497.5 L242.1 513.7 L240.7 529.9 L239.0 545.9 L237.2 561.6 L235.1 576.6 L232.9 591.0 L234.8 591.0 L237.1 576.8 L239.3 561.9 L241.2 546.4 L242.9 530.5 L244.3 514.5 L245.4 498.5 L246.2 482.6 L246.6 467.1 L246.7 452.2 L246.3 438.0 Z" fill="#8e1d2c"/><path d="M246.0 437.7 L246.3 451.9 L246.3 466.9 L245.9 482.4 L245.1 498.3 L244.0 514.4 L242.6 530.4 L240.9 546.3 L239.0 561.8 L236.8 576.8 L234.5 591.0 L236.4 591.0 L238.8 576.9 L241.0 562.1 L243.0 546.8 L244.7 531.1 L246.2 515.2 L247.3 499.3 L248.1 483.6 L248.5 468.2 L248.5 453.4 L248.1 439.4 Z" fill="#561424"/><path d="M247.8 439.1 L248.2 453.2 L248.2 468.0 L247.7 483.4 L247.0 499.1 L245.8 515.1 L244.4 531.0 L242.7 546.7 L240.7 562.1 L238.5 576.9 L236.1 591.0 L238.7 591.0 L241.2 577.1 L243.5 562.5 L245.6 547.4 L247.4 531.8 L248.8 516.2 L250.0 500.5 L250.8 485.0 L251.2 469.8 L251.2 455.2 L250.7 441.3 Z" fill="#a81b1e"/><path d="M250.4 441.1 L250.8 455.0 L250.8 469.6 L250.4 484.8 L249.6 500.3 L248.5 516.0 L247.0 531.7 L245.3 547.3 L243.2 562.5 L240.9 577.1 L238.4 591.0 L239.7 591.0 L242.3 577.2 L244.7 562.7 L246.8 547.6 L248.6 532.2 L250.0 516.6 L251.2 501.0 L252.0 485.6 L252.4 470.5 L252.4 456.0 L251.9 442.2 Z" fill="#bf768c"/><path d="M251.6 442.0 L252.0 455.8 L252.0 470.3 L251.6 485.4 L250.9 500.9 L249.7 516.5 L248.2 532.1 L246.4 547.5 L244.4 562.6 L242.0 577.2 L239.5 591.0 L241.9 591.0 L244.6 577.4 L247.0 563.0 L249.2 548.2 L251.0 532.9 L252.5 517.5 L253.7 502.1 L254.5 486.9 L254.9 472.0 L254.8 457.7 L254.4 444.1 Z" fill="#a4191c"/><path d="M254.0 443.8 L254.5 457.5 L254.5 471.8 L254.1 486.7 L253.4 502.0 L252.2 517.4 L250.7 532.8 L248.8 548.1 L246.7 563.0 L244.3 577.3 L241.6 591.0 L242.8 591.0 L245.5 577.4 L248.0 563.2 L250.2 548.4 L252.1 533.2 L253.6 517.9 L254.7 502.6 L255.5 487.4 L255.9 472.7 L255.9 458.4 L255.4 444.8 Z" fill="#8e1d2c"/><path d="M255.0 444.6 L255.5 458.2 L255.6 472.4 L255.2 487.3 L254.4 502.4 L253.2 517.8 L251.7 533.1 L249.9 548.3 L247.7 563.1 L245.2 577.4 L242.5 591.0 L244.1 591.0 L247.0 577.5 L249.5 563.4 L251.7 548.7 L253.6 533.7 L255.2 518.5 L256.3 503.3 L257.1 488.3 L257.5 473.6 L257.4 459.4 L256.9 446.0 Z" fill="#641828"/><path d="M256.6 445.7 L257.1 459.2 L257.1 473.4 L256.8 488.1 L256.0 503.1 L254.8 518.4 L253.3 533.6 L251.4 548.6 L249.2 563.3 L246.6 577.5 L243.8 591.0 L245.9 591.0 L248.8 577.7 L251.4 563.7 L253.7 549.2 L255.6 534.3 L257.2 519.2 L258.4 504.2 L259.2 489.3 L259.5 474.8 L259.4 460.8 L258.9 447.5 Z" fill="#98151a"/><path d="M258.6 447.2 L259.1 460.6 L259.2 474.6 L258.8 489.2 L258.1 504.1 L256.9 519.1 L255.3 534.2 L253.4 549.1 L251.1 563.6 L248.5 577.7 L245.6 591.0 L246.7 591.0 L249.7 577.7 L252.4 563.8 L254.7 549.4 L256.6 534.6 L258.2 519.6 L259.4 504.6 L260.2 489.9 L260.5 475.4 L260.4 461.5 L259.9 448.2 Z" fill="#bf768c"/><path d="M259.5 448.0 L260.1 461.2 L260.2 475.2 L259.8 489.7 L259.0 504.5 L257.9 519.5 L256.3 534.5 L254.3 549.3 L252.0 563.8 L249.4 577.7 L246.4 591.0 L248.4 591.0 L251.4 577.9 L254.2 564.1 L256.5 549.8 L258.5 535.1 L260.1 520.3 L261.3 505.5 L262.1 490.8 L262.4 476.5 L262.3 462.7 L261.7 449.6 Z" fill="#a4191c"/><path d="M261.4 449.4 L262.0 462.5 L262.1 476.3 L261.7 490.7 L261.0 505.3 L259.8 520.2 L258.2 535.0 L256.2 549.7 L253.8 564.0 L251.1 577.9 L248.1 591.0 L249.0 591.0 L252.1 577.9 L254.8 564.2 L257.2 549.9 L259.2 535.3 L260.8 520.6 L262.0 505.8 L262.8 491.2 L263.1 477.0 L263.0 463.2 L262.4 450.1 Z" fill="#86182a"/><path d="M262.1 449.9 L262.7 463.0 L262.8 476.8 L262.5 491.0 L261.7 505.7 L260.5 520.4 L258.9 535.2 L256.9 549.9 L254.5 564.1 L251.8 577.9 L248.7 591.0 L249.2 591.0 L252.3 577.9 L255.1 564.2 L257.5 550.0 L259.5 535.4 L261.1 520.7 L262.3 505.9 L263.0 491.3 L263.4 477.1 L263.2 463.4 L262.7 450.3 Z" fill="#5e1422"/><path d="M262.3 450.1 L262.9 463.1 L263.0 476.9 L262.7 491.2 L261.9 505.8 L260.7 520.5 L259.1 535.3 L257.1 549.9 L254.7 564.2 L252.0 577.9 L248.9 591.0 L249.5 591.0 L252.7 578.0 L255.4 564.3 L257.9 550.1 L259.9 535.5 L261.5 520.8 L262.7 506.1 L263.4 491.5 L263.8 477.3 L263.6 463.6 L263.0 450.6 Z" fill="#a4191c"/><path d="M262.7 450.4 L263.3 463.4 L263.4 477.1 L263.1 491.4 L262.3 505.9 L261.1 520.7 L259.5 535.4 L257.5 550.0 L255.1 564.2 L252.3 577.9 L249.2 591.0 L249.7 591.0 L252.8 578.0 L255.6 564.3 L258.0 550.1 L260.0 535.6 L261.7 520.9 L262.9 506.2 L263.6 491.6 L263.9 477.4 L263.8 463.8 L263.2 450.7 Z" fill="#b25e78"/><path d="M262.9 450.5 L263.5 463.5 L263.6 477.2 L263.3 491.5 L262.5 506.0 L261.3 520.7 L259.7 535.5 L257.7 550.0 L255.3 564.2 L252.5 578.0 L249.4 591.0 L249.9 591.0 L253.1 578.0 L255.9 564.3 L258.3 550.2 L260.3 535.7 L262.0 521.0 L263.1 506.3 L263.9 491.8 L264.2 477.6 L264.1 463.9 L263.5 451.0 Z" fill="#a4191c"/><path d="M263.2 450.7 L263.8 463.8 L263.9 477.4 L263.6 491.6 L262.8 506.2 L261.6 520.9 L260.0 535.6 L258.0 550.1 L255.6 564.3 L252.8 578.0 L249.6 591.0 L249.9 591.0 L253.1 578.0 L255.9 564.3 L258.3 550.2 L260.3 535.7 L262.0 521.0 L263.1 506.3 L263.9 491.8 L264.2 477.6 L264.1 463.9 L263.5 451.0 Z" fill="#86182a"/></g><rect x="150" y="150" width="322" height="442" fill="url(#fadeL)"/><circle cx="262" cy="447" r="105" fill="url(#knot)"/><path d="M469 151.2 C443 250 400 424 264 449" fill="none" stroke="#e3a6b8" stroke-width="9" opacity=".33" filter="url(#soft)"/><path d="M294.6 151.2 C290 260 272 380 253 438" fill="none" stroke="#ecc0cb" stroke-width=".6" opacity=".5"/></g><path d="M152.9 360.5 L260 439 L267 446.5 L263 453.5 L152.9 372.5 Z" fill="#8f171c"/><path d="M152.9 363.4 L264 444.8" stroke="#b9404c" stroke-width="1.2" fill="none"/><path d="M152.9 366.4 L264.6 448.2" stroke="#5e0f18" stroke-width="1" fill="none"/><path d="M152.9 368.6 L263.6 450" stroke="#b23a46" stroke-width="1.1" fill="none"/><path d="M152.9 372.3 L262.6 453" stroke="#5a0e16" stroke-width="1.1" fill="none" opacity=".8"/></g>
<rect x="415.7" y="150.9" width="587.4" height="440.6" fill="none" stroke="#ecba22" stroke-width="1.5"/>
<path d="M573.6 218 V506" stroke="#d9d5cf" stroke-width="1.1"/>
<path d="M573.4 510.4 L578.3 524.4 L591.7 525.2 L581.3 534.6 L584.7 549.1 L573.4 541.0 L562.1 549.1 L565.5 534.6 L555.1 525.2 L568.5 524.4 Z" transform="translate(-.9 1)" fill="none" stroke="#4a9c92" stroke-width="3" stroke-linejoin="miter" stroke-miterlimit="6"/>
<path d="M573.4 510.4 L578.3 524.4 L591.7 525.2 L581.3 534.6 L584.7 549.1 L573.4 541.0 L562.1 549.1 L565.5 534.6 L555.1 525.2 L568.5 524.4 Z" fill="none" stroke="#d3c796" stroke-width="2.8" stroke-linejoin="miter" stroke-miterlimit="6"/>
<path d="M573.4 512.4 L577.8 525.1 L589.9 525.8 L580.5 534.4 L583.6 547.5 L573.4 540.1 L563.2 547.5 L566.3 534.4 L556.9 525.8 L569.0 525.1 Z" fill="none" stroke="#8c6d33" stroke-width=".9" stroke-linejoin="miter"/>
<path d="M573.5 503.6 V508" stroke="#d3c796" stroke-width="2"/>
<g filter="url(#glow)"><circle cx="690.1" cy="333.7" r="15.4" fill="none" stroke="#25d6de" stroke-width="2.7"/><circle cx="690.2" cy="333.8" r="5.9" fill="none" stroke="#25d6de" stroke-width="2.7"/></g>
<path d="M692.1 377.3 L694.9 382.2 L700.6 381.4 L696.8 385.7 L699.3 390.8 L694.1 388.4 L690.0 392.4 L690.6 386.7 L685.6 384.1 L691.1 382.9 Z" fill="#e9e4d2" opacity=".75"/>
<path d="M692.5 379.3 L694.8 382.5 L698.8 382.4 L696.5 385.6 L697.8 389.4 L694.0 388.2 L690.9 390.6 L690.9 386.6 L687.6 384.4 L691.3 383.1 Z" fill="#d2a417"/>
<g fill="none" stroke="#d9ccf3" stroke-width="4.9" stroke-linejoin="round"><rect x="692.3" y="359.3" width="20.9" height="20.9" rx="3.4"/><path d="M718.9 370 L724.9 363.4 V376.6 Z"/></g>
<g fill="none" stroke="#6e4bbd" stroke-width="1.5" stroke-linejoin="round"><rect x="692.3" y="359.3" width="20.9" height="20.9" rx="3.4"/><path d="M718.9 370 L724.9 363.4 V376.6 Z"/></g>
<text transform="translate(617.8 529.6) scale(.7545 1)" font-family="Liberation Sans, sans-serif" font-size="20.4" fill="#fff">Hi reader! Welcome back!</text>
<text transform="translate(636.2 547.4) scale(.69 1)" font-family="Liberation Sans, sans-serif" font-size="16.7" fill="#fff">Tap here to enter your name</text>
</svg></div>
<div id="tl"><div style="left:0;top:0;width:1203px;height:39.3px;background:#fff;"></div>
<svg style="left:0;top:0" width="1203" height="40" viewBox="135 603 1203 40">
<rect x="146.5" y="615" width="19.6" height="15.2" fill="#fff" stroke="#777" stroke-width="1.1"/>
<path d="M151.6 620.2 h9.4 l-4.7 5.2 z" fill="none" stroke="#666" stroke-width="1.1" stroke-linejoin="round"/>
<path d="M1199.8 624 h15.6 M1247.8 621 h15.6 M1247.8 627 h15.6 M1295.8 624 h15.6 M1303.6 616.2 v15.6" stroke="#222" stroke-width="1.5" fill="none"/>
</svg>
<span class="" style="left:67.6px;top:12px;font-size:16.1px;color:#111;">Animate</span>
<span class="" style="left:487.5px;top:11.600000000000023px;font-size:16px;color:#111;">Playback Speed</span>
<div class="rbox" style="left:609.6px;top:6.4px;width:88.4px;height:26.2px;border-radius:5px;"></div>
<span class="pm" style="left:618.5px;top:12.5px;">−</span>
<span class="pm" style="left:681px;top:12.5px;">+</span>
<span class="" style="left:644.5px;top:11.600000000000023px;font-size:16px;color:#111;">1x</span>
<div style="left:0;top:39.3px;width:1203px;height:27.6px;background:#ececec;border-top:1.2px solid #a9a9a9;border-bottom:1.2px solid #b5b5b5;"></div>
<span class="" style="left:74.9px;top:46.60000000000002px;font-size:16px;color:#111;">All Nodes</span>
<div style="left:238.5px;top:66.9px;width:965px;height:25.6px;background:#f2f2f2;"></div>
<div style="left:238.5px;top:92.5px;width:965px;height:30.0px;background:#f2f2f2;"></div>
<div style="left:238.5px;top:122.5px;width:965px;height:42.5px;background:#f2f2f2;"></div>
<div style="left:238.5px;top:165.0px;width:965px;height:43.4px;background:#f2f2f2;"></div>
<div style="left:238.5px;top:208.4px;width:965px;height:29.2px;background:#e5e5e5;"></div>
<div style="left:238.5px;top:237.6px;width:965px;height:61.6px;background:#f2f2f2;"></div>
<div style="left:238.5px;top:299.2px;width:965px;height:42.2px;background:#f2f2f2;"></div>
<div style="left:238.5px;top:341.4px;width:965px;height:39.0px;background:#f2f2f2;"></div>
<div style="left:0;top:66.9px;width:238.5px;height:313.5px;background:#ebebeb;"></div>
<div style="left:375.5px;top:66.9px;width:1.6px;height:25.6px;background:#fcfcfc;"></div>
<div style="left:375.5px;top:92.5px;width:1.6px;height:30.0px;background:#fcfcfc;"></div>
<div style="left:375.5px;top:122.5px;width:1.6px;height:42.5px;background:#fcfcfc;"></div>
<div style="left:375.5px;top:165.0px;width:1.6px;height:43.4px;background:#fcfcfc;"></div>
<div style="left:375.5px;top:237.6px;width:1.6px;height:61.6px;background:#fcfcfc;"></div>
<div style="left:375.5px;top:299.2px;width:1.6px;height:42.2px;background:#fcfcfc;"></div>
<div style="left:375.5px;top:341.4px;width:1.6px;height:39.0px;background:#fcfcfc;"></div>
<div style="left:512.5px;top:66.9px;width:1.6px;height:25.6px;background:#fcfcfc;"></div>
<div style="left:512.5px;top:92.5px;width:1.6px;height:30.0px;background:#fcfcfc;"></div>
<div style="left:512.5px;top:122.5px;width:1.6px;height:42.5px;background:#fcfcfc;"></div>
<div style="left:512.5px;top:165.0px;width:1.6px;height:43.4px;background:#fcfcfc;"></div>
<div style="left:512.5px;top:237.6px;width:1.6px;height:61.6px;background:#fcfcfc;"></div>
<div style="left:512.5px;top:299.2px;width:1.6px;height:42.2px;background:#fcfcfc;"></div>
<div style="left:512.5px;top:341.4px;width:1.6px;height:39.0px;background:#fcfcfc;"></div>
<div style="left:649.5px;top:66.9px;width:1.6px;height:25.6px;background:#fcfcfc;"></div>
<div style="left:649.5px;top:92.5px;width:1.6px;height:30.0px;background:#fcfcfc;"></div>
<div style="left:649.5px;top:122.5px;width:1.6px;height:42.5px;background:#fcfcfc;"></div>
<div style="left:649.5px;top:165.0px;width:1.6px;height:43.4px;background:#fcfcfc;"></div>
<div style="left:649.5px;top:237.6px;width:1.6px;height:61.6px;background:#fcfcfc;"></div>
<div style="left:649.5px;top:299.2px;width:1.6px;height:42.2px;background:#fcfcfc;"></div>
<div style="left:649.5px;top:341.4px;width:1.6px;height:39.0px;background:#fcfcfc;"></div>
<div style="left:786.5px;top:66.9px;width:1.6px;height:25.6px;background:#fcfcfc;"></div>
<div style="left:786.5px;top:92.5px;width:1.6px;height:30.0px;background:#fcfcfc;"></div>
<div style="left:786.5px;top:122.5px;width:1.6px;height:42.5px;background:#fcfcfc;"></div>
<div style="left:786.5px;top:165.0px;width:1.6px;height:43.4px;background:#fcfcfc;"></div>
<div style="left:786.5px;top:237.6px;width:1.6px;height:61.6px;background:#fcfcfc;"></div>
<div style="left:786.5px;top:299.2px;width:1.6px;height:42.2px;background:#fcfcfc;"></div>
<div style="left:786.5px;top:341.4px;width:1.6px;height:39.0px;background:#fcfcfc;"></div>
<div style="left:923.5px;top:66.9px;width:1.6px;height:25.6px;background:#fcfcfc;"></div>
<div style="left:923.5px;top:92.5px;width:1.6px;height:30.0px;background:#fcfcfc;"></div>
<div style="left:923.5px;top:122.5px;width:1.6px;height:42.5px;background:#fcfcfc;"></div>
<div style="left:923.5px;top:165.0px;width:1.6px;height:43.4px;background:#fcfcfc;"></div>
<div style="left:923.5px;top:237.6px;width:1.6px;height:61.6px;background:#fcfcfc;"></div>
<div style="left:923.5px;top:299.2px;width:1.6px;height:42.2px;background:#fcfcfc;"></div>
<div style="left:923.5px;top:341.4px;width:1.6px;height:39.0px;background:#fcfcfc;"></div>
<div style="left:1060.5px;top:66.9px;width:1.6px;height:25.6px;background:#fcfcfc;"></div>
<div style="left:1060.5px;top:92.5px;width:1.6px;height:30.0px;background:#fcfcfc;"></div>
<div style="left:1060.5px;top:122.5px;width:1.6px;height:42.5px;background:#fcfcfc;"></div>
<div style="left:1060.5px;top:165.0px;width:1.6px;height:43.4px;background:#fcfcfc;"></div>
<div style="left:1060.5px;top:237.6px;width:1.6px;height:61.6px;background:#fcfcfc;"></div>
<div style="left:1060.5px;top:299.2px;width:1.6px;height:42.2px;background:#fcfcfc;"></div>
<div style="left:1060.5px;top:341.4px;width:1.6px;height:39.0px;background:#fcfcfc;"></div>
<div style="left:1197.5px;top:66.9px;width:1.6px;height:25.6px;background:#fcfcfc;"></div>
<div style="left:1197.5px;top:92.5px;width:1.6px;height:30.0px;background:#fcfcfc;"></div>
<div style="left:1197.5px;top:122.5px;width:1.6px;height:42.5px;background:#fcfcfc;"></div>
<div style="left:1197.5px;top:165.0px;width:1.6px;height:43.4px;background:#fcfcfc;"></div>
<div style="left:1197.5px;top:237.6px;width:1.6px;height:61.6px;background:#fcfcfc;"></div>
<div style="left:1197.5px;top:299.2px;width:1.6px;height:42.2px;background:#fcfcfc;"></div>
<div style="left:1197.5px;top:341.4px;width:1.6px;height:39.0px;background:#fcfcfc;"></div>
<div style="left:238.5px;top:92.5px;width:548.7px;height:30px;background:#e5e5e5;"></div>
<div style="left:0px;top:92px;width:1203px;height:1px;background:#c6c6c6;"></div>
<div style="left:0px;top:122px;width:1203px;height:1px;background:#c6c6c6;"></div>
<div style="left:238.5px;top:165px;width:964.5px;height:1px;background:#c6c6c6;"></div>
<div style="left:0px;top:208px;width:1203px;height:1px;background:#c6c6c6;"></div>
<div style="left:0px;top:237px;width:1203px;height:1px;background:#c6c6c6;"></div>
<div style="left:238.5px;top:299px;width:964.5px;height:1px;background:#c6c6c6;"></div>
<div style="left:238.5px;top:341px;width:964.5px;height:1px;background:#c6c6c6;"></div>
<svg style="left:0;top:39px" width="1203" height="29" viewBox="135 642 1203 29">
<path d="M373.6 643 V669.5" stroke="#b2b2b2" stroke-width="1.4"/>
<path d="M442.1 656.5 V669.5" stroke="#c6c6c6" stroke-width="1.2"/>
<path d="M510.5 651.5 V669.5" stroke="#c6c6c6" stroke-width="1.2"/>
<path d="M579.0 656.5 V669.5" stroke="#c6c6c6" stroke-width="1.2"/>
<path d="M647.4 643 V669.5" stroke="#939393" stroke-width="1.4"/>
<path d="M715.9 656.5 V669.5" stroke="#c6c6c6" stroke-width="1.2"/>
<path d="M784.3 651.5 V669.5" stroke="#c6c6c6" stroke-width="1.2"/>
<path d="M852.8 656.5 V669.5" stroke="#c6c6c6" stroke-width="1.2"/>
<path d="M921.2 643 V669.5" stroke="#939393" stroke-width="1.4"/>
<path d="M989.7 656.5 V669.5" stroke="#c6c6c6" stroke-width="1.2"/>
<path d="M1058.1 651.5 V669.5" stroke="#c6c6c6" stroke-width="1.2"/>
<path d="M1126.6 656.5 V669.5" stroke="#c6c6c6" stroke-width="1.2"/>
<path d="M1195.0 643 V669.5" stroke="#939393" stroke-width="1.4"/>
<path d="M1263.5 656.5 V669.5" stroke="#c6c6c6" stroke-width="1.2"/>
<path d="M1331.9 651.5 V669.5" stroke="#c6c6c6" stroke-width="1.2"/>
<path d="M1400.3 656.5 V669.5" stroke="#c6c6c6" stroke-width="1.2"/>
<path d="M374 646.4 h7.5 q5.2 0 5.2 5.4 q0 10 -12.7 17 z" fill="#fdfdfd" stroke="#8a8a8a" stroke-width="1"/>
<path d="M345 654.2 l3.6 -3.8 l3.6 3.8 M345 659.2 l3.6 3.8 l3.6 -3.8" fill="none" stroke="#222" stroke-width="1.4" stroke-linecap="round" stroke-linejoin="round"/>
</svg>
<span class="" style="left:250.8px;top:44.200000000000045px;font-size:13.3px;color:#555;">0:00</span>
<span class="" style="left:517.0000000000001px;top:44.200000000000045px;font-size:13.3px;color:#555;">00:01</span>
<span class="" style="left:790.8000000000001px;top:44.200000000000045px;font-size:13.3px;color:#555;">00:02</span>
<span class="" style="left:1064.6px;top:44.200000000000045px;font-size:13.3px;color:#555;">00:03</span>
<svg style="left:0;top:66px" width="240" height="175" viewBox="135 669 240 175">
<path d="M145.4 674.2 v11.6 l10 -5.8 z" fill="#8a8a8a"/>
<path d="M144.4 705.2 h11.6 l-5.8 10.6 z" fill="#8a8a8a"/>
<path d="M144.4 820.6 h11.6 l-5.8 10.6 z" fill="#8a8a8a"/>
<defs><radialGradient id="bk" cx="50%" cy="50%" r="60%"><stop offset="0" stop-color="#352d40"/><stop offset="1" stop-color="#120e18"/></radialGradient></defs>
<rect x="164" y="671.4" width="22" height="14.6" fill="url(#bk)"/>
<path d="M164 700.8 h22" stroke="#b0404c" stroke-width="1.2"/><path d="M164 702 h22" stroke="#e9c9cd" stroke-width=".8"/>
<g fill="#dfe7e8"><ellipse cx="171" cy="826" rx="5.6" ry="4.4"/><ellipse cx="177.5" cy="823.8" rx="6" ry="5.2"/><ellipse cx="182.6" cy="826.8" rx="4.6" ry="3.8"/><ellipse cx="176" cy="828" rx="8" ry="3.6"/></g>
</svg>
<span class="rl" style="left:61.900000000000006px;top:69.60000000000002px;">Backing</span>
<span class="rl" style="left:61.900000000000006px;top:99.60000000000002px;">TopCurtain</span>
<span class="rl" style="left:61.900000000000006px;top:214.79999999999995px;">Cloud</span>
<div style="left:238.6px;top:66.6px;width:1.3px;height:172.4px;background:#e27f8b;"></div>
<div class="clip" style="left:238.6px;top:121.8px;width:549.6px;height:43.2px;"></div>
<span class="ct" style="left:242.3px;top:124.0px;">Move</span>
<span class="ct" style="left:715.1px;top:146.20000000000005px;">0x -70y</span>
<div style="left:1057.4px;top:237.4px;width:160px;height:22px;background:#e6e6e6;border:1.2px solid #8c8c8c;border-radius:4px 0 0 0;"></div>
<span class="" style="left:1060.4px;top:239.39999999999998px;font-size:14.6px;color:#444;">Loop</span>
<div style="left:621.6px;top:256.6px;width:216.0px;height:42.4px;background:#2f8cf0;border-radius:3px;"></div>
<span class="" style="left:624.2px;top:258.6px;font-size:14.8px;color:#fff;">Move to</span>
<span class="" style="left:746.6px;top:280.4px;font-size:14.8px;color:#fff;">715x 359y</span>
<div class="clip" style="left:837.4px;top:256.2px;width:76.2px;height:43.2px;"></div>
<div class="clip" style="left:913.2px;top:256.2px;width:145.4px;height:43.2px;"></div>
<div class="clip" style="left:1058.2px;top:256.2px;width:166.8px;height:43.2px;"></div>
<span class="ct" style="left:840.4px;top:258.6px;">Move</span>
<span class="ct" style="left:916.5999999999999px;top:258.6px;">Move</span>
<span class="ct" style="left:1061px;top:258.6px;">Move</span>
<span class="ct" style="left:869.6px;top:280.4px;letter-spacing:.6px;">0...</span>
<span class="ct" style="left:986.4000000000001px;top:280.4px;">0x -10y</span>
<div style="left:0;top:380.4px;width:1203px;height:39.6px;background:#fff;border-top:1.4px solid #a3a3a3;border-bottom:1.2px solid #bcbcbc;"></div>
<div style="left:39.4px;top:384.6px;width:150px;height:30px;background:#fff;border:1px solid #c4c4c4;border-radius:5px;"></div>
<svg style="left:0;top:381px" width="1203" height="74" viewBox="135 984 1203 74">
<path d="M147.2 1002.6 h15 M154.7 995.1 v15" stroke="#5a5a5a" stroke-width="1.2"/>
<circle cx="189.2" cy="1003" r="8.2" fill="none" stroke="#555" stroke-width="1.2"/>
<path d="M183.9 1003.2 a5.3 5.3 0 0 1 10.6 0 z" fill="#8c8c8c"/>
<path d="M1140 1002.8 H1232" stroke="#3b8df1" stroke-width="4.2" stroke-linecap="round"/>
<path d="M1236 1002.8 H1325.6" stroke="#cfcfcf" stroke-width="4.2" stroke-linecap="round"/>
<circle cx="1232.9" cy="1002.8" r="7.4" fill="#fff" stroke="#c9c9c9" stroke-width="1"/>
<rect x="145.6" y="1035.4" width="19.6" height="15.2" fill="none" stroke="#555" stroke-width="1.2"/>
<path d="M151 1046.2 h9 l-4.5 -5.2 z" fill="none" stroke="#555" stroke-width="1.2" stroke-linejoin="round"/>
<path d="M189.6 1036.8 h13.2 l6.6 6.2 l-6.6 6.2 h-13.2 z" fill="#1d7bf0"/>
<rect x="236.6" y="1035.2" width="4.6" height="16" fill="none" stroke="#444" stroke-width="1.3"/>
<rect x="245.6" y="1035.2" width="4.6" height="16" fill="none" stroke="#444" stroke-width="1.3"/>
</svg>
<div style="left:1202.4px;top:0;width:1.4px;height:454px;background:#a8a8a8;"></div></div>
<div id="insp"><span class="" style="left:6.7999999999999545px;top:6.5px;font-weight:bold;font-size:13.8px;color:#222;">Move to</span>
<span class="lbl" style="right:240.5px;top:37.8px;">Start Time</span>
<span class="lbl" style="right:240.5px;top:70.8px;">Duration</span>
<span class="lbl" style="right:240.5px;top:102.8px;">Timing Function</span>
<span class="lbl" style="right:240.5px;top:133.8px;">Position</span>
<div class="fld" style="left:115.2px;top:32.3px;width:212.4px;height:24.1px;"></div>
<span class="val" style="right:26.5px;top:36.8px;">1.396</span>
<div class="stp" style="left:330.6px;top:32.7px;width:12.8px;height:23.5px;"></div>
<svg style="left:332.0px;top:34.3px" width="10" height="20" viewBox="0 0 10 20"><path d="M2 7.6 L5 4.4 L8 7.6 M2 12.4 L5 15.6 L8 12.4" fill="none" stroke="#333" stroke-width="1.2" stroke-linecap="round" stroke-linejoin="round"/></svg>
<div class="fld" style="left:115.2px;top:65.4px;width:212.4px;height:24.2px;"></div>
<span class="val" style="right:26.5px;top:69.9px;">0.789</span>
<div class="stp" style="left:330.6px;top:65.8px;width:12.8px;height:23.6px;"></div>
<svg style="left:332.0px;top:67.5px" width="10" height="20" viewBox="0 0 10 20"><path d="M2 7.6 L5 4.4 L8 7.6 M2 12.4 L5 15.6 L8 12.4" fill="none" stroke="#333" stroke-width="1.2" stroke-linecap="round" stroke-linejoin="round"/></svg>
<div class="rbox" style="left:115.4px;top:98.6px;width:228.4px;height:22.6px;overflow:hidden;"><div style="right:-1px;top:-1px;width:20px;height:22.6px;background:linear-gradient(#63adfc,#1a6df2);"></div></div>
<span class="" style="left:126.20000000000005px;top:102.39999999999998px;font-size:15.2px;color:#222;">Ease In</span>
<svg style="left:329.0px;top:100.9px" width="10" height="18" viewBox="0 0 10 18"><path d="M1.8 6.8 L5 3.6 L8.2 6.8 M1.8 11.2 L5 14.4 L8.2 11.2" fill="none" stroke="#fff" stroke-width="1.5" stroke-linecap="round" stroke-linejoin="round"/></svg>
<div class="rbox" style="left:115.2px;top:128.2px;width:109.4px;height:24.7px;"></div>
<span class="pm" style="left:123.2px;top:133.2px;">−</span>
<span class="pm" style="left:208.3px;top:133.2px;">+</span>
<span class="val" style="left:155.8px;top:133.0px;">715</span>
<div class="rbox" style="left:232.6px;top:128.2px;width:110.6px;height:24.7px;"></div>
<span class="pm" style="left:241.5px;top:133.2px;">−</span>
<span class="pm" style="left:326.4px;top:133.2px;">+</span>
<span class="val" style="left:273.5px;top:133.0px;">359</span>
<span class="" style="left:165.3px;top:154px;font-size:14px;color:#222;">X</span>
<span class="" style="left:284.09999999999997px;top:154px;font-size:14px;color:#222;">Y</span>
<div style="left:0;right:0;top:191.3px;height:1.2px;background:#bdbdbd;"></div></div>
<div id="lib"><svg style="left:0;top:0" width="349" height="40" viewBox="1339 358 349 40">
<path d="M1447.5 369.5 h8 l4.5 4.5 v11.5 h-12.5 z M1455.5 369.5 v4.5 h4.5" fill="none" stroke="#4a4a4a" stroke-width="1.1" stroke-linejoin="round"/>
<path d="M1492.2 369.6 c-2.6 0 -3 .9 -3 2.6 v2.6 c0 1.6 -.6 2.4 -1.9 2.7 c1.3 .3 1.9 1.1 1.9 2.7 v2.6 c0 1.7 .4 2.6 3 2.6 M1497.2 369.6 c2.6 0 3 .9 3 2.6 v2.6 c0 1.6 .6 2.4 1.9 2.7 c-1.3 .3 -1.9 1.1 -1.9 2.7 v2.6 c0 1.7 -.4 2.6 -3 2.6" fill="none" stroke="#4a4a4a" stroke-width="1.1" stroke-linecap="round"/>
<circle cx="1535.4" cy="377.5" r="9" fill="none" stroke="#1f74e8" stroke-width="2.3"/>
<rect x="1532.2" y="374.3" width="6.4" height="6.4" fill="none" stroke="#1f74e8" stroke-width="1.5"/>
<rect x="1568" y="370.5" width="17.4" height="14" fill="none" stroke="#4a4a4a" stroke-width="1.1"/>
<path d="M1571.8 370.5 v14 M1581.6 370.5 v14" stroke="#4a4a4a" stroke-width="1"/>
<path d="M1569.6 373.4 h1.2 M1569.6 377.5 h1.2 M1569.6 381.6 h1.2 M1582.8 373.4 h1.2 M1582.8 377.5 h1.2 M1582.8 381.6 h1.2" stroke="#4a4a4a" stroke-width="1.6"/>
</svg>
<div style="left:0;right:0;top:39.0px;height:1.2px;background:#c4c4c4;"></div>
<div class="sep" style="top:118.8px;"></div>
<div class="sep" style="top:205.0px;"></div>
<div class="sep" style="top:291.4px;"></div>
<div class="sep" style="top:377.6px;"></div>
<div class="sep" style="top:463.8px;"></div>
<div class="sep" style="top:550.3px;"></div>
<div class="sep" style="top:636.9px;"></div>
<div class="it" style="left:81.8px;top:50.5px;width:268px;white-space:nowrap;"><b>RotateToAngle Action</b> - Create an<br>action to rotate an SKNode to an<br>angle.</div>
<div class="it" style="left:81.8px;top:144.7px;width:268px;white-space:nowrap;"><b>FadeOut Action</b> - Create an action<br>to fade an SKNode out.</div>
<div class="it" style="left:81.8px;top:230.9px;width:268px;white-space:nowrap;"><b>FadeIn Action</b> - Create an action to<br>fade an SKNode in.</div>
<div class="it" style="left:81.8px;top:317.3px;width:268px;white-space:nowrap;"><b>Hide Action</b> - Create an action to<br>hide an SKNode out.</div>
<div class="it" style="left:81.8px;top:403.5px;width:268px;white-space:nowrap;"><b>Unhide Action</b> - Create an action to<br>unhide an SKNode in.</div>
<div class="it" style="left:81.8px;top:480.7px;width:268px;white-space:nowrap;"><b>FadeAlphaTo Action</b> - Create an<br>action to fade an SKNode to an alpha<br>value.</div>
<div class="it" style="left:81.8px;top:567.2px;width:268px;white-space:nowrap;"><b>PlaySoundFileNamed Action</b> -<br>Create an action to play the named<br>sound file.</div>
<div class="it" style="left:81.8px;top:653.8px;width:268px;white-space:nowrap;"><b>AnimateWithTextures Action</b> -<br>Create an action to animate with<br>textures.</div>
<svg style="left:0;top:0" width="349" height="666" viewBox="1339 358 349 666">
<g fill="none" stroke="#e2661a" stroke-width="2.5" stroke-linecap="round">
<path d="M1367.2 415.2 A26 26 0 1 0 1406.2 438.6"/>
<path d="M1395.8 444.8 L1405.6 434.4 L1413 444.2" stroke-linejoin="miter"/>
<path d="M1379.7 402.4 v30" stroke-dasharray="7 4.4" stroke-width="2.6" stroke-linecap="butt"/>
<path d="M1385 432.6 L1409.6 419.2" stroke-dasharray="7 4.4" stroke-width="2.6" stroke-linecap="butt"/>
</g><circle cx="1379.6" cy="436.8" r="3" fill="#e2661a"/>
<path d="M1355.3 520.6 A25.6 25.6 0 0 1 1406.5 520.6" fill="none" stroke="#1f66a3" stroke-width="2.8"/><path d="M1406.5 520.6 A25.6 25.6 0 0 1 1355.3 520.6" fill="none" stroke="#1f66a3" stroke-width="2.8" stroke-dasharray="6.52 4.35" stroke-dashoffset="-4.35"/>
<path d="M1406.5 606.9 A25.6 25.6 0 0 1 1355.3 606.9" fill="none" stroke="#1f66a3" stroke-width="2.8"/><path d="M1355.3 606.9 A25.6 25.6 0 0 1 1406.5 606.9" fill="none" stroke="#1f66a3" stroke-width="2.8" stroke-dasharray="6.52 4.35" stroke-dashoffset="-4.35"/>
<path d="M1355.3 693.0 A25.6 25.6 0 0 1 1406.5 693.0" fill="none" stroke="#1f66a3" stroke-width="2.8"/><path d="M1406.5 693.0 A25.6 25.6 0 0 1 1355.3 693.0" fill="none" stroke="#1f66a3" stroke-width="2.8" stroke-dasharray="6.52 4.35" stroke-dashoffset="-4.35"/>
<path d="M1406.5 779.3 A25.6 25.6 0 0 1 1355.3 779.3" fill="none" stroke="#1f66a3" stroke-width="2.8"/><path d="M1355.3 779.3 A25.6 25.6 0 0 1 1406.5 779.3" fill="none" stroke="#1f66a3" stroke-width="2.8" stroke-dasharray="6.52 4.35" stroke-dashoffset="-4.35"/>
<path d="M1355.3 865.5 A25.6 25.6 0 0 1 1406.5 865.5" fill="none" stroke="#1f66a3" stroke-width="2.8"/><path d="M1406.5 865.5 A25.6 25.6 0 0 1 1355.3 865.5" fill="none" stroke="#1f66a3" stroke-width="2.8" stroke-dasharray="6.52 4.35" stroke-dashoffset="-4.35"/>
<path d="M1380.9 882.5 V847.5 M1373 855.2 L1380.9 847.2 L1388.8 855.2" fill="none" stroke="#7b7b7b" stroke-width="2.1" stroke-linecap="round" stroke-linejoin="round"/>
<g fill="none" stroke="#6a3fae" stroke-width="2.1" stroke-linecap="round" stroke-linejoin="round">
<path d="M1351.6 944.6 h11 l11 -9.6 v33.6 l-11 -9.6 h-11 z" stroke-linejoin="miter"/>
<path d="M1382.6 941.5 a15 15 0 0 1 0 20.4"/>
<path d="M1391.2 934 a25 25 0 0 1 0 35.6"/>
<path d="M1400.4 928.2 a33 33 0 0 1 0 47.6"/>
</g>
<rect x="1351.8" y="1010" width="58" height="30" fill="none" stroke="#6a3fae" stroke-width="2.4"/>
</svg>
<div style="left:0;right:0;top:665.0px;height:40px;background:#fff;border-top:1px solid #c2c2c2;"></div>
<div style="left:38.0px;top:670.8px;width:309px;height:40px;border:1px solid #c6c6c6;border-radius:5px;background:#fff;"></div>
<svg style="left:0;top:666px" width="349" height="34" viewBox="1339 1024 349 34">
<g fill="none" stroke="#6e6e6e" stroke-width="1.1"><rect x="1349.3" y="1034.8" width="6.6" height="6.6"/><rect x="1359.2" y="1034.8" width="6.6" height="6.6"/><rect x="1349.3" y="1044.7" width="6.6" height="6.6"/><rect x="1359.2" y="1044.7" width="6.6" height="6.6"/>
<circle cx="1392.2" cy="1043" r="8" stroke="#555" stroke-width="1.2"/></g>
<path d="M1387 1043.2 a5.2 5.2 0 0 1 10.4 0 z" fill="#8c8c8c"/></svg></div>
<svg style="left:0;top:380px" width="240" height="230" viewBox="0 380 240 230"><path d="M17.7 417.4 L156.8 558.5 L139.9 561.8 L181.4 576.4 L167.4 534.7 L163.9 551.5 L24.9 410.4 Z" fill="#ff6b0c"/></svg>
<div style="left:271.2px;top:842.2px;width:461.6px;height:244.6px;background:#f2f2f2;box-shadow:0 9px 26px 3px rgba(0,0,0,.40);overflow:hidden;">
<div style="left:0.0px;top:60.8px;width:461.6px;height:40.4px;background:#e6e6e6;"></div>
<div style="left:159.2px;top:0.0px;width:2.0px;height:60.8px;background:#fbfbfb;"></div>
<div style="left:159.2px;top:101.2px;width:2.0px;height:143.6px;background:#fbfbfb;"></div>
<div style="left:350.3px;top:0.0px;width:2.0px;height:60.8px;background:#fbfbfb;"></div>
<div style="left:350.3px;top:101.2px;width:2.0px;height:143.6px;background:#fbfbfb;"></div>
<div style="left:0.0px;top:60.1px;width:461.6px;height:1.5px;background:#cecece;"></div>
<div style="left:0.0px;top:100.5px;width:461.6px;height:1.5px;background:#cecece;"></div>
<div style="left:0.0px;top:185.5px;width:461.6px;height:1.5px;background:#cecece;"></div>
<div style="left:0.0px;top:0.0px;width:349.3px;height:1.2px;background:#cf5163;"></div>
<div style="left:120.9px;top:128.0px;width:301.9px;height:58.4px;background:#2f8cf0;border-radius:4.5px;"></div>
<span class="" style="left:125.5px;top:129.79999999999995px;font-size:20.5px;color:#fff;letter-spacing:.2px;">Move to</span>
<span class="" style="left:296.40000000000003px;top:160.79999999999995px;font-size:20.3px;color:#fff;">715x 359y</span>
<svg style="left:126.80000000000001px;top:157.79999999999995px" width="26" height="26" viewBox="398 1000 26 26"><path d="M415.6 1005.5 A9 9 0 1 1 405.2 1005.5" fill="none" stroke="#fff" stroke-width="1.5" stroke-linecap="round"/><path d="M402.4 1004.5 L406.9 1004.3 L405.3 1008.5" fill="none" stroke="#fff" stroke-width="1.4" stroke-linecap="round" stroke-linejoin="round"/></svg>
</div>
<svg style="left:290px;top:865px;overflow:visible" width="260" height="150" viewBox="290 865 260 150">
<defs><filter id="psh" x="-20%" y="-20%" width="140%" height="150%"><feDropShadow dx="0" dy="3" stdDeviation="5" flood-color="#000" flood-opacity=".32"/></filter></defs>
<path filter="url(#psh)" d="M320.8 883.9 H515 a10 10 0 0 1 10 10 V959.5 a10 10 0 0 1 -10 10 H443.5 C434 969.8 428.5 978 422.5 988.6 Q417.7 996.4 412.9 988.6 C406.9 978 401.4 969.8 391.9 969.5 H320.8 a10 10 0 0 1 -10 -10 V893.9 a10 10 0 0 1 10 -10 Z" fill="#ededed" fill-opacity=".97" stroke="#b9b9b9" stroke-width=".9"/>
<g fill="#fdfdfd" stroke="none">
<rect x="317.2" y="928.4" width="39.5" height="33.6" rx="6.5"/><rect x="362.9" y="928.4" width="35.8" height="33.6" rx="6.5"/><rect x="404.7" y="928.4" width="36.3" height="33.6" rx="6.5"/><rect x="483" y="928.4" width="35.8" height="33.6" rx="6.5"/></g>
<path d="M336.9 945.2 c-2.6 -4.6 -5.2 -5.6 -7.4 -5.6 a5.4 5.4 0 0 0 0 10.8 c2.2 0 4.8 -1 7.4 -5.2 c2.6 -4.6 5.2 -5.6 7.4 -5.6 a5.4 5.4 0 0 1 0 10.8 c-2.2 0 -4.8 -1 -7.4 -5.2 z" fill="none" stroke="#555" stroke-width="1.5"/>
<path d="M370.4 945 h21" stroke="#c4c4c4" stroke-width="1.4"/>
<path d="M412.2 945 h21 M422.7 934.5 v21" stroke="#555" stroke-width="1.5"/>
<path d="M491.6 935.4 l18.6 19.2 M510.2 935.4 l-18.6 19.2" stroke="#555" stroke-width="1.5"/>
</svg>
<span class="" style="left:376.2px;top:894.6px;font-size:20.8px;font-weight:bold;color:#666;">Looping</span>
<svg style="left:640px;top:880px" width="140" height="110" viewBox="640 880 140 110"><path d="M660.2 977.6 L743.2 919.8 L743.6 937.0 L765.0 898.6 L721.6 905.3 L737.5 911.6 L654.4 969.4 Z" fill="#0d8fb4"/></svg>
</body></html>
